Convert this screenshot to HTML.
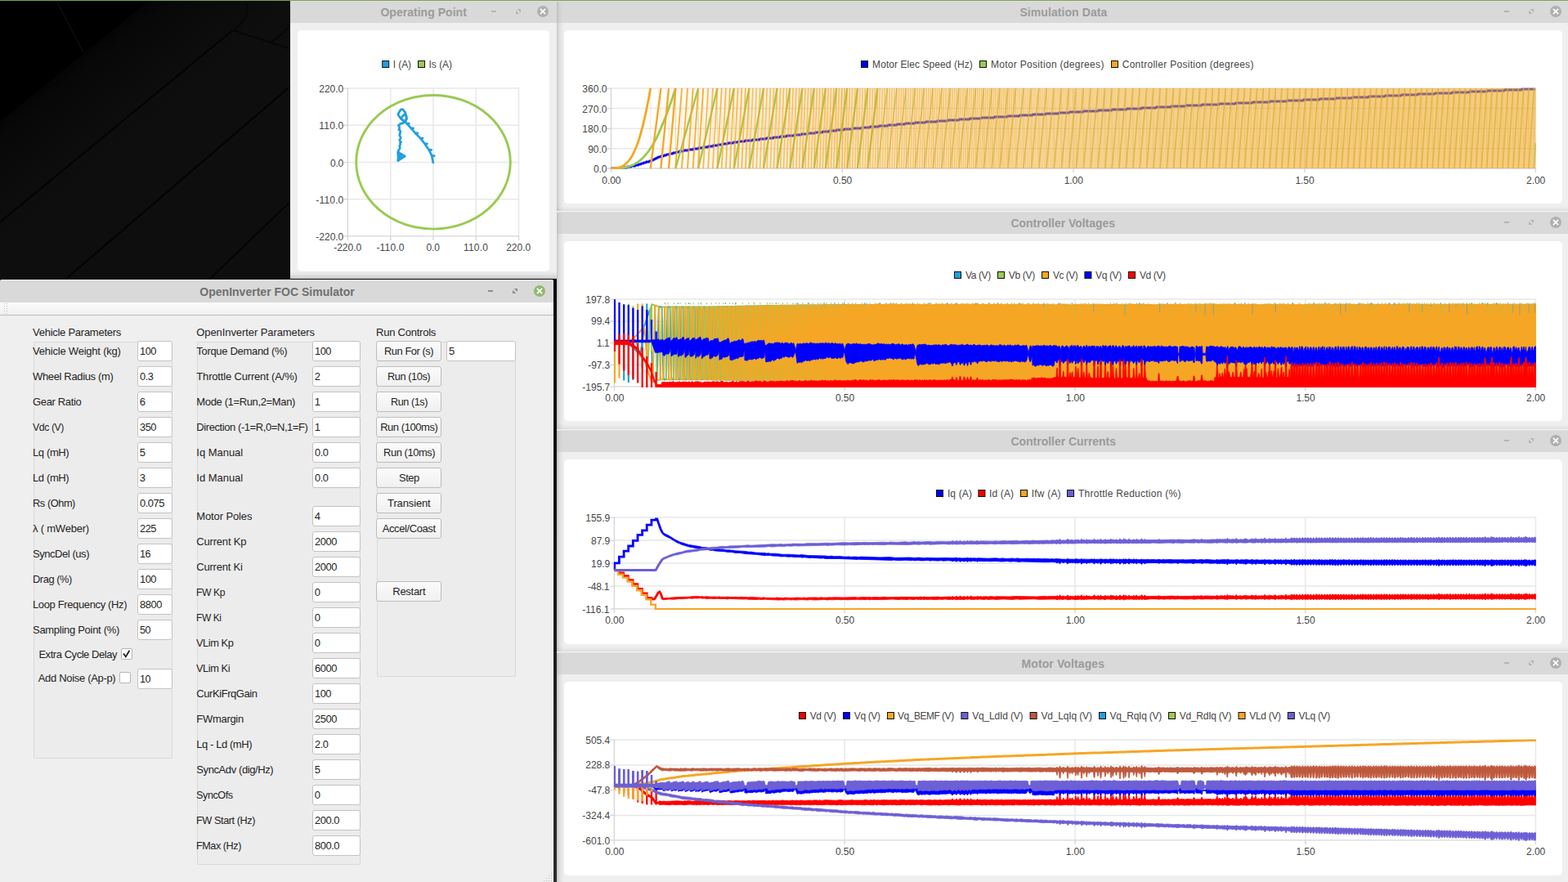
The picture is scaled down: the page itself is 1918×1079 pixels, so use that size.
<!DOCTYPE html>
<html lang="en"><head><meta charset="utf-8"><title>OpenInverter FOC Simulator</title>
<style>
html,body{margin:0;padding:0;background:#000;}
body{width:1918px;height:1079px;overflow:hidden;position:relative;font-family:"Liberation Sans", sans-serif;}
.t{position:absolute;white-space:nowrap;line-height:16px;height:16px;font-size:13px;color:#1e1e1e;transform-origin:0 50%;}
.in{position:absolute;box-sizing:border-box;background:#fff;border:1px solid #c3c3c3;border-radius:3px;}
.btn{position:absolute;box-sizing:border-box;background:linear-gradient(#fbfbfb,#f0f0f0);border:1px solid #bcbcbc;border-radius:3px;}
.grp{position:absolute;box-sizing:border-box;background:#ececec;border:1px solid #d9d9d9;border-radius:2px;}
svg{position:absolute;left:0;top:0;overflow:visible;}
</style></head>
<body>
<svg width="1918" height="1079" viewBox="0 0 1918 1079"><defs><linearGradient id="wg" gradientUnits="userSpaceOnUse" x1="60" y1="60" x2="150" y2="170"><stop offset="0" stop-color="#000"/><stop offset="0.35" stop-color="#080808"/><stop offset="1" stop-color="#0e0e0e"/></linearGradient></defs><rect x="0" y="0" width="1918" height="1079" fill="#000"/><path d="M182 1 L356 1 L356 342 L0 342 L0 149 Z" fill="url(#wg)"/><path d="M0 272 L285 37" stroke="#040404" stroke-width="2.4" fill="none"/><path d="M80 342 L356 105" stroke="#040404" stroke-width="2.4" fill="none"/><path d="M256 342 L356 246" stroke="#040404" stroke-width="2.4" fill="none"/><path d="M1 273.5 L286 38.5 M81 343.5 L357 106.5 M257 343.5 L357 247.5" stroke="#141414" stroke-width="0.8" fill="none"/><path d="M69 1 L102 64" stroke="#1a1a1a" stroke-width="0.8" fill="none"/><path d="M285 37 Q310 20 300 1 M285 37 L356 60 M330 52 Q350 40 356 28" stroke="#070707" stroke-width="2" fill="none"/></svg>
<div style="position:absolute;left:676px;top:341px;width:6px;height:738px;background:linear-gradient(#0b0b0b,#141414 40%,#2c2c2c);"></div>
<div style="position:absolute;left:355px;top:341px;width:330px;height:1px;background:#050505;"></div>
<div style="position:absolute;left:681px;top:1px;width:1237px;height:1078px;background:#efefef;"></div>
<div style="position:absolute;left:355px;top:1px;width:326px;height:340px;background:#efefef;"></div>
<div style="position:absolute;left:355px;top:331px;width:326px;height:10px;background:linear-gradient(rgba(0,0,0,0),rgba(0,0,0,0.04) 45%,rgba(0,0,0,0.17));"></div>
<div style="position:absolute;left:681px;top:1px;width:9px;height:1078px;background:linear-gradient(90deg,rgba(0,0,0,0.18),rgba(0,0,0,0.08) 30%,rgba(0,0,0,0.02) 75%,rgba(0,0,0,0) 100%);"></div>
<div style="position:absolute;left:355px;top:1px;width:326px;height:27px;background:#d9d9d9;box-shadow:inset 0 1px 0 #dfdfdf;"></div>
<div style="position:absolute;left:681px;top:1px;width:1237px;height:27px;background:#d9d9d9;box-shadow:inset 0 1px 0 #dfdfdf;background:linear-gradient(90deg,#bdbdbd 0,#d2d2d2 3px,#d9d9d9 8px);"></div>
<div style="position:absolute;left:681px;top:259px;width:1237px;height:27px;background:#d9d9d9;box-shadow:inset 0 1px 0 #dfdfdf;background:linear-gradient(90deg,#bdbdbd 0,#d2d2d2 3px,#d9d9d9 8px);"></div>
<div style="position:absolute;left:681px;top:526px;width:1237px;height:27px;background:#d9d9d9;box-shadow:inset 0 1px 0 #dfdfdf;background:linear-gradient(90deg,#bdbdbd 0,#d2d2d2 3px,#d9d9d9 8px);"></div>
<div style="position:absolute;left:681px;top:798px;width:1237px;height:27px;background:#d9d9d9;box-shadow:inset 0 1px 0 #dfdfdf;background:linear-gradient(90deg,#bdbdbd 0,#d2d2d2 3px,#d9d9d9 8px);"></div>
<div style="position:absolute;left:681px;top:251px;width:1237px;height:7px;background:linear-gradient(rgba(0,0,0,0),rgba(0,0,0,0.025) 50%,rgba(0,0,0,0.075));"></div>
<div style="position:absolute;left:681px;top:258px;width:1237px;height:1px;background:#f4f4f4;"></div>
<div style="position:absolute;left:681px;top:518px;width:1237px;height:7px;background:linear-gradient(rgba(0,0,0,0),rgba(0,0,0,0.025) 50%,rgba(0,0,0,0.075));"></div>
<div style="position:absolute;left:681px;top:525px;width:1237px;height:1px;background:#f4f4f4;"></div>
<div style="position:absolute;left:681px;top:790px;width:1237px;height:7px;background:linear-gradient(rgba(0,0,0,0),rgba(0,0,0,0.025) 50%,rgba(0,0,0,0.075));"></div>
<div style="position:absolute;left:681px;top:797px;width:1237px;height:1px;background:#f4f4f4;"></div>
<div style="position:absolute;left:364px;top:37px;width:308px;height:295px;background:#fff;border-radius:5px;"></div>
<div style="position:absolute;left:690px;top:37px;width:1221px;height:212px;background:#fff;border-radius:5px;"></div>
<div style="position:absolute;left:690px;top:295px;width:1221px;height:220px;background:#fff;border-radius:5px;"></div>
<div style="position:absolute;left:690px;top:562px;width:1221px;height:226px;background:#fff;border-radius:5px;"></div>
<div style="position:absolute;left:690px;top:834px;width:1221px;height:237px;background:#fff;border-radius:5px;"></div>
<div style="position:absolute;left:0px;top:342px;width:677px;height:737px;background:#efefef;box-shadow:inset -1px 0 0 #fbfbfb;border-radius:3px 3px 0 0;"></div>
<div style="position:absolute;left:0px;top:342px;width:677px;height:28px;background:#d9d9d9;box-shadow:inset 0 1px 0 #ececec;border-radius:3px 3px 0 0;"></div>
<div style="position:absolute;left:0px;top:370px;width:677px;height:15px;background:linear-gradient(#fafafa,#f1f1f1);"></div>
<div style="position:absolute;left:0px;top:385px;width:677px;height:1px;background:#bdbdbd;"></div>
<svg width="1918" height="1079" viewBox="0 0 1918 1079"><rect x="5" y="371" width="1" height="1" fill="#c2c2c2"/><rect x="5" y="374" width="1" height="1" fill="#c2c2c2"/><rect x="5" y="377" width="1" height="1" fill="#c2c2c2"/><rect x="5" y="380" width="1" height="1" fill="#c2c2c2"/><rect x="5" y="383" width="1" height="1" fill="#c2c2c2"/><rect x="8" y="371" width="1" height="1" fill="#c2c2c2"/><rect x="8" y="374" width="1" height="1" fill="#c2c2c2"/><rect x="8" y="377" width="1" height="1" fill="#c2c2c2"/><rect x="8" y="380" width="1" height="1" fill="#c2c2c2"/><rect x="8" y="383" width="1" height="1" fill="#c2c2c2"/><rect x="674" y="1077" width="1" height="1" fill="#bcbcbc"/><rect x="674" y="1074" width="1" height="1" fill="#bcbcbc"/><rect x="674" y="1071" width="1" height="1" fill="#bcbcbc"/><rect x="674" y="1068" width="1" height="1" fill="#bcbcbc"/><rect x="671" y="1077" width="1" height="1" fill="#bcbcbc"/><rect x="671" y="1074" width="1" height="1" fill="#bcbcbc"/><rect x="671" y="1071" width="1" height="1" fill="#bcbcbc"/><rect x="668" y="1077" width="1" height="1" fill="#bcbcbc"/><rect x="668" y="1074" width="1" height="1" fill="#bcbcbc"/><rect x="665" y="1077" width="1" height="1" fill="#bcbcbc"/></svg>
<div class="t" id="t1" style="left:465.4px;top:6.95px;font-size:14px;color:#9b9b9b;letter-spacing:0.029px;font-weight:bold;">Operating Point</div>
<div class="t" id="t2" style="left:1247.4px;top:6.95px;font-size:14px;color:#9b9b9b;letter-spacing:0.079px;font-weight:bold;">Simulation Data</div>
<div class="t" id="t3" style="left:1236.5px;top:264.95px;font-size:14px;color:#9b9b9b;letter-spacing:-0.033px;font-weight:bold;">Controller Voltages</div>
<div class="t" id="t4" style="left:1236.5px;top:531.85px;font-size:14px;color:#9b9b9b;letter-spacing:-0.035px;font-weight:bold;">Controller Currents</div>
<div class="t" id="t5" style="left:1249.5px;top:803.95px;font-size:14px;color:#9b9b9b;letter-spacing:0.109px;font-weight:bold;">Motor Voltages</div>
<div class="t" id="t6" style="left:244.3px;top:348.95px;font-size:14px;color:#6f6f6f;letter-spacing:0.014px;font-weight:bold;">OpenInverter FOC Simulator</div>
<svg width="1918" height="1079" viewBox="0 0 1918 1079"><rect x="600.9" y="13" width="6" height="2" fill="#b4b4b4"/><path d="M632.7 11 h4.3 v4.3z M635.3 17 h-4.3 v-4.3z" fill="#b4b4b4"/><circle cx="664" cy="14" r="7" fill="#b0b0b0"/><path d="M660.9 10.9 l6.2 6.2 M667.1 10.9 l-6.2 6.2" stroke="#fff" stroke-width="1.6" fill="none"/><rect x="1839.9" y="13" width="6" height="2" fill="#b4b4b4"/><path d="M1871.7 11 h4.3 v4.3z M1874.3 17 h-4.3 v-4.3z" fill="#b4b4b4"/><circle cx="1903" cy="14" r="7" fill="#b0b0b0"/><path d="M1899.9 10.9 l6.2 6.2 M1906.1 10.9 l-6.2 6.2" stroke="#fff" stroke-width="1.6" fill="none"/><rect x="1839.9" y="271" width="6" height="2" fill="#b4b4b4"/><path d="M1871.7 269 h4.3 v4.3z M1874.3 275 h-4.3 v-4.3z" fill="#b4b4b4"/><circle cx="1903" cy="272" r="7" fill="#b0b0b0"/><path d="M1899.9 268.9 l6.2 6.2 M1906.1 268.9 l-6.2 6.2" stroke="#fff" stroke-width="1.6" fill="none"/><rect x="1839.9" y="538" width="6" height="2" fill="#b4b4b4"/><path d="M1871.7 536 h4.3 v4.3z M1874.3 542 h-4.3 v-4.3z" fill="#b4b4b4"/><circle cx="1903" cy="539" r="7" fill="#b0b0b0"/><path d="M1899.9 535.9 l6.2 6.2 M1906.1 535.9 l-6.2 6.2" stroke="#fff" stroke-width="1.6" fill="none"/><rect x="1839.9" y="810" width="6" height="2" fill="#b4b4b4"/><path d="M1871.7 808 h4.3 v4.3z M1874.3 814 h-4.3 v-4.3z" fill="#b4b4b4"/><circle cx="1903" cy="811" r="7" fill="#b0b0b0"/><path d="M1899.9 807.9 l6.2 6.2 M1906.1 807.9 l-6.2 6.2" stroke="#fff" stroke-width="1.6" fill="none"/><rect x="597" y="355" width="6" height="2" fill="#8c8c8c"/><path d="M628.7 353 h4.3 v4.3z M631.3 359 h-4.3 v-4.3z" fill="#8c8c8c"/><circle cx="660" cy="356" r="7" fill="#92b872"/><path d="M656.9 352.9 l6.2 6.2 M663.1 352.9 l-6.2 6.2" stroke="#fff" stroke-width="1.6" fill="none"/></svg>
<div style="position:absolute;left:0px;top:0px;width:1918px;height:1px;background:#7ea24e;"></div>
<svg width="1918" height="1079" viewBox="0 0 1918 1079"><path d="M425.5 108.1H635M425.5 153.3H635M425.5 198.6H635M425.5 243.8H635M477.8 108V289.5M530 108V289.5M582.2 108V289.5M634.5 108V289.5" stroke="#e8e8e8" stroke-width="1.5" fill="none"/>
<path d="M425.4 107.5V294M420.5 288.9H635.1M420.2 108.1h5M420.2 153.3h5M420.2 198.6h5M420.2 243.8h5M477.8 289v5M530 289v5M582.2 289v5M634.5 289v5" stroke="#d6d6d6" stroke-width="1.4" fill="none"/>
<clipPath id="c0"><rect x="424.7" y="107.5" width="210.5" height="182.4"/></clipPath>
<g clip-path="url(#c0)" fill="none" stroke-width="2" stroke-linejoin="round">
<path d="M529.8 198.9l-1.6-8.5l3 0.2l-2.4 0.7l-0.6-0.9l-3.6-7.2l3 0.2l-2.4 0.7l-0.6-0.9l-5.2-7.5l3 0.2l-2.4 0.7l-0.6-0.9l-5.4-6.8l3 0.2l-2.4 0.7l-0.6-0.9l-6.1-6.2l3 0.2l-2.4 0.7l-0.6-0.9l-5.3-6.1l3 0.2l-2.4 0.7l-0.6-0.9l-5.2-5.7l3 0.2l-2.4 0.7l-0.6-0.9l-3.5-3l-3.5-3.5l5-5.2l2.4 5.8l-3.2 3.6l-4.3-3.4l-3.5-5.2l3.4-6l2.2-0.4l3.2 3.8l1.7 5.2l-0.9 5.7l-3.2 2.1l-3.6 1.2l-2.2 2h0.4l0.7 1.6l0.2 1.7l-0.9 1.7l1.9 1.4l0.1 1.4l-0.6 1.1l0.3 1.1l-0.9 1.4l0.5 1.1l0.9 1.7l0.1 1.1l-0.3 1l-1.1 1l0.5 1.7l1.4 1.1l-1.2 1.7l0.2 1.7l-0.9 1.5l0.5 1.8l-0.1 1.7l-1.3 1.2l-0.5 1.1l0.2 0.9l-0.7 1.5l0.5 1.5l0.9 1.2l-1 1.3l0.7 1.3l0.5 1l-0.4 0.9l-1.4 1.7l0.8 0.7l-0.8-10.4l8.7 5.2l-8.5 5.4l3.2-7.6l-3 4l5-1.5l-4.8 4.5" stroke="#209fdf" stroke-width="2.7" stroke-linejoin="round" stroke-linecap="round"/>
<path d="M486.4 197.2L486.4 185.4L496 191.2z" fill="#209fdf" stroke="none"/>
<ellipse cx="530" cy="198.3" rx="94.3" ry="81.8" stroke="#99ca53" stroke-width="2.9"/>
</g>
<rect x="467.7" y="74.5" width="8" height="8" fill="#209fdf" stroke="#111" stroke-width="1"/>
<rect x="511.5" y="74.5" width="8" height="8" fill="#99ca53" stroke="#111" stroke-width="1"/></svg>
<div class="t" id="t7" style="left:480.7px;top:70.64px;font-size:12px;color:#464646;letter-spacing:-0.068px;">I (A)</div>
<div class="t" id="t8" style="left:524.5px;top:70.64px;font-size:12px;color:#464646;letter-spacing:-0.014px;">Is (A)</div>
<div class="t" id="t9" style="left:390.26px;top:100.64px;font-size:12px;color:#464646;letter-spacing:0.002px;">220.0</div>
<div class="t" id="t10" style="left:390.26px;top:146.19px;font-size:12px;color:#464646;letter-spacing:0.225px;">110.0</div>
<div class="t" id="t11" style="left:403.98px;top:191.84px;font-size:12px;color:#464646;letter-spacing:-0.184px;">0.0</div>
<div class="t" id="t12" style="left:386.36px;top:237.09px;font-size:12px;color:#464646;letter-spacing:0.16px;">-110.0</div>
<div class="t" id="t13" style="left:386.36px;top:281.84px;font-size:12px;color:#464646;letter-spacing:-0.018px;">-220.0</div>
<div class="t" id="t14" style="left:408.23px;top:295.44px;font-size:12px;color:#464646;letter-spacing:-0.018px;">-220.0</div>
<div class="t" id="t15" style="left:460.48px;top:295.44px;font-size:12px;color:#464646;letter-spacing:0.16px;">-110.0</div>
<div class="t" id="t16" style="left:521.54px;top:295.44px;font-size:12px;color:#464646;letter-spacing:-0.184px;">0.0</div>
<div class="t" id="t17" style="left:566.93px;top:295.44px;font-size:12px;color:#464646;letter-spacing:0.225px;">110.0</div>
<div class="t" id="t18" style="left:619.18px;top:295.44px;font-size:12px;color:#464646;letter-spacing:0.002px;">220.0</div>
<svg width="1918" height="1079" viewBox="0 0 1918 1079"><path d="M747.6 108.1H1878.9M747.6 132.6H1878.9M747.6 157.2H1878.9M747.6 181.7H1878.9M1030.3 108V206.6M1313 108V206.6M1595.7 108V206.6M1878.4 108V206.6" stroke="#e8e8e8" stroke-width="1.5" fill="none"/>
<path d="M747.5 107.5V211.1M742.6 206H1879M742.3 108.1h5M742.3 132.6h5M742.3 157.2h5M742.3 181.7h5M1030.3 206.1v5M1313 206.1v5M1595.7 206.1v5M1878.4 206.1v5" stroke="#d6d6d6" stroke-width="1.4" fill="none"/>
<clipPath id="c1"><rect x="746.8" y="107.5" width="1132.3" height="99.5"/></clipPath>
<g clip-path="url(#c1)" fill="none" stroke-width="2" stroke-linejoin="round">
<path d="M747.6 206h1h1h1h1h1h1h1h1h1h1h1h1l1-1h1h1h1h1h1h1l1-1h1h1h1h1l1-1h1h1h1h1l1-1h1h1h1l1-1h1h1l1-1h1h1l1-1h1h1l1-1h1h1h1l1-1h1h1l1-1h1l1-1h1l1-1h1l1-1h1l1-1h1h1l1-1h1h1h1l1-1h1h1l1-1h1h1h1l1-1h1h1h1l1-1h1h1h1l1-1h1h1h1l1-1h1h1h1h1l1-1h1h1h1h1h1l1-1h1h1h1h1h1l1-1h1h1h1h1h1l1-1h1h1h1h1h1l1-1h1h1h1h1h1l1-1h1h1h1h1h1l1-1h1h1h1h1h1l1-1h1h1h1h1h1l1-1h1h1h1h1h1l1-1h1h1h1h1h1h1l1-1h1h1h1h1h1l1-1h1h1h1h1h1h1h1l1-1h1h1h1h1h1h1h1h1l1-1h1h1h1h1h1h1h1h1l1-1h1h1h1h1h1h1h1l1-1h1h1h1h1h1h1h1h1l1-1h1h1h1h1h1h1h1l1-1h1h1h1h1h1h1h1l1-1h1h1h1h1h1h1h1h1l1-1h1h1h1h1h1h1h1h1l1-1h1h1h1h1h1h1h1l1-1h1h1h1h1h1h1h1h1l1-1h1h1h1h1h1h1h1h1l1-1h1h1h1h1h1h1h1l1-1h1h1h1h1h1h1h1h1l1-1h1h1h1h1h1h1h1h1l1-1h1h1h1h1h1h1h1h1h1h1l1-1h1h1h1h1h1h1h1h1h1h1l1-1h1h1h1h1h1h1h1h1h1l1-1h1h1h1h1h1h1h1h1h1h1l1-1h1h1h1h1h1h1h1h1h1h1l1-1h1h1h1h1h1h1h1h1h1h1l1-1h1h1h1h1h1h1h1h1h1l1-1h1h1h1h1h1h1h1h1h1h1h1l1-1h1h1h1h1h1h1h1h1h1h1h1h1l1-1h1h1h1h1h1h1h1h1h1h1h1h1h1l1-1h1h1h1h1h1h1h1h1h1h1h1h1l1-1h1h1h1h1h1h1h1h1h1h1h1h1h1l1-1h1h1h1h1h1h1h1h1h1h1h1h1l1-1h1h1h1h1h1h1h1h1h1h1h1h1h1l1-1h1h1h1h1h1h1h1h1h1h1h1h1h1h1h1l1-1h1h1h1h1h1h1h1h1h1h1h1h1h1h1h1l1-1h1h1h1h1h1h1h1h1h1h1h1h1h1h1l1-1h1h1h1h1h1h1h1h1h1h1h1h1h1h1h1l1-1h1h1h1h1h1h1h1h1h1h1h1h1h1h1h1l1-1h1h1h1h1h1h1h1h1h1h1h1h1h1h1h1l1-1h1h1h1h1h1h1h1h1h1h1h1h1l1-1h1h1h1h1h1h1h1h1h1h1h1h1h1h1h1h1l1-1h1h1h1h1h1h1h1h1h1h1h1h1h1h1h1h1h1l1-1h1h1h1h1h1h1h1h1h1h1h1h1h1h1h1h1l1-1h1h1h1h1h1h1h1h1h1h1h1h1h1h1h1h1h1l1-1h1h1h1h1h1h1h1h1h1h1h1h1h1h1h1h1h1l1-1h1h1h1h1h1h1h1h1h1h1h1h1h1h1h1h1h1l1-1h1h1h1h1h1h1h1h1h1h1h1h1h1h1h1h1h1l1-1h1h1h1h1h1h1h1h1h1h1h1h1h1h1h1h1h1l1-1h1h1h1h1h1h1h1h1h1h1h1h1h1h1h1h1h1h1h1l1-1h1h1h1h1h1h1h1h1h1h1h1h1h1h1h1h1h1h1h1h1l1-1h1h1h1h1h1h1h1h1h1h1h1h1h1h1h1h1h1h1h1l1-1h1h1h1h1h1h1h1h1h1h1h1h1h1h1h1h1h1h1h1h1l1-1h1h1h1h1h1h1h1h1h1h1h1h1h1h1h1h1h1h1h1h1l1-1h1h1h1h1h1h1h1h1h1h1h1h1h1h1h1h1h1h1h1h1l1-1h1h1h1h1h1h1h1h1h1h1h1h1h1h1h1h1h1h1h1l1-1h1h1h1h1h1h1h1h1h1h1h1h1h1h1h1h1h1h1h1l1-1h1h1h1h1h1h1h1h1h1h1h1h1h1h1h1h1h1h1h1l1-1h1h1h1h1h1h1h1h1h1h1h1h1h1h1h1h1h1h1h1l1-1h1h1h1h1h1h1h1h1h1h1h1h1h1h1h1h1h1h1h1l1-1h1h1h1h1h1h1h1h1h1h1h1h1h1h1h1h1h1h1h1l1-1h1h1h1h1h1h1h1h1h1h1h1h1h1h1h1h1h1h1h1l1-1h1h1h1h1h1h1h1h1h1h1h1h1h1h1h1h1h1h1h1l1-1h1h1h1h1h1h1h1h1h1h1h1h1h1h1h1h1h1h1h1h1l1-1h1h1h1h1h1h1h1h1h1h1h1h1h1h1h1h1h1h1h1h1l1-1h1h1h1h1h1h1h1h1h1h1h1h1h1h1h1h1h1h1h1h1l1-1h1h1h1h1h1h1h1h1h1h1h1h1h1h1h1h1h1h1h1h1h1l1-1h1h1h1h1h1h1h1h1h1h1h1h1h1h1h1h1h1h1h1h1l1-1h1h1h1h1h1h1h1h1h1h1h1h1h1h1h1h1h1h1h1h1l1-1h1h1h1h1h1h1h1h1h1h1h1h1h1h1h1h1" stroke="#0000ff" stroke-width="2.8" stroke-linejoin="miter"/>
<path d="M747.6 206.1h1.3h1.3l1.3-0.1h1.4h1.3l1.3-0.1l1.3-0.1l1.3-0.1l1.3-0.1l1.3-0.1l1.3-0.2l1.4-0.2l1.3-0.3l1.3-0.2l1.3-0.4l1.3-0.3l1.3-0.4l1.3-0.5l1.4-0.5l1.3-0.6l1.3-0.6l1.3-0.7l1.3-0.8l1.3-0.8l1.3-0.9l1.3-1l1.4-1l1.3-1.2l1.3-1.2l1.3-1.3l1.3-1.4l1.3-1.5l1.3-1.6l1.4-1.6l1.3-1.8l1.3-1.8l1.3-1.9l1.3-2l1.3-2.2l1.3-2.3l1.4-2.4l1.3-2.6l1.3-2.7l1.3-2.8l1.3-3l1.3-3l1.3-3l1.3-3.2l1.4-3.2l1.3-3.3l1.3-3.4l1.3-3.5l1.3-3.5l1.3-3.6l1.3-3.7l1.4-3.7l1.3-3.8l1.3-3.9l1.3-4l1.3-4" stroke="#99ca53" stroke-width="2.8"/>
<path d="M826.4 206.1L854.1 108M854.1 206.1L877.4 108M877.4 206.1L897.8 108M897.8 206.1L916.4 108M916.4 206.1L934 108M934 206.1L950.5 108M950.5 206.1L966.3 108M966.3 206.1L981.4 108M981.4 206.1L995.8 108M995.8 206.1L1009.8 108M1009.8 206.1L1023.2 108M1023.2 206.1L1036.2 108M1036.2 206.1L1048.9 108M1048.9 206.1L1061.3 108M1061.3 206.1L1073.4 108" stroke="#99ca53" stroke-width="2.3"/>
<path d="M1073.4 206.1L1085.3 108M1085.3 206.1L1096.9 108M1096.9 206.1L1108.3 108M1108.3 206.1L1119.4 108M1119.4 206.1L1130.4 108M1130.4 206.1L1141.3 108M1141.3 206.1L1152 108M1152 206.1L1162.5 108M1162.5 206.1L1172.9 108M1172.9 206.1L1183.2 108M1183.2 206.1L1193.4 108M1193.4 206.1L1203.4 108M1203.4 206.1L1213.3 108M1213.3 206.1L1223.1 108M1223.1 206.1L1232.8 108M1232.8 206.1L1242.5 108M1242.5 206.1L1252 108M1252 206.1L1261.5 108M1261.5 206.1L1270.8 108M1270.8 206.1L1280.1 108M1280.1 206.1L1289.3 108M1289.3 206.1L1298.4 108M1298.4 206.1L1307.5 108M1307.5 206.1L1316.4 108M1316.4 206.1L1325.3 108M1325.3 206.1L1334.1 108M1334.1 206.1L1342.9 108M1342.9 206.1L1351.6 108M1351.6 206.1L1360.2 108M1360.2 206.1L1368.8 108M1368.8 206.1L1377.3 108M1377.3 206.1L1385.8 108M1385.8 206.1L1394.2 108M1394.2 206.1L1402.6 108M1402.6 206.1L1410.9 108M1410.9 206.1L1419.1 108M1419.1 206.1L1427.3 108M1427.3 206.1L1435.5 108M1435.5 206.1L1443.6 108M1443.6 206.1L1451.7 108M1451.7 206.1L1459.7 108M1459.7 206.1L1467.7 108M1467.7 206.1L1475.6 108M1475.6 206.1L1483.5 108M1483.5 206.1L1491.3 108M1491.3 206.1L1499.2 108M1499.2 206.1L1506.9 108M1506.9 206.1L1514.7 108M1514.7 206.1L1522.4 108M1522.4 206.1L1530.1 108M1530.1 206.1L1537.7 108M1537.7 206.1L1545.3 108M1545.3 206.1L1552.9 108M1552.9 206.1L1560.4 108M1560.4 206.1L1567.9 108M1567.9 206.1L1575.4 108M1575.4 206.1L1582.8 108M1582.8 206.1L1590.2 108M1590.2 206.1L1597.6 108M1597.6 206.1L1605 108M1605 206.1L1612.3 108M1612.3 206.1L1619.5 108M1619.5 206.1L1626.8 108M1626.8 206.1L1634 108M1634 206.1L1641.2 108M1641.2 206.1L1648.4 108M1648.4 206.1L1655.5 108M1655.5 206.1L1662.6 108M1662.6 206.1L1669.6 108M1669.6 206.1L1676.7 108M1676.7 206.1L1683.7 108M1683.7 206.1L1690.7 108M1690.7 206.1L1697.6 108M1697.6 206.1L1704.6 108M1704.6 206.1L1711.5 108M1711.5 206.1L1718.3 108M1718.3 206.1L1725.2 108M1725.2 206.1L1732 108M1732 206.1L1738.8 108M1738.8 206.1L1745.6 108M1745.6 206.1L1752.3 108M1752.3 206.1L1759.1 108M1759.1 206.1L1765.8 108M1765.8 206.1L1772.4 108M1772.4 206.1L1779.1 108M1779.1 206.1L1785.7 108M1785.7 206.1L1792.4 108M1792.4 206.1L1798.9 108M1798.9 206.1L1805.5 108M1805.5 206.1L1812.1 108M1812.1 206.1L1818.6 108M1818.6 206.1L1825.1 108M1825.1 206.1L1831.6 108M1831.6 206.1L1838 108M1838 206.1L1844.5 108M1844.5 206.1L1850.9 108M1850.9 206.1L1857.3 108M1857.3 206.1L1863.7 108M1863.7 206.1L1870 108M1870 206.1L1876.4 108M1876.4 206.1L1878.4 174.9" stroke="#99ca53" stroke-width="1.6" stroke-opacity="0.75"/>
<path d="M826.4 108V206.1M854.1 108V206.1M877.4 108V206.1M897.8 108V206.1M916.4 108V206.1M934 108V206.1M950.5 108V206.1M966.3 108V206.1M981.4 108V206.1M995.8 108V206.1M1009.8 108V206.1M1023.2 108V206.1M1036.2 108V206.1M1048.9 108V206.1M1061.3 108V206.1M1073.4 108V206.1M1085.3 108V206.1M1096.9 108V206.1M1108.3 108V206.1M1119.4 108V206.1M1130.4 108V206.1M1141.3 108V206.1M1152 108V206.1M1162.5 108V206.1M1172.9 108V206.1M1183.2 108V206.1M1193.4 108V206.1M1203.4 108V206.1M1213.3 108V206.1M1223.1 108V206.1M1232.8 108V206.1M1242.5 108V206.1M1252 108V206.1M1261.5 108V206.1M1270.8 108V206.1M1280.1 108V206.1M1289.3 108V206.1M1298.4 108V206.1M1307.5 108V206.1M1316.4 108V206.1M1325.3 108V206.1M1334.1 108V206.1M1342.9 108V206.1M1351.6 108V206.1M1360.2 108V206.1M1368.8 108V206.1M1377.3 108V206.1M1385.8 108V206.1M1394.2 108V206.1M1402.6 108V206.1M1410.9 108V206.1M1419.1 108V206.1M1427.3 108V206.1M1435.5 108V206.1M1443.6 108V206.1M1451.7 108V206.1M1459.7 108V206.1M1467.7 108V206.1M1475.6 108V206.1M1483.5 108V206.1M1491.3 108V206.1M1499.2 108V206.1M1506.9 108V206.1M1514.7 108V206.1M1522.4 108V206.1M1530.1 108V206.1M1537.7 108V206.1M1545.3 108V206.1M1552.9 108V206.1M1560.4 108V206.1M1567.9 108V206.1M1575.4 108V206.1M1582.8 108V206.1M1590.2 108V206.1M1597.6 108V206.1M1605 108V206.1M1612.3 108V206.1M1619.5 108V206.1M1626.8 108V206.1M1634 108V206.1M1641.2 108V206.1M1648.4 108V206.1M1655.5 108V206.1M1662.6 108V206.1M1669.6 108V206.1M1676.7 108V206.1M1683.7 108V206.1M1690.7 108V206.1M1697.6 108V206.1M1704.6 108V206.1M1711.5 108V206.1M1718.3 108V206.1M1725.2 108V206.1M1732 108V206.1M1738.8 108V206.1M1745.6 108V206.1M1752.3 108V206.1M1759.1 108V206.1M1765.8 108V206.1M1772.4 108V206.1M1779.1 108V206.1M1785.7 108V206.1M1792.4 108V206.1M1798.9 108V206.1M1805.5 108V206.1M1812.1 108V206.1M1818.6 108V206.1M1825.1 108V206.1M1831.6 108V206.1M1838 108V206.1M1844.5 108V206.1M1850.9 108V206.1M1857.3 108V206.1M1863.7 108V206.1M1870 108V206.1M1876.4 108V206.1" stroke="#99ca53" stroke-width="1.4" stroke-opacity="0.25"/>
<path d="M747.6 206.1h0.8h0.8l0.8-0.1h0.8l0.8-0.1l0.8-0.1l0.8-0.1l0.8-0.2l0.8-0.1l0.8-0.2l0.8-0.2l0.8-0.2l0.8-0.2l0.8-0.2l0.8-0.3l0.8-0.3l0.8-0.4l0.8-0.5l0.8-0.5l0.8-0.5l0.8-0.6l0.8-0.7l0.8-0.7l0.8-0.8l0.8-0.8l0.8-0.9l0.8-0.9l0.8-1l0.8-1.1l0.8-1.2l0.8-1.2l0.8-1.4l0.8-1.4l0.8-1.6l0.8-1.6l0.8-1.8l0.8-1.8l0.8-1.9l0.8-2l0.8-2.2l0.8-2.2l0.8-2.3l0.8-2.5l0.8-2.6l0.8-2.7l0.8-2.8l0.8-3l0.8-3.1l0.8-3.2l0.8-3.4l0.8-3.5l0.8-3.6l0.8-3.7l0.8-3.9l0.8-4l0.8-4.1l0.9-4.2l0.8-4.4l0.8-4.5l0.8-4.6" stroke="#f6a625" stroke-width="2.8"/>
<linearGradient id="og" gradientUnits="userSpaceOnUse" x1="795.7" y1="0" x2="1878.4" y2="0"><stop offset="0" stop-color="#f6a625" stop-opacity="0"/><stop offset="0.08" stop-color="#f6a625" stop-opacity="0.1"/><stop offset="0.2" stop-color="#f6a625" stop-opacity="0.2"/><stop offset="1" stop-color="#f6a625" stop-opacity="0.2"/></linearGradient>
<rect x="795.7" y="108" width="1082.7" height="98.1" fill="url(#og)" stroke="none"/>
<path d="M795.7 206.1L808.4 108M808.4 206.1L818 108M818 206.1L826.4 108" stroke="#f6a625" stroke-width="2.3" stroke-opacity="1"/>
<path d="M826.4 206.1L834 108M834 206.1L841 108M841 206.1L847.7 108M847.7 206.1L854.1 108M854.1 206.1L860.2 108" stroke="#f6a625" stroke-width="1.8" stroke-opacity="0.9"/>
<path d="M860.2 206.1L866.2 108M866.2 206.1L871.9 108M871.9 206.1L877.4 108M877.4 206.1L882.7 108M882.7 206.1L887.9 108M887.9 206.1L892.9 108M892.9 206.1L897.8 108M897.8 206.1L902.6 108M902.6 206.1L907.3 108M907.3 206.1L911.9 108M911.9 206.1L916.4 108" stroke="#f6a625" stroke-width="1.7" stroke-opacity="0.75"/>
<path d="M916.4 206.1L920.9 108M920.9 206.1L925.3 108M925.3 206.1L929.7 108M929.7 206.1L934 108M934 206.1L938.2 108M938.2 206.1L942.4 108M942.4 206.1L946.5 108M946.5 206.1L950.5 108M950.5 206.1L954.6 108M954.6 206.1L958.5 108M958.5 206.1L962.4 108M962.4 206.1L966.3 108M966.3 206.1L970.1 108M970.1 206.1L973.9 108M973.9 206.1L977.7 108M977.7 206.1L981.4 108M981.4 206.1L985 108M985 206.1L988.7 108M988.7 206.1L992.3 108M992.3 206.1L995.8 108M995.8 206.1L999.4 108M999.4 206.1L1002.9 108M1002.9 206.1L1006.3 108M1006.3 206.1L1009.8 108M1009.8 206.1L1013.2 108M1013.2 206.1L1016.5 108M1016.5 206.1L1019.9 108M1019.9 206.1L1023.2 108M1023.2 206.1L1026.5 108M1026.5 206.1L1029.8 108M1029.8 206.1L1033 108M1033 206.1L1036.2 108M1036.2 206.1L1039.4 108" stroke="#f6a625" stroke-width="1.7" stroke-opacity="0.6"/>
<path d="M1039.4 206.1L1042.6 108M1042.6 206.1L1045.8 108M1045.8 206.1L1048.9 108M1048.9 206.1L1052 108M1052 206.1L1055.2 108M1055.2 206.1L1058.2 108M1058.2 206.1L1061.3 108M1061.3 206.1L1064.4 108M1064.4 206.1L1067.4 108M1067.4 206.1L1070.4 108M1070.4 206.1L1073.4 108M1073.4 206.1L1076.4 108M1076.4 206.1L1079.4 108M1079.4 206.1L1082.3 108M1082.3 206.1L1085.3 108M1085.3 206.1L1088.2 108M1088.2 206.1L1091.1 108M1091.1 206.1L1094 108M1094 206.1L1096.9 108M1096.9 206.1L1099.8 108M1099.8 206.1L1102.6 108M1102.6 206.1L1105.4 108M1105.4 206.1L1108.3 108M1108.3 206.1L1111.1 108M1111.1 206.1L1113.9 108M1113.9 206.1L1116.7 108M1116.7 206.1L1119.4 108M1119.4 206.1L1122.2 108M1122.2 206.1L1125 108M1125 206.1L1127.7 108M1127.7 206.1L1130.4 108M1130.4 206.1L1133.2 108M1133.2 206.1L1135.9 108M1135.9 206.1L1138.6 108M1138.6 206.1L1141.3 108M1141.3 206.1L1144 108M1144 206.1L1146.6 108M1146.6 206.1L1149.3 108M1149.3 206.1L1152 108M1152 206.1L1154.6 108M1154.6 206.1L1157.3 108M1157.3 206.1L1159.9 108M1159.9 206.1L1162.5 108M1162.5 206.1L1165.1 108M1165.1 206.1L1167.7 108M1167.7 206.1L1170.3 108M1170.3 206.1L1172.9 108M1172.9 206.1L1175.5 108M1175.5 206.1L1178.1 108M1178.1 206.1L1180.6 108M1180.6 206.1L1183.2 108M1183.2 206.1L1185.8 108M1185.8 206.1L1188.3 108M1188.3 206.1L1190.8 108M1190.8 206.1L1193.4 108M1193.4 206.1L1195.9 108M1195.9 206.1L1198.4 108M1198.4 206.1L1200.9 108M1200.9 206.1L1203.4 108M1203.4 206.1L1205.9 108M1205.9 206.1L1208.4 108M1208.4 206.1L1210.8 108M1210.8 206.1L1213.3 108M1213.3 206.1L1215.8 108M1215.8 206.1L1218.2 108M1218.2 206.1L1220.7 108M1220.7 206.1L1223.1 108M1223.1 206.1L1225.6 108M1225.6 206.1L1228 108M1228 206.1L1230.4 108M1230.4 206.1L1232.8 108M1232.8 206.1L1235.3 108M1235.3 206.1L1237.7 108M1237.7 206.1L1240.1 108" stroke="#f6a625" stroke-width="1.7" stroke-opacity="0.5"/>
<path d="M1240.1 206.1L1242.5 108M1242.5 206.1L1244.9 108M1244.9 206.1L1247.3 108M1247.3 206.1L1249.6 108M1249.6 206.1L1252 108M1252 206.1L1254.4 108M1254.4 206.1L1256.8 108M1256.8 206.1L1259.1 108M1259.1 206.1L1261.5 108M1261.5 206.1L1263.8 108M1263.8 206.1L1266.2 108M1266.2 206.1L1268.5 108M1268.5 206.1L1270.8 108M1270.8 206.1L1273.2 108M1273.2 206.1L1275.5 108M1275.5 206.1L1277.8 108M1277.8 206.1L1280.1 108M1280.1 206.1L1282.4 108M1282.4 206.1L1284.7 108M1284.7 206.1L1287 108M1287 206.1L1289.3 108M1289.3 206.1L1291.6 108M1291.6 206.1L1293.9 108M1293.9 206.1L1296.2 108M1296.2 206.1L1298.4 108M1298.4 206.1L1300.7 108M1300.7 206.1L1303 108M1303 206.1L1305.2 108M1305.2 206.1L1307.5 108M1307.5 206.1L1309.7 108M1309.7 206.1L1312 108M1312 206.1L1314.2 108M1314.2 206.1L1316.4 108M1316.4 206.1L1318.7 108M1318.7 206.1L1320.9 108M1320.9 206.1L1323.1 108M1323.1 206.1L1325.3 108M1325.3 206.1L1327.5 108M1327.5 206.1L1329.7 108M1329.7 206.1L1331.9 108M1331.9 206.1L1334.1 108M1334.1 206.1L1336.3 108M1336.3 206.1L1338.5 108M1338.5 206.1L1340.7 108M1340.7 206.1L1342.9 108M1342.9 206.1L1345.1 108M1345.1 206.1L1347.3 108M1347.3 206.1L1349.4 108M1349.4 206.1L1351.6 108M1351.6 206.1L1353.8 108M1353.8 206.1L1355.9 108M1355.9 206.1L1358.1 108M1358.1 206.1L1360.2 108M1360.2 206.1L1362.4 108M1362.4 206.1L1364.5 108M1364.5 206.1L1366.7 108M1366.7 206.1L1368.8 108M1368.8 206.1L1370.9 108M1370.9 206.1L1373.1 108M1373.1 206.1L1375.2 108M1375.2 206.1L1377.3 108M1377.3 206.1L1379.5 108M1379.5 206.1L1381.6 108M1381.6 206.1L1383.7 108M1383.7 206.1L1385.8 108M1385.8 206.1L1387.9 108M1387.9 206.1L1390 108M1390 206.1L1392.1 108M1392.1 206.1L1394.2 108M1394.2 206.1L1396.3 108M1396.3 206.1L1398.4 108M1398.4 206.1L1400.5 108M1400.5 206.1L1402.6 108M1402.6 206.1L1404.7 108M1404.7 206.1L1406.7 108M1406.7 206.1L1408.8 108M1408.8 206.1L1410.9 108M1410.9 206.1L1413 108M1413 206.1L1415 108M1415 206.1L1417.1 108M1417.1 206.1L1419.1 108M1419.1 206.1L1421.2 108M1421.2 206.1L1423.2 108M1423.2 206.1L1425.3 108M1425.3 206.1L1427.3 108M1427.3 206.1L1429.4 108M1429.4 206.1L1431.4 108M1431.4 206.1L1433.5 108M1433.5 206.1L1435.5 108M1435.5 206.1L1437.5 108M1437.5 206.1L1439.6 108M1439.6 206.1L1441.6 108M1441.6 206.1L1443.6 108M1443.6 206.1L1445.6 108M1445.6 206.1L1447.6 108M1447.6 206.1L1449.7 108M1449.7 206.1L1451.7 108M1451.7 206.1L1453.7 108M1453.7 206.1L1455.7 108M1455.7 206.1L1457.7 108M1457.7 206.1L1459.7 108M1459.7 206.1L1461.7 108M1461.7 206.1L1463.7 108M1463.7 206.1L1465.7 108M1465.7 206.1L1467.7 108M1467.7 206.1L1469.6 108M1469.6 206.1L1471.6 108M1471.6 206.1L1473.6 108M1473.6 206.1L1475.6 108M1475.6 206.1L1477.6 108M1477.6 206.1L1479.5 108M1479.5 206.1L1481.5 108M1481.5 206.1L1483.5 108M1483.5 206.1L1485.5 108M1485.5 206.1L1487.4 108M1487.4 206.1L1489.4 108M1489.4 206.1L1491.3 108M1491.3 206.1L1493.3 108M1493.3 206.1L1495.3 108M1495.3 206.1L1497.2 108M1497.2 206.1L1499.2 108M1499.2 206.1L1501.1 108M1501.1 206.1L1503.1 108M1503.1 206.1L1505 108M1505 206.1L1506.9 108M1506.9 206.1L1508.9 108M1508.9 206.1L1510.8 108M1510.8 206.1L1512.8 108M1512.8 206.1L1514.7 108M1514.7 206.1L1516.6 108M1516.6 206.1L1518.5 108M1518.5 206.1L1520.5 108M1520.5 206.1L1522.4 108M1522.4 206.1L1524.3 108M1524.3 206.1L1526.2 108M1526.2 206.1L1528.2 108M1528.2 206.1L1530.1 108M1530.1 206.1L1532 108M1532 206.1L1533.9 108M1533.9 206.1L1535.8 108M1535.8 206.1L1537.7 108M1537.7 206.1L1539.6 108M1539.6 206.1L1541.5 108M1541.5 206.1L1543.4 108M1543.4 206.1L1545.3 108M1545.3 206.1L1547.2 108M1547.2 206.1L1549.1 108M1549.1 206.1L1551 108M1551 206.1L1552.9 108M1552.9 206.1L1554.8 108M1554.8 206.1L1556.7 108M1556.7 206.1L1558.5 108M1558.5 206.1L1560.4 108M1560.4 206.1L1562.3 108M1562.3 206.1L1564.2 108M1564.2 206.1L1566.1 108M1566.1 206.1L1567.9 108M1567.9 206.1L1569.8 108M1569.8 206.1L1571.7 108M1571.7 206.1L1573.5 108M1573.5 206.1L1575.4 108M1575.4 206.1L1577.3 108M1577.3 206.1L1579.1 108M1579.1 206.1L1581 108M1581 206.1L1582.8 108M1582.8 206.1L1584.7 108M1584.7 206.1L1586.5 108M1586.5 206.1L1588.4 108M1588.4 206.1L1590.2 108M1590.2 206.1L1592.1 108M1592.1 206.1L1593.9 108M1593.9 206.1L1595.8 108M1595.8 206.1L1597.6 108M1597.6 206.1L1599.5 108M1599.5 206.1L1601.3 108M1601.3 206.1L1603.1 108M1603.1 206.1L1605 108M1605 206.1L1606.8 108M1606.8 206.1L1608.6 108M1608.6 206.1L1610.4 108M1610.4 206.1L1612.3 108M1612.3 206.1L1614.1 108M1614.1 206.1L1615.9 108M1615.9 206.1L1617.7 108M1617.7 206.1L1619.5 108M1619.5 206.1L1621.4 108M1621.4 206.1L1623.2 108M1623.2 206.1L1625 108M1625 206.1L1626.8 108M1626.8 206.1L1628.6 108M1628.6 206.1L1630.4 108M1630.4 206.1L1632.2 108M1632.2 206.1L1634 108M1634 206.1L1635.8 108M1635.8 206.1L1637.6 108M1637.6 206.1L1639.4 108M1639.4 206.1L1641.2 108M1641.2 206.1L1643 108M1643 206.1L1644.8 108M1644.8 206.1L1646.6 108M1646.6 206.1L1648.4 108M1648.4 206.1L1650.1 108M1650.1 206.1L1651.9 108M1651.9 206.1L1653.7 108M1653.7 206.1L1655.5 108M1655.5 206.1L1657.3 108M1657.3 206.1L1659 108M1659 206.1L1660.8 108M1660.8 206.1L1662.6 108M1662.6 206.1L1664.3 108M1664.3 206.1L1666.1 108M1666.1 206.1L1667.9 108M1667.9 206.1L1669.6 108M1669.6 206.1L1671.4 108M1671.4 206.1L1673.2 108M1673.2 206.1L1674.9 108M1674.9 206.1L1676.7 108M1676.7 206.1L1678.4 108M1678.4 206.1L1680.2 108M1680.2 206.1L1681.9 108M1681.9 206.1L1683.7 108M1683.7 206.1L1685.4 108M1685.4 206.1L1687.2 108M1687.2 206.1L1688.9 108M1688.9 206.1L1690.7 108M1690.7 206.1L1692.4 108M1692.4 206.1L1694.2 108M1694.2 206.1L1695.9 108M1695.9 206.1L1697.6 108M1697.6 206.1L1699.4 108M1699.4 206.1L1701.1 108M1701.1 206.1L1702.8 108M1702.8 206.1L1704.6 108M1704.6 206.1L1706.3 108M1706.3 206.1L1708 108M1708 206.1L1709.7 108M1709.7 206.1L1711.5 108M1711.5 206.1L1713.2 108M1713.2 206.1L1714.9 108M1714.9 206.1L1716.6 108M1716.6 206.1L1718.3 108M1718.3 206.1L1720.1 108M1720.1 206.1L1721.8 108M1721.8 206.1L1723.5 108M1723.5 206.1L1725.2 108M1725.2 206.1L1726.9 108M1726.9 206.1L1728.6 108M1728.6 206.1L1730.3 108M1730.3 206.1L1732 108M1732 206.1L1733.7 108M1733.7 206.1L1735.4 108M1735.4 206.1L1737.1 108M1737.1 206.1L1738.8 108M1738.8 206.1L1740.5 108M1740.5 206.1L1742.2 108M1742.2 206.1L1743.9 108M1743.9 206.1L1745.6 108M1745.6 206.1L1747.3 108M1747.3 206.1L1749 108M1749 206.1L1750.7 108M1750.7 206.1L1752.3 108M1752.3 206.1L1754 108M1754 206.1L1755.7 108M1755.7 206.1L1757.4 108M1757.4 206.1L1759.1 108M1759.1 206.1L1760.7 108M1760.7 206.1L1762.4 108M1762.4 206.1L1764.1 108M1764.1 206.1L1765.8 108M1765.8 206.1L1767.4 108M1767.4 206.1L1769.1 108M1769.1 206.1L1770.8 108M1770.8 206.1L1772.4 108M1772.4 206.1L1774.1 108M1774.1 206.1L1775.8 108M1775.8 206.1L1777.4 108M1777.4 206.1L1779.1 108M1779.1 206.1L1780.8 108M1780.8 206.1L1782.4 108M1782.4 206.1L1784.1 108M1784.1 206.1L1785.7 108M1785.7 206.1L1787.4 108M1787.4 206.1L1789 108M1789 206.1L1790.7 108M1790.7 206.1L1792.4 108M1792.4 206.1L1794 108M1794 206.1L1795.6 108M1795.6 206.1L1797.3 108M1797.3 206.1L1798.9 108M1798.9 206.1L1800.6 108M1800.6 206.1L1802.2 108M1802.2 206.1L1803.9 108M1803.9 206.1L1805.5 108M1805.5 206.1L1807.1 108M1807.1 206.1L1808.8 108M1808.8 206.1L1810.4 108M1810.4 206.1L1812.1 108M1812.1 206.1L1813.7 108M1813.7 206.1L1815.3 108M1815.3 206.1L1817 108M1817 206.1L1818.6 108M1818.6 206.1L1820.2 108M1820.2 206.1L1821.8 108M1821.8 206.1L1823.5 108M1823.5 206.1L1825.1 108M1825.1 206.1L1826.7 108M1826.7 206.1L1828.3 108M1828.3 206.1L1830 108M1830 206.1L1831.6 108M1831.6 206.1L1833.2 108M1833.2 206.1L1834.8 108M1834.8 206.1L1836.4 108M1836.4 206.1L1838 108M1838 206.1L1839.6 108M1839.6 206.1L1841.3 108M1841.3 206.1L1842.9 108M1842.9 206.1L1844.5 108M1844.5 206.1L1846.1 108M1846.1 206.1L1847.7 108M1847.7 206.1L1849.3 108M1849.3 206.1L1850.9 108M1850.9 206.1L1852.5 108M1852.5 206.1L1854.1 108M1854.1 206.1L1855.7 108M1855.7 206.1L1857.3 108M1857.3 206.1L1858.9 108M1858.9 206.1L1860.5 108M1860.5 206.1L1862.1 108M1862.1 206.1L1863.7 108M1863.7 206.1L1865.3 108M1865.3 206.1L1866.9 108M1866.9 206.1L1868.5 108M1868.5 206.1L1870 108M1870 206.1L1871.6 108M1871.6 206.1L1873.2 108M1873.2 206.1L1874.8 108M1874.8 206.1L1876.4 108M1876.4 206.1L1878 108" stroke="#f6a625" stroke-width="1.8" stroke-opacity="0.4"/>
<path d="M795.7 108V206.1M808.4 108V206.1M818 108V206.1M826.4 108V206.1M834 108V206.1M841 108V206.1M847.7 108V206.1M854.1 108V206.1M860.2 108V206.1M866.2 108V206.1M871.9 108V206.1M877.4 108V206.1M882.7 108V206.1M887.9 108V206.1M892.9 108V206.1M897.8 108V206.1M902.6 108V206.1M907.3 108V206.1M911.9 108V206.1M916.4 108V206.1M920.9 108V206.1M925.3 108V206.1M929.7 108V206.1M934 108V206.1M938.2 108V206.1M942.4 108V206.1M946.5 108V206.1M950.5 108V206.1M954.6 108V206.1M958.5 108V206.1M962.4 108V206.1M966.3 108V206.1M970.1 108V206.1M973.9 108V206.1M977.7 108V206.1M981.4 108V206.1M985 108V206.1M988.7 108V206.1M992.3 108V206.1M995.8 108V206.1M999.4 108V206.1M1002.9 108V206.1M1006.3 108V206.1M1009.8 108V206.1M1013.2 108V206.1M1016.5 108V206.1M1019.9 108V206.1M1023.2 108V206.1M1026.5 108V206.1M1029.8 108V206.1M1033 108V206.1M1036.2 108V206.1M1039.4 108V206.1M1042.6 108V206.1M1045.8 108V206.1M1048.9 108V206.1M1052 108V206.1M1055.2 108V206.1M1058.2 108V206.1M1061.3 108V206.1M1064.4 108V206.1M1067.4 108V206.1M1070.4 108V206.1M1073.4 108V206.1M1076.4 108V206.1M1079.4 108V206.1M1082.3 108V206.1M1085.3 108V206.1M1088.2 108V206.1M1091.1 108V206.1M1094 108V206.1M1096.9 108V206.1M1099.8 108V206.1M1102.6 108V206.1M1105.4 108V206.1M1108.3 108V206.1M1111.1 108V206.1M1113.9 108V206.1M1116.7 108V206.1M1119.4 108V206.1M1122.2 108V206.1M1125 108V206.1M1127.7 108V206.1M1130.4 108V206.1M1133.2 108V206.1M1135.9 108V206.1M1138.6 108V206.1M1141.3 108V206.1M1144 108V206.1M1146.6 108V206.1M1149.3 108V206.1M1152 108V206.1M1154.6 108V206.1M1157.3 108V206.1M1159.9 108V206.1M1162.5 108V206.1M1165.1 108V206.1M1167.7 108V206.1M1170.3 108V206.1M1172.9 108V206.1M1175.5 108V206.1M1178.1 108V206.1M1180.6 108V206.1M1183.2 108V206.1M1185.8 108V206.1M1188.3 108V206.1M1190.8 108V206.1M1193.4 108V206.1M1195.9 108V206.1M1198.4 108V206.1M1200.9 108V206.1M1203.4 108V206.1M1205.9 108V206.1M1208.4 108V206.1M1210.8 108V206.1M1213.3 108V206.1M1215.8 108V206.1M1218.2 108V206.1M1220.7 108V206.1M1223.1 108V206.1M1225.6 108V206.1M1228 108V206.1M1230.4 108V206.1M1232.8 108V206.1M1235.3 108V206.1M1237.7 108V206.1M1240.1 108V206.1M1242.5 108V206.1M1244.9 108V206.1M1247.3 108V206.1M1249.6 108V206.1M1252 108V206.1M1254.4 108V206.1M1256.8 108V206.1M1259.1 108V206.1M1261.5 108V206.1M1263.8 108V206.1M1266.2 108V206.1M1268.5 108V206.1M1270.8 108V206.1M1273.2 108V206.1M1275.5 108V206.1M1277.8 108V206.1M1280.1 108V206.1M1282.4 108V206.1M1284.7 108V206.1M1287 108V206.1M1289.3 108V206.1M1291.6 108V206.1M1293.9 108V206.1M1296.2 108V206.1M1298.4 108V206.1M1300.7 108V206.1M1303 108V206.1M1305.2 108V206.1M1307.5 108V206.1M1309.7 108V206.1M1312 108V206.1M1314.2 108V206.1M1316.4 108V206.1M1318.7 108V206.1M1320.9 108V206.1M1323.1 108V206.1M1325.3 108V206.1M1327.5 108V206.1M1329.7 108V206.1M1331.9 108V206.1M1334.1 108V206.1M1336.3 108V206.1M1338.5 108V206.1M1340.7 108V206.1M1342.9 108V206.1M1345.1 108V206.1M1347.3 108V206.1M1349.4 108V206.1M1351.6 108V206.1M1353.8 108V206.1M1355.9 108V206.1M1358.1 108V206.1M1360.2 108V206.1M1362.4 108V206.1M1364.5 108V206.1M1366.7 108V206.1M1368.8 108V206.1M1370.9 108V206.1M1373.1 108V206.1M1375.2 108V206.1M1377.3 108V206.1M1379.5 108V206.1M1381.6 108V206.1M1383.7 108V206.1M1385.8 108V206.1M1387.9 108V206.1M1390 108V206.1M1392.1 108V206.1M1394.2 108V206.1M1396.3 108V206.1M1398.4 108V206.1M1400.5 108V206.1M1402.6 108V206.1M1404.7 108V206.1M1406.7 108V206.1M1408.8 108V206.1M1410.9 108V206.1M1413 108V206.1M1415 108V206.1M1417.1 108V206.1M1419.1 108V206.1M1421.2 108V206.1M1423.2 108V206.1M1425.3 108V206.1M1427.3 108V206.1M1429.4 108V206.1M1431.4 108V206.1M1433.5 108V206.1M1435.5 108V206.1M1437.5 108V206.1M1439.6 108V206.1M1441.6 108V206.1M1443.6 108V206.1M1445.6 108V206.1M1447.6 108V206.1M1449.7 108V206.1M1451.7 108V206.1M1453.7 108V206.1M1455.7 108V206.1M1457.7 108V206.1M1459.7 108V206.1M1461.7 108V206.1M1463.7 108V206.1M1465.7 108V206.1M1467.7 108V206.1M1469.6 108V206.1M1471.6 108V206.1M1473.6 108V206.1M1475.6 108V206.1M1477.6 108V206.1M1479.5 108V206.1M1481.5 108V206.1M1483.5 108V206.1M1485.5 108V206.1M1487.4 108V206.1M1489.4 108V206.1M1491.3 108V206.1M1493.3 108V206.1M1495.3 108V206.1M1497.2 108V206.1M1499.2 108V206.1M1501.1 108V206.1M1503.1 108V206.1M1505 108V206.1M1506.9 108V206.1M1508.9 108V206.1M1510.8 108V206.1M1512.8 108V206.1M1514.7 108V206.1M1516.6 108V206.1M1518.5 108V206.1M1520.5 108V206.1M1522.4 108V206.1M1524.3 108V206.1M1526.2 108V206.1M1528.2 108V206.1M1530.1 108V206.1M1532 108V206.1M1533.9 108V206.1M1535.8 108V206.1M1537.7 108V206.1M1539.6 108V206.1M1541.5 108V206.1M1543.4 108V206.1M1545.3 108V206.1M1547.2 108V206.1M1549.1 108V206.1M1551 108V206.1M1552.9 108V206.1M1554.8 108V206.1M1556.7 108V206.1M1558.5 108V206.1M1560.4 108V206.1M1562.3 108V206.1M1564.2 108V206.1M1566.1 108V206.1M1567.9 108V206.1M1569.8 108V206.1M1571.7 108V206.1M1573.5 108V206.1M1575.4 108V206.1M1577.3 108V206.1M1579.1 108V206.1M1581 108V206.1M1582.8 108V206.1M1584.7 108V206.1M1586.5 108V206.1M1588.4 108V206.1M1590.2 108V206.1M1592.1 108V206.1M1593.9 108V206.1M1595.8 108V206.1M1597.6 108V206.1M1599.5 108V206.1M1601.3 108V206.1M1603.1 108V206.1M1605 108V206.1M1606.8 108V206.1M1608.6 108V206.1M1610.4 108V206.1M1612.3 108V206.1M1614.1 108V206.1M1615.9 108V206.1M1617.7 108V206.1M1619.5 108V206.1M1621.4 108V206.1M1623.2 108V206.1M1625 108V206.1M1626.8 108V206.1M1628.6 108V206.1M1630.4 108V206.1M1632.2 108V206.1M1634 108V206.1M1635.8 108V206.1M1637.6 108V206.1M1639.4 108V206.1M1641.2 108V206.1M1643 108V206.1M1644.8 108V206.1M1646.6 108V206.1M1648.4 108V206.1M1650.1 108V206.1M1651.9 108V206.1M1653.7 108V206.1M1655.5 108V206.1M1657.3 108V206.1M1659 108V206.1M1660.8 108V206.1M1662.6 108V206.1M1664.3 108V206.1M1666.1 108V206.1M1667.9 108V206.1M1669.6 108V206.1M1671.4 108V206.1M1673.2 108V206.1M1674.9 108V206.1M1676.7 108V206.1M1678.4 108V206.1M1680.2 108V206.1M1681.9 108V206.1M1683.7 108V206.1M1685.4 108V206.1M1687.2 108V206.1M1688.9 108V206.1M1690.7 108V206.1M1692.4 108V206.1M1694.2 108V206.1M1695.9 108V206.1M1697.6 108V206.1M1699.4 108V206.1M1701.1 108V206.1M1702.8 108V206.1M1704.6 108V206.1M1706.3 108V206.1M1708 108V206.1M1709.7 108V206.1M1711.5 108V206.1M1713.2 108V206.1M1714.9 108V206.1M1716.6 108V206.1M1718.3 108V206.1M1720.1 108V206.1M1721.8 108V206.1M1723.5 108V206.1M1725.2 108V206.1M1726.9 108V206.1M1728.6 108V206.1M1730.3 108V206.1M1732 108V206.1M1733.7 108V206.1M1735.4 108V206.1M1737.1 108V206.1M1738.8 108V206.1M1740.5 108V206.1M1742.2 108V206.1M1743.9 108V206.1M1745.6 108V206.1M1747.3 108V206.1M1749 108V206.1M1750.7 108V206.1M1752.3 108V206.1M1754 108V206.1M1755.7 108V206.1M1757.4 108V206.1M1759.1 108V206.1M1760.7 108V206.1M1762.4 108V206.1M1764.1 108V206.1M1765.8 108V206.1M1767.4 108V206.1M1769.1 108V206.1M1770.8 108V206.1M1772.4 108V206.1M1774.1 108V206.1M1775.8 108V206.1M1777.4 108V206.1M1779.1 108V206.1M1780.8 108V206.1M1782.4 108V206.1M1784.1 108V206.1M1785.7 108V206.1M1787.4 108V206.1M1789 108V206.1M1790.7 108V206.1M1792.4 108V206.1M1794 108V206.1M1795.6 108V206.1M1797.3 108V206.1M1798.9 108V206.1M1800.6 108V206.1M1802.2 108V206.1M1803.9 108V206.1M1805.5 108V206.1M1807.1 108V206.1M1808.8 108V206.1M1810.4 108V206.1M1812.1 108V206.1M1813.7 108V206.1M1815.3 108V206.1M1817 108V206.1M1818.6 108V206.1M1820.2 108V206.1M1821.8 108V206.1M1823.5 108V206.1M1825.1 108V206.1M1826.7 108V206.1M1828.3 108V206.1M1830 108V206.1M1831.6 108V206.1M1833.2 108V206.1M1834.8 108V206.1M1836.4 108V206.1M1838 108V206.1M1839.6 108V206.1M1841.3 108V206.1M1842.9 108V206.1M1844.5 108V206.1M1846.1 108V206.1M1847.7 108V206.1M1849.3 108V206.1M1850.9 108V206.1M1852.5 108V206.1M1854.1 108V206.1M1855.7 108V206.1M1857.3 108V206.1M1858.9 108V206.1M1860.5 108V206.1M1862.1 108V206.1M1863.7 108V206.1M1865.3 108V206.1M1866.9 108V206.1M1868.5 108V206.1M1870 108V206.1M1871.6 108V206.1M1873.2 108V206.1M1874.8 108V206.1M1876.4 108V206.1M1878 108V206.1" stroke="#f6a625" stroke-width="1.5" stroke-opacity="0.16"/>
</g>
<rect x="1053.5" y="74.5" width="8" height="8" fill="#0000ff" stroke="#111" stroke-width="1"/>
<rect x="1198.5" y="74.5" width="8" height="8" fill="#99ca53" stroke="#111" stroke-width="1"/>
<rect x="1359.5" y="74.5" width="8" height="8" fill="#f6a625" stroke="#111" stroke-width="1"/></svg>
<div class="t" id="t19" style="left:1067.1px;top:70.64px;font-size:12px;color:#464646;letter-spacing:0.07px;">Motor Elec Speed (Hz)</div>
<div class="t" id="t20" style="left:1211.9px;top:70.64px;font-size:12px;color:#464646;letter-spacing:0.309px;">Motor Position (degrees)</div>
<div class="t" id="t21" style="left:1372.7px;top:70.64px;font-size:12px;color:#464646;letter-spacing:0.284px;">Controller Position (degrees)</div>
<div class="t" id="t22" style="left:712.36px;top:100.64px;font-size:12px;color:#464646;letter-spacing:0.002px;">360.0</div>
<div class="t" id="t23" style="left:712.36px;top:125.67px;font-size:12px;color:#464646;letter-spacing:0.002px;">270.0</div>
<div class="t" id="t24" style="left:712.36px;top:149.69px;font-size:12px;color:#464646;letter-spacing:0.002px;">180.0</div>
<div class="t" id="t25" style="left:719.22px;top:174.72px;font-size:12px;color:#464646;letter-spacing:-0.06px;">90.0</div>
<div class="t" id="t26" style="left:726.08px;top:199.04px;font-size:12px;color:#464646;letter-spacing:-0.184px;">0.0</div>
<div class="t" id="t27" style="left:736.31px;top:212.54px;font-size:12px;color:#464646;letter-spacing:-0.06px;">0.00</div>
<div class="t" id="t28" style="left:1019.01px;top:212.54px;font-size:12px;color:#464646;letter-spacing:-0.06px;">0.50</div>
<div class="t" id="t29" style="left:1301.71px;top:212.54px;font-size:12px;color:#464646;letter-spacing:-0.06px;">1.00</div>
<div class="t" id="t30" style="left:1584.41px;top:212.54px;font-size:12px;color:#464646;letter-spacing:-0.06px;">1.50</div>
<div class="t" id="t31" style="left:1867.11px;top:212.54px;font-size:12px;color:#464646;letter-spacing:-0.06px;">2.00</div>
<svg width="1918" height="1079" viewBox="0 0 1918 1079"><path d="M751.5 366.1H1878.9M751.5 392.9H1878.9M751.5 419.6H1878.9M751.5 446.4H1878.9M1033.2 366V473.5M1315 366V473.5M1596.7 366V473.5M1878.4 366V473.5" stroke="#e8e8e8" stroke-width="1.5" fill="none"/>
<path d="M751.4 365.5V478M746.5 472.9H1879M746.2 366.1h5M746.2 392.9h5M746.2 419.6h5M746.2 446.4h5M1033.2 473v5M1315 473v5M1596.7 473v5M1878.4 473v5" stroke="#d6d6d6" stroke-width="1.4" fill="none"/>
<clipPath id="c2"><rect x="750.7" y="365.5" width="1128.4" height="108.4"/></clipPath>
<g clip-path="url(#c2)" fill="none" stroke-width="2" stroke-linejoin="round">
<path d="M763.2 417V465.5M768.8 417V468M774.4 417V465M785.7 417V450M791.3 371.5V417" stroke="#209fdf" stroke-width="2.2"/>
<path d="M768.4 419.9l0.7 0.6l0.7 0.7l0.6 0.6l0.7 0.7l0.7 0.6l0.7 0.6l0.6 0.7l0.7 0.6l0.7 0.7l0.7 0.6l0.6 0.6l0.7 0.7l0.7 0.7l0.7 0.7l0.6 0.7l0.7 0.7l0.7 0.7l0.7 0.8l0.7 0.7l0.6 0.7l0.7 0.3l0.7-2.3l0.7-2.9l0.6-3.6l0.7-4.3l0.7-4.9l0.7-5.5l0.6-6l0.7-5.1l0.7-1.8l0.7-2l0.6-2.1l0.7-2l0.7-2.1l0.7-2l0.6-2l0.7-2.1l0.7-1.8l0.7-1.6l0.6-0.8l0.7 16.4l0.7 19.4l0.7 21.8l0.7 21.9l0.6 8.8l0.7-0.2l0.7-0.2l0.7-0.3l0.6-0.2l0.6-0.2l0.7-0.2l0.6-0.1l0.5-12.5l0.6-23.4l0.5-23.9l0.6-22.7l0.5-8l0.5 0.1l0.5 0.2l0.5 0.1l0.5 0.1h0.5h0.5h0.4l0.5 14.4l0.4 22.7l0.5 23.2l0.4 22.1l0.5 6.2h0.4h0.4h0.5h0.4h0.4h0.5h0.4l0.4-15.4l0.4-22.8l0.4-23.1l0.4-22l0.4-5.3h0.4h0.4h0.4h0.4h0.4h0.4h0.4l0.4 16.3l0.3 22.8l0.4 23.1l0.4 22l0.4 4.4h0.3h0.4h0.4h0.3h0.4h0.4h0.3l0.4-17.1l0.3-22.8l0.4-23.1l0.3-21.8l0.4-3.8h0.3h0.4h0.3h0.4h0.3h0.4h0.3l0.3 17.7l0.4 22.8l0.3 23.1l0.3 21.8l0.4 3.2h0.3h0.3h0.4h0.3h0.3h0.3h0.4l0.3-18.3l0.3-22.8l0.3-23.1l0.3-21.7l0.3-2.7h0.4h0.3h0.3h0.3h0.3h0.3h0.3l0.3 18.8l0.3 22.9l0.3 23l0.3 21.7l0.3 2.2h0.3h0.3h0.3h0.3h0.3h0.3h0.3l0.3-19.2l0.3-22.8l0.3-23l0.3-21.7l0.3-1.9h0.3h0.3h0.3h0.3h0.3h0.2h0.3l0.3 19.4l0.3 22.9l0.3 23l0.3 21.6l0.3 1.7h0.2h0.3h0.3h0.3h0.3h0.3h0.2l0.3-19.7l0.3-22.9l0.3-23l0.3-21.6l0.2-1.4h0.3h0.3h0.3h0.3h0.2h0.3h0.3l0.3 20l0.2 22.9l0.3 23l0.3 21.5l0.2 1.2h0.3h0.3h0.3h0.2h0.3h0.3h0.2l0.3-20.2l0.3-22.9l0.2-23l0.3-21.5l0.3-1h0.2h0.3h0.3h0.2h0.3h0.3h0.2l0.3 20.5l0.3 22.9l0.2 23l0.3 21.4l0.2 0.8h0.3h0.3h0.2h0.3h0.2h0.3h0.3l0.2-20.7l0.3-22.9l0.2-23l0.3-21.4l0.2-0.6h0.3h0.3h0.2h0.3h0.2h0.3h0.2l0.3 20.9l0.2 22.9l0.3 23l0.2 21.4l0.3 0.4h0.2h0.3h0.2h0.3h0.2h0.3h0.2l0.3-21.1l0.2-23l0.3-22.9l0.2-21.5l0.3-0.1l0.2-0.1h0.2h0.3h0.2h0.3h0.2h0.3l0.2 21.4l0.2 23l0.3 23l0.2 21.4h0.3h0.2h0.3h0.2h0.2h0.3h0.2l0.2-0.1l0.3-21.5l0.2-23l0.3-23l0.2-21.3h0.2h0.3h0.2h0.2h0.3h0.2h0.3l0.2 0.3l0.2 21.5l0.3 23.1l0.2 23l0.2 21.1h0.3h0.2h0.2h0.3h0.2h0.2l0.2 0.1l0.3-0.5l0.2-21.6l0.2-23.1l0.3-23.1l0.2-20.9h0.2h0.3h0.2h0.2h0.2h0.3h0.2l0.2 0.6l0.2 21.7l0.3 23.1l0.2 23.1l0.2 20.7h0.3h0.2h0.2h0.2l0.2 0.1h0.3h0.2l0.2-0.9l0.2-21.6l0.3-23.2l0.2-23.1l0.2-20.6h0.2h0.3h0.2h0.2h0.2h0.2h0.3l0.2 1l0.2 21.7l0.2 23.2l0.2 23.1l0.3 20.4h0.2h0.2h0.2l0.2 0.1h0.2h0.3h0.2l0.2-1.2l0.2-21.7l0.2-23.2l0.2-23.2l0.3-20.3h0.2h0.2h0.2h0.2h0.2h0.2h0.3l0.2 1.3l0.2 21.7l0.2 23.3l0.2 23.2l0.2 20.1h0.2h0.3l0.2 0.1h0.2h0.2h0.2h0.2l0.2-1.4l0.2-21.9l0.2-23.3l0.3-23.1l0.2-20.1h0.2h0.2h0.2h0.2h0.2h0.2h0.2l0.2 1.5l0.2 21.9l0.2 23.3l0.3 23.2l0.2 19.9h0.2h0.2l0.2 0.1h0.2h0.2h0.2h0.2l0.2-1.7l0.2-21.9l0.2-23.4l0.2-23.2l0.2-19.8h0.2h0.2h0.2h0.2h0.2h0.2h0.2l0.3 1.8l0.2 21.9l0.2 23.4l0.2 23.3l0.2 19.6h0.2h0.2l0.2 0.1h0.2h0.2h0.2h0.2l0.2-2l0.2-22l0.2-23.4l0.2-23.2l0.2-19.6h0.2h0.2h0.2h0.2h0.2h0.2h0.2l0.2 2.1l0.1 22l0.2 23.4l0.2 23.3l0.2 19.4h0.2h0.2h0.2l0.2 0.1h0.2h0.2h0.2l0.2-2.2l0.2-22.1l0.2-23.5l0.2-23.3l0.2-19.3h0.2h0.2h0.2h0.2h0.2h0.2h0.1l0.2 2.3l0.2 22.1l0.2 23.5l0.2 23.3l0.2 19.2h0.2h0.2h0.2h0.2h0.2l0.2 0.1h0.2l0.1-2.4l0.2-22.1l0.2-23.6l0.2-23.3l0.2-19.2h0.2h0.2h0.2h0.2h0.2h0.2h0.2l0.1 2.5l0.2 22.1l0.2 23.6l0.2 23.3l0.2 19.1h0.2h0.2h0.2h0.2h0.2h0.1h0.2l0.2-2.5l0.2-22.2l0.2-23.5l0.2-23.4l0.2-19.1h0.2h0.2h0.1h0.2h0.2h0.2h0.2l0.2 2.6l0.2 22.2l0.2 23.6l0.1 23.4l0.2 19h0.2h0.2h0.2h0.2h0.2h0.1h0.2l0.2-2.7l0.2-22.2l0.2-23.6l0.2-23.4l0.2-19h0.2h0.1h0.2h0.2h0.2h0.2h0.2l0.1 2.8l0.2 22.3l0.2 23.6l0.2 23.4l0.2 18.9h0.2h0.2h0.1h0.2h0.2h0.2h0.2l0.2-2.8l0.1-22.3l0.2-23.7l0.2-23.4l0.2-18.8l0.2-0.1h0.2h0.1h0.2h0.2h0.2h0.2l0.2 3l0.1 22.3l0.2 23.7l0.2 23.5l0.2 18.7h0.2h0.2h0.1h0.2h0.2h0.2h0.2l0.1-3l0.2-22.3l0.2-23.8l0.2-23.5l0.2-18.6h0.1h0.2h0.2h0.2l0.2-0.1h0.1h0.2l0.2 3.1l0.2 22.4l0.2 23.7l0.1 23.6l0.2 18.6h0.2h0.2h0.2h0.1h0.2h0.2h0.2l0.2-3.2l0.1-22.4l0.2-23.7l0.2-23.6l0.2-18.5h0.2h0.1h0.2h0.2h0.2h0.1h0.2l0.2 3.2l0.2 22.4l0.2 23.8l0.1 23.6l0.2 18.5h0.2h0.2h0.1h0.2h0.2h0.2h0.1l0.2-3.3l0.2-22.5l0.2-23.8l0.1-23.6l0.2-18.4h0.2h0.2h0.2h0.1h0.2h0.2h0.2l0.1 3.4l0.2 22.5l0.2 23.8l0.2 23.6l0.1 18.3l0.2 0.1h0.2h0.1h0.2h0.2h0.2h0.1l0.2-3.5l0.2-22.5l0.2-23.9l0.1-23.6l0.2-18.3h0.2h0.2h0.1h0.2h0.2h0.2h0.1l0.2 3.5l0.2 22.6l0.1 23.9l0.2 23.6l0.2 18.2h0.2h0.1h0.2h0.2l0.1 0.1h0.2h0.2l0.2-3.7l0.1-22.5l0.2-24l0.2-23.6l0.1-18.2h0.2h0.2h0.2h0.1h0.2h0.2h0.1l0.2 3.7l0.2 22.6l0.2 23.9l0.1 23.7l0.2 18.1h0.2h0.1h0.2h0.2h0.1h0.2h0.2l0.2-3.8l0.1-22.6l0.2-23.9l0.2-23.7l0.1-18h0.2h0.2h0.1h0.2h0.2h0.1h0.2l0.2 3.8l0.1 22.6l0.2 24l0.2 23.7l0.1 17.9h0.2h0.2l0.2 0.1h0.1h0.2h0.2h0.1l0.2-4l0.2-22.6l0.1-24l0.2-23.6l0.2-18h0.1h0.2h0.2h0.1h0.2h0.2h0.1l0.2 4l0.2 22.7l0.1 23.9l0.2 23.7l0.2 17.9h0.1h0.2h0.1h0.2h0.2h0.1h0.2l0.2-4.1l0.1-22.6l0.2-24l0.2-23.7l0.1-17.8h0.2h0.2h0.1h0.2h0.2h0.1h0.2l0.1 4.1l0.2 22.7l0.2 24l0.1 23.7l0.2 17.7h0.2h0.1h0.2h0.2h0.1h0.2h0.1l0.2-4.2l0.2-22.7l0.1-24l0.2-23.7l0.2-17.6h0.1h0.2h0.2h0.1h0.2h0.1l0.2-0.1l0.2 4.3l0.1 22.7l0.2 24l0.1 23.7l0.2 17.7h0.2h0.1h0.2h0.2h0.1h0.2h0.1l0.2-4.3l0.2-22.8l0.1-24l0.2-23.7l0.1-17.6h0.2h0.2h0.1h0.2h0.1h0.2h0.2l0.1 4.4l0.2 22.7l0.1 24.1l0.2 23.7l0.2 17.5h0.1h0.2h0.1h0.2h0.2h0.1h0.2l0.1-4.4l0.2-22.8l0.2-24.1l0.1-23.7l0.2-17.4h0.1h0.2h0.2h0.1h0.2h0.1h0.2l0.2 4.5l0.1 22.8l0.2 24l0.1 23.8l0.2 17.3h0.1h0.2h0.2h0.1h0.2h0.1h0.2l0.1-4.5l0.2-22.8l0.2-24.1l0.1-23.7l0.2-17.3l0.1-0.1h0.2h0.1h0.2h0.2h0.1h0.2l0.1 4.7l0.2 22.8l0.1 24.1l0.2 23.7l0.2 17.3h0.1h0.2h0.1h0.2h0.1h0.2h0.2l0.1-4.7l0.2-22.8l0.1-24.1l0.2-23.8l0.1-17.2h0.2h0.1h0.2h0.2h0.1h0.2h0.1l0.2 4.7l0.1 22.9l0.2 24.1l0.1 23.7l0.2 17.2h0.1h0.2h0.2h0.1h0.2h0.1h0.2l0.1-4.8l0.2-22.8l0.1-24.2l0.2-23.7l0.1-17.1h0.2h0.2h0.1h0.2h0.1h0.2h0.1l0.2 4.8l0.1 22.9l0.2 24.1l0.1 23.8l0.2 17h0.1h0.2h0.1h0.2h0.2h0.1h0.2l0.1-4.9l0.2-22.8l0.1-24.2l0.2-23.8l0.1-17h0.2h0.1h0.2h0.1h0.2h0.1h0.2l0.1 5l0.2 22.9l0.1 24.2l0.2 23.7l0.1 17h0.2h0.2h0.1h0.2h0.1h0.2h0.1l0.2-5l0.1-23l0.2-24.1l0.1-23.8l0.2-16.9h0.1h0.2h0.1h0.2h0.1h0.2h0.1l0.2 5.1l0.1 22.9l0.2 24.2l0.1 23.8l0.2 16.8h0.1h0.2h0.1h0.2h0.1h0.2h0.1l0.2-5.1l0.1-23l0.2-24.1l0.1-23.8l0.2-16.8h0.1h0.2h0.1h0.2h0.1h0.2h0.1l0.2 5.2l0.1 22.9l0.2 24.2l0.1 23.8l0.2 16.7h0.1h0.2h0.1h0.2h0.1h0.1h0.2l0.1-5.2l0.2-23l0.1-24.2l0.2-23.8l0.1-16.7h0.2h0.1h0.2h0.1h0.2h0.1h0.2l0.1 5.3l0.2 23l0.1 24.2l0.2 23.8l0.1 16.7h0.2h0.1h0.2h0.1h0.1h0.2h0.1l0.2-5.4l0.1-23l0.2-24.2l0.1-23.8l0.2-16.6h0.1h0.2h0.1h0.2h0.1h0.2h0.1l0.1 5.4l0.2 23l0.1 24.2l0.2 23.9l0.1 16.5h0.2h0.1h0.2h0.1h0.2h0.1h0.2l0.1-5.4l0.1-23.1l0.2-24.2l0.1-23.8l0.2-16.5h0.1h0.2h0.1h0.2h0.1h0.1h0.2l0.1 5.5l0.2 23l0.1 24.3l0.2 23.8l0.1 16.4h0.2h0.1h0.2h0.1h0.1h0.2h0.1l0.2-5.5l0.1-23l0.2-24.3l0.1-23.8l0.1-16.5h0.2h0.1h0.2h0.1h0.2h0.1h0.2l0.1 5.6l0.1 23.1l0.2 24.3l0.1 23.8l0.2 16.4h0.1h0.2h0.1h0.1h0.2h0.1h0.2l0.1-5.7l0.2-23l0.1-24.3l0.1-23.9l0.2-16.3h0.1h0.2h0.1h0.2h0.1h0.1h0.2l0.1 5.7l0.2 23.1l0.1 24.3l0.2 23.8l0.1 16.3h0.1h0.2h0.1h0.2h0.1h0.2h0.1l0.1-5.7l0.2-23.1l0.1-24.3l0.2-23.9l0.1-16.2h0.1h0.2h0.1h0.2h0.1h0.1h0.2l0.1 5.8l0.2 23.1l0.1 24.3l0.2 23.8l0.1 16.2h0.1h0.2h0.1h0.2h0.1h0.1h0.2l0.1-5.8l0.2-23.1l0.1-24.3l0.1-23.9l0.2-16.2h0.1h0.2h0.1h0.1h0.2h0.1h0.2l0.1 5.9l0.1 23.2l0.2 24.3l0.1 23.9l0.2 16.1h0.1h0.1h0.2h0.1h0.2h0.1h0.1l0.2-6l0.1-23.1l0.2-24.3l0.1-23.9l0.1-16.1h0.2h0.1h0.1h0.2h0.1h0.2h0.1l0.1 6l0.2 23.2l0.1 24.3l0.2 23.9l0.1 16h0.1h0.2h0.1h0.2h0.1h0.1h0.2l0.1-6l0.1-23.2l0.2-24.4l0.1-23.8l0.2-16h0.1h0.1h0.2h0.1h0.1h0.2h0.1l0.2 6.1l0.1 23.1l0.1 24.4l0.2 23.9l0.1 15.9h0.1h0.2h0.1h0.2h0.1h0.1h0.2l0.1-6.1l0.1-23.2l0.2-24.4l0.1-23.9l0.2-15.8h0.1h0.1l0.2-0.1h0.1h0.1h0.2h0.1l0.1 6.2l0.2 23.2l0.1 24.4l0.2 23.9l0.1 15.9h0.1h0.2h0.1h0.1h0.2h0.1h0.1l0.2-6.3l0.1-23.2l0.2-24.4l0.1-23.9l0.1-15.8h0.2h0.1h0.1h0.2h0.1h0.1h0.2l0.1 6.3l0.1 23.2l0.2 24.4l0.1 23.9l0.1 15.8h0.2h0.1h0.2h0.1h0.1h0.2h0.1l0.1-6.3l0.2-23.3l0.1-24.4l0.1-23.9l0.2-15.7h0.1h0.1h0.2h0.1h0.1h0.2h0.1l0.1 6.4l0.2 23.2l0.1 24.4l0.1 23.9l0.2 15.7h0.1h0.1h0.2h0.1h0.2h0.1h0.1l0.2-6.4l0.1-23.2l0.1-24.4l0.2-23.9l0.1-15.7h0.1h0.2h0.1h0.1h0.2h0.1h0.1l0.2 6.4l0.1 23.3l0.1 24.4l0.2 23.9l0.1 15.6h0.1h0.2h0.1h0.1h0.2h0.1h0.1l0.2-6.5l0.1-23.2l0.1-24.4l0.2-23.9l0.1-15.6h0.1h0.2h0.1h0.1h0.2h0.1h0.1l0.2 6.5l0.1 23.2l0.1 24.5l0.2 23.9l0.1 15.5h0.1h0.2h0.1h0.1h0.1h0.2h0.1l0.1-6.5l0.2-23.3l0.1-24.4l0.1-23.9l0.2-15.5h0.1h0.1h0.2h0.1h0.1h0.2h0.1l0.1 6.6l0.2 23.2l0.1 24.4l0.1 23.9l0.2 15.5h0.1h0.1h0.2h0.1h0.1h0.1h0.2l0.1-6.6l0.1-23.3l0.2-24.4l0.1-23.9l0.1-15.4h0.2h0.1h0.1h0.2h0.1h0.1h0.2l0.1 6.6l0.1 23.3l0.1 24.4l0.2 23.9l0.1 15.4h0.1h0.2h0.1h0.1h0.2h0.1h0.1l0.2-6.7l0.1-23.2l0.1-24.4l0.2-23.9l0.1-15.4h0.1h0.1h0.2h0.1h0.1h0.2h0.1l0.1 6.7l0.2 23.3l0.1 24.4l0.1 23.9l0.1 15.3h0.2h0.1h0.1h0.2h0.1h0.1h0.2l0.1-6.7l0.1-23.3l0.1-24.4l0.2-23.9l0.1-15.3h0.1h0.2h0.1h0.1h0.2h0.1h0.1l0.1 6.8l0.2 23.2l0.1 24.4l0.1 23.9l0.2 15.3h0.1h0.1h0.2h0.1h0.1h0.1h0.2l0.1-6.8l0.1-23.3l0.2-24.4l0.1-23.9l0.1-15.2h0.1h0.2h0.1h0.1h0.2h0.1h0.1l0.1 6.8l0.2 23.3l0.1 24.4l0.1 23.9l0.2 15.2h0.1h0.1h0.1h0.2h0.1h0.1h0.2l0.1-6.9l0.1-23.2l0.1-24.5l0.2-23.8l0.1-15.2h0.1h0.2h0.1h0.1h0.1h0.2h0.1l0.1 6.9l0.2 23.3l0.1 24.4l0.1 23.9l0.1 15.1h0.2h0.1h0.1h0.2h0.1h0.1h0.1l0.2-6.9l0.1-23.3l0.1-24.4l0.1-23.9l0.2-15.1h0.1h0.1h0.2h0.1h0.1h0.1h0.2l0.1 7l0.1 23.2l0.1 24.5l0.2 23.8l0.1 15.1h0.1h0.2h0.1h0.1h0.1h0.2h0.1l0.1-7l0.1-23.3l0.2-24.4l0.1-23.9l0.1-15h0.2h0.1h0.1h0.1h0.2h0.1h0.1l0.1 7l0.2 23.3l0.1 24.4l0.1 23.9" stroke="#209fdf" stroke-width="2"/>
<path d="M768.8 371.5V417M774.4 374.5V417M780.1 417V440M797 371.5V430" stroke="#99ca53" stroke-width="2.2"/>
<path d="M768.4 419.9l0.7-0.6l0.7-0.7l0.6-0.6l0.7-0.7l0.7-0.6l0.7-0.6l0.6-0.7l0.7-0.6l0.7-0.3l0.7 0.1l0.6 0.3l0.7 0.6l0.7 0.8l0.7 1.1l0.6 1.5l0.7 1.8l0.7 2.1l0.7 2.4l0.7 2.8l0.6 3.1l0.7 2.9l0.7 0.9l0.7 0.8l0.6 0.9l0.7 0.8l0.7 0.8l0.7 0.9l0.6 0.8l0.7 0.9l0.7 1.8l0.7 2l0.6 2.1l0.7 2l0.7 2.1l0.7 0.2l0.6-10.5l0.7-13.3l0.7-15.6l0.7-17l0.6-16.8l0.7-1.6l0.7-1.6l0.7-1.7l0.7-0.3l0.6 0.2l0.7 0.2l0.7 0.2l0.7 0.2l0.6 11.5l0.6 23.7l0.7 24.4l0.6 23.2l0.5 9.2l0.6-0.2l0.5-0.2l0.6-0.1l0.5-0.2l0.5-0.1l0.5-0.2l0.5-0.1l0.5-13.9l0.5-22.8l0.5-23.3l0.4-22.1l0.5-6.6h0.4h0.5h0.4h0.5h0.4h0.4h0.5l0.4 15.1l0.4 22.7l0.5 23.2l0.4 22l0.4 5.6h0.4h0.4h0.4h0.4h0.4h0.4h0.4l0.4-16l0.4-22.8l0.4-23.2l0.4-21.9l0.4-4.7h0.3h0.4h0.4h0.4h0.3h0.4h0.4l0.3 16.8l0.4 22.8l0.4 23.1l0.3 21.9l0.4 4h0.3h0.4h0.3h0.4h0.3h0.4h0.3l0.4-17.5l0.3-22.8l0.4-23.1l0.3-21.8l0.3-3.4h0.4h0.3h0.3h0.4h0.3h0.3h0.4l0.3 18.1l0.3 22.8l0.3 23.1l0.4 21.7l0.3 2.9h0.3h0.3h0.3h0.3h0.4h0.3h0.3l0.3-18.6l0.3-22.9l0.3-23l0.3-21.7l0.3-2.4h0.3h0.3h0.3h0.3h0.3h0.3h0.3l0.3 19.1l0.3 22.8l0.3 23l0.3 21.7l0.3 2h0.3h0.3h0.3h0.3h0.3h0.3h0.3l0.3-19.3l0.3-22.9l0.2-23l0.3-21.6l0.3-1.8h0.3h0.3h0.3h0.3h0.2h0.3h0.3l0.3 19.6l0.3 22.9l0.3 23l0.2 21.6l0.3 1.5h0.3h0.3h0.3h0.2h0.3h0.3h0.3l0.3-19.9l0.2-22.9l0.3-23l0.3-21.5l0.3-1.3h0.2h0.3h0.3h0.2h0.3h0.3h0.3l0.2 20.1l0.3 22.9l0.3 23l0.2 21.5l0.3 1.1h0.3h0.2h0.3h0.3h0.2h0.3h0.3l0.2-20.4l0.3-22.9l0.3-23l0.2-21.5l0.3-0.8h0.3h0.2h0.3h0.2h0.3h0.3h0.2l0.3 20.6l0.2 22.9l0.3 23l0.3 21.5l0.2 0.6h0.3h0.2h0.3h0.2h0.3h0.3h0.2l0.3-20.8l0.2-23l0.3-22.9l0.2-21.5l0.3-0.4h0.2h0.3h0.2h0.3h0.2h0.3h0.2l0.3 21.1l0.2 22.9l0.3 23l0.2 21.4l0.3 0.2h0.2h0.3h0.2h0.3l0.2 0.1h0.2h0.3l0.2-21.3l0.3-23l0.2-23l0.3-21.4l0.2-0.1h0.2h0.3h0.2h0.3h0.2h0.3l0.2 0.1l0.2 21.4l0.3 23l0.2 23l0.2 21.3h0.3l0.2 0.1h0.3h0.2h0.2h0.3h0.2l0.2-0.3l0.3-21.5l0.2-23l0.3-23.1l0.2-21.1h0.2h0.3h0.2h0.2h0.3h0.2h0.2l0.3 0.4l0.2 21.5l0.2 23.1l0.2 23.1l0.3 21h0.2h0.2h0.3h0.2h0.2h0.3h0.2l0.2-0.6l0.2-21.6l0.3-23.1l0.2-23.1l0.2-20.8h0.2h0.3h0.2h0.2h0.3h0.2h0.2l0.2 0.7l0.2 21.7l0.3 23.1l0.2 23.1l0.2 20.7h0.2h0.3h0.2h0.2h0.2h0.3h0.2l0.2-0.9l0.2-21.7l0.2-23.2l0.3-23.1l0.2-20.5h0.2h0.2h0.2h0.3h0.2h0.2h0.2l0.2 1l0.2 21.7l0.3 23.3l0.2 23.1l0.2 20.4h0.2h0.2h0.2h0.3h0.2h0.2h0.2l0.2-1.2l0.2-21.8l0.2-23.2l0.3-23.2l0.2-20.2h0.2h0.2h0.2h0.2h0.2h0.3l0.2-0.1l0.2 1.4l0.2 21.8l0.2 23.3l0.2 23.2l0.2 20.1h0.2h0.2h0.3h0.2h0.2h0.2h0.2l0.2-1.5l0.2-21.8l0.2-23.4l0.2-23.2l0.2-19.9h0.2h0.2h0.3h0.2h0.2h0.2l0.2-0.1l0.2 1.7l0.2 21.9l0.2 23.3l0.2 23.2l0.2 19.9h0.2h0.2h0.2h0.2h0.2h0.2h0.2l0.2-1.8l0.2-21.9l0.2-23.4l0.2-23.2l0.3-19.7h0.2h0.2h0.2h0.2h0.2h0.2l0.2-0.1l0.2 2l0.2 21.9l0.2 23.4l0.2 23.3l0.2 19.6h0.2h0.2h0.2h0.2h0.2h0.2h0.2l0.2-2l0.2-22l0.2-23.5l0.2-23.2l0.2-19.5h0.1h0.2h0.2h0.2h0.2h0.2h0.2l0.2 2.1l0.2 22.1l0.2 23.4l0.2 23.3l0.2 19.4h0.2h0.2h0.2h0.2h0.2h0.2h0.2l0.2-2.3l0.2-22.1l0.2-23.4l0.1-23.3l0.2-19.3h0.2h0.2h0.2h0.2h0.2h0.2h0.2l0.2 2.3l0.2 22.1l0.2 23.5l0.2 23.4l0.1 19.2h0.2h0.2h0.2h0.2h0.2h0.2h0.2l0.2-2.5l0.2-22.1l0.2-23.5l0.2-23.4l0.1-19.1h0.2h0.2h0.2h0.2h0.2h0.2h0.2l0.2 2.5l0.2 22.2l0.1 23.5l0.2 23.4l0.2 19.1h0.2h0.2h0.2h0.2h0.2h0.2h0.1l0.2-2.6l0.2-22.2l0.2-23.6l0.2-23.4l0.2-19h0.2h0.2h0.1h0.2h0.2h0.2h0.2l0.2 2.7l0.2 22.2l0.1 23.6l0.2 23.4l0.2 18.9h0.2l0.2 0.1h0.2h0.2h0.2h0.1h0.2l0.2-2.8l0.2-22.2l0.2-23.7l0.2-23.4l0.1-18.9h0.2h0.2h0.2h0.2h0.2h0.2h0.1l0.2 2.8l0.2 22.3l0.2 23.7l0.2 23.4l0.2 18.8h0.1h0.2h0.2h0.2l0.2 0.1h0.2h0.1l0.2-3l0.2-22.3l0.2-23.7l0.2-23.4l0.2-18.8h0.1h0.2h0.2h0.2h0.2h0.2h0.1l0.2 3l0.2 22.3l0.2 23.7l0.2 23.5l0.1 18.7h0.2h0.2h0.2h0.2h0.1h0.2h0.2l0.2-3l0.2-22.4l0.1-23.7l0.2-23.5l0.2-18.7h0.2h0.2h0.1h0.2h0.2h0.2h0.2l0.1 3.2l0.2 22.3l0.2 23.8l0.2 23.5l0.2 18.6h0.1h0.2h0.2h0.2h0.2h0.1h0.2l0.2-3.2l0.2-22.4l0.1-23.8l0.2-23.5l0.2-18.6h0.2h0.2h0.1h0.2h0.2h0.2h0.1l0.2 3.3l0.2 22.5l0.2 23.8l0.1 23.5l0.2 18.5h0.2h0.2h0.1h0.2h0.2h0.2h0.2l0.1-3.4l0.2-22.4l0.2-23.9l0.2-23.5l0.1-18.4h0.2h0.2h0.2h0.1l0.2-0.1h0.2h0.1l0.2 3.5l0.2 22.5l0.2 23.9l0.1 23.6l0.2 18.3h0.2h0.2h0.1h0.2h0.2h0.2h0.1l0.2-3.5l0.2-22.6l0.2-23.8l0.1-23.7l0.2-18.2h0.2h0.1h0.2h0.2h0.2h0.1h0.2l0.2 3.6l0.1 22.5l0.2 23.9l0.2 23.7l0.2 18.2h0.1h0.2h0.2h0.1h0.2h0.2h0.2l0.1-3.7l0.2-22.6l0.2-23.9l0.1-23.7l0.2-18.1h0.2h0.2h0.1h0.2h0.2h0.1h0.2l0.2 3.7l0.1 22.6l0.2 24l0.2 23.6l0.2 18.1h0.1h0.2h0.2h0.1h0.2h0.2h0.1l0.2-3.8l0.2-22.6l0.1-24l0.2-23.6l0.2-18h0.1h0.2h0.2h0.1h0.2h0.2l0.2-0.1l0.1 3.9l0.2 22.7l0.2 23.9l0.1 23.7l0.2 18h0.2h0.1h0.2h0.2h0.1h0.2h0.2l0.1-4l0.2-22.6l0.2-24l0.1-23.7l0.2-17.9h0.2h0.1h0.2h0.2h0.1h0.2h0.1l0.2 4l0.2 22.7l0.1 24l0.2 23.7l0.2 17.8h0.1h0.2h0.2h0.1h0.2h0.2h0.1l0.2-4.1l0.2-22.7l0.1-24l0.2-23.7l0.1-17.7h0.2h0.2h0.1h0.2h0.2h0.1h0.2l0.2 4.1l0.1 22.7l0.2 24.1l0.1 23.6l0.2 17.7h0.2h0.1h0.2h0.2h0.1h0.2h0.2l0.1-4.2l0.2-22.7l0.1-24l0.2-23.7l0.2-17.7h0.1h0.2h0.1h0.2h0.2h0.1h0.2l0.2 4.3l0.1 22.8l0.2 24l0.1 23.7l0.2 17.6h0.2h0.1h0.2h0.1h0.2h0.2h0.1l0.2-4.4l0.1-22.7l0.2-24.1l0.2-23.7l0.1-17.5h0.2h0.1h0.2h0.2h0.1h0.2h0.1l0.2 4.4l0.2 22.8l0.1 24l0.2 23.8l0.1 17.4h0.2h0.2h0.1h0.2h0.1h0.2h0.2l0.1-4.5l0.2-22.7l0.1-24.1l0.2-23.7l0.2-17.4h0.1h0.2h0.1h0.2h0.1h0.2h0.2l0.1 4.5l0.2 22.8l0.1 24.1l0.2 23.7l0.1 17.3h0.2h0.2h0.1h0.2l0.1 0.1h0.2h0.1l0.2-4.7l0.2-22.8l0.1-24l0.2-23.8l0.1-17.3h0.2h0.1h0.2h0.2h0.1h0.2h0.1l0.2 4.7l0.1 22.8l0.2 24.1l0.2 23.8l0.1 17.2h0.2h0.1h0.2h0.1h0.2h0.1h0.2l0.2-4.7l0.1-22.9l0.2-24.1l0.1-23.7l0.2-17.2h0.1h0.2h0.1h0.2h0.1h0.2h0.2l0.1 4.8l0.2 22.8l0.1 24.1l0.2 23.8l0.1 17.1h0.2h0.1h0.2h0.1h0.2h0.2h0.1l0.2-4.8l0.1-22.9l0.2-24.1l0.1-23.8l0.2-17h0.1h0.2h0.1h0.2h0.1h0.2h0.1l0.2 4.9l0.2 22.8l0.1 24.2l0.2 23.7l0.1 17h0.2l0.1 0.1h0.2h0.1h0.2h0.1h0.2l0.1-5l0.2-22.9l0.1-24.1l0.2-23.8l0.1-17h0.2h0.1h0.2h0.1h0.2h0.2h0.1l0.2 5l0.1 22.9l0.2 24.2l0.1 23.8l0.2 16.9h0.1h0.2h0.1h0.2h0.1h0.2h0.1l0.2-5.1l0.1-22.9l0.2-24.2l0.1-23.7l0.2-16.9h0.1h0.2h0.1h0.2h0.1h0.2h0.1l0.2 5.1l0.1 22.9l0.2 24.2l0.1 23.8l0.2 16.8h0.1h0.2h0.1h0.2h0.1h0.2h0.1l0.2-5.1l0.1-23l0.2-24.2l0.1-23.8l0.2-16.7h0.1h0.2h0.1h0.2h0.1h0.2h0.1l0.2 5.2l0.1 22.9l0.1 24.2l0.2 23.8l0.1 16.8h0.2h0.1h0.2h0.1h0.2h0.1h0.2l0.1-5.3l0.2-23l0.1-24.2l0.2-23.8l0.1-16.7h0.2h0.1h0.2h0.1h0.2h0.1h0.2l0.1 5.4l0.1 22.9l0.2 24.3l0.1 23.8l0.2 16.6h0.1h0.2h0.1h0.2h0.1h0.2h0.1l0.2-5.4l0.1-23l0.2-24.2l0.1-23.8l0.1-16.6h0.2h0.1h0.2h0.1h0.2h0.1h0.2l0.1 5.4l0.2 23l0.1 24.3l0.2 23.8l0.1 16.5h0.1h0.2h0.1h0.2h0.1h0.2h0.1l0.2-5.5l0.1-23l0.1-24.2l0.2-23.9l0.1-16.4h0.2h0.1h0.2h0.1h0.2h0.1h0.2l0.1 5.5l0.1 23l0.2 24.3l0.1 23.8l0.2 16.5h0.1h0.2h0.1h0.1h0.2h0.1h0.2l0.1-5.6l0.2-23.1l0.1-24.2l0.2-23.9l0.1-16.4h0.1h0.2h0.1h0.2h0.1h0.2h0.1l0.1 5.7l0.2 23l0.1 24.3l0.2 23.8l0.1 16.4h0.2h0.1h0.1h0.2h0.1h0.2h0.1l0.2-5.7l0.1-23.1l0.1-24.3l0.2-23.8l0.1-16.3h0.2h0.1h0.2h0.1h0.1h0.2h0.1l0.2 5.7l0.1 23.1l0.2 24.3l0.1 23.9l0.1 16.2h0.2h0.1h0.2h0.1h0.1h0.2h0.1l0.2-5.8l0.1-23.1l0.1-24.3l0.2-23.8l0.1-16.2h0.2h0.1h0.2h0.1h0.1h0.2h0.1l0.2 5.8l0.1 23.1l0.1 24.3l0.2 23.9l0.1 16.1h0.2l0.1 0.1h0.1h0.2h0.1h0.2h0.1l0.1-5.9l0.2-23.2l0.1-24.3l0.2-23.8l0.1-16.2h0.1h0.2h0.1h0.2h0.1h0.1h0.2l0.1 6l0.2 23.1l0.1 24.3l0.1 23.9l0.2 16.1h0.1h0.2h0.1h0.1h0.2h0.1h0.1l0.2-6l0.1-23.1l0.2-24.4l0.1-23.9l0.1-16h0.2h0.1h0.2h0.1h0.1h0.2h0.1l0.2 6l0.1 23.2l0.1 24.3l0.2 23.9l0.1 16h0.1h0.2h0.1h0.2h0.1h0.1h0.2l0.1-6.1l0.1-23.1l0.2-24.4l0.1-23.9l0.2-15.9h0.1h0.1h0.2h0.1h0.1h0.2h0.1l0.2 6.1l0.1 23.2l0.1 24.3l0.2 23.9l0.1 15.9h0.1h0.2h0.1h0.2h0.1h0.1l0.2 0.1l0.1-6.2l0.1-23.2l0.2-24.4l0.1-23.9l0.1-15.9h0.2h0.1h0.2h0.1h0.1h0.2h0.1l0.1 6.3l0.2 23.2l0.1 24.3l0.1 24l0.2 15.8h0.1h0.2h0.1h0.1h0.2h0.1h0.1l0.2-6.3l0.1-23.2l0.1-24.4l0.2-23.9l0.1-15.8h0.1h0.2h0.1h0.1h0.2h0.1h0.2l0.1 6.3l0.1 23.2l0.2 24.4l0.1 24l0.1 15.7h0.2h0.1h0.1h0.2h0.1h0.1h0.2l0.1-6.4l0.1-23.2l0.2-24.4l0.1-23.9l0.1-15.7h0.2h0.1h0.1h0.2h0.1h0.1h0.2l0.1 6.4l0.2 23.2l0.1 24.4l0.1 23.9l0.2 15.7h0.1h0.1h0.2h0.1h0.1h0.2h0.1l0.1-6.4l0.2-23.3l0.1-24.4l0.1-23.9l0.2-15.6h0.1h0.1h0.2h0.1h0.1h0.2h0.1l0.1 6.5l0.2 23.2l0.1 24.4l0.1 23.9l0.2 15.6h0.1h0.1h0.2h0.1h0.1h0.2h0.1l0.1-6.5l0.2-23.2l0.1-24.4l0.1-23.9l0.2-15.6h0.1h0.1h0.2h0.1h0.1h0.2h0.1l0.1 6.5l0.1 23.3l0.2 24.4l0.1 23.9l0.1 15.5h0.2h0.1h0.1h0.2h0.1h0.1h0.2l0.1-6.6l0.1-23.2l0.2-24.4l0.1-23.9l0.1-15.5h0.2h0.1h0.1h0.2h0.1h0.1h0.2l0.1 6.6l0.1 23.2l0.1 24.5l0.2 23.8l0.1 15.5h0.1h0.2h0.1h0.1h0.2h0.1h0.1l0.2-6.6l0.1-23.3l0.1-24.4l0.2-23.9l0.1-15.4h0.1h0.1h0.2h0.1h0.1h0.2h0.1l0.1 6.7l0.2 23.2l0.1 24.4l0.1 23.9l0.2 15.4h0.1h0.1h0.2h0.1h0.1h0.1h0.2l0.1-6.7l0.1-23.3l0.2-24.4l0.1-23.9l0.1-15.3h0.2h0.1h0.1h0.1h0.2h0.1h0.1l0.2 6.7l0.1 23.3l0.1 24.4l0.2 23.9l0.1 15.3h0.1h0.1h0.2h0.1h0.1h0.2h0.1l0.1-6.8l0.2-23.2l0.1-24.4l0.1-23.9l0.1-15.3h0.2h0.1h0.1h0.2h0.1h0.1h0.2l0.1 6.8l0.1 23.3l0.1 24.4l0.2 23.9l0.1 15.2h0.1h0.2h0.1h0.1h0.1h0.2h0.1l0.1-6.8l0.2-23.3l0.1-24.4l0.1-23.9l0.1-15.2h0.2h0.1h0.1h0.2h0.1h0.1h0.1l0.2 6.9l0.1 23.2l0.1 24.4l0.2 23.9l0.1 15.2h0.1h0.1h0.2h0.1h0.1h0.2h0.1l0.1-6.9l0.1-23.3l0.2-24.4l0.1-23.9l0.1-15.1h0.2h0.1h0.1h0.1h0.2h0.1h0.1l0.2 6.9l0.1 23.3l0.1 24.4l0.1 23.9l0.2 15.1h0.1h0.1h0.1h0.2h0.1h0.1h0.2l0.1-7l0.1-23.2l0.1-24.4l0.2-23.9l0.1-15.1h0.1h0.1h0.2h0.1h0.1h0.2h0.1l0.1 7l0.1 23.3l0.2 24.4l0.1 23.9l0.1 15h0.1h0.2h0.1h0.1h0.2h0.1h0.1l0.1-7l0.2-23.3l0.1-24.4l0.1-23.9l0.1-15h0.2h0.1h0.1" stroke="#99ca53" stroke-width="2"/>
<path d="M751.9 417V468.5M757.5 417V462.5M780.1 371.5V417M785.7 371.5V417M791.3 417V455" stroke="#f6a625" stroke-width="2.2"/>
<path d="M768.4 419.9l0.7-0.2l0.7-0.3l0.6-0.5l0.7-0.5l0.7-0.7l0.7-0.8l0.6-0.9l0.7-1l0.7-0.9l0.7-0.6l0.6-0.6l0.7-0.7l0.7-0.7l0.7-0.7l0.6-0.7l0.7-0.7l0.7-0.7l0.7-0.8l0.7-0.7l0.6-0.7l0.7-0.7l0.7-0.9l0.7-0.8l0.6-0.9l0.7-0.8l0.7-0.8l0.7-0.9l0.6-0.8l0.7 0.5l0.7 4.9l0.7 6.6l0.6 8.4l0.7 10.1l0.7 11.6l0.7 10.8l0.6 2l0.7 2.1l0.7 1.8l0.7 1.6l0.6 1.7l0.7 1.6l0.7 1.6l0.7 1.7l0.7 0.3l0.6-12l0.7-22.9l0.7-24.1l0.7-23.8l0.6-10.7l0.6 0.2l0.7 0.2l0.6 0.1l0.5 0.2l0.6 0.2l0.5 0.2l0.6 0.1l0.5 13.3l0.5 23.1l0.5 23.4l0.5 22.3l0.5 7.2h0.5h0.5h0.4h0.5h0.4h0.5h0.4l0.5-14.7l0.4-22.8l0.4-23.2l0.5-22l0.4-5.9h0.4h0.5h0.4h0.4h0.4h0.4h0.4l0.4 15.7l0.4 22.8l0.4 23.2l0.4 21.9l0.4 5h0.4h0.4h0.4h0.4h0.3h0.4h0.4l0.4-16.6l0.3-22.8l0.4-23.1l0.4-21.9l0.3-4.2h0.4h0.4h0.3h0.4h0.3h0.4h0.3l0.4 17.3l0.3 22.8l0.4 23.1l0.3 21.8l0.4 3.6h0.3h0.4h0.3h0.3h0.4h0.3h0.3l0.4-17.9l0.3-22.8l0.3-23.1l0.4-21.8l0.3-3h0.3h0.3h0.4h0.3h0.3h0.3h0.3l0.3 18.4l0.4 22.9l0.3 23.1l0.3 21.7l0.3 2.5h0.3h0.3h0.3h0.3h0.3h0.3h0.3l0.3-19l0.3-22.8l0.3-23l0.3-21.7l0.3-2.1h0.3h0.3h0.3h0.3h0.3h0.3h0.3l0.3 19.2l0.3 22.9l0.3 23l0.3 21.6l0.3 1.9h0.3h0.2h0.3h0.3h0.3h0.3h0.3l0.3-19.5l0.2-22.9l0.3-23l0.3-21.6l0.3-1.6h0.3h0.3h0.2h0.3h0.3h0.3h0.3l0.2 19.8l0.3 22.9l0.3 23l0.3 21.5l0.3 1.4h0.2h0.3h0.3h0.3h0.2h0.3h0.3l0.2-20.1l0.3-22.9l0.3-23l0.3-21.5l0.2-1.1h0.3h0.3h0.2h0.3h0.3h0.2h0.3l0.3 20.3l0.2 22.9l0.3 23l0.3 21.5l0.2 0.9h0.3h0.3h0.2h0.3h0.3h0.2h0.3l0.2-20.5l0.3-23l0.3-22.9l0.2-21.5l0.3-0.7h0.2h0.3h0.3h0.2h0.3h0.2h0.3l0.2 20.8l0.3 22.9l0.3 23l0.2 21.4l0.3 0.5h0.2h0.3h0.2h0.3h0.2h0.3h0.2l0.3-21l0.2-22.9l0.3-23l0.2-21.4l0.3-0.3h0.2h0.3h0.2h0.3h0.2h0.3h0.2l0.3 21.2l0.2 22.9l0.2 23l0.3 21.5l0.2 0.1h0.3h0.2h0.3h0.2h0.2h0.3h0.2l0.3-21.5l0.2-23l0.3-23l0.2-21.3h0.2h0.3h0.2h0.2h0.3l0.2-0.1h0.3l0.2 0.2l0.2 21.5l0.3 23.1l0.2 23l0.2 21.2h0.3h0.2h0.3h0.2h0.2h0.3h0.2l0.2-0.4l0.3-21.5l0.2-23.1l0.2-23l0.3-21h0.2h0.2l0.2-0.1h0.3h0.2h0.2h0.3l0.2 0.6l0.2 21.6l0.3 23.1l0.2 23l0.2 20.9h0.2h0.3h0.2h0.2h0.2h0.3h0.2l0.2-0.7l0.3-21.6l0.2-23.2l0.2-23l0.2-20.7l0.2-0.1h0.3h0.2h0.2h0.2h0.3h0.2l0.2 0.9l0.2 21.7l0.3 23.1l0.2 23.2l0.2 20.5h0.2h0.2h0.3h0.2h0.2h0.2h0.2l0.3-1l0.2-21.7l0.2-23.2l0.2-23.1l0.2-20.5h0.2h0.3h0.2h0.2h0.2h0.2h0.2l0.3 1.2l0.2 21.7l0.2 23.3l0.2 23.1l0.2 20.3h0.2h0.2h0.3h0.2h0.2h0.2h0.2l0.2-1.3l0.2-21.8l0.3-23.2l0.2-23.2l0.2-20.2h0.2h0.2h0.2h0.2h0.2h0.2h0.3l0.2 1.5l0.2 21.8l0.2 23.3l0.2 23.2l0.2 20h0.2h0.2h0.2h0.2h0.2h0.2h0.3l0.2-1.6l0.2-21.8l0.2-23.4l0.2-23.2l0.2-19.9h0.2h0.2h0.2h0.2h0.2h0.2h0.2l0.2 1.8l0.2 21.9l0.2 23.3l0.2 23.3l0.2 19.7h0.2h0.2h0.2h0.3h0.2h0.2h0.2l0.2-1.8l0.2-22l0.2-23.4l0.2-23.2l0.2-19.7h0.2h0.2h0.2h0.2h0.2h0.2h0.2l0.2 2l0.2 22l0.2 23.4l0.2 23.3l0.2 19.5h0.2h0.2h0.2h0.2h0.1h0.2h0.2l0.2-2.1l0.2-22l0.2-23.5l0.2-23.3l0.2-19.4h0.2h0.2h0.2h0.2h0.2h0.2h0.2l0.2 2.3l0.2 22l0.2 23.5l0.2 23.3l0.2 19.3h0.2h0.2h0.1h0.2h0.2h0.2h0.2l0.2-2.3l0.2-22.1l0.2-23.5l0.2-23.3l0.2-19.2h0.2l0.2-0.1h0.2h0.1h0.2h0.2h0.2l0.2 2.5l0.2 22.1l0.2 23.5l0.2 23.3l0.2 19.2h0.2h0.2h0.2h0.1h0.2h0.2h0.2l0.2-2.5l0.2-22.1l0.2-23.6l0.2-23.3l0.2-19.1h0.2h0.1h0.2l0.2-0.1h0.2h0.2h0.2l0.2 2.6l0.2 22.2l0.2 23.6l0.1 23.4l0.2 19h0.2h0.2h0.2h0.2h0.2h0.2h0.1l0.2-2.7l0.2-22.2l0.2-23.6l0.2-23.4l0.2-18.9h0.2h0.1h0.2h0.2h0.2l0.2-0.1h0.2l0.2 2.8l0.2 22.2l0.1 23.7l0.2 23.4l0.2 18.9h0.2h0.2h0.2h0.1h0.2h0.2h0.2l0.2-2.8l0.2-22.3l0.2-23.6l0.1-23.5l0.2-18.8h0.2h0.2h0.2h0.2h0.1h0.2h0.2l0.2 2.8l0.2 22.3l0.2 23.7l0.1 23.5l0.2 18.8h0.2h0.2h0.2h0.2h0.1h0.2h0.2l0.2-3l0.2-22.3l0.2-23.7l0.1-23.5l0.2-18.7h0.2h0.2h0.2h0.1h0.2h0.2h0.2l0.2 3l0.1 22.4l0.2 23.7l0.2 23.5l0.2 18.6l0.2 0.1h0.1h0.2h0.2h0.2h0.2h0.1l0.2-3.1l0.2-22.4l0.2-23.8l0.2-23.5l0.1-18.6h0.2h0.2h0.2h0.2h0.1h0.2h0.2l0.2 3.2l0.2 22.4l0.1 23.8l0.2 23.5l0.2 18.5h0.2h0.1h0.2l0.2 0.1h0.2h0.2h0.1l0.2-3.3l0.2-22.4l0.2-23.9l0.1-23.5l0.2-18.5h0.2h0.2h0.1h0.2h0.2h0.2h0.1l0.2 3.3l0.2 22.5l0.2 23.8l0.2 23.6l0.1 18.4h0.2h0.2h0.2h0.1h0.2h0.2h0.2l0.1-3.4l0.2-22.5l0.2-23.8l0.1-23.6l0.2-18.4h0.2h0.2h0.1h0.2h0.2h0.2h0.1l0.2 3.5l0.2 22.5l0.2 23.9l0.1 23.6l0.2 18.3h0.2h0.2h0.1h0.2h0.2h0.1h0.2l0.2-3.5l0.2-22.6l0.1-23.9l0.2-23.6l0.2-18.2l0.1-0.1h0.2h0.2h0.2h0.1h0.2h0.2l0.1 3.7l0.2 22.6l0.2 23.9l0.2 23.6l0.1 18.2h0.2h0.2h0.1h0.2h0.2h0.2h0.1l0.2-3.7l0.2-22.6l0.1-24l0.2-23.6l0.2-18.1h0.1h0.2h0.2h0.2h0.1h0.2h0.2l0.1 3.8l0.2 22.6l0.2 23.9l0.1 23.7l0.2 18h0.2h0.1h0.2h0.2h0.1h0.2h0.2l0.1-3.8l0.2-22.7l0.2-23.9l0.2-23.7l0.1-18h0.2h0.2h0.1h0.2h0.2h0.1h0.2l0.2 4l0.1 22.6l0.2 24l0.2 23.7l0.1 17.9h0.2h0.2h0.1h0.2h0.2h0.1h0.2l0.2-4l0.1-22.7l0.2-24l0.1-23.7l0.2-17.8h0.2h0.1h0.2h0.2h0.1h0.2h0.2l0.1 4.1l0.2 22.7l0.2 24l0.1 23.6l0.2 17.8h0.2h0.1h0.2h0.1h0.2h0.2h0.1l0.2-4.1l0.2-22.7l0.1-24l0.2-23.7l0.2-17.7h0.1h0.2h0.1h0.2h0.2h0.1h0.2l0.2 4.2l0.1 22.7l0.2 24l0.2 23.7l0.1 17.6h0.2h0.1l0.2 0.1h0.2h0.1h0.2h0.1l0.2-4.3l0.2-22.7l0.1-24.1l0.2-23.7l0.2-17.6h0.1h0.2h0.1h0.2h0.2h0.1h0.2l0.1 4.4l0.2 22.7l0.2 24l0.1 23.8l0.2 17.5h0.1h0.2h0.2h0.1h0.2h0.1h0.2l0.2-4.4l0.1-22.8l0.2-24l0.1-23.7l0.2-17.5h0.2h0.1h0.2h0.1h0.2h0.2h0.1l0.2 4.5l0.1 22.7l0.2 24.1l0.2 23.7l0.1 17.4h0.2h0.1h0.2h0.2h0.1h0.2h0.1l0.2-4.5l0.1-22.8l0.2-24.1l0.2-23.7l0.1-17.3h0.2h0.1h0.2h0.1h0.2h0.2h0.1l0.2 4.5l0.1 22.8l0.2 24.1l0.1 23.8l0.2 17.3h0.2h0.1h0.2h0.1h0.2h0.1h0.2l0.2-4.7l0.1-22.8l0.2-24.1l0.1-23.7l0.2-17.3h0.1h0.2h0.2h0.1h0.2h0.1h0.2l0.1 4.7l0.2 22.8l0.1 24.2l0.2 23.7l0.2 17.2h0.1h0.2h0.1h0.2h0.1h0.2h0.1l0.2-4.8l0.1-22.8l0.2-24.1l0.2-23.8l0.1-17.1h0.2h0.1h0.2h0.1h0.2h0.1h0.2l0.1 4.8l0.2 22.9l0.2 24.1l0.1 23.7l0.2 17.1h0.1h0.2h0.1h0.2h0.1h0.2h0.1l0.2-4.8l0.1-22.9l0.2-24.1l0.1-23.8l0.2-17h0.2h0.1h0.2h0.1h0.2l0.1-0.1h0.2l0.1 5l0.2 22.9l0.1 24.1l0.2 23.8l0.1 17h0.2h0.1h0.2h0.1h0.2h0.1h0.2l0.1-5l0.2-22.9l0.2-24.2l0.1-23.7l0.2-17h0.1h0.2h0.1h0.2h0.1h0.2h0.1l0.2 5.1l0.1 22.9l0.2 24.1l0.1 23.8l0.2 16.9h0.1h0.2h0.1h0.2h0.1h0.2h0.1l0.2-5.1l0.1-22.9l0.2-24.2l0.1-23.8l0.2-16.8h0.1h0.2h0.1h0.2h0.1h0.2h0.1l0.2 5.1l0.1 23l0.2 24.2l0.1 23.7l0.2 16.8h0.1h0.2h0.1h0.2h0.1h0.2h0.1l0.2-5.2l0.1-22.9l0.2-24.2l0.1-23.8l0.2-16.7h0.1h0.1h0.2l0.1-0.1h0.2h0.1h0.2l0.1 5.3l0.2 23l0.1 24.2l0.2 23.8l0.1 16.7h0.2h0.1h0.2h0.1h0.2h0.1h0.2l0.1-5.3l0.2-23l0.1-24.2l0.2-23.8l0.1-16.7h0.1h0.2h0.1h0.2h0.1h0.2h0.1l0.2 5.4l0.1 23l0.2 24.2l0.1 23.8l0.2 16.6h0.1h0.2h0.1h0.1h0.2h0.1h0.2l0.1-5.4l0.2-23l0.1-24.3l0.2-23.8l0.1-16.5h0.2h0.1h0.2h0.1h0.1h0.2h0.1l0.2 5.5l0.1 23l0.2 24.2l0.1 23.8l0.2 16.5h0.1h0.1h0.2h0.1h0.2h0.1h0.2l0.1-5.5l0.2-23l0.1-24.3l0.2-23.8l0.1-16.4h0.1h0.2h0.1l0.2-0.1h0.1h0.2h0.1l0.1 5.6l0.2 23.1l0.1 24.2l0.2 23.9l0.1 16.4h0.2h0.1h0.2h0.1h0.1h0.2h0.1l0.2-5.7l0.1-23l0.2-24.3l0.1-23.8l0.1-16.4h0.2h0.1h0.2h0.1h0.2h0.1h0.1l0.2 5.7l0.1 23.1l0.2 24.2l0.1 23.9l0.2 16.3h0.1h0.1h0.2h0.1h0.2h0.1h0.2l0.1-5.7l0.1-23.1l0.2-24.3l0.1-23.8l0.2-16.3h0.1h0.2h0.1h0.1h0.2h0.1h0.2l0.1 5.8l0.1 23l0.2 24.4l0.1 23.8l0.2 16.2h0.1h0.1h0.2h0.1h0.2h0.1h0.2l0.1-5.8l0.1-23.1l0.2-24.3l0.1-23.9l0.2-16.1h0.1h0.1h0.2h0.1h0.2l0.1-0.1h0.1l0.2 5.9l0.1 23.1l0.2 24.4l0.1 23.8l0.1 16.2h0.2h0.1h0.2h0.1h0.1h0.2h0.1l0.2-6l0.1-23.1l0.1-24.3l0.2-23.9l0.1-16.1h0.2h0.1h0.1h0.2h0.1h0.2h0.1l0.1 6l0.2 23.1l0.1 24.4l0.1 23.8l0.2 16.1h0.1h0.2h0.1h0.1h0.2h0.1h0.2l0.1-6l0.1-23.2l0.2-24.3l0.1-23.9l0.2-16h0.1h0.1h0.2h0.1h0.1h0.2h0.1l0.2 6.1l0.1 23.1l0.1 24.4l0.2 23.9l0.1 15.9h0.1h0.2h0.1h0.2h0.1h0.1h0.2l0.1-6.1l0.1-23.2l0.2-24.3l0.1-23.9l0.2-15.9h0.1h0.1h0.2h0.1h0.1h0.2h0.1l0.2 6.1l0.1 23.2l0.1 24.4l0.2 23.9l0.1 15.9h0.1h0.2h0.1h0.1h0.2h0.1h0.2l0.1-6.2l0.1-23.2l0.2-24.4l0.1-23.9l0.1-15.9h0.2h0.1h0.1h0.2h0.1h0.2h0.1l0.1 6.3l0.2 23.2l0.1 24.4l0.1 23.9l0.2 15.8h0.1h0.1h0.2h0.1h0.1h0.2h0.1l0.1-6.3l0.2-23.2l0.1-24.4l0.2-23.9l0.1-15.8h0.1h0.2h0.1h0.1h0.2h0.1h0.1l0.2 6.3l0.1 23.3l0.1 24.4l0.2 23.9l0.1 15.7h0.1h0.2h0.1h0.1h0.2h0.1h0.1l0.2-6.4l0.1-23.2l0.1-24.4l0.2-23.9l0.1-15.7h0.2h0.1h0.1h0.2h0.1h0.1h0.2l0.1 6.4l0.1 23.2l0.2 24.5l0.1 23.9l0.1 15.6h0.2h0.1h0.1h0.2h0.1h0.1h0.2l0.1-6.4l0.1-23.3l0.2-24.4l0.1-23.9l0.1-15.6h0.2h0.1h0.1h0.2h0.1h0.1h0.2l0.1 6.5l0.1 23.2l0.2 24.4l0.1 23.9l0.1 15.6h0.2h0.1h0.1h0.2h0.1h0.1h0.2l0.1-6.5l0.1-23.3l0.2-24.4l0.1-23.9l0.1-15.5h0.1h0.2h0.1h0.1h0.2h0.1h0.1l0.2 6.6l0.1 23.2l0.1 24.4l0.2 23.9l0.1 15.5h0.1h0.2h0.1h0.1h0.2h0.1h0.1l0.2-6.6l0.1-23.2l0.1-24.4l0.2-23.9l0.1-15.5h0.1h0.1h0.2h0.1h0.1h0.2h0.1l0.1 6.6l0.2 23.3l0.1 24.4l0.1 23.9l0.2 15.4h0.1h0.1h0.2h0.1h0.1h0.1h0.2l0.1-6.7l0.1-23.2l0.2-24.4l0.1-23.9l0.1-15.4h0.2h0.1h0.1h0.2h0.1h0.1h0.2l0.1 6.7l0.1 23.2l0.1 24.4l0.2 23.9l0.1 15.4h0.1h0.2h0.1h0.1h0.2h0.1h0.1l0.1-6.7l0.2-23.3l0.1-24.4l0.1-23.9l0.2-15.3h0.1h0.1h0.2h0.1h0.1h0.1h0.2l0.1 6.8l0.1 23.2l0.2 24.4l0.1 23.9l0.1 15.3h0.2h0.1h0.1h0.1h0.2h0.1h0.1l0.2-6.8l0.1-23.2l0.1-24.5l0.2-23.8l0.1-15.3h0.1h0.1h0.2h0.1h0.1h0.2h0.1l0.1 6.8l0.1 23.3l0.2 24.4l0.1 23.9l0.1 15.2h0.2h0.1h0.1h0.1h0.2h0.1h0.1l0.2-6.8l0.1-23.3l0.1-24.4l0.1-23.9l0.2-15.2h0.1h0.1h0.2h0.1h0.1h0.1h0.2l0.1 6.9l0.1 23.3l0.2 24.4l0.1 23.8l0.1 15.2h0.1h0.2h0.1h0.1h0.2h0.1h0.1l0.1-6.9l0.2-23.3l0.1-24.4l0.1-23.9l0.2-15.1h0.1h0.1h0.1h0.2h0.1h0.1h0.1l0.2 6.9l0.1 23.3l0.1 24.4l0.2 23.9l0.1 15.1h0.1h0.1h0.2h0.1h0.1h0.1h0.2l0.1-7l0.1-23.3l0.2-24.4l0.1-23.8l0.1-15.1h0.1h0.2h0.1h0.1h0.1h0.2h0.1l0.1 7l0.2 23.3l0.1 24.4l0.1 23.9l0.1 15h0.2h0.1h0.1h0.1h0.2h0.1h0.1" stroke="#f6a625" stroke-width="2"/>
<path d="M1061 371.9l10 0.2l2-0.8l4 0.8h4l2-0.7l8 0.4l2-0.5l4 0.3l2 0.5l4-0.7l2 0.6l2-0.6l2 0.5l4-0.6l2 0.8l2-0.6h2l2 0.7l4-0.6l2 0.6l6-0.7l2 0.6l4 0.1l8-0.8l8 0.4l2-0.5l2 0.6l4-0.3l2 0.4l4-0.4l4 0.3l2-0.5l2 0.8l2-0.9l4 0.8l2-0.8l2 0.7l6-0.7l4 0.2l2 0.7l2-0.7l6 0.6l2-0.5l6 0.4l2-0.6l2 0.6l4 0.1l2-0.8l2 0.9l2-0.8l6 0.7l2-0.5l2 0.5l10-0.7l6 0.8l2-0.8l2-0.1l2 0.9l6-0.7l4 0.5l6-0.6l2 0.7l2-0.8l4 0.8l2-0.7l4 0.8l4-0.2l2-0.6h4l2 0.7l2-0.5l4 0.6l18-0.8l4 0.8l10-0.8l6 0.7l2-0.5l2 0.4h8l6-0.4l4 0.4l4-0.4l2 0.6l6-0.9l2 0.5l2-0.3l6 0.5l6-0.4l6 0.4l2-0.4l2 0.5l6 0.1l8-0.8l4 0.7l2-0.4l6 0.3l2-0.5l2 0.5l6-0.3l4 0.3l4-0.1l2-0.6l6 0.6l2-0.4l2 0.4l4-0.6l2 0.4l14-0.4l6 0.6l4-0.4l2 0.6l2-0.8l2 0.4l6-0.3l2 0.6l4-0.7l2 0.6l2-0.5l8 0.8l12-0.8l8 0.8l4-0.6l2 0.5l2-0.8l6 0.6l2-0.5l4 0.7l2-0.5h6l2 0.6l2-0.6l2 0.6l6-0.7l2 0.7l6-0.6l2 0.6l8-0.8l2 0.5l4-0.3l4 0.4l2-0.7l2 0.5l2-0.3l2 0.6l8-0.7l2 0.8l2-0.6l10 0.4l2-0.6l2 0.6l2-0.4l14 0.4l4-0.7l6 0.8l6-0.8l2 0.7l10-0.3l2 0.4l2-0.5l4 0.5l2-0.6l4 0.5l2-0.6l2 0.7l6-0.5l4 0.5l2-0.7l4 0.4l6-0.4l4 0.6l2-0.6l4 0.6l4-0.1l2-0.6l2 0.7l4 0.2l4-0.9l2 0.8l2-0.6l4 0.7l4-0.8l4 0.7l2-0.7l2 0.4l4-0.4l2 0.5l2-0.6l8 0.1l6 0.7l2-0.7l10 0.7l4-0.7l2 0.5l2-0.5l6 0.7l6-0.6h4l2 0.5l4-0.6l6 0.6l2-0.5l2 0.4l4-0.5l2 0.5l4-0.5l2 0.4l2-0.3l2 0.6l4-0.5l2 0.4l2-0.7l2 0.7l2-0.7l2 0.1v95.9h-818z" fill="#f6a625" stroke="none"/>
<path d="M813.5 370.4v1.8M829.3 370.4v1.6M842.4 370.4v1.6M857.5 370.4v2.2M887.5 370.4v1.6M899.6 370.4v2.2M922.5 370.4v1.6M949.3 370.4v1.6M975.9 370.4v1.8M988.5 370.4v1.6M1008.1 370.4v1.8M1021 370.4v1.8M1032.5 370.4v2.2M1057.8 370.4v2.2M1076.7 370.4v1.6M1089.7 370.4v1.6M1116.4 370.4v2.2M1137.2 370.4v1.8M1158.7 370.4v2.2M1169.3 370.4v2.2M1193.8 370.4v2.2M1209.8 370.4v1.6M1220.7 370.4v1.8M1247.1 370.4v2.2M1294.9 370.4v2M1311.3 370.4v1.6M1393.5 370.4v2M1427.9 370.4v1.6M1438 370.4v1.6M1510.6 370.4v2M1522.7 370.4v2M1581.4 370.4v1.6M1607 370.4v2M1620.8 370.4v1.6M1662.2 370.4v2M1677.4 370.4v2M1699 370.4v2M1705.8 370.4v2M1762.3 370.4v2M1800.3 370.4v1.6M1813.7 370.4v1.6M1819.7 370.4v2M1830.5 370.4v2M1844.5 370.4v2" stroke="#209fdf" stroke-width="1.2"/>
<path d="M1276.6 370.4v5M1337.7 370.4v12M1362.4 370.4v3M1376 370.4v15M1418.6 370.4v12M1462.7 370.4v12M1474.1 370.4v15M1484.3 370.4v15M1532 370.4v15M1560.3 370.4v12M1633.8 370.4v3M1639.8 370.4v15M1646 370.4v12M1685.1 370.4v3M1711 370.4v3M1723.7 370.4v12M1739.9 370.4v12M1750.5 370.4v5M1772.7 370.4v12M1781.1 370.4v5M1789.3 370.4v3M1794.5 370.4v15M1850.7 370.4v12M1858.9 370.4v15M1870 370.4v12M1877.2 370.4v12" stroke="#209fdf" stroke-width="0.9" stroke-opacity="0.55"/>
<path d="M813.5 370.4v1.6M817.1 370.4v2.2M824.4 370.4v1.8M831.9 370.4v1.6M838.8 370.4v2.2M844.2 370.4v2.2M848.4 370.4v2.2M854.2 370.4v2.2M857.3 370.4v1.6M864.6 370.4v1.8M870.1 370.4v2.2M875.6 370.4v1.6M879.6 370.4v1.8M884.8 370.4v1.6M892.5 370.4v1.6M896.3 370.4v1.8M900.2 370.4v2.2M908.4 370.4v1.8M915.7 370.4v1.6M922.5 370.4v2.2M929.9 370.4v1.8M938.4 370.4v2.2M941.9 370.4v2.2M944.9 370.4v1.8M952 370.4v1.6M957.6 370.4v1.6M963 370.4v1.6M970.1 370.4v2.2M973.9 370.4v2.2M981.7 370.4v1.8M989.5 370.4v2.2M994.3 370.4v2.2M1000.6 370.4v2.2M1004 370.4v1.8M1007.9 370.4v1.6M1011 370.4v1.6M1016.7 370.4v1.8M1025.6 370.4v1.6M1030.4 370.4v1.8M1037.5 370.4v2.2M1042.9 370.4v1.8M1046.7 370.4v1.6M1054.4 370.4v1.8M1060.3 370.4v1.8M1064 370.4v1.6M1070.4 370.4v1.8M1075.4 370.4v1.6M1083.7 370.4v1.8M1092.4 370.4v2.2M1096.7 370.4v1.6M1102.6 370.4v1.6M1109 370.4v1.6M1116.4 370.4v1.6M1122.4 370.4v1.8M1130.1 370.4v1.6M1135.4 370.4v1.8M1138.8 370.4v1.6M1145 370.4v1.8M1152.7 370.4v1.8M1159.2 370.4v1.8M1164.2 370.4v1.6M1171.3 370.4v1.6M1176.7 370.4v1.8M1182.9 370.4v1.6M1189.2 370.4v2.2M1196.1 370.4v1.8M1202.3 370.4v2.2M1209.9 370.4v2.2M1215.7 370.4v1.8M1219.8 370.4v1.6M1225 370.4v1.6M1232.3 370.4v1.8M1237.5 370.4v1.6M1240.6 370.4v2.2M1246.5 370.4v2.2M1251.1 370.4v2.2M1257.2 370.4v1.8M1263.6 370.4v2.2M1270.2 370.4v2.2M1296.9 370.4v2M1327.5 370.4v2M1331.5 370.4v2M1358.2 370.4v1.6M1366.1 370.4v1.6M1382.9 370.4v2M1390.5 370.4v1.6M1398.7 370.4v2M1437.5 370.4v2M1443.7 370.4v2M1480.1 370.4v2M1510 370.4v2M1518.3 370.4v2M1527.1 370.4v1.6M1559 370.4v2M1575.7 370.4v2M1580.7 370.4v1.6M1589.1 370.4v2M1601.2 370.4v1.6M1607.8 370.4v2M1621.9 370.4v2M1625.3 370.4v1.6M1638.4 370.4v2M1647.2 370.4v1.6M1651.5 370.4v2M1664.9 370.4v2M1672.8 370.4v2M1678.9 370.4v2M1690.4 370.4v1.6M1695 370.4v2M1711.4 370.4v2M1717.1 370.4v2M1721.6 370.4v2M1724.9 370.4v2M1732.6 370.4v1.6M1734.9 370.4v2M1742.3 370.4v2M1750.2 370.4v1.6M1754.1 370.4v2M1772.7 370.4v1.6M1777 370.4v1.6M1794.1 370.4v2M1797.6 370.4v2M1809.5 370.4v1.6M1812.3 370.4v2M1814.1 370.4v1.6M1816.6 370.4v2M1827 370.4v2M1831.2 370.4v2M1835.3 370.4v2M1852.5 370.4v1.6M1860 370.4v2M1867.9 370.4v2M1875.2 370.4v2" stroke="#99ca53" stroke-width="1.2"/>
<path d="M1277.5 370.4v5M1280.6 370.4v15M1288.8 370.4v8M1302.9 370.4v8M1308.3 370.4v12M1315.5 370.4v15M1322.3 370.4v15M1336.2 370.4v5M1343 370.4v3M1346.1 370.4v15M1354.9 370.4v5M1372.6 370.4v8M1377.2 370.4v15M1395 370.4v8M1403.9 370.4v8M1411.7 370.4v3M1417.2 370.4v8M1423.6 370.4v8M1431.7 370.4v15M1449 370.4v5M1457.2 370.4v15M1462.2 370.4v5M1468.2 370.4v12M1475.2 370.4v5M1487.6 370.4v15M1495.4 370.4v15M1501.8 370.4v8M1534.8 370.4v3M1543.1 370.4v5M1549 370.4v5M1553.9 370.4v3M1565.1 370.4v8M1570.1 370.4v5M1596.4 370.4v15M1603.6 370.4v8M1611.4 370.4v12M1614.2 370.4v12M1617.3 370.4v8M1619.7 370.4v5M1627.7 370.4v12M1632.2 370.4v15M1635.9 370.4v3M1641.4 370.4v3M1643.7 370.4v8M1649.3 370.4v12M1656.4 370.4v12M1661.2 370.4v12M1668 370.4v8M1675 370.4v12M1681.9 370.4v8M1685.9 370.4v5M1698.8 370.4v3M1700.7 370.4v5M1704.5 370.4v15M1707.7 370.4v3M1715.2 370.4v5M1719.9 370.4v15M1729.5 370.4v8M1736.9 370.4v12M1738.9 370.4v15M1745.9 370.4v5M1747.7 370.4v15M1757.5 370.4v12M1761.8 370.4v15M1765 370.4v12M1767.9 370.4v12M1780.3 370.4v5M1785.2 370.4v8M1789.8 370.4v5M1799.9 370.4v8M1804 370.4v12M1807.1 370.4v3M1820.2 370.4v15M1824 370.4v15M1828.8 370.4v3M1832.9 370.4v12M1838.8 370.4v15M1841.9 370.4v3M1844.3 370.4v15M1848 370.4v15M1855.5 370.4v5M1862.4 370.4v15M1865.6 370.4v5M1871 370.4v8M1877.2 370.4v3" stroke="#99ca53" stroke-width="0.9" stroke-opacity="0.55"/>
<path d="M751.9 366.2V418M757.5 370V418M763.2 372.2V418M768.8 373.3V418M774.4 376.7V418M780.1 378.9V418M785.7 374.5V418M791.3 378.9V418M797 391V418M802.6 405.6V418" stroke="#0000ff" stroke-width="2.3"/>
<path d="M751.5 416l44.5 0.1l9-0.6l0.5-0.9l1.5 2l1-1.1l1.5 0.7l0.5-0.9l0.5-0.3l1.5 1.9l1.5-1.5l1.5-0.5l0.5-0.8l0.5 0.2l0.5-0.7l1 0.2l1.5-1.1l1.5 6.7l0.5-3.4l1 0.6l0.5-0.6l1-2.1l1.5-0.5l0.5 0.6l0.5-0.1l1.5-1.4l0.5 0.6l1 4.5l0.5-2.3l1.5 0.3l1-0.8l1.5 0.3l1.5-2.7l0.5 0.5l0.5-0.6l0.5 0.9l0.5 2.1l0.5 3l0.5-2.4l1.5-1.6l0.5 0.4l1.5-1.4l1 0.1l1 4.6l0.5-1.6l0.5 0.1l1.5-1.7l0.5-0.1l0.5-1h1.5l0.5-0.8l0.5 0.2l1 4.8l0.5-3.1l1.5 0.8l1-1.6l1-0.7l0.5 0.2l1.5-1.6l0.5 0.6l1 5.4l0.5-2.1l1 0.3l1.5-1.8l0.5-0.1l1 0.5l1.5-1.6l1 0.7l1.5 0.1l1 5.7l0.5-1.9l0.5-0.1l0.5-0.8l2-0.3l1 0.6l1.5-2.6h1.5l0.5-0.5l2 0.7l0.5-1.1l0.5 0.6l1 5.8l0.5-1.3l0.5-0.2l1.5 0.1l2-1.5l0.5 0.2l0.5-0.9l0.5 0.3l0.5-0.6l2-0.1l2-1.9l1-0.4l0.5 1l0.5 2.5l0.5 3.3l0.5-0.7l0.5 0.5l1.5-2.3l1.5 0.5l1.5-1.3l1-0.1l0.5 0.7l1.5-0.8l1 0.5l1-1.7l0.5-0.2l3 1.1l1.5-2.4l0.5 0.7h0.5l0.5 2.9l1 4.2l0.5-2.3l1 0.8l3-1.7l1 0.7l1.5-1.5l1 0.6l1.5-1.3l1.5 1.1l1-1.1l1.5 0.7l1.5-0.2l0.5-0.7l2-1.1l1 0.7l2.5-0.5l1 0.8l1-0.9l1-0.1l0.5 2l1 6l0.5-2l1.5 0.2l1-1.6l1-0.8l1 0.4l0.5-0.4h1l0.5 0.7l0.5-0.7l0.5 0.5l0.5-0.4l0.5 0.6l1 0.1l2-1.9l1.5 1l1-1.2l2 0.8l1-0.3l1 0.6l0.5 0.8l2-1.5l1.5 1.4l2-1.1h2.5l1 0.4l0.5 0.8l1.5 0.2l1-0.6l0.5-1l2 1.4l1-0.8l0.5 0.3l1 3.6l0.5 0.6l0.5 4.8l1-3.5l1-4.6l0.5-0.7l2 0.9l1-1h0.5l1 1.1l0.5-0.5l1.5-0.2l1-0.8l1 0.6l0.5-0.3l0.5 0.5l1.5-1.1l1 0.7l1 0.2l0.5-0.3l0.5 0.4l2-1.5l2.5 1.3l1.5-0.3l2.5 0.7l1.5-0.6l1.5 0.5l2-0.8l0.5 0.4l0.5-0.3l1.5 0.3l1.5-0.6l0.5 0.7h1l1-0.9l1-0.2l1 1.3l2-0.8l2 0.9l1.5-0.8h2l0.5 0.8l1 0.4l0.5-0.8l1-0.6l0.5 0.9l1 0.6l0.5-0.9l2 1.1l0.5-0.7l0.5 0.1l0.5-0.5l0.5 0.8l0.5-0.1l0.5 0.6l1.5-1.4l0.5 0.7l1.5 4.7l0.5 4.6l1-5.1l1-3.4l1-0.4l1-1.1l1 0.6l1-0.1l1.5 0.9l4.5-1.2l0.5 0.7l1 0.1l0.5-0.9l0.5-0.2l1.5 1.4l0.5-0.6l1 0.1l0.5 0.5l1.5-0.7l1.5 1l1-0.6l1 0.5l1.5-0.4l1.5 0.9l1.5-1.1l3.5-0.4l1.5 1l2.5 0.6l1.5-1l0.5 0.5l1-0.1l3.5-1.8l1 1.1l1 0.1l0.5-0.6l0.5 0.5l0.5-0.4l1.5 0.7l2.5-0.4l1 1.4l1.5-1.3l1 0.7l1-0.6l1.5 0.7l1.5-0.1l0.5-0.8l0.5 0.1l0.5-0.6l0.5 0.3l1-0.2l1.5 1l0.5-0.3l0.5 0.7l1 0.3l1.5-1.2l0.5 0.7l0.5-0.4l0.5 0.1l0.5-0.7l0.5 0.1l1.5 1.6l0.5-0.1l1.5-1.4l1.5 1.4l1.5-0.3l0.5 0.4l2-0.7l1.5 1.2l0.5-0.9l1-0.6l0.5 0.8l0.5-0.5l0.5 0.1l0.5-0.8l0.5 0.6l1 0.1l1-1.1l1.5 1.5l1.5 5.1l0.5 4.7l0.5-2.7l1.5-6.3l0.5-0.7l2.5-0.5l1.5 0.4l0.5-0.6l2.5 0.3l1.5-0.8l3 1.6l2-0.3l2.5 0.7l0.5-0.5l1 0.1l1 0.5l0.5-0.9l0.5 0.2l0.5-0.6l0.5 0.6h1l1-0.7l1.5 1.1l1-1.1l4 1.3l1.5-1.2l1 0.7l3-1.1l1 0.6l1 1.3l2.5-0.8l1.5-1.1l1 0.3l0.5-0.3l1.5 1.1l1-1.1l1.5 1l0.5-0.6l1.5 0.8l0.5-0.5l1.5 0.9l2-1.1l1 0.5l1.5-1.3l1.5 1.3l2 0.3l0.5-0.7l0.5 0.1l2-0.8l2 1.5l2-0.8l0.5 0.7l1 0.4l1-1.1l2-0.3l2 1.6l1.5-0.6l0.5-0.7l1.5 0.7l1-0.8l2.5 1.5l1-1l1 0.7l1-0.7l0.5-0.1l0.5 0.6l3-0.9l1 1.5l2-0.4l1-1.2l2 0.8l1 0.1l0.5-0.4l0.5 0.8h2l1.5-0.7l0.5 0.8l1 0.2l1-1.2l1.5-0.5l0.5 0.4l1.5 0.2l0.5 0.7l1 0.3l1.5-1.3h0.5l0.5 0.9l1 0.8l2-1.5l2 0.4l1.5-0.8l0.5 1l1 0.5l0.5-0.7l1 0.3l0.5 0.6l2-1.3l0.5 0.4l0.5-0.3l0.5 0.7l0.5-0.6l0.5 0.3l1.5-1l0.5 0.7l1.5 0.6l0.5 0.6l1.5-0.6l0.5 0.6l1-0.7l2-0.2l0.5 0.6l2-0.9l0.5 0.4l0.5 2l1 4.1l0.5 3.6l1-5.2l0.5-2.1l1-2.5l1 1.3l1 4.1l0.5-5l3 0.6l2-1.2l0.5 0.8l1-0.1l0.5-0.7l0.5 0.5l0.5-0.2l0.5 0.7l0.5-0.5l0.5 0.3l2-0.3l0.5 0.3l1-0.1l1.5-1.1l1.5 1.5l1.5-0.7l1.5 0.6l3.5-0.9l1 1.4l2.5-1.2l0.5-0.7l1 1.1l1-0.3l1.5 0.5l0.5 1.6l0.5 0.1l1-1.7l1 0.2l0.5 0.5l0.5 3l0.5 0.9l0.5-1.7l0.5-2.7l1-0.7l1 0.7l1 1.3l1 0.4l0.5-1.5l0.5 0.4l0.5-0.9l1-0.5l0.5 0.8l1.5 0.9l0.5 2.9h0.5l0.5-2.4l0.5-1.7l0.5 0.8l1-0.9l0.5-1l1.5 2.5l1-1.9h0.5l0.5 0.8l1.5-0.7l0.5 2.1l0.5 0.3l0.5-0.8l0.5-2.5l2.5 3.2l0.5-0.4l0.5-1.2h1l0.5 0.8l0.5 2.6l0.5 0.9l0.5-1.6l0.5-2.7l1.5-0.2l0.5 1.6l0.5 0.4l0.5-0.9l0.5-1.6l0.5-0.5l1 0.9l0.5 2l0.5 0.8l0.5-1l0.5-2l0.5 0.1l1 1.7l0.5-0.9l1-0.5l0.5 0.3l0.5-0.8l2 0.7l1-0.6l0.5 2.4l0.5 1l0.5-0.2l0.5-2.9l1 0.9l1-0.4l0.5-0.7l0.5 2.1h1l0.5-1.5h1.5l0.5 3.1l0.5-0.6l1-3.8l0.5 0.6l0.5-0.2l0.5 0.7l1 0.2l0.5-0.8l1-0.1l1 3.4l0.5-0.4l0.5-2.3l1 0.5l1.5-1.1l1-0.2l0.5 0.9l0.5 3l0.5-0.2l0.5-2.4l0.5-1.4l0.5-0.1l1 0.8l0.5 2.1l0.5 0.2l1-2.4l0.5-0.5l1 0.7l0.5 2.1l0.5 0.3l1.5-2.1l1.5-0.2l1 3.8l0.5 0.2l0.5-3.1l1.5-2.1l1.5 1.8l0.5 2.2l0.5 0.3l0.5-2.4l0.5-1.1l1.5 2.7l0.5-2.6l1 0.6l1.5-1l0.5 0.5l1 3.2h0.5l0.5-2.6l1.5 0.6l1-1.7l0.5-0.1l0.5 1.8l0.5 0.8l1-1.6l1.5-0.7l0.5 2.7l0.5 0.7l0.5-1.8l1-1.4l0.5 0.6l0.5-0.4l1 1.2l1-1.6l1 0.5l0.5 2.8l0.5 1.1l0.5-0.6l0.5-3.9l0.5-0.3l1 0.8l0.5 1.2l0.5 0.2l0.5 1.5l0.5 0.3l1-2.8l0.5-0.3h1l0.5 0.7l1 0.2l1-1l1 1l1.5-0.6l1 0.5l1.5-1.1l0.5 0.1l1 1.6l1-1.1l2-0.8l1.5 0.8l0.5 1.3h0.5l0.5-0.9l0.5-1.5l0.5 0.9l1 0.6l0.5-0.5l0.5 0.6l0.5-0.5l1.5 0.9l0.5-0.6l1-0.1l1.5 0.6l2.5-1.4h1l1.5 1.2l0.5-0.3l0.5 0.5l1.5-0.9l0.5 0.5l1.5-0.6l0.5 0.5l0.5-0.3l2 0.8l0.5 7.6h1.5l0.5-8.2l2 0.1l1-0.7l1-0.1l1 0.7l1.5 0.2l0.5-0.5l0.5 0.5l0.5-0.6l0.5 0.9h1l0.5-0.7l1.5 1.4l2-0.2l1.5-1.2l1.5 0.9l1.5 0.4l0.5 7.1h1l0.5-9.1l1.5 0.6l1.5 1.4l1.5-1.6l1 1l1-1l1-0.1l0.5 8.8h4l0.5-8l1.5-0.3l1 1.2l1.5-1.8l0.5 0.5l1-0.2l0.5-0.8l1 1.2l1-0.2l0.5-0.7l1 1.2l1-0.1l0.5 0.6h0.5l1-1.2l0.5 0.8l1.5-0.6l0.5 2.4l0.5 0.9l1-3l1 0.4l0.5-0.9l1.5 0.9h1l1.5 1l1-1.2l1 1.1l0.5 1.9l0.5-0.9l1-2.8h0.5l0.5 4.5l0.5 0.2l1-2.8l1 0.2l0.5-1.4l3 0.1l1.5 1.7l0.5-1.1l0.5-0.4l1.5 1.2l0.5 2.4l0.5 0.4l0.5-1.8l1-2.7l2-0.4l0.5 0.9l1 0.5l1 1.6l1-2.5h0.5l0.5 0.9l1 0.8l0.5-0.2l0.5-1.1l0.5 1.7l1.5-1.8l0.5 1.9l1.5-1.6l3-0.3l1 1.1l0.5-0.4l0.5 1.4l1-1.4l0.5-1.2l1 0.8l0.5 1.8l1.5-2.2l0.5 2.2l0.5 0.2l1-2.2l0.5 0.3l1-0.9l0.5 0.1l0.5 1.1l0.5 0.2h0.5l0.5-0.7l1-0.1l0.5 0.8l0.5 1.7l0.5-0.3l1-2.8l1.5 0.5l1 2.9l0.5 0.2l0.5-3l0.5 1.1l0.5 0.1l1-1l1.5 1l0.5 0.9l0.5-0.4l0.5-2.1l0.5-0.3l0.5 0.1l1 1.8l1-1.4l1 0.3l0.5 1.6l1.5-0.9l0.5 1.8l0.5 0.4l0.5-2.2l1-1.1l0.5 1.8l1-0.2l1-1.3l0.5-0.1l0.5 0.4l0.5 1.2l0.5-0.3l0.5-1l1 1.5l0.5 0.2l0.5-1.6l1 1.1l1-1.2h0.5l0.5 0.7h0.5l0.5 3l0.5 0.4l0.5-3.1l0.5-1.2h1.5l0.5 1.6l0.5 0.5l0.5-0.4l0.5-1.2l1-0.8l0.5 0.3l0.5 3.8l0.5 2.1l0.5-0.5l0.5-4.4l1-1l0.5 3.8l0.5-0.3l1-3.2l0.5 0.8l1-0.5l0.5 2.2l0.5 1.3l0.5-0.5l0.5-4.4l0.5-0.1l0.5 3.9l0.5 0.9l0.5-1.4l0.5-3.1l0.5-0.5l1 1l0.5 2.2l0.5 3.3l0.5-0.1l0.5-3.7l2-2.4l0.5 2.9l0.5 1.7l0.5-0.6l0.5-3.3h0.5l0.5 1.5l0.5 3.1l0.5 0.7l0.5-3.5l0.5-1.4l0.5-0.3l1 0.5l1 4.8l0.5-0.2l0.5-4.3l0.5-0.9l1 0.5l0.5 4.4l0.5-0.1l1-4.3l0.5-0.3l0.5 0.7l0.5 4.9l0.5 0.6l0.5-3.5l0.5-2.5l0.5-0.6l0.5-0.2l1 4.9l0.5 0.2l0.5-4.3l1 0.6l1.5-1.9l0.5 3.9l0.5 1.2l0.5-1l0.5-3.5l0.5 1.9l0.5 3.9l0.5 0.3l0.5-3.2l0.5-1.6l0.5-0.7l0.5-0.2l1 4l0.5-0.8l0.5-3.5l1 0.6l0.5-0.6l0.5 1.8l0.5 3.1l0.5 0.3l0.5-4.2l1-0.3l1 0.9l0.5 4.3l0.5-0.5l1-5.5l1.5 0.2l0.5 3.3l0.5 1.1l0.5-1.2l0.5-3.7l0.5-0.4l0.5 0.5l0.5 5.5l0.5 1l0.5-2.5l0.5-3.2l1-0.6l0.5 1.8l0.5 2.6l0.5-0.1l0.5-4l1-0.2l0.5 0.8l0.5-0.3l0.5 4l0.5 0.3l0.5-1.2l0.5-3.8l0.5 0.4l1 5l0.5-1.3l0.5-4.1l0.5-0.3l1 1.1l0.5 3l0.5 1l0.5-1.2l0.5-2.9l0.5-0.1l1-1.2l0.5 0.5l0.5 4.9l0.5 0.4l1-5.6l0.5 0.4l0.5-0.2l0.5 0.3l0.5 3.5l0.5 1.8l0.5-1l0.5-4l0.5-0.2l0.5 3.4l0.5 1.3l0.5-0.6l0.5-4l1.5 0.7l0.5 1.5l0.5 2.2l0.5-0.3l0.5-3.2l0.5-0.8l1 1.1l0.5 4.8l0.5-0.3l0.5-3.2l0.5-2.3l1.5-0.6l0.5 0.9l0.5 3.4l0.5-0.2l0.5-2.3l0.5-0.8h1l0.5 4l0.5 0.3l0.5-2.6l0.5-1.9l1 0.4l0.5-0.3l0.5 3.1l0.5 1.9l0.5-0.7l0.5-3.6l0.5-0.6h0.5l1 4.1l0.5-1l0.5-3.8h0.5l0.5 1.8l0.5 3.5l0.5 0.7l0.5-3.6l0.5-1.8l1-1.1l0.5 0.3l0.5 3.2l0.5 2.5l0.5-0.6l0.5-4.3l0.5-0.4l0.5 0.7l0.5-0.1l0.5 2.9l0.5 0.8l0.5-1.2l0.5-3.8h0.5l0.5 4.4l0.5 1l0.5-1.5l0.5-3.6l0.5 0.2l1 5.5l0.5-0.1l0.5-4.7l0.5-0.6l1 0.5l0.5-0.8l0.5 1.9l0.5 3.4l0.5 0.7l0.5-3.7l1.5-2l0.5 3.8l0.5 0.3l1-4l1 0.5l0.5 3.3l0.5 1.6l0.5-2.3l0.5-3.5l0.5-0.8l1 1.6l0.5 4.1l0.5-0.2l1-4l1 0.3l0.5 2.9l0.5 2.1l0.5-0.6l0.5-4.4l1-0.8h1l0.5 1.2l0.5 4.2l0.5-0.3l0.5-2.6l0.5-1l0.5 3.3l0.5-0.3l0.5-3.4l0.5-1.1h0.5l1 1l0.5-0.4l0.5 2.8l0.5 1.8l0.5-0.5l0.5-4.7l1-0.6l0.5 3.2l0.5 1.9l0.5-0.5l0.5-3.9l0.5-0.3l1 0.5l0.5 4.4l0.5 0.4l1-3.7l1.5-1.6l1 1.1l0.5 3.7l0.5 0.2l0.5-3.3l1-1.6l0.5 3.2l0.5 1.6l0.5-0.5l0.5-4.7l0.5-0.1l1 0.7l0.5 3.9l0.5-0.1l1-3.9l0.5 0.5l0.5-0.7l0.5 0.7l0.5 2.1l0.5 3.5l0.5-0.4l0.5-4l0.5-1.1l1 0.1l0.5 0.5l0.5 3.2l0.5-0.1l0.5-2.8l0.5-1.6l0.5-0.2l0.5 0.9l0.5 4.2l0.5-0.3l0.5-3.2l0.5-1.4l1 1.3l0.5-0.4l0.5 0.4l0.5 4l0.5 0.1l0.5-3.2l0.5-2.4l0.5-0.3l0.5 3.4l0.5 2.8l0.5-0.1l0.5-4.8l1-0.7l0.5 5.2l0.5 1.4l1-1.5l0.5-3l0.5-1.1l0.5-0.1l0.5 2.7l0.5 2l0.5-1l0.5-4.1l1.5 0.3l0.5 0.6l0.5 3.4h0.5l0.5-2.9l0.5-1.8l0.5-0.1l0.5 0.1l0.5 4.1l0.5 0.6l1-4l0.5 0.5l0.5 1.2l0.5 3.6l0.5-0.1l0.5-3.6l0.5-1.5l1-0.1l0.5 0.9l0.5 4.5l0.5-0.8l0.5-3.3l0.5-2.7l0.5 0.6l1 0.3l0.5-0.4l0.5 3.5l0.5 1.6l0.5-0.8l0.5-4l1-0.5l0.5 0.7l0.5 4.4l0.5 0.4l0.5-2.7l0.5-1.9l1 0.3l1 4.6h0.5l0.5-4.3l0.5-1l0.5-0.3l1 5h0.5l0.5-3.9l1 0.1l0.5 0.9l0.5 3.6l0.5-0.5l0.5-3.2l0.5-1.7l0.5 0.6l0.5 1.2l0.5 4l0.5-0.3l0.5-3.7l0.5-1.6l1 0.7l0.5-0.7l0.5 0.4l0.5 3.4l0.5 0.4l0.5-2.8l0.5-1.5l0.5 4.2l0.5 1.2l0.5-1.6l0.5-3.5l0.5-0.6l1.5-0.3l0.5 3.5l0.5 0.9l0.5-1.4l0.5-3.3l0.5 0.1l0.5 2.4l0.5 3.6l0.5-0.1l0.5-3.9l0.5-0.9l1-0.8l0.5 1.1l0.5 3.9l0.5 0.4l0.5-3.3l0.5-1.1l0.5 0.2l0.5 2.4l0.5 4l0.5-0.1l0.5-2.2l0.5-1.3l0.5-2.5l0.5-0.8l1-0.2l1 4.6l0.5-0.8l0.5-4h1l0.5 0.5l0.5 4.6l0.5 0.4l0.5 1.8l0.5-0.2l0.5-6.4l0.5-0.1l0.5 0.5l0.5 1.3l0.5 4.1l0.5-0.5l0.5-4.4l0.5-1.9l1 0.8l1 5.1l0.5 0.1l0.5-4.6l1.5-1.5l0.5 2.5l0.5 3.1l0.5 0.2l0.5-4.4l0.5 0.1l0.5 4.1l0.5-0.5l1-4.9l2 0.7l0.5 2.7l0.5 1.7l0.5-0.3l0.5-3.5l1.5-0.9l0.5 0.4l0.5 2.6l0.5 1.6l0.5-1.2l0.5-2.7h0.5l0.5 1.7l0.5 2.9l0.5 1.9l0.5-0.8l0.5-6.1l1.5-1.4l0.5 1.4l0.5 3.4h0.5l0.5-2.8l0.5-0.8l0.5 0.8l0.5 3.7l0.5-0.3l0.5-2.2l0.5-1.5l0.5 0.3l0.5-0.5l0.5 2.9l1.5 3.8l0.5-2.3l0.5-4.7l0.5-0.7l0.5 3.9l0.5 1l0.5-1.7l0.5-2.4l0.5-0.6l0.5 0.2l0.5 3.7l0.5 1.6l0.5-1.7l0.5-3.7l0.5 4.2l0.5 3.4l0.5-0.5l0.5-2.1l0.5 0.2l1-5l1.5 0.1l0.5 1.9l0.5 3.3l0.5 0.3l0.5-4.5l0.5-1.5l0.5 0.4l0.5 3.3l0.5 2.1l0.5-1.3l0.5-3.3l1.5-1.7l0.5 0.1v25.7l-0.5 0.2l-1.5-2l-0.5-3l-0.5 0.2l-0.5 3.5l-1 0.9l-1.5-3.1l-0.5 2.4l-0.5 1l-1-0.7l-0.5 0.2l-0.5-2.8l-0.5 0.7l-0.5 1.7l-1-0.8l-0.5 1.7l-1-0.1l-0.5-1.1l-0.5 1.5l-1-0.7l-0.5-0.9l-0.5-3.5l-0.5-0.5l-0.5 3.1l-1 2l-0.5 0.6l-0.5-1.4l-0.5-3l-0.5 0.3l-0.5 3.6l-1 1l-1.5-5.2l-0.5 3.6l-1 0.4l-0.5-1l-0.5 0.5l-0.5-3.6l-1 2.9l-0.5 0.6l-1-1l-0.5-2.9l-0.5 1.7l-0.5 4.2l-0.5-0.3l-1-2.2l-0.5 0.5l-0.5-2.9l-0.5-0.1l-0.5 1.8l-1.5 0.2l-0.5-0.1l-0.5-1.9l-0.5-0.5l-0.5 2.2l-2 1.9l-0.5-2.6l-0.5 0.2l-0.5 2.9l-2-0.5l-0.5-2.9l-0.5-0.5l-0.5 3.7l-0.5-0.6l-0.5 0.8l-0.5-0.9l-1-2.9l-0.5 0.9l-0.5 1.8l-0.5-0.4l-0.5 0.6l-0.5-0.7l-0.5-2l-0.5 0.1l-0.5 2.4l-0.5 0.7l-1-1.3l-0.5-0.2l-0.5-1.5l-0.5 4l-1 0.5l-1-1.6l-0.5-0.1l-0.5-3.6l-0.5 0.2l-1 2.1l-1-0.3l-0.5 0.4l-0.5-2.6l-0.5-0.1l-0.5 2.7l-0.5-0.6l-0.5 1.6l-0.5-0.4l-0.5 0.6l-0.5-3.5l-0.5-0.6l-0.5 2.2l-0.5 0.8l-1 0.4l-0.5-0.1l-0.5-2.9l-0.5 0.7l-0.5 2.8l-0.5 0.3l-0.5-0.9l-0.5 0.4l-0.5-1.9l-0.5-0.6l-0.5 3.2l-1-0.5l-1-1.5l-0.5-2.2l-0.5 0.6l-0.5 2.3l-1.5 0.3l-0.5-0.2l-0.5-2.6l-0.5 2.6l-0.5 0.7l-1-0.4l-0.5 0.4l-0.5-3l-0.5 0.4l-0.5 3l-1.5-1.6l-0.5-1.8l-0.5-0.4l-0.5 0.2l-0.5 3.7l-0.5-0.8l-1 0.1l-0.5-1.4l-0.5-0.6l-0.5 1.3l-1 0.1l-0.5 0.9l-0.5 0.2l-0.5-3.7l-0.5 0.1l-0.5 2.9l-2-0.2l-0.5-3.4l-0.5 2.7l-0.5-0.4l-1.5 1.2l-0.5-2.5l-0.5 0.9l-0.5 2.9l-1-1.8l-0.5-0.4l-1-1.9l-1 3.2l-0.5-0.8l-0.5 0.3l-0.5-0.5l-0.5-2.2l-0.5-0.1l-1 3.8l-0.5 0.2l-0.5-0.5l-0.5 0.1l-0.5-3.7l-0.5 0.3l-0.5 2.3l-0.5 0.7l-1-0.8l-0.5 0.1l-0.5-3.2l-0.5 0.4l-0.5 2.1l-2 2.5l-0.5-2.7l-0.5 0.1l-0.5 3.1l-1-1.8l-1-0.6l-0.5-2l-1 1.4l-0.5 2.3h-0.5l-0.5 0.7l-0.5-3.5l-0.5 0.4l-0.5 2.7l-0.5 0.1l-1-1.4l-0.5-2.9l-0.5-0.6l-0.5 1.9l-0.5 1.2l-1.5-0.4l-0.5-2.1l-0.5-0.4l-0.5 1.6l-0.5 2.5l-1.5-1.4l-0.5-2.6h-0.5l-0.5 2.7l-1-0.5l-1 1.1l-0.5-2.4l-0.5 0.5l-0.5 1.7l-1-0.6l-0.5 1.1l-0.5-2.5l-0.5-0.7l-0.5 1l-0.5 1.9l-0.5 0.6l-1-0.4l-0.5-3.4l-0.5-0.7l-0.5 2.3l-1 1.9l-0.5-1l-0.5 0.4l-0.5-3.1l-0.5 0.9l-0.5 1.5l-2 1.4l-0.5-3.1l-0.5 0.1l-1 3l-0.5-0.4l-0.5 0.7l-0.5-0.6l-0.5-3.5l-0.5-0.1l-0.5 3.5l-0.5 1h-0.5l-0.5-0.9l-0.5 0.1l-0.5-3.3l-0.5 0.1l-0.5 1.2l-1.5 0.7l-0.5-0.2l-0.5-2.1l-0.5 0.4l-0.5 1.9l-0.5 0.2l-0.5-0.6l-1 0.2l-0.5-2.1l-0.5 0.5l-0.5 2l-1.5 0.8l-0.5-2.6l-0.5-0.4l-0.5 3.1l-1.5 1.2l-1-3.9l-0.5 1.8l-0.5 1l-1.5-0.6l-0.5-3.5h-0.5l-0.5 3l-0.5 0.8l-0.5-0.4l-1 0.7l-0.5-2.8h-0.5l-0.5 3l-1-0.2l-0.5-0.6l-1-2.6l-1 2.2l-1.5-0.7l-0.5-2.2l-0.5 0.6l-0.5 2.3l-0.5 0.9h-1.5l-0.5-2.6l-0.5-0.2l-0.5 2.9l-1-0.2l-0.5 0.5l-0.5-1.9l-0.5-1.1l-0.5 2l-0.5 1.3l-0.5 0.1l-1-1.7l-0.5-3.5l-0.5 0.9l-0.5 3.7l-0.5 0.2l-1-0.8l-0.5-2.1l-0.5-1.3l-0.5 2.7l-1.5 0.7l-0.5 0.2l-0.5-2.8l-0.5-0.1l-0.5 3.1l-1.5 0.4l-1-3.2l-1 3l-1 0.2l-0.5-0.4l-0.5-3.7l-0.5-0.1l-0.5 3.4l-1 0.9l-0.5-0.4l-0.5-1.5l-0.5-2.8l-0.5 2.5l-1.5 0.3l-0.5 0.9l-0.5-1.9l-1 2.5l-0.5-0.5l-0.5 0.7l-0.5-0.1l-0.5-3.5l-0.5-0.2l-0.5 2.3l-0.5 0.7l-1 0.5l-0.5-1.9l-0.5-0.9l-0.5-0.2l-0.5 2.7l-0.5 0.4l-1-0.3l-1-2.3l-1 1.5l-1.5 1l-0.5-2.9l-0.5-0.4l-0.5 0.4l-0.5 2.7h-0.5l-0.5 0.8l-0.5-0.4l-0.5-2.1l-0.5-1l-0.5 0.4l-0.5 2.4l-1-1.5l-0.5 0.9l-0.5-1.9l-0.5-1l-0.5 1.2l-0.5 2l-1.5 0.6l-0.5-2.6h-0.5l-0.5 2.1l-0.5 0.4l-1-1l-0.5-1.2l-0.5-2.2h-0.5l-0.5 3.6l-1 0.3l-1.5-1.9l-0.5 2.5l-0.5 0.9l-0.5-0.7l-1 0.3l-0.5-2.9l-0.5-0.7l-0.5 2.9l-0.5-0.3l-0.5 0.9l-1 0.1l-0.5-3.3l-0.5-0.1l-0.5 2.4l-1.5 1l-0.5-1.1l-0.5-2.9l-0.5 1.7l-0.5 1l-0.5-0.4l-1 0.4l-0.5-3.5l-0.5 0.5l-0.5 2.4l-0.5 1l-0.5-0.2l-0.5 0.8l-0.5-0.1l-0.5-3l-0.5 0.3l-0.5 1.6l-1 1.2l-0.5-0.6l-0.5-2.7l-0.5-0.7l-1 2.6l-0.5 0.6l-1-0.2l-0.5-3.7l-0.5 0.6l-0.5 2.8l-1 1.2l-0.5-0.4l-1-3l-0.5 1.9l-0.5 0.8l-1.5 0.3l-0.5-4l-0.5-0.2l-0.5 0.8l-0.5 3.2l-0.5 0.9l-1-0.3l-0.5-3l-1 0.4l-0.5 2.5l-0.5 0.8l-1 0.1l-1-4l-0.5-0.1l-0.5 1.6l-1 1.3l-0.5-0.1l-0.5-2.7l-0.5-0.6l-0.5 3l-2-1.4l-0.5-1.9l-0.5 1.2l-0.5 2.4l-0.5 0.7h-1l-0.5-2.8l-0.5-0.4l-0.5 2l-0.5 0.3l-0.5-0.8l-0.5-0.1l-0.5 0.7l-0.5-2.3l-0.5 0.8l-0.5 2l-0.5 0.9h-1l-0.5-0.8l-0.5-3.1l-0.5-0.7l-0.5 3.8l-0.5-0.6l-1 0.5l-1-2.2l-0.5 2.3l-1 0.1l-0.5-2.5l-0.5-0.3l-0.5-2.6l-0.5-0.1l-0.5 2.2l-0.5-0.4l-0.5-0.9l-0.5-2.4l-0.5-0.2l-1.5 1.8l-0.5 5.6l-1-0.3l-0.5-6l-0.5 0.8l-0.5-0.5l-0.5 2.3l-0.5 0.3l-1.5-3.7l-0.5 4l-0.5 0.7l-0.5 0.2l-0.5-2.6l-0.5-0.7l-1-0.3l-1 0.4l-0.5 2.1l-0.5-0.2l-0.5-2.5l-0.5-0.9l-0.5 0.2l-0.5 0.5l-0.5 5.1l-1-0.7l-0.5-4.1l-0.5 2l-0.5 0.3l-1.5-2.8l-0.5 0.4l-0.5 1.4l-0.5 0.6l-1-2l-0.5 4h-1l-0.5-2.4l-0.5-0.2l-0.5-1.9l-0.5-0.3l-0.5 0.2l-1 2l-0.5 0.3l-0.5-0.7l-0.5 4.8l-0.5 0.2l-0.5-1.2l-0.5-5.8l-0.5 0.5h-1.5l-0.5 2.2l-0.5 0.4l-0.5-2l-1-1.2l-1.5 2.7l-0.5-0.1l-0.5-1.3l-0.5 0.5l-1.5-0.1l-0.5 3.5l-0.5 0.1l-0.5-0.7l-0.5-3.5l-0.5 2.5l-0.5 0.5l-1-3.2l-0.5-0.6l-0.5 4.1l-0.5 0.9l-0.5-0.8l-0.5-2.8l-1-2l-1 1.7l-0.5 0.2l-2-0.2l-0.5 1.8l-0.5 0.6l-0.5-0.4l-0.5 1.3l-0.5 0.4l-0.5-0.4l-0.5-3l-0.5 1.8l-0.5-0.4l-0.5-2.2l-0.5-0.5l-0.5 0.9l-1.5-0.4l-0.5 1l-0.5 0.2l-1-1.6l-0.5 0.8l-0.5-0.6l-0.5 0.8l-0.5-0.6l-0.5 0.2l-0.5-0.5l-0.5 1.9l-0.5 4l-0.5 0.5l-1-4.9l-1.5 0.1l-0.5-0.8l-0.5 0.7l-2.5-1l-1 0.6l-1.5 1.8l-0.5-0.8l-0.5-1.7l-0.5 2.3l-0.5 5.1l-0.5-0.3l-0.5-2.9l-0.5-3.9l-0.5-0.2l-1 1.6l-0.5-0.1l-0.5-2.5l-1 0.5l-1 2.7l-0.5-0.2l-0.5-1.7l-0.5-0.2l-1.5 2.1l-1-0.1l-0.5-0.9l-1 0.1l-1 3.4l-0.5-1.1l-0.5-2.3l-0.5-1.5l-0.5 0.5l-1-1.2l-1 0.2l-1-2l-1-0.2l-1.5 1.8l-3.5-0.3l-1.5 0.9l-0.5-1.1l-0.5 0.1l-0.5-6.9h-4l-0.5 9.9l-1 0.5l-0.5-1.9l-0.5-1l-1-0.8l-1.5 0.6l-0.5-0.6l-0.5 0.1l-0.5-0.7l-0.5 0.5l-0.5-0.4l-0.5 1l-0.5-7.2h-1l-0.5 9.1l-0.5-0.3l-0.5 0.4l-0.5-2l-1-1.1l-0.5 0.4l-1-0.2l-0.5 0.6l-1.5-0.4l-1 0.9l-2-1.4l-3 2.4l-1-2l-2-0.4l-1 1.2l-0.5-0.2l-1.5 1l-0.5-8h-1.5l-0.5 10l-0.5-0.5l-0.5-2l-0.5-0.9l-1.5-0.4l-0.5 0.7l-1-0.1l-0.5-0.6l-0.5 0.4l-1.5-0.9l-0.5 0.9l-0.5-0.2l-0.5 1l-0.5-0.5l-0.5 0.7l-1 0.4l-2-0.9l-1-1.1l-0.5-0.1l-1 1.1l-1.5-0.8l-1 0.9l-1 0.2l-0.5-0.6l-0.5 0.9l-0.5-0.7l-0.5 0.4l-1-0.5l-0.5-0.9l-0.5 2.3l-0.5 1.6l-0.5-0.2l-0.5-1.9l-0.5-0.3l-0.5 0.4l-2-0.3l-1.5 0.3l-0.5-1l-0.5-0.1l-0.5-0.7l-0.5 0.9l-1 0.1l-1-0.5l-1.5 1.3l-1.5-0.1l-1.5-1.3l-0.5 1.2l-1.5-0.8l-1 6.1l-0.5-0.5l-0.5-4.9l-0.5-1.9h-1l-0.5 0.5l-0.5 7.2l-0.5 0.5l-0.5-1l-0.5-6.6l-1 0.6l-0.5 2l-1 0.1l-0.5-1.6l-1-0.8l-0.5 0.9l-0.5 4.5l-0.5 0.4l-0.5-3l-0.5-1.8l-1-0.6l-1 2.6l-0.5 0.7l-0.5-2.2l-0.5 0.3l-0.5-0.3l-1-2l-0.5 0.2l-1 1.8l-0.5 0.1l-0.5 5.1l-0.5 0.2l-0.5-0.7l-0.5-5.6l-1-0.6l-1 0.3l-1 5l-0.5 0.1l-0.5-4.4l-0.5-1.2l-0.5 5.8l-0.5 0.7l-0.5-0.8l-0.5-6.1l-0.5 0.9l-2 0.4l-0.5 6.3l-1-0.2l-0.5-6.3l-0.5 0.5l-1-0.4l-0.5 0.7l-0.5 0.1l-0.5 2.2l-0.5 0.4l-0.5-0.4l-0.5-3.3h-2l-1 5l-0.5 0.4l-0.5-3.4l-0.5-0.6l-0.5 5.9l-0.5 0.4l-0.5-0.8l-0.5-6.9l-1 0.1l-1 1.2l-0.5 1.8l-0.5 0.1l-0.5-0.7l-0.5-1.6l-1 0.4l-0.5 3.3l-0.5 1.2l-0.5-1.2l-0.5-5.5l-0.5 0.3l-0.5 1.1l-0.5 0.4l-0.5-0.2l-0.5-1l-1-1l-0.5 6.3l-1 0.9l-0.5-6.4l-0.5 1.1l-1-0.2l-0.5 4l-0.5 0.4l-0.5-1.1l-0.5-4l-1-0.3l-1.5 1l-0.5 5.8l-1 0.4l-0.5-6.7l-0.5-0.7l-1.5 0.2l-0.5-0.4l-1 2h-0.5l-0.5 1.5l-0.5-0.6l-0.5 0.2l-0.5-1.8l-0.5 0.8l-0.5-0.4l-0.5 1.8l-0.5 3.2l-0.5 0.1l-0.5-3.8l-0.5-2.4l-1-0.6l-0.5 1l-0.5 2.1l-0.5-0.1l-1-3.3l-0.5 0.3l-0.5 6.8l-0.5 1.5l-0.5-0.8l-0.5-6.7l-1.5 1.8l-1-0.4l-0.5 2.2h-0.5l-0.5-1l-0.5-2.1l-0.5-0.5l-0.5 2.7l-0.5 1.6l-0.5 0.1l-0.5-4.3l-0.5-0.6l-0.5 0.8l-0.5-0.1l-0.5 0.7l-0.5-0.9l-0.5 2.7l-0.5 0.3l-0.5-0.8l-0.5-2.2l-0.5 0.2l-1 3.1l-0.5-0.2l-0.5-1.8l-1-1.3l-0.5 6l-0.5 0.5l-0.5-0.9l-0.5-6.5l-1.5 1.3l-0.5-0.2l-0.5 1l-0.5-0.3l-0.5 0.7l-0.5 1.6h-0.5l-0.5-1.7l-0.5-0.9l-1 0.6l-0.5-0.5l-0.5 0.2l-0.5 5.5l-0.5 0.9l-0.5-1.3l-0.5-6.5l-1-0.5l-0.5 0.2l-0.5 2.7l-0.5 1l-0.5-0.4l-0.5-2.3l-0.5 0.5l-1.5-0.1l-0.5 5.1l-1.5 1.3l-0.5 0.1l-1.5-2l-1 0.5l-1-0.5l-1.5 1.1l-1-0.4l-1 0.6l-0.5-0.3l-0.5 0.5l-2-1.7l-2.5 1.4l-1-1.3l-2.5-0.3l-1 1.3l-0.5 0.2l-1-1.1l-1 1.2l-2 0.8l-1.5-2l-1 0.1l-0.5 0.9l-0.5-12.5l-1.5 6.6l-0.5 1.1l-0.5 0.3l-1-2.7l-1-5.5l-0.5-0.6l-1.5 6.2l-0.5 1.4l-1.5 1.5h-0.5l-0.5-0.8l-1-0.6l-0.5 0.8h-1l-0.5-0.8l-0.5-0.1l-0.5 0.1l-0.5 1l-1 0.3l-1.5-1.3l-1 0.9l-0.5-0.7l-1-0.4l-0.5 0.6l-0.5-0.8l-0.5 0.4l-0.5-0.6l-2 1.3l-0.5-0.9h-0.5l-1 1.6l-1-0.4l-1-1.1l-1 0.4l-0.5 0.7l-0.5-0.7l-2-0.5l-1 0.8l-1-1.3l-1 1l-1.5-0.8l-1.5 1.4l-2-1.3l-0.5 1l-1 0.5l-0.5-0.5l-1 0.3l-0.5-0.5l-1.5-0.1l-1-1.4l-0.5 0.9l-1 0.6l-0.5-0.8l-1.5 0.3l-0.5-0.6l-1.5 1.5l-0.5-0.5l-0.5 0.3l-0.5-0.9l-0.5 0.4l-1.5-0.7l-1 1.7l-1.5-0.6l-0.5 0.5l-0.5-1.1l-1-0.3h-1.5l-2 0.9l-0.5-0.7h-1l-1 0.7l-1.5 0.1l-0.5 2.1l-0.5 0.6l-0.5-1.1l-0.5-1.8l-1 0.8l-1.5-1.3l-1.5 1.7l-0.5-0.2l-0.5-0.8l-1-0.1l-0.5 3.6l-0.5 0.6l-0.5-0.8l-0.5-3.6l-2 1.4l-0.5 3l-0.5 1.1l-0.5-1.3l-0.5-3l-1 1l-1-0.6l-0.5 3.1l-0.5 0.3l-0.5-0.2l-0.5-3.7l-1.5 1.3l-1-0.1l-0.5-0.7l-0.5 2.8l-1-0.8l-0.5-3.2l-2.5 0.7l-0.5 2.6l-1 0.8l-0.5-3.2l-2 0.5l-1 0.9l-0.5 2.6l-0.5 0.5l-0.5-0.4l-0.5-2.7h-0.5l-0.5-1l-0.5-0.2l-0.5-0.9l-2.5 1.2l-1 0.2l-0.5-0.4l-0.5 0.6l-0.5-0.3l-0.5 1l-0.5-0.5l-0.5 0.3l-0.5-1l-0.5-0.3l-0.5 0.3l-0.5 1.1l-0.5 0.1l-1-1.3l-0.5 0.7l-1.5 0.1l-1 1.3l-1 0.3l-0.5-0.8l-0.5-0.2l-2 0.2l-0.5 0.6l-1.5-1.9l-0.5 0.1l-1 1.3l-0.5 0.1l-1-1.7l-1 1.8h-1.5l-0.5 0.8l-1.5-1.2l-0.5 0.2l-0.5-0.6l-1-0.1l-1 0.2l-1 1l-1-0.3l-1 0.5l-1-0.7l-1 1.3l-1.5-1.8l-0.5 0.8l-0.5-0.2l-1.5 2.1l-1-0.8l-0.5-1.4l-2.5-13.4l-1.5 7.1l-0.5 0.3l-0.5-0.7l-2 0.6l-1.5-1l-1 0.9l-1-0.7l-2 0.4l-1 0.8l-1.5 0.2l-1-1.3l-1.5 1.5l-1-0.1l-1.5-1.6l-0.5 0.4l-1-0.7l-1.5 1.1l-0.5-0.9l-0.5 0.4l-0.5-0.1l-0.5 0.9l-0.5-0.5l-0.5 0.3l-0.5-0.9l-0.5 0.1l-0.5-0.6l-1.5 2.2l-2-1.6l-1.5 0.1l-1-0.7l-1.5 0.7l-0.5-0.3l-0.5 0.5l-0.5-0.4l-0.5 0.5l-0.5-0.8l-0.5 1.1l-1 1.3l-1.5-0.5l-0.5-0.6l-1.5 1.1l-1-0.6l-1.5 0.5l-2-1.1l-1 1.4l-1.5-0.5l-1 0.7l-0.5-0.2l-1 1h-1l-1.5-2l-0.5-0.1l-1.5 1.8l-0.5-0.5l-1.5 0.3l-1-0.6l-1 1.5l-0.5 0.1l-0.5-0.7l-0.5-0.1l-1 0.9l-1-0.7l-1.5 1.5l-1-0.2l-1.5-1.1l-2.5 0.4l-1.5 1.2l-1-0.9l-2.5 1.3l-0.5-0.6l-1.5 1.9h-1l-0.5-0.6l-0.5 0.2l-0.5-0.7l-0.5 0.7l-1-0.6l-0.5-0.8l-2 1.1l-0.5 1l-0.5 0.4l-2-3.1l-1-5.1l-1-6.1l-0.5-1.5l-0.5 2.3l-0.5 3l-0.5 1.9l-0.5 0.7l-1-0.7l-1 0.6l-0.5 0.9l-2-1.6l-1 1.5l-1 0.4l-0.5-0.7l-2-0.7l-1 0.9h-1l-0.5-0.5l-1.5 0.8l-2-1.9l-2 1.1l-2-1.3l-1.5 1.9l-2-0.1l-1.5 1l-1-1.5l-1 1.3l-0.5 0.1l-1-1.4l-1 0.4l-1.5 1.9l-1-1.4l-2.5 1.4l-1-1.1l-1 1l-1-0.4l-1 0.9l-1-0.5l-1 1.3l-1 0.4l-1-1.1l-2 0.9l-1.5-1.1l-1.5 1.3l-1.5 0.3l-2 1.7l-0.5-0.9l-3 0.3l-0.5-0.4l-1 1.8l-0.5-0.9l-1-7.3l-0.5-2.8l-1-3.5l-0.5 2.1l-0.5 1l-1 3.2l-1 0.9l-1.5-1.4h-1l-0.5 0.8l-1.5 0.5h-1l-0.5-0.9l-0.5 0.2l-2.5-0.8l-1.5 1.7l-1-1.5l-0.5 0.4l-1.5 2.3l-1.5-0.2l-1.5 1l-0.5-0.8l-0.5 0.3l-0.5-0.7l-2 0.9l-1 1.3l-1 0.2l-1 1l-1.5-1.7h-0.5l-1 1.7l-1 1l-0.5-0.8l-0.5 0.5l-0.5-0.5l-2 0.9l-0.5-0.4l-1 0.8l-1-0.8l-0.5-13.9l-1 7.9l-0.5 1.5l-1-0.6l-0.5 1l-1.5 0.5l-1.5-1.3l-1-0.1l-1.5 1.5l-1.5-0.2l-1.5 1.3l-1.5-2.1l-0.5 1l-1 0.5l-0.5-0.3l-1 1.1l-2-0.7l-1.5 0.5l-1-0.3l-0.5 0.3l-0.5 1.1l-1 0.5l-1.5-1.2l-1 0.9l-0.5-14.3l-0.5 2.6l-1 6.7l-1.5-0.1l-0.5 0.7l-0.5-0.7l-0.5 0.7l-0.5-0.5l-0.5 0.6l-0.5-0.4l-1 1.5l-1 0.7l-0.5-0.6l-0.5 0.3l-0.5-0.5l-1.5 1.3l-1-0.2l-1 0.8l-1.5 0.2l-0.5 0.9l-1.5-1l-1 0.5l-0.5-11.8l-1 6.5l-1 0.1l-0.5 1.1l-1.5-0.1l-0.5 0.8l-0.5-0.3l-1.5 0.7l-1-1l-1 0.9l-1.5 2.5l-0.5-0.6h-1l-1 1.3l-0.5-12.2l-0.5 2.8l-0.5 2.2l-1.5 2.4l-0.5-0.3l-1.5 1.2l-1-1.3l-1.5 0.7l-0.5 0.5l-0.5 1.2l-1.5 0.1l-0.5 1.1l-0.5 0.4l-0.5-0.6l-0.5 0.1l-0.5-11.6l-1 6.2l-0.5 0.6l-2 0.6l-0.5-0.3l-1.5 1.7l-0.5 0.1l-0.5-0.5l-2 3l-0.5 0.3l-0.5-11.7l-1 6.3l-0.5 1.3l-0.5-0.1l-2 2l-1-1.4l-0.5-0.2l-1.5 3.3l-0.5-10.8l-0.5 2.4l-0.5 3.3l-0.5 0.4l-0.5 1l-3 1.7l-1-0.7l-0.5 0.2l-0.5-10.8l-1 7.5l-0.5 1.6l-1 1l-0.5-0.3l-0.5 0.4l-1 1.8l-1 0.2l-0.5-11.1l-1 5.1l-1 2.1l-1.5 1l-0.5 0.8l-2-0.5l-1.5 1.8l-0.5-0.5l-0.5-10.5l-0.5 2.8l-0.5 3.8l-0.5 1.3l-0.5 0.7l-0.5-0.8l-1-0.5l-0.5 0.8l-0.5-0.7l-0.5 0.9l-3 2l-0.5-11.8l-0.5 2.9l-1 4.3l-1.5 2h-1l-1-0.8l-1 1l-1 0.4l-1 1.8l-1.5-1.3l-0.5-3.9l-1-0.2l-0.5 0.9h-1l-0.5-0.9l-0.5 0.1l-0.5 0.9l-5 0.1l-5.5-15.3l-0.5 2.8h-44z" fill="#0000ff" stroke="#0000ff" stroke-width="0.8"/>
<path d="M751.9 417V430M757.5 409V445.6M763.2 408V453.4M768.8 409.5V459M774.4 411V463.4M780.1 420V468.5M785.7 425V474M791.3 436V474M797 444V474M802.6 455V474" stroke="#ff0000" stroke-width="2.3"/>
<path d="M751.5 416.9h16.5l1.5 0.8l0.5 1l4 2.2l5.5 4.4l6 9.2l6 8.2l5 9.8l4 11.6l2 5.3l0.5 0.8l6 0.2l0.5-2.6l1-0.5l1 0.2l1.5-0.4l2 1l1-0.8l2 0.6l1.5-0.8l1 0.4l3.5-0.8l1.5 1.2l1.5-0.5l0.5 0.4l1.5-0.9l0.5 0.6l1.5-0.7l1.5 0.8l4.5-0.7l1 0.6l1-0.6l1 0.5h1.5l1.5-0.7l1.5 1.2l2.5-1.4l1.5 1.4l3-1.3l0.5 0.6l1-0.3l0.5-0.6l1.5 1.2l0.5-0.4l0.5 0.4l0.5-0.5l1.5 1h2l2.5-1.1l1.5 0.5l2-0.4l4 0.5l1.5-0.7h2.5l1 0.7l1-0.7l0.5 0.3l1.5-0.6l0.5 0.7l0.5-0.2l0.5 0.5l1-0.1l1.5-1.2l2 0.1l1.5 1.3l2-0.1l1-0.8l1.5 1l2 0.1h0.5l0.5-0.7l1.5 0.1l1.5-0.9l2.5 0.9l0.5 0.5l2-1.1l1.5 1.2l2.5-1.2l1.5 0.2l1-0.5h1l0.5 0.5l0.5-0.3l0.5 0.4l0.5-0.4l1.5 1l1.5-0.9l0.5 0.1l0.5-0.7l1 0.1l2 1.3l0.5-0.7h1l0.5 0.6l0.5-0.6l1-0.1l0.5 0.5l3-1.1l3.5 0.7l1.5-0.6l3 1.4l1.5-1.5l2 0.1l1.5 1.1l3.5-0.2l1.5-1l1.5 0.5h1l0.5-0.6l1.5 1.1l2-0.2l1-0.6l1.5 0.6l0.5-0.5l0.5 0.3l1.5-0.6l1 0.4l1-0.4l3 0.7l3-0.5l1-0.8l1.5 1.3l2-0.9l3.5-0.2l1 0.1l1 0.8l1.5-0.6l1.5 0.8l3-1.1l1.5 0.8l1-0.3l1.5 0.8l1.5-1.2l0.5 0.6l1.5-1.1l2 1.2l1-0.5l0.5 0.4l0.5-0.5l0.5 0.4l1-0.2l1.5-0.9h0.5l1 1.2l1-0.2l1-0.9l1.5 0.9l2-0.1l1.5 0.5l1.5-0.9l0.5 0.5l1-0.1l1.5-1.1l1.5 0.9l3.5-0.3l0.5 0.7l2-0.4l1.5 0.5l1.5-1.1l1.5 0.9h2l1-1.1l1-0.2l2 1l5-0.3l2 0.6l3.5-0.6l0.5 0.5l2.5-0.8l2.5 0.7l2-0.5l0.5-0.5l1.5 0.5l3.5-1.1l1.5 1.6l4.5-1.4l2 1l1.5-1.1l1.5 1.2l2-0.8l1.5 1.1h1l0.5-0.1l1.5-1.7l0.5 0.7l1 0.4l1.5-0.4l2.5 0.7l3.5-0.4l1.5-0.6l3 1.2l2-0.3l0.5-0.6l1 0.1l0.5 0.4l2.5-0.2l1.5 0.4l2-0.9l1 0.7l1.5-0.8l1 0.7l1.5-0.7l2.5 0.7l3-0.6l1.5 1l1.5-0.7l0.5 0.5l1-0.1l1-0.8l2 1.2l1-0.9l1.5 1l1.5-1.2l3 1.1l1.5-0.6l2.5 0.5l2.5-1.1l1.5 0.8l1-0.8l1.5 1.2l1.5-1.2l1.5 1l1-0.3l0.5-0.5l1.5 0.8l1-0.7l2 0.4l1-0.5l1 0.8l1.5-0.6l2.5-0.1l1 0.6l1-0.1l0.5-0.6l0.5 0.4l0.5-0.6l0.5 0.3l0.5-0.3l0.5 0.6l0.5-0.4l1.5 0.7l1-0.3l1 0.4l1-0.6l1 0.1l0.5 0.5l1.5-0.8l1 0.8l3-0.7l0.5 0.6h0.5l2-0.9l2 0.8l2.5-1.1l1 0.1l0.5-3.1l0.5-0.2l0.5 1l0.5 3.1l1-0.9l2 1.2l0.5-3.6l0.5-0.2l0.5 0.4l0.5 3.6l1 0.1l1.5-1.3l0.5-3.9l0.5-0.6l0.5 1l0.5 4.1l1.5 0.8l1.5-1.2l0.5-3.1l0.5-0.7l0.5 1l0.5 2.7l2 0.7l0.5-3.1l0.5-0.8l0.5 0.4l0.5 3l2-0.1l0.5-3.4l0.5-0.5l0.5 0.5l0.5 3.6l1.5 0.5l1-0.8l1.5 0.7l0.5-0.5l1.5 0.3l0.5-2.7l0.5-0.2l0.5 0.7l0.5 2.9l2-1.2l2 0.5l2-0.4l1.5 1.1l1.5-1l1.5 0.5l3-0.8l2 1.3l3-1.6l0.5 0.5l1.5-0.3l1.5 0.7l1.5-0.4l1 1l1.5-1l2 0.6l1-0.5l2 0.3l2.5-0.5l1.5 0.7l0.5-0.6l1-0.1l1 0.6l1.5-1l4.5 0.5l1 0.7l1.5-0.7l1-0.1l1.5 0.8l1-0.8h1l2 0.9l2.5-1l1 0.6l1.5-0.3l1.5 1.1l1.5-1.2l1 0.5l1.5-1l1.5 1.3l0.5-0.6l0.5-2.4l0.5-0.1l0.5 0.5l2-0.9l2.5 1.2l1.5-0.8l3.5 0.3l1.5-0.7h1l0.5 0.7l3-0.4l1.5 1.1l2-0.5l2.5 0.6l1.5-0.8l0.5 0.5l2.5-1.2l3-0.4l0.5-9.1l0.5-2.5l0.5 2l0.5 9.4l1.5 0.3l0.5-20.3l0.5-1.9l0.5 1.7l0.5 20.5l2 0.1l0.5-2.7l0.5-4.9l0.5 0.1l0.5 5.4l0.5 2.2l1-0.6l1.5 0.7l0.5-0.3l0.5-20.3l0.5-2.2l0.5 2.2l0.5 20.8l0.5 0.2l0.5-1.2l0.5-5.1l0.5-0.4l1 5.8l0.5-0.1l0.5-4.8l0.5-1.9l0.5 1.1l0.5 6.6l2.5-1.2l0.5-12.4l0.5-0.8l0.5 4.3l0.5 9.5l0.5 0.2l0.5-7.3l0.5-4.3l0.5 0.7l0.5 10.6l0.5 0.5h2l0.5-21.5l0.5-1.7l0.5 1.6l0.5 21.2l0.5 0.3l0.5-3.8l0.5-3.1l0.5-0.4l0.5 6.1l1 1.5l0.5-0.2l0.5-5.8l0.5-11.6l0.5 0.1l0.5 11.1l0.5 6.5l0.5 0.2l0.5-0.7l0.5-5.2l0.5-0.6l0.5 2.5l0.5 3.8l1-0.7l2 1l1-0.7l0.5-19.4l0.5-1.5l0.5 1.9l0.5 19.2l1.5 0.5l1-0.6l0.5-10.8l0.5-3.7l0.5 2.3l0.5 12.8l1.5-1.1l0.5-19.3l0.5-2l0.5 2.1l0.5 19.3l1.5 0.9l1-0.2l1-1.2l0.5-14.5l0.5-0.8l0.5 5.4l0.5 11l1-0.2l0.5-5.9l0.5-1.8l0.5 1.3l0.5 6.1l2 0.8l0.5-18.5l0.5-2.2l0.5 1.9l0.5 18.8l0.5-3.8l0.5-11l0.5-0.3l0.5 8.1l0.5 6.7l1.5 0.8l0.5-0.5l0.5-10.4l0.5-1.8l0.5 3.9l0.5 8l1.5-0.4l1 0.7l0.5-20.8l0.5-2.2l0.5 2.5l0.5 21.2l1-0.3l0.5-0.6l1-0.2l0.5-20.7l0.5-2l0.5 2l0.5 21l0.5-4.4l0.5-12.1l0.5 0.3l0.5 9.2l0.5 7.2l0.5-0.6l1.5-0.2l0.5-18.2l0.5-1.4l0.5 2l0.5 18.5l1-0.5l1.5 0.5l0.5-0.7l0.5 0.3l0.5-2.1l0.5-9.8l0.5 0.1l0.5 5.7l0.5 6.7l1-0.1l0.5-7.5l0.5-9.4l0.5 0.4l0.5 12.6l0.5 4.7l1-0.6l0.5-4.3l0.5-2.1l0.5 0.1l0.5 5.8l1 0.2l0.5-21.9l0.5-2.2l0.5 2.3l0.5 21.6l1.5-0.5l0.5-3.3l0.5-12.6l0.5-0.1l0.5 9l0.5 7.8l1-0.5l0.5 3.1l1.5 0.1l1.5 0.6l0.5-0.2l0.5 0.4l1.5-0.2l0.5 0.5l0.5-0.5l1-0.1l3 0.6l1-0.8l1 0.6l1-0.1l0.5-8.4l0.5-1.4l0.5 1.3l0.5 8l3 0.4l1.5-0.4l0.5 0.6l0.5-0.3l0.5 0.5l2-1l2 0.7l3-0.4l1.5 1l1.5-1.1l1.5 0.8l3-0.9l0.5-1.8l0.5-3.5l1-0.4l0.5 3.5l0.5 1.8l2.5 1.4l0.5-0.6l1.5 0.1l1-0.9l1.5 1.2l1.5 0.4l1.5-0.8l3.5-0.5l3.5 0.9l0.5-2.3l0.5-4.2l0.5-0.2l0.5 0.3l0.5 4.3l0.5 2.5l2-0.4l0.5-0.6l2-0.6l2 0.8l0.5-2.5l0.5-4.8l0.5-0.2l0.5 0.4l0.5 4.9l0.5 1.9l3-0.2l2 0.6l0.5 0.6l1-1.1l1.5 0.7l1.5-1.2l3 1.3l1.5-1l0.5-4.3l1 0.8l0.5-0.4l0.5-5.1l0.5-9.5l0.5 0.3l0.5 6.5l0.5 8h1l0.5-3.9l0.5-1.4l0.5 1.2l0.5 3.7l1-0.6l0.5-0.8l0.5-4.3l0.5 0.4l1 5.5l0.5-0.2l0.5-0.6l0.5-9.6l0.5-0.3l0.5 6l0.5 4.4l0.5 0.4l0.5-14.6l0.5-11.9l0.5-0.4l0.5 16.6l0.5 9.1l0.5-5.8h0.5l1 6.3l2.5 0.9l0.5-4.4l0.5-2.7l0.5 0.5l0.5 5.8l1 0.3l1-0.4l0.5-11.3l0.5-8.9l0.5-0.3l0.5 13.6l0.5 7.6h1l0.5-0.5l1.5 0.6l1-6.8h0.5l0.5 5.6l2 1.5l0.5-3.9l0.5-6.6l0.5-0.3l0.5 8.7l0.5-12.8l0.5-1.3l0.5 1.5l0.5 6.1l0.5-2.5l0.5 2.7l0.5 7.9l2-0.7l0.5 0.5h1l0.5-4.4l0.5-0.7l0.5-9.6l0.5-1.8l0.5 1.8l0.5 14.8l0.5 0.5l1-7.8l0.5-0.2l0.5 7l0.5-14.1l0.5-1.6l0.5 1.5l0.5 14.7l1 0.5l0.5-0.3l1-5.4l0.5 0.2l0.5 4.7l1 0.1l0.5 0.5l1-10.7l0.5 0.2l0.5 9.5l0.5 1.1l1 0.1l0.5-0.4l0.5-22.8l0.5-2.2l0.5 2.5l0.5 19.9l0.5-3.2l0.5-0.3l0.5 5.2l1 0.9l0.5-1.8l0.5-4.7l0.5-0.4l0.5-8.2l0.5-1.2l0.5 1.5l0.5 14.1l0.5-1.2l0.5-6.3l0.5 0.1l0.5 4.6l0.5 2.7h0.5l0.5-1.2l0.5-6.1l0.5 0.3l0.5 4.9l0.5-16.4l0.5-1.9l0.5 2.2l0.5 19.2l1-0.4l0.5-0.7l0.5-9.4l0.5-0.7l1 10.5l1 0.3l0.5-3.1l0.5-1.8l0.5-6.5l0.5-1.6l0.5 1.4l0.5 11.6l0.5-0.1l0.5-3.7l0.5-2.6l0.5 0.7l0.5 5.6l1 0.3l0.5-24l0.5-2.5l0.5 2.4l0.5 23.5l0.5 0.3l1-0.3l0.5 0.6l0.5-6.7l0.5-3.4l0.5 1.4l0.5 8.8l0.5 0.1l0.5-16.8l1.5-0.9l0.5 0.1l0.5 17l0.5-7.3l0.5-8.5l0.5 0.3l1-1.2l0.5 16.1l0.5 0.7l0.5-15.2l1-0.4l0.5-0.6l0.5 3.2l0.5 12.4l0.5 0.2l0.5-15.4l1.5 0.1l0.5 5.5l0.5 10.4l0.5-2.2l0.5-14.8l1 0.1l0.5-0.4l0.5 13.3l0.5 3.6l0.5-10.5l0.5-5.3l1.5 0.2l0.5 15l0.5-2.4l0.5-14l0.5 0.4l1-0.2l0.5 13.4l0.5 3.8l0.5-4.2l0.5-12.9l1.5 0.7l0.5 14.7l0.5 1.5l0.5-0.8l0.5-15.9l1-0.3l0.5 0.4l0.5 12.5l0.5 4.5l0.5-0.1l0.5-18.1l1.5-0.7l1 18l0.5-6.6l0.5-10.4l1-0.1l0.5 0.5l0.5 17.3l0.5-0.1l0.5-15.9l1.5-0.3l0.5 9l0.5 6.9l0.5-0.2l0.5-15.1l1 0.3l0.5-0.6l0.5 10.1l0.5 5l0.5-14.6l0.5-0.6l1.5 0.5l0.5 15.3l0.5-0.4l0.5-18l1-0.2l0.5 0.4l0.5 6.6l0.5 12.1l0.5-14.5l0.5-2.8l0.5-0.5l1 0.6l0.5 17l0.5 0.2l0.5-16.6l0.5-0.6l1.5-0.1l0.5 16.5l0.5 0.1l0.5-17.6l1-0.4l0.5 0.2l0.5 4.4l0.5 13.9l0.5-6.5l0.5-9.9l0.5-0.3l1 0.3l0.5 16.7l0.5-0.2l0.5-11.4l0.5-4.4l1.5 0.6l0.5 15l0.5 0.2l0.5-15.9l1.5 0.1l1 15.1l0.5-7.3l0.5-8.8l1.5 0.6l0.5 15.8l0.5 0.4l0.5-3.2l0.5-14.1l1-1.2h0.5l0.5 14.6l0.5 3l0.5 0.4l0.5-15.7l1.5-0.8l0.5 9.4l0.5 7.6l0.5-7.7l0.5-8.4l1.5 0.8l0.5 15.4h0.5l0.5-3.4l0.5-12.2l1-0.8l0.5 0.5l0.5 13.5l0.5 2l0.5-17.7l0.5-0.4l1 1l0.5 9.1l0.5 8.1l0.5-15.6l1.5-0.3l0.5 2.2l0.5 13.7l0.5-10.8l0.5-5.8l0.5 0.3l1-0.2l0.5 16l0.5 0.6l0.5-17.2l1.5-0.9l0.5 6.9l0.5 10.6l0.5-5.4l0.5-10.5h1l0.5-0.5l0.5 16.9h0.5l0.5-13.9l0.5-2.9l0.5-0.4l1 0.1l0.5 16.6l0.5-5.1l0.5-9.8l0.5 0.5l1-0.7l0.5 14.9l0.5 0.6l0.5-17.5h1.5l0.5 7.6l0.5 9.5l0.5-6l0.5-12l0.5-0.3l1 0.6l0.5 17.7l0.5 0.4l0.5-16.9l1.5-0.3l0.5 6.9l0.5 10.5h0.5l0.5-16.2l1.5-1.1l0.5 7.6l0.5 8.7l0.5-5.4l0.5-10.7l1.5 0.6l0.5 15.5l0.5 0.1l0.5-16.9l1.5 0.8l0.5 3.5l0.5 13.2l0.5-0.4l0.5-15.7l1.5 0.4l0.5 5.2l0.5 10.8l0.5-11.8l0.5-6.8l1.5 1.1l0.5 17.3l0.5-1.4l0.5-15.1l1 0.7l0.5-0.2l0.5 11.3l0.5 4.6l0.5-15.7h1.5l0.5 4.7l0.5 11l0.5-0.5l0.5-15.8l1.5 0.5l0.5 4l0.5 12l0.5-0.2l0.5-17.6l1-0.3l0.5 0.1l0.5 0.8l0.5 16.8l0.5-0.1l0.5-17.5l0.5 0.7l1 0.2l1 16.7l0.5 0.1l0.5-16.7l1.5-0.2l0.5 7.5l0.5 9.2l0.5 0.4l0.5-15.7h1.5l0.5 6.2l0.5 9.3l0.5 0.1l0.5-16l0.5 0.6l1-0.2l0.5 9.9l0.5 5.7l0.5-3.4l0.5-13l0.5 0.5l1-0.5l0.5 14.4l0.5 2.4l0.5-14.7l0.5-1.4l1.5-0.1l0.5 15.5l0.5-1.8l0.5-15.2l0.5 0.4l1-0.4l0.5 12.9l0.5 4.4h0.5l0.5-15.4l1.5-0.2l0.5 6.4l0.5 9.3l0.5-4.1l0.5-12.8l0.5-0.6l1-0.3l0.5 15.5l0.5-3.3l0.5-18.1h1l0.5 8.2l0.5 6.9l0.5 9.1l0.5-12.1l0.5-5.2l1.5-0.4l0.5 17.2h0.5l0.5-15.5l1-0.5l1 1.9l0.5 14.3l0.5-0.6l0.5-17.1l1.5 0.6l0.5 1.6l0.5 15.1l0.5 0.4l0.5-17.7l0.5 0.1l1-0.7l0.5 11.3l0.5 7.2l0.5 0.2l0.5-17.6l1.5-0.4l0.5 9.3l0.5 7.9l0.5-10.1l0.5-7.4l0.5-0.6l1 0.5l0.5 18.1l0.5-0.2l0.5-15.8l1.5-0.5l0.5 1.3l0.5 14.6l0.5-13.4l0.5-3l1-0.1h0.5l0.5 16.4l0.5-0.1l0.5-16.8h1.5l0.5 4.5l0.5 12.8l0.5-8.2l0.5-9.9l0.5-0.3l1 0.2l0.5 18.6h0.5l0.5-5.6l0.5-12l0.5 0.2l0.5-0.5l0.5 0.1l0.5 16.5l0.5 0.8l0.5-16.4l1.5 0.9l0.5 6.3l0.5 9.3l0.5-16l2-0.4l0.5 16.2l0.5-0.2l0.5-12.1l0.5-3.7l1 0.2l0.5-0.6l0.5 16.4l0.5-6.7l0.5-10l1.5 0.5l0.5 16.5l0.5 0.2l0.5-16.7l0.5 0.2l1-0.4l0.5 0.9l0.5 15.4l0.5-5l0.5-17.8l1-0.5l0.5 7.7l0.5-0.4l0.5 16.3l0.5-0.1l0.5-15.5l0.5-0.5l1 0.3l0.5 8.6l0.5 7.1l0.5-0.8l0.5-16.8l1-0.4l0.5-6.2l1 0.6l0.5 18.7l0.5-12.5l1.5-0.3l0.5 6.7l0.5 11.1l0.5-0.3l0.5-16.6l0.5-0.3l1 0.7l0.5 9.9l0.5 6.5l0.5-5.4l0.5-11.9l1-0.7h0.5l0.5 17.2l0.5 0.4l0.5-16l0.5-0.4l1 0.6l0.5-0.4l0.5 16.9l0.5-0.2l0.5-15.4l0.5-0.7l1-0.1l0.5 4.7l0.5 11.9l0.5-0.3l0.5-15.8l1.5-0.5l0.5 1.3l0.5 14.7l0.5 0.1l0.5-16.4l0.5-1.1l0.5-6.2l1-1.1l0.5 18.6l0.5 5.2l0.5-14.8l0.5 0.4l1-0.2l0.5 10.3l0.5 5.2l0.5-16.3l0.5-0.5l1.5 0.8l0.5 16.1l0.5-6.1l0.5-9.3l0.5-8.1h1l0.5 17.8l0.5 5.8l0.5-13.1l0.5-1.6l1-1.2l0.5 0.1l0.5 15.6l0.5 0.6l0.5-18.2l1.5-0.5l0.5 3.9l0.5-10l1 0.2l0.5 7.7l1-0.3l0.5 15.9h0.5l0.5-17.4l1 0.4l0.5-0.4l0.5 5.6l0.5 12.7l0.5-5.4l0.5-10.7l0.5-0.3l1 0.4l0.5 16l0.5-0.2l0.5-18l1.5 0.8l0.5 0.8v29.2h-1069l-6.5-0.4l-0.5-0.8l-2-5.3l-4-11.6l-5-9.8l-6-8.2l-6-9.2l-5.5-4.4l-4-2.2l-0.5 0.4l-1.5-0.8h-16.5z" fill="#ff0000" stroke="#ff0000" stroke-width="0.8"/>
</g>
<rect x="1167.5" y="332.5" width="8" height="8" fill="#209fdf" stroke="#111" stroke-width="1"/>
<rect x="1220.5" y="332.5" width="8" height="8" fill="#99ca53" stroke="#111" stroke-width="1"/>
<rect x="1274.5" y="332.5" width="8" height="8" fill="#f6a625" stroke="#111" stroke-width="1"/>
<rect x="1326.9" y="332.5" width="8" height="8" fill="#0000ff" stroke="#111" stroke-width="1"/>
<rect x="1380.5" y="332.5" width="8" height="8" fill="#ff0000" stroke="#111" stroke-width="1"/></svg>
<div class="t" id="t32" style="left:1180.9px;top:328.64px;font-size:12px;color:#464646;letter-spacing:-0.365px;">Va (V)</div>
<div class="t" id="t33" style="left:1233.7px;top:328.64px;font-size:12px;color:#464646;letter-spacing:-0.303px;">Vb (V)</div>
<div class="t" id="t34" style="left:1287.7px;top:328.64px;font-size:12px;color:#464646;letter-spacing:-0.45px;transform:scaleX(0.9903);">Vc (V)</div>
<div class="t" id="t35" style="left:1340px;top:328.64px;font-size:12px;color:#464646;letter-spacing:-0.363px;">Vq (V)</div>
<div class="t" id="t36" style="left:1393.9px;top:328.64px;font-size:12px;color:#464646;letter-spacing:-0.363px;">Vd (V)</div>
<div class="t" id="t37" style="left:716.26px;top:358.64px;font-size:12px;color:#464646;letter-spacing:0.002px;">197.8</div>
<div class="t" id="t38" style="left:723.12px;top:385.39px;font-size:12px;color:#464646;letter-spacing:-0.06px;">99.4</div>
<div class="t" id="t39" style="left:729.88px;top:412.14px;font-size:12px;color:#464646;letter-spacing:-0.45px;transform:scaleX(0.9888);">1.1</div>
<div class="t" id="t40" style="left:719.22px;top:438.89px;font-size:12px;color:#464646;letter-spacing:-0.07px;">-97.3</div>
<div class="t" id="t41" style="left:712.36px;top:465.64px;font-size:12px;color:#464646;letter-spacing:-0.018px;">-195.7</div>
<div class="t" id="t42" style="left:740.21px;top:479.44px;font-size:12px;color:#464646;letter-spacing:-0.06px;">0.00</div>
<div class="t" id="t43" style="left:1021.93px;top:479.44px;font-size:12px;color:#464646;letter-spacing:-0.06px;">0.50</div>
<div class="t" id="t44" style="left:1303.66px;top:479.44px;font-size:12px;color:#464646;letter-spacing:-0.06px;">1.00</div>
<div class="t" id="t45" style="left:1585.39px;top:479.44px;font-size:12px;color:#464646;letter-spacing:-0.06px;">1.50</div>
<div class="t" id="t46" style="left:1867.11px;top:479.44px;font-size:12px;color:#464646;letter-spacing:-0.06px;">2.00</div>
<svg width="1918" height="1079" viewBox="0 0 1918 1079"><path d="M751.5 633.1H1878.9M751.5 661.1H1878.9M751.5 689.1H1878.9M751.5 717.1H1878.9M1033.2 633V745.5M1315 633V745.5M1596.7 633V745.5M1878.4 633V745.5" stroke="#e8e8e8" stroke-width="1.5" fill="none"/>
<path d="M751.4 632.5V750M746.5 744.9H1879M746.2 633.1h5M746.2 661.1h5M746.2 689.1h5M746.2 717.1h5M1033.2 745v5M1315 745v5M1596.7 745v5M1878.4 745v5" stroke="#d6d6d6" stroke-width="1.4" fill="none"/>
<clipPath id="c3"><rect x="750.7" y="632.5" width="1128.4" height="113.4"/></clipPath>
<g clip-path="url(#c3)" fill="none" stroke-width="2" stroke-linejoin="round">
<path d="M751.5 697.4l0.3-8.6h5.6v-7.6h5.7v-7h5.6v-6.2h5.6v-6.7h5.7v-7h5.6v-5.5h5.6v-6.6h5.7v-6h5.6v-1.4h1.3l1.7 5.2l2.5 7l2.5 5.2" stroke="#0000ff" stroke-width="2.8" stroke-linejoin="miter"/>
<path d="M810.5 651l3 2.1l5 2.3l7 4.6l6 3l11 3.4l13.5 2.2l3 0.9l4 0.1l7.5 1.3l1.5-0.2l9 1.3h4l3 0.8h5l1.5 0.4l2.5-0.1l1.5 0.6l12.5 0.7l6 0.9l1.5-0.3l5.5 1l12 0.5l1.5 0.5l3-0.3l1.5 0.5h6.5l8.5 1h8.5l12.5 0.9l1.5-0.5l10 1l20 0.4l4.5 0.5l3-0.4l3.5 0.7l2-0.4l1.5 0.4l2-0.3l8 0.7l4.5-0.3l2.5 0.5l3.5-0.4l6.5 0.5l1.5-0.4l6 0.1l17.5 0.7l12.5-0.3l6 0.7l19-0.3l5 0.5l5.5-0.4l7 0.6l2-0.4l13 0.4l10.5-0.3l9.5 0.4l3.5-0.6l3 0.7l1.5-0.5l1.5 0.5l6.5-0.1l1.5-0.5l2 0.6l2.5-0.4l0.5 0.4l3-0.2l3 0.4l1-0.4l13.5 0.5l8.5-0.4l5.5 0.5l3-0.4l5.5 0.5l7.5-0.4l1.5 0.4l5-0.5l2 0.6l10.5-0.3l1.5 0.3l5.5-0.2l2 0.4l1.5-0.4l7 0.5l1.5-0.3l8 0.4l1.5-0.3l2.5 0.4l4-0.4l2.5 0.4l0.5-0.4l1.5 0.5l6.5 0.1h1l0.5-0.6l2 0.5l7 0.1l1-0.5l4 0.5h2.5l1-0.6l1.5 0.8l1.5-0.5l2 0.5l1-0.5l1 0.5l6-0.4l1.5 0.3l0.5-0.5l1.5 0.5h2.5l3.5-0.1l0.5-0.4l4 0.6l1.5-0.3l4.5 0.3l2.5-0.6l1.5 0.5l2-0.4l2.5 0.6l1.5-0.6l1.5 0.8l2.5-0.7l1 0.5l2.5-0.2l1-0.6l1 0.7l1-0.5l3 0.6l1.5-0.8l2 0.8h2.5l1.5-0.6l1.5 0.7l1.5-0.5l1.5 0.5l2 0.1l2-0.1l1.5-0.7l0.5 0.5l4 0.3l1.5-0.4l3 0.4l6.5-0.3l1.5 0.5l4-0.6l2.5 0.6l2.5-0.5l2 0.4l7-0.4l2 0.4h12l1.5-0.4l1.5 0.5l12.5-0.3l3 0.4l5.5-0.5l2 0.5l4-0.5l10.5 0.7l2-0.7l1.5 0.5l8.5-0.4l1.5 0.4l1-0.8l3 0.7l7 0.1l1.5-0.5l3.5 0.7l1.5-0.4l5 0.1l1-0.4l5.5 0.7l2-0.6l4 0.6l1.5-0.5l5.5 0.6l1.5-0.5l1.5 0.5l1.5-0.7l1.5 0.5l5.5-0.2l3.5 0.5l3-0.9l1.5 0.8l2-0.5l1.5 0.4l2-0.5l1.5 0.7l2-0.5l1 0.4l1.5-0.7l1 0.5l4.5 0.1l0.5-0.6l2.5 0.7l1.5-0.9l1 0.1l0.5 0.7l2.5-0.3l1 0.4l2-0.8l1.5 0.9l1-0.9l2.5 0.6l1.5-0.5l1 0.3l0.5 0.6l2-0.9l1.5 0.8l1-0.9l2 0.8l3-0.7l1.5 0.8l0.5-0.6l2.5 0.5l1-0.6l1.5 0.1l1 0.6l1-0.8l2 0.9l2.5-0.7l1 0.6l1-0.6l2 0.7l0.5-0.2l0.5-0.7l2.5 0.5l1-0.6l2 0.8l1-0.6l2 0.2l0.5 0.7h0.5l1-0.9l2 0.6l2-0.6l1 0.7l1.5-0.7h1.5l0.5 0.7l1-0.5l2.5 0.4l1.5-0.6h1l0.5 0.7l0.5 0.1l2.5-0.6l1.5 0.6l1-0.7l2 0.7l1-0.5h1.5l0.5 0.6l3-0.9l1 0.8l2-0.7l1 0.7l1.5-0.6l1.5 0.7l1-0.7l2.5 0.6l0.5-0.4l1.5-0.1l1 0.5l2.5-0.8l1 0.6l2.5-0.4l0.5 0.6l1-0.6l2.5 0.5l0.5-0.5h1l1.5 0.6l1-0.6l1.5-0.1l0.5 0.5l1-0.5l1.5 0.1l1.5 0.7l0.5-0.7l1-0.1l1.5 0.7l1-0.9l2.5 0.8l0.5-0.7l0.5 0.1l2 0.8l1.5-0.8l2 0.8l1.5-0.7h1l0.5 0.7l0.5-0.1l0.5-0.6h0.5l2 0.5l0.5-0.5l1.5 0.1l1.5 0.7l2-0.9l1 0.7l1.5-0.6l2 0.7l0.5-0.1l0.5-0.7l3 0.8l0.5-0.6h1.5l1.5 0.6l2-0.7l1.5 0.8l1-0.9l2 0.7l1-0.6l1.5 0.1l1 0.6l2.5-0.7l1 0.5l0.5-0.5l1.5-0.1l0.5 0.6l1 0.3l0.5-0.6l2.5 0.5l1.5-0.7h1l0.5 0.5l1-0.7l1 0.1l1.5 0.9l2.5-0.9l0.5 0.7l1.5-0.5l2.5 0.7l1-0.7l2 0.3l2.5-0.3l1.5 0.5l0.5-0.6l1.5-0.1l1 0.7l1-0.5h1.5l0.5 0.6l2.5-0.8l1 0.6l0.5-0.4l2-0.1l1 0.8l1.5-0.7h1l0.5 0.6l2-0.6l1.5 0.5l2.5-0.7l0.5 0.6l1-0.4l2.5 0.6l1-0.6h1l1 0.8l1.5-0.8h1.5l0.5 0.7l2.5-0.9l0.5 0.7l2.5-0.5l1 0.6l0.5-0.1l0.5-0.7l3 0.8l0.5-0.6l1 0.1l1.5 0.8l2.5-1.3l1 0.3l0.5 0.6l0.5-0.5l1.5 0.1l1 0.6l1.5-0.7l2 0.6l2.5-0.6l1 0.6l0.5-0.6h2l0.5 0.6h0.5l1-0.7l1.5 0.3l0.5 0.5l2-0.8l1.5 0.6l3-0.5l1 0.6l0.5-0.6l2.5 0.6l1-0.6l1.5 0.2l0.5 0.5l2-0.9l1.5 1l1-0.7l1.5-0.1l0.5 0.7l1-0.6l2.5-0.3l2.5 0.6l0.5 0.4l1.5-0.9l2 1l1-0.7l2.5 0.3l0.5-0.6h2v7h-2l-0.5-1.9h-0.5l-0.5 1.6h-1.5l-1-1.5l-0.5 1.3l-0.5 0.4h-1.5l-0.5-1.7l-0.5 0.1l-0.5 1.6h-1l-0.5 0.9h-1l-0.5-1l-0.5 0.4l-1.5-0.2l-0.5-1.9l-0.5 0.1l-0.5 1.6h-0.5l-1.5-0.3l-0.5-1.3l-0.5 0.5l-0.5 1.8l-1 0.1l-1.5-2.5l-0.5 1.7l-0.5 0.2l-1.5-0.3l-0.5-1.7l-0.5 0.4l-0.5 1.2l-1 0.3h-0.5l-0.5-1.7l-0.5 0.6l-0.5 1.7h-1l-1-0.8l-0.5-1.7l-0.5-0.1l-0.5 1.6l-1 0.4h-1l-0.5-1.6l-0.5 0.1l-0.5 0.9l-0.5 0.3l-1.5 0.1l-0.5-1.6l-0.5 0.1l-0.5 1.6h-2l-0.5-1.6l-0.5 0.1l-0.5 1.7l-1.5-0.3l-1-1.7l-1 1.8l-1 0.1l-0.5-0.2l-0.5-1.7h-0.5l-1 1.8l-1.5 0.2l-0.5-1.3l-0.5 1.9l-1 0.1l-0.5-0.8l-1-0.1l-0.5-1.6l-0.5-0.1l-1 1.5l-1.5-0.3l-0.5-1.4h-0.5l-0.5 1.7h-0.5l-0.5 0.9l-1 0.2l-0.5-2l-0.5-0.6l-0.5 1.5l-0.5 0.1l-1.5-0.1l-0.5-1.5h-0.5l-0.5 1.8l-1.5-0.2l-1-1.7l-0.5 1.6l-1.5-0.1l-0.5-0.5l-0.5-1.2h-0.5l-0.5 1.6l-1.5 0.3l-0.5-0.1l-0.5-1.6l-1 1.7h-1.5l-0.5-1.5l-0.5-0.1l-0.5 1.5l-1.5 0.1l-1-1.6h-0.5l-0.5 1.6h-1.5l-1-1.6l-0.5 1.2l-0.5 0.3l-1.5 0.1l-0.5-1.6l-0.5-0.1l-0.5 1.5h-1l-1-0.2l-0.5-1.4l-0.5 1.6l-2 0.2l-0.5-1.5l-0.5 0.1l-0.5 1.6l-1.5-0.2l-1-1.6l-1 1.7l-1.5-0.1l-0.5-1.9l-0.5 0.1l-1 2h-0.5l-1-0.1l-0.5-1.9l-0.5 0.1l-0.5 1.4l-1.5 0.4h-0.5l-0.5-1.7l-0.5-0.1l-0.5 1.4l-1 0.2l-1-0.2l-0.5-1.7h-0.5l-0.5 1.9h-1.5l-0.5-0.3l-0.5-1.3l-1.5 2.4l-1-0.1l-0.5-1.9l-0.5-0.3l-0.5 1.5l-0.5 0.1l-1 0.1l-0.5-1.5l-0.5-0.4l-1 1.8l-1.5-0.2l-0.5-1.5l-0.5-0.1l-0.5 0.3l-0.5 1.4l-0.5 0.1h-1l-0.5-1.5h-0.5l-0.5 1.5l-2-0.3l-0.5-1.5l-0.5 0.2l-0.5 1.5l-0.5 0.1l-1-0.1l-0.5-1.3l-0.5-0.3l-1 1.4l-1.5 0.1l-0.5-1.7l-0.5 0.2l-1 1.6l-1.5-0.2l-0.5-1.5l-0.5 0.1l-1 1.8l-1.5-0.3l-0.5-1.6h-0.5l-1 1.6l-1.5-0.1l-0.5-1.8l-0.5 0.1l-0.5 1.6l-1.5 0.4l-0.5-0.1l-0.5-1.7l-0.5-0.1l-0.5 1.3l-0.5 0.4l-1.5 0.1l-0.5-1.7h-0.5l-0.5 1.1l-0.5 0.5l-1.5-0.1l-0.5-1.5l-0.5 0.4l-0.5 1.2l-1 0.1l-0.5-0.2l-0.5-1.6l-0.5-0.2l-0.5 1.8l-1 0.2l-1-0.5l-0.5-1.3l-0.5 1.2l-1 0.6l-1-0.2l-0.5-1.6h-0.5l-0.5 1.3l-2 0.5l-0.5-1.7h-0.5l-0.5 1.6l-1.5 0.1l-1-1.6l-1 1.4l-1.5 0.2l-0.5-1.7l-0.5-0.1l-1 1.8l-0.5 0.1l-1-0.2l-0.5-1.7l-0.5 0.2l-0.5 1.6l-1.5 0.2l-1-1.9l-1 1.6l-1.5 0.1l-0.5-2l-0.5 0.1l-0.5 1.5l-1.5 0.3l-1-1.9l-0.5 1.7l-1.5 0.2l-0.5-0.3l-0.5-1.4h-0.5l-0.5 1.7h-0.5l-1-0.1l-1-1.5l-1 1.9l-1.5-0.2l-0.5-1.9h-0.5l-0.5 1.7h-0.5l-1-0.2l-1-1.5l-0.5 1.3l-2 0.4l-0.5-1.5l-1 1.8l-1.5-0.3l-0.5-1.8l-0.5 0.3l-0.5 1.3l-1 0.1l-0.5-0.1l-0.5-1.1l-1-0.4l-0.5 1.6l-1 0.2l-0.5-0.2l-1-1.5l-1 1.6l-1.5-0.1l-0.5-1.7l-1 0.3l-0.5 1.6h-1l-0.5-0.1l-0.5-1.4l-0.5-0.4l-0.5 0.2l-0.5 1.6l-1.5-0.1l-1-1.8l-1 1.6l-1 0.2l-0.5-0.1l-0.5-1.5h-0.5l-0.5 1.6l-1.5-0.1l-1-1.4l-0.5-0.1l-0.5 1.6l-1.5 0.2l-0.5-1.3l-0.5-0.5l-0.5 1.2l-0.5 0.6h-1.5l-0.5-1.7l-0.5-0.1l-0.5 1.7l-2 0.1l-0.5-1.6h-0.5l-0.5 1.6l-2-0.5l-0.5-1.4l-1 1.8l-1.5-0.2l-0.5-1.7h-0.5l-0.5 1.6l-1.5 0.1l-0.5-0.1l-0.5-1.4l-0.5 0.4l-0.5 1.1l-1.5 0.2l-0.5-1.6h-0.5l-1 1.6l-1.5-0.3l-0.5-1.6l-0.5-0.1l-0.5 1.7l-1.5 0.3l-1-1.9l-1 1.7l-1.5 0.2l-0.5-1.8l-0.5-0.2l-0.5 0.5l-0.5 1.3h-1.5l-0.5-1.3l-0.5-0.2l-0.5 0.1l-0.5 1.4l-0.5 0.1l-1-0.1l-0.5-1.2l-0.5-0.5l-0.5 0.4l-0.5 1.3l-0.5 0.1l-1-0.1l-0.5-1.4l-0.5-0.1l-0.5 1.5l-1.5-0.1l-1-1.5l-0.5 0.5l-0.5 1.3h-0.5h-1l-0.5-1.5l-0.5-0.1l-1 1.4l-1.5 0.1l-0.5-1.7l-0.5-0.1l-0.5 1.1l-0.5 0.6l-1 0.1h-0.5l-0.5-1.6l-0.5-0.1l-0.5 1.5l-1.5 0.1l-1-1.7l-0.5 1.6l-1 0.1l-1-0.1l-0.5-1.6l-1 0.8l-1.5-0.9l-2 0.1l-0.5 1.5l-0.5 0.2l-0.5-0.1l-0.5-1.5l-1-0.2l-1 0.5l-1.5-0.5l-0.5 1l-0.5 0.1l-1.5-1l-2.5 0.5l-1-0.7l-1.5 0.1l-0.5 1.2h-1l-0.5-1l-0.5 0.5l-2-0.8l-1 0.7l-1.5-0.6l-0.5 1h-0.5l-2.5-1.2l-1 0.1l-1.5 0.4l-0.5 1.3l-1-0.2l-0.5-1.5l-2 0.1l-0.5 0.6l-1.5-0.6l-2.5 0.3l-1.5-0.5l-1 0.1l-0.5 1.2h-0.5l-0.5-0.3l-0.5-1.1l-1 0.7l-1.5-0.4l-0.5 1l-0.5 0.1l-1-0.8l-1.5-0.5h-3l-0.5 0.6l-2 0.6l-0.5-0.1l-0.5-1l-0.5 0.8h-0.5l-1-0.8l-2.5 0.2l-3.5-0.5l-1 0.2l-1 1.5h-0.5l-1-1.6l-0.5-0.2l-2 0.7l-1.5-0.5l-3.5 0.4l-1-0.4l-1 1.9l-0.5-0.1l-1-1.9l-2 0.9l-1-0.7l-2 0.5l-1.5-0.7l-1.5 0.8l-2-0.6l-1 0.9l-1.5-1.1l-8 0.4l-1.5-0.5h-6l-1.5 0.7l-2-0.7l-6.5-0.1l-2 0.9l-3-0.9l-6.5 0.3l-6.5-0.5l-2 0.1l-1 0.9l-2.5-0.9l-6.5 0.4l-4.5-0.5l-2.5 0.4l-6-0.4l-1.5 1.1l-1-1l-7.5-0.2l-7.5 0.4l-1 1.1l-0.5-0.1l-0.5-1l-0.5-0.3l-1.5-0.1l-0.5 1.8l-0.5 0.1l-0.5-0.2l-0.5-1.7l-1.5 0.7l-1.5-0.8l-1 0.3l-1 1.2h-0.5l-1-1.2h-1l-1.5 0.8l-0.5-0.8l-2 0.1l-1.5-0.4h-0.5l-0.5 1.6l-0.5 0.1h-0.5l-0.5-1.5h-2l-1 1.3l-0.5-0.1l-1-1.3l-0.5 1.5l-1-0.1l-0.5-1.5h-1.5l-1 0.1l-0.5 1.6l-0.5 0.2l-0.5-0.1l-0.5-1.5l-0.5-0.2l-2 0.2l-1 0.8l-1-0.9h-2l-1.5 1.1l-0.5-1l-0.5-0.3l-0.5 1.4l-1 0.2l-0.5-1.6l-2 0.1l-1 0.6l-1-0.7l-1 0.1l-1 1.2l-0.5-0.2l-0.5-1l-1.5-0.2l-2 0.3l-0.5 1.6l-0.5 0.1l-0.5-0.2l-0.5-1.7l-1-0.1h-0.5l-1 1.2l-1-1l-2.5-0.1l-0.5 1.4l-0.5 0.2l-0.5-0.1l-0.5-1.5l-4-0.1l-1 0.6l-1.5-0.6l-1 0.6l-0.5 0.8l-0.5-0.1l-1-1.2l-2.5 0.3l-1.5-0.3l-0.5 1.6l-0.5 0.2l-0.5-0.1l-0.5-1.7l-1-0.2l-1.5 0.3l-0.5 0.6l-2-0.7l-1 1l-0.5-0.1l-0.5-1h-2.5l-0.5 0.5l-1.5-0.6l-1.5 0.5l-2-0.5l-0.5 1.4l-1 0.2l-0.5-1.5l-1-0.3l-1.5-0.1l-1.5 0.9l-1.5-0.8l-2-0.1l-0.5 1.6l-0.5 0.2l-0.5-0.1l-0.5-1.4l-1.5-0.1l-0.5 0.7l-0.5 0.1l-0.5-0.1l-0.5-0.8l-4.5-0.3l-9 0.2l-29.5-0.8l-1.5 0.4l-6.5-0.6l-6.5 0.3l-1.5-0.5l-7.5 0.4l-7.5-0.5l-7.5 0.3l-5.5-0.4l-1 0.5l-2-0.5l-5.5 0.2l-0.5 0.7l-1-0.2l-0.5-0.6l-4-0.3l-2 0.1l-0.5 0.7l-0.5 0.1l-0.5-0.1l-0.5-0.8l-2 0.3l-1 0.9l-0.5-0.1l-0.5-0.8l-0.5-0.2h-1.5l-0.5 0.6l-1 0.2l-0.5-0.7l-3-0.2l-0.5 0.9l-0.5 0.2l-0.5-0.2l-0.5-1l-0.5-0.1l-2 0.2l-0.5 0.9l-0.5 0.1l-1.5-1h-2.5l-1 0.7l-1-0.8l-4.5-0.3l-6 0.4l-1.5-0.5l-5 0.4l-6.5-0.4l-2.5 0.4l-3-0.5l-7.5 0.3l-5.5-0.5l-3.5 0.5l-1.5-0.6l-2.5 0.5l-7-0.5l-9 0.4l-5.5-0.6l-1.5 0.4l-42-1.3l-1.5 0.4l-3-0.4l-19.5-0.7l-16.5-0.1l-1.5-0.5l-3.5 0.2l-11-0.8l-2 0.3l-7.5-0.8l-2 0.4l-1.5-0.5l-9.5-0.1l-1.5-0.5l-5.5 0.2l-2.5-0.5l-6.5 0.1l-1.5-0.6l-8.5-0.2l-1.5-0.5h-8l-9.5-1.2l-13.5-0.8l-8-1.3l-3.5 0.3l-6-1.1l-6-0.2l-1-0.4l-13-1l-3-0.7l-2 0.2l-4.5-1.1l-1.5 0.3l-7-1l-14-2.7l-9.5-3l-2.5-1.3l-1.5-0.3l-10-6.1l-5-2.3l-3.5-2.4z" fill="#0000ff" stroke="#0000ff" stroke-width="0.8"/>
<path d="M751.5 697.8h5.7l-0.3 3.1h5.7v3.8h5.7v4.9h5.7v5.2h5.7v5.6h5.7v5.5h5.7v5.6h5.7v1.5l3.7-0.2l2.5-3.8l2.2-4l1.6-1l1.6 2.5l1.6 5l1.4 1.9" stroke="#ff0000" stroke-width="2.9" stroke-linejoin="miter"/>
<path d="M811.5 731.8l18-1.4l14.5-0.2l1.5-0.5l8-0.2l3 0.4l1.5-0.3l3.5 0.4l2.5-0.3l6 0.5l5-0.2l1.5 0.4l3-0.5l3 0.5l1.5-0.4l1.5 0.4l4-0.3l6.5 0.5l4.5-0.4l1.5 0.4l4-0.3l9.5 0.5l3-0.3l13.5 0.7l2-0.5l1.5 0.5l12.5 0.2l2-0.4l8.5 0.5l1.5-0.4l7 0.4l8.5-0.5l5.5 0.4l2-0.4l3.5 0.4l1.5-0.3l10-0.2l3 0.3l4-0.4l2 0.5l1-0.4l1.5 0.3l6-0.4l1.5 0.3l3.5-0.4l11 0.3l14.5-0.4l3 0.4l7-0.5l6 0.3l1.5-0.4l2.5 0.5l3-0.4l7.5 0.3l4.5-0.5l5 0.4l20.5-0.4l17.5 0.2l1.5-0.4l3 0.3l1.5-0.3l4 0.4l13.5-0.4l3 0.4l11-0.5l2.5 0.3l1-0.9l1.5 0.9l2.5-0.1l0.5-0.8h1l0.5 0.9h1l1.5-0.3l1-1l0.5 0.2l0.5 0.7l1 0.3l2-0.3l1-0.7l1 1l2-0.1l0.5-0.7l0.5-0.1l1 0.8h2l0.5-0.8l0.5-0.3l0.5 0.1l0.5 0.8l3.5 0.2l2.5-0.2l1-0.5l2 0.7l1.5-0.4l2.5 0.4l3.5-0.3l4.5 0.2l1.5-0.4l5.5 0.5l2-0.4l17 0.2l6-0.4l26.5 0.4l11-0.5l1.5 0.4l4-0.4l7.5 0.2l1-1l1 0.9l1 0.1l0.5-0.1l0.5-1.4l0.5-0.2l0.5 0.3l0.5 1.4h0.5l3-0.6l1.5 0.8l2.5-0.2l0.5-1.4l0.5-0.2l0.5 0.1l0.5 1.5l0.5 0.1l1.5-0.6l1.5 0.5l1-0.4l1 0.5l2-0.2l1.5-1l1 1.2l1.5-1l1.5 0.7l2-0.1l0.5-1.4l0.5-0.1l0.5 0.3l0.5 1.4l0.5 0.1l1-0.6l2.5 0.5l1-1.2h0.5l1 1.1l1.5-0.4l2.5 0.8l3-0.4l0.5-1.4l0.5-0.1l0.5 0.1l0.5 1.2l2 0.3l0.5-0.1l1-1.1l0.5 0.2l0.5 0.8l1.5 0.2l0.5-1.2l0.5-0.1l0.5 0.2l0.5 1.1h3l1-1.1l0.5-0.1l1 1.1l2-0.5l2 0.6l1-0.2l0.5-1.3l1 0.1l0.5 1.5l1.5-1.4l1 1.1h2l1-0.7l1 0.8l1 0.2l1.5-0.2l0.5-1.3l0.5-0.2l0.5 0.1l0.5 1.4l2 0.2l0.5-0.1l0.5-1.4l0.5-0.2l0.5 0.2l0.5 1.3l0.5-0.3l0.5-1l1.5 1.2l2 0.1l0.5-1.1l0.5-0.1l0.5 0.1l0.5 1.1l1 0.1l2.5-0.2l1.5-0.9l1 0.9h0.5l2-1.2l1 1.3l1 0.1l1.5-0.5l1.5 0.4l0.5-1.4l0.5-0.3l0.5 0.2l0.5 1.4l0.5 0.2l1-0.2l1-1.3l0.5 0.1l1 1.2l1.5 0.2l13.5-0.2l1-0.7l1 0.7l4 0.2l11-0.4l5.5 0.3l1.5-0.5l1.5 0.5l17-0.1l1.5-0.5l2 0.6l1.5-0.4l4 0.2l1.5-0.8l2 1l2.5-0.5l12.5 0.4h1l1-1h0.5l1 0.9l1 0.2l1.5-0.6h3l1 0.4l1.5-0.9l1.5 1l0.5-0.1l1-1.7l0.5 0.1l0.5 1.1l0.5 0.4l1-0.6l3.5 0.5l1.5-0.4l0.5 0.6h1.5l0.5-0.1l1-1.5l0.5 0.2l1 1.4l4.5-0.5l0.5 0.4l2-0.1l1.5-0.6l0.5 0.4l0.5-0.7l1.5 0.6l1-0.3l0.5 0.5l3.5 0.1l1.5-0.9l1 0.1l0.5 0.8l1.5-0.3l1 0.6l0.5-1l1-0.3l0.5 0.9l1.5 0.3l1.5-0.5l2 0.5l1.5-0.9l0.5 0.7l2-0.1l0.5-1.3h0.5l0.5 0.2l0.5 1.2l4-0.3l1-0.8l0.5 0.1l0.5 0.9l1.5-0.4l1 0.6l1.5-0.5l1 0.3l0.5-1.1l0.5-0.2l0.5 0.3l0.5 1.1l0.5 0.1l1 0.1l1-0.8l2 0.5l2.5-0.9l0.5 0.7l3 0.2l0.5-0.1l0.5-1.4l0.5-0.1l0.5 0.3l0.5 1.5l3-0.7l1.5 0.7l0.5-1.6l2-0.2l0.5 1.7l1-1.4h0.5h1l0.5 1.3l0.5-0.1l0.5-1.4l0.5-0.1l1 0.2l1 1.3l0.5 0.1l0.5-1.2l1.5-0.1l1 1.3l0.5-0.3l0.5-1.2h1.5l0.5 1.2l0.5 0.1l1-1.4l0.5-0.1l1 0.1l0.5 1.6l0.5-0.3l0.5-1.3h1.5l0.5 1.2l0.5 0.3l0.5-0.2l0.5-1.2l1.5-0.1l0.5 1.4l0.5 0.2h0.5l0.5-1.4l0.5-0.1l1 0.1l0.5 1.1l1 0.1l0.5-1.6h1.5l1 1.7l1-1.5l0.5-0.1l1 0.2l0.5 1.7h0.5l0.5-1.7l1-0.2h0.5l1 1.5l0.5 0.1l0.5-1.5l1.5 0.2l1 1.3l0.5-1.4h1.5l0.5 0.1l0.5 1.3l0.5 0.2l0.5-1.6l1.5-0.3l1 1.7l0.5-1.3l2-0.4l0.5 1.5l0.5 0.1l0.5-1.4h2l0.5 1.3l0.5 0.1l0.5-1.6l2 0.6l0.5 1.1l1-1.5h1.5l0.5 1.5l0.5-0.1l1-1.6l1.5 0.3l0.5 1.3h0.5l0.5-1.5l1.5 0.4l1 1.1l1-1.5l1.5 0.2l0.5 1.3l0.5-0.1l0.5-0.2l0.5-1.3l0.5-0.1l1 0.2l0.5 1.4l0.5 0.2l0.5-0.1l0.5-1.6l1.5 0.5l1 1.1l1-1.3l1.5-0.2l0.5 1.4l1-0.2l0.5-1.1l1.5-0.1l0.5 1.3l0.5 0.1l0.5-1.5h1.5l1 1.7l0.5-1.3l1-0.3l1 0.4l0.5 1.3l0.5-1.1l0.5-0.5h1.5l0.5 1.5l0.5-0.1l0.5-1.6l1.5 0.1l1 1.6l0.5-0.4l0.5-1.2h1.5l0.5 1.5l0.5-0.1l0.5-1.2l2-0.4l0.5 1.4l1-1.2h1.5l0.5 1.2l0.5 0.2l0.5-1.5l1.5-0.1l1 1.5l1-1.3l1.5-0.3l0.5 1.6l0.5 0.1l0.5-1.6l1.5 0.1l1 1.7l0.5 0.1l0.5-1.6l1.5-0.3l1 1.6l1-1.4l1.5 0.2l0.5 1.3l0.5-0.1l0.5-1.5l2 0.4l0.5 1.1l0.5-0.1l0.5-1.5l1.5 0.2l1 1.4l1-1.6h1.5l0.5 1.5l0.5-0.1l0.5-1.4l1.5 0.1l0.5 1l0.5 0.4l0.5-1.4h1.5l1 1.5h0.5l0.5-1.5h1l1 0.4l0.5 1.2l0.5-0.1l0.5-1.6h2l0.5 1.5h0.5l0.5-1.6h1.5l1 1.6l0.5 0.1l0.5-1.6l1.5 0.1l1 1.3l0.5 0.1l0.5-1.5l1.5 0.1l1 1.5l0.5 0.2l0.5-1.7h1.5l1 1.4l0.5-0.3l0.5-1l1.5-0.2l0.5 1.2l0.5 0.1l0.5-1.1h2l0.5 1.4l0.5-0.1l0.5-1.4h1.5l0.5 1.2l0.5 0.3l0.5-0.2l0.5-1.6l1.5 0.3l1 1.5l0.5-0.4l0.5-1.2l1.5 0.1l0.5 1.2l0.5-0.2l0.5-1.7l1-0.1l1.5 2l0.5-1.1l0.5-0.3l1.5 0.1l0.5 1.4l0.5 0.2l0.5-1.4l2-0.1l0.5 1.1h0.5l0.5-1.4l1.5 0.1l0.5 0.4l0.5 1.3l0.5-0.1l0.5-1.8h0.5l1 0.1l1 1.7l0.5-0.1l0.5-1.3l1.5-0.1l1 1.6l1-1.8l1.5 0.1l0.5 1.6l0.5-0.1l0.5-1.5l2 0.3l0.5 1.1l0.5-1.1l1.5-0.4l0.5 0.2l0.5 1.4l0.5 0.1l0.5-1.6l1.5 0.1l0.5 0.4l0.5 1.3l1-1.7l1.5-0.4l0.5 1.7l0.5 0.2l0.5-0.5l0.5-1.2l1-0.2l0.5 0.1l0.5 1.7l0.5 0.2l0.5-1.4l1-0.3h0.5l1 1.6l0.5-1.6l2 0.1l0.5 1.5l0.5-0.1l0.5-1l0.5-0.4l1.5 0.1l0.5 1.5l1-1.5l1.5-0.4l0.5 1.6h0.5l0.5-1.4l0.5-0.1l1.5 0.2l0.5 1.4l0.5-0.6l0.5-1.6l1-0.2l0.5 0.9l0.5 0.1l0.5 1.4l0.5-0.2l0.5-1.4l1.5 0.1l1 1.4l0.5-0.1l0.5-1.4l1-0.1l0.5-0.6l1 0.2l0.5 1.8l0.5-1l1.5-0.2l1 1.4l0.5 0.1l0.5-1.3l1.5-0.4l1 1.7l0.5-0.4l0.5-1.2h1.5l0.5 1.6h0.5l0.5-1.4l0.5-0.2l1.5 0.1l0.5 1.3l0.5-0.1l0.5-1.2l1.5 0.1l0.5 0.2l0.5 1l0.5 0.2l0.5-1.3l2-0.2l0.5 1.3h0.5l0.5-1.4l1-0.5l1-0.1l0.5 1.6l0.5 0.4l0.5-1.4l1.5 0.2l1 1.4l0.5-1.4l2-0.2l0.5 1.4l1.5-2h1l0.5 1.5l0.5 0.3l0.5-1.1l2 0.3l0.5 1.2h0.5l0.5-1.6l2 0.3l0.5-0.8l0.5-0.1h0.5l0.5 0.8l1-0.2l0.5 1.4l0.5 0.1l0.5-1.6l0.5-0.1l1 0.2l0.5 0.4l0.5 1l1-1.2l1.5-0.1l0.5 1.3h0.5l0.5-1.5l2 0.3v6.1l-2-0.3l-0.5-0.8l-2 1l-1.5-0.9l-2 0.9l-0.5-0.1l-0.5-0.8h-0.5l-0.5 0.8l-1-0.1l-1.5 0.5l-2.5-0.3l-0.5-0.8l-0.5-0.2l-0.5 0.8l-2 0.1l-0.5-0.6l-1 1.1h-1l-1.5-0.9l-0.5 0.7l-2-0.1l-0.5-0.9l-1.5 0.9l-1-0.1l-0.5-0.9l-0.5 0.2l-0.5 0.9l-1 0.2l-2-1.3l-0.5 0.8l-2-0.1l-0.5-0.6l-1 0.7l-2 0.2l-0.5-0.9l-0.5-0.1l-0.5 0.8l-1 0.1l-1-0.1l-0.5-0.7l-0.5 0.1l-0.5 0.8l-1.5-0.1l-1-0.7l-2 0.8l-1.5-1.1l-1 1l-1.5 0.1l-0.5-0.6l-0.5 0.8l-1 0.2l-2.5-1.4l-1.5 1.1l-2-0.9l-0.5 0.9l-1 0.3l-1-0.2l-0.5-0.8l-0.5-0.2l-0.5 0.8l-1 0.1h-1l-0.5-0.9l-0.5-0.1l-0.5 0.9l-1.5-0.2l-1-0.6l-0.5 0.8h-0.5l-2.5-0.9l-0.5 0.9h-2l-0.5-0.7l-1 0.5l-1.5-0.1l-0.5-0.7l-0.5 0.2l-0.5 0.9l-3-0.8l-0.5 0.7l-1.5 0.1l-1-0.6l-1 0.5l-1.5-0.1l-0.5-0.8l-1.5 1.1l-1.5-0.4l-0.5-0.6l-1 0.6l-1.5 0.1l-0.5-0.6l-1 0.7l-1.5-0.1l-1-0.8l-1 0.8h-1.5l-0.5-0.6l-1.5 0.8h-1.5l-0.5-0.8l-0.5-0.1l-0.5 0.5l-2 0.2l-0.5-0.6l-0.5 0.1l-0.5 0.6l-2-0.2l-0.5-0.6h-0.5l-0.5 0.8l-2.5-0.7l-1.5 1.1l-1 0.1l-0.5-1l-0.5-0.2l-0.5 0.7l-2.5-0.7l-1 0.7l-1.5-0.1l-1-0.7l-1 0.7l-1.5-0.1l-0.5-0.5l-1 0.8h-2l-0.5-0.7l-2.5 0.5l-1-0.5l-2 0.7l-1.5-1l-1 0.9l-1.5 0.2l-1-1l-1 0.9l-1.5 0.1l-0.5-0.9l-1.5 0.7h-1.5l-0.5-0.8l-0.5 0.2l-0.5 0.7l-1 0.2l-1-0.1l-0.5-1l-2.5 0.8l-1.5-0.6l-0.5 0.5l-2 0.1l-0.5-0.7l-1.5 0.9l-1-0.2l-0.5-0.8l-1.5 1l-1.5-0.4l-0.5-0.5l-1 0.8l-1 0.1l-1-1l-0.5 0.1l-0.5 0.7l-1.5 0.3l-0.5-0.1l-0.5-0.8h-0.5l-0.5 0.7l-2.5-0.6l-1 0.6l-1.5 0.1l-0.5-0.8l-1.5 0.7l-1.5 0.1l-1-0.6l-0.5 0.6l-1.5-0.1l-1-0.5l-1 0.6l-1.5 0.1l-0.5-0.7l-1 0.6l-2.5-0.8l-0.5 0.7h-2l-0.5-0.7l-0.5 0.1l-0.5 0.7h-1.5l-1-0.8l-1.5 0.9l-1-0.2l-0.5-0.8l-1.5 1l-2-0.7l-0.5 0.5h-1.5l-0.5-0.1l-0.5-0.8l-1 0.8l-1.5 0.4l-0.5-0.8l-2.5 0.4l-1-0.8l-0.5 0.1l-0.5 0.8l-2.5-0.6l-1 0.6l-1.5 0.1l-0.5-0.8l-0.5-0.1l-0.5 0.1l-0.5 0.8l-1 0.1l-2-0.9l-0.5 0.7l-1 0.1l-1.5-0.7l-1 0.7l-1.5-0.1l-0.5-0.6l-0.5 0.1l-0.5 0.8l-1.5-0.2l-1-1l-1.5 1.2h-1l-1-0.9l-1 0.8h-1l-1-0.9l-0.5 0.1l-0.5 0.9l-2-0.2l-0.5-0.7l-1.5 0.9l-1.5-0.4l-0.5-0.6l-1 1h-1.5l-0.5-0.9l-0.5-0.1l-0.5 0.7l-1.5 0.1h-0.5l-0.5-0.6l-1 0.6l-1.5-0.2l-0.5-0.5l-3 0.7l-0.5-0.9l-1.5 1l-2-0.7l-1 0.7l-1.5-0.2l-0.5-0.8h-0.5l-1 1h-1.5l-0.5-0.7l-0.5-0.1l-0.5 0.1l-0.5 0.7l-1.5-0.2l-1-0.6l-2 0.9l-1.5-0.8l-0.5 0.8l-2.5-0.7l-2 0.6l-1.5-0.8l-2.5 0.8l-1-0.7l-0.5 0.5l-2 0.2l-0.5-0.8h-0.5l-1 0.8l-2-0.7l-0.5 0.9h-2l-0.5-0.7l-1 0.1l-1.5-0.6l-2 0.3l-0.5 0.6l-1 0.1l-0.5-0.7l-3-0.1l-1 0.5l-3-0.4l-1.5 0.4l-1-0.5h-1.5l-0.5 0.8l-1 0.1l-0.5-0.6l-4.5-0.3l-1.5 0.6l-5-0.5l-0.5 0.7h-0.5l-1-0.6l-2-0.2l-1 0.5l-1.5-0.6l-1.5 0.5l-3-0.3l-1.5 0.7l-0.5-0.5l-0.5 0.2l-1.5-0.4l-1 0.5l-2.5-0.6l-3 0.1l-2.5 0.6l-1.5-0.7l-4.5 0.5l-2.5-0.6l-2 0.3l-1 0.7l-1.5-0.8h-8.5l-1.5 1l-1-0.9l-1.5 0.5l-1.5-0.6l-6.5 0.1l-1.5 0.4l-3-0.6l-3.5 0.4l-7.5-0.3l-5.5 0.4l-3-0.5l-5.5 0.6l-3.5-0.5l-7 0.4l-8.5-0.4l-6 0.4l-2-0.5l-1.5 0.5l-5-0.3l-4 0.4l-2.5-0.4l-2.5 0.1l-1.5 0.5l-0.5-0.5l-8-0.2l-8.5 0.8l-2-0.7l-0.5 0.1l-0.5 0.9l-1-0.3l-0.5-0.8l-2 0.7l-2.5-0.4l-1 0.5l-2-0.4l-1.5 0.4l-1.5-0.5h-3l-1 0.5l-1-0.7l-3.5 0.7l-1-0.4l-0.5 0.8l-0.5 0.1l-1-0.8l-1.5-0.3l-1 0.2l-0.5 0.6h-1l-0.5-0.6l-4 0.5l-2.5-0.8l-1 0.7l-1.5-0.7l-0.5 0.8l-1 0.2l-0.5-0.7l-0.5-0.1h-4.5l-1 0.7l-3-0.8l-1.5 0.1l-1 0.7l-1-0.7l-2 0.6l-1.5-0.8l-2.5 0.1l-1 0.7l-1-0.6l-7 0.1l-1.5 0.4l-1-0.6l-2 0.7l-2-0.6l-0.5 0.7l-1 0.1l-0.5-0.8l-6 0.6l-5.5-0.6l-1.5 0.6l-2-0.4l-0.5 0.7h-0.5l-0.5-0.1l-0.5-0.7l-3-0.2l-2 0.6l-2.5-0.5l-1 0.8l-1.5-0.9l-2 0.8l-2-0.7l-20 0.3l-6-0.5l-18.5 0.5l-1.5-0.5l-6.5 0.6l-11-0.5l-9.5 0.5l-3-0.3l-6.5 0.3l-2-0.4l-2.5 0.4l-6-0.4l-2.5 0.5l-1.5-0.6l-2 0.5l-3.5-0.1l-0.5 0.4l-1.5-0.7l-2 0.1l-1 0.5l-1-0.5l-2 0.1l-1.5 0.5l-2.5-0.4l-2 0.3l-1.5-0.4l-3.5 0.5l-1.5-0.6l-2 0.1l-1 0.5l-1-0.6l-2 0.4l-6.5-0.5l-4 0.5l-1.5-0.4l-4.5 0.5l-8-0.4l-2 0.4l-3-0.4l-2.5 0.4l-1.5-0.5l-1.5 0.4l-2.5-0.3l-1.5 0.4l-1.5-0.5l-4.5 0.4l-5-0.4l-2 0.4l-8-0.3l-3 0.4l-7-0.5l-13.5 0.5l-13-0.2l-1.5 0.4l-3-0.6l-2 0.5l-4.5-0.3l-1.5 0.4l-1-0.4l-5-0.1l-1.5 0.4l-1.5-0.3l-8.5 0.4l-1.5-0.4l-5.5 0.3l-4-0.3l-7 0.4l-1.5-0.4l-4 0.5l-3.5-0.5l-11.5 0.6l-6.5-0.5l-2.5 0.5l-7-0.4l-9 0.5l-1.5-0.5l-2.5 0.4l-3.5-0.4l-7 0.5l-2.5-0.4l-1.5 0.4l-18.5-0.9l-2.5 0.4l-4.5-0.4l-2 0.3l-10.5-0.2l-3.5-0.5l-2.5 0.3l-17-0.7l-3 0.5l-2.5-0.5l-6.5 0.2l-2.5-0.4l-4.5 0.4l-4-0.4l-5.5 0.2l-2-0.5l-2.5 0.3l-2-0.4l-7 0.3l-1-0.4l-1.5 0.5l-5.5-0.2l-9.5 0.7l-2.5-0.3l-6 0.9l-5.5-0.3l-7.5 0.8z" fill="#ff0000" stroke="#ff0000" stroke-width="0.8"/>
<path d="M751.5 697.8h4.8v5h5.7v3.8h5.7v4.9h5.7v5.2h5.7v5.6h5.7v5.5h5.7v5.6h5.7v6.2h5.7v5.7h1078.5" stroke="#f6a625" stroke-width="2.4" stroke-linejoin="miter"/>
<path d="M751.5 697.4h50.7l3.8-6.9l4.5-6.6" stroke="#6d5fd5" stroke-width="3"/>
<path d="M810.5 682.8l10-4.2l8.5-2.6l5.5-0.9l3.5-1.3l3.5-0.7l5-0.3l15-2.6h4.5l4.5-0.8l7.5-0.3l5-0.8l6 0.2l2.5-0.6l14-0.3l9.5-0.8l3 0.4l27-1.4l7 0.1l3-0.5l2.5 0.5l11-0.5l1-0.3l13 0.2l5.5-0.6l13 0.1l9.5-0.6l6 0.3l15-0.8l8 0.2l9.5-0.4l5 0.3l1.5-0.4l7.5 0.3l17-0.5l6.5 0.4l2-0.6l8.5 0.4l10-0.6l5 0.5l7-0.7l1.5 0.5l2.5-0.4l4.5 0.3l7.5-0.5l7.5 0.4l4.5-0.5l10.5 0.3l6-0.2l1.5-1l1 0.8l3 0.2l0.5-0.8l0.5-0.2l1 0.8l2 0.2l0.5-0.2l0.5-0.9l0.5-0.1l1 1.1l3 0.1l0.5-0.6l1-0.1l0.5 0.6l2-0.2l1-0.8l1.5 1l1.5-0.2l0.5-0.7h0.5l1 0.6l5 0.2l2-0.8l2 0.9l1.5-0.5l16 0.3l3.5-0.4l1.5 0.4l9-0.6l1 0.3l14.5-0.3l2 0.4l9.5-0.6l5 0.3l1.5-0.5l5.5 0.4l13.5-0.5l1.5 0.4l4-0.6l5 0.1l1-0.8l0.5 0.1l0.5 0.6l1.5 0.1l0.5-1.3l0.5-0.1l0.5 0.1l0.5 1.4l1 0.2h1l1-0.7l1.5 0.6l3-0.4l0.5-1.3l1 0.1l0.5 1.3l5-0.5l0.5 0.5l2.5 0.1l0.5-1h0.5l1 0.9l2-0.8l1 0.9h2l0.5-1.4l0.5-0.3l0.5 0.1l0.5 1.4l2-0.5l1.5 0.7h0.5l1-1.2l0.5-0.1l1 1.2l2-0.6l1 0.5h4l0.5-1.3l0.5-0.1l0.5 0.1l0.5 1.2l2.5 0.2l0.5-0.8l0.5-0.2h0.5l0.5 1l1.5-0.1l0.5-1.2l0.5-0.2l0.5 0.2l0.5 1.2h3.5l0.5-1l0.5-0.3l1 1.1l1 0.2l1-0.5l3 0.2l0.5-1.2l1 0.2l0.5 1.3l1-1l1.5 0.8l1.5 0.1l1.5-1l1 1h2l0.5-0.1l0.5-1.4l0.5-0.1l0.5 0.2l0.5 1.2l2.5 0.3l0.5-1.6l0.5-0.3l0.5 0.1l0.5 1.5l0.5-0.2l0.5-0.9l1.5 1.3h2l0.5-1.4l0.5-0.3l0.5 0.2l0.5 1.4l3 0.2l2-1.1l1 0.9h1l1-1.2l0.5-0.1l1 1.1l2-0.2l1 0.5l1-0.1l0.5-1.5h0.5h0.5l0.5 1.4h1l1-0.3l0.5-0.8l1.5 1.1h12.5l2.5-0.1l0.5-0.6l1-0.3l0.5 0.7l1 0.2h3l13.5-0.3l3 0.4l1-0.5l13.5 0.4l5.5-0.3l2-0.5l1.5 0.7l1.5-0.3l3.5 0.4l2.5-1l1.5 0.9h8l3.5-0.4l4.5 0.2l1-0.8l1.5 0.8l2.5-0.5l1.5 0.6l1-0.5l2.5 0.2l0.5-0.6l1.5 0.8l0.5-0.1l1-1.6h0.5l1 1.6l1-0.5l1.5 0.6l3-0.4l3 0.3l1-1.4h0.5l1 1.4l3 0.1l1.5-0.6l0.5 0.5h2l1.5-0.7l0.5 0.4l0.5-0.8l0.5-0.2l1 0.6l0.5-0.2l1.5 1.1l2.5-0.1l3-1.2l0.5 0.8l1.5-0.3l1 0.5l0.5-1.1l0.5-0.1h0.5l0.5 0.9l1.5 0.3l1.5-0.3l1 0.4l2-1l1 0.6h2l0.5-1.4l0.5-0.2l0.5 0.4l0.5 1.3l2.5 0.2l2.5-1.2l0.5 0.2l0.5 0.9l1-0.4l2.5 0.1l1-0.5l0.5 0.5l0.5-0.9l1 0.2l0.5 1.2l1.5-0.3l1-0.8l1.5 0.9l3-0.8l0.5 0.7l1.5-0.4l1.5 0.4l0.5-0.1l0.5-1.5l0.5-0.2l0.5 0.4l0.5 1.4h0.5h1.5l1-0.7l1.5 0.7l0.5-1.5l2-0.2l0.5 1.7l1-1.5l1.5-0.1l0.5 1.5h0.5l0.5-1.4l2 0.2l0.5 1.2l0.5-0.1l0.5-1.3l0.5-0.2l1 0.2l1 1.5l0.5-0.4l0.5-1.4l1.5 0.1l0.5 1l0.5 0.3l0.5-1l0.5-0.2h1.5l0.5 1.3l0.5-0.2l0.5-1.4l1.5 0.2l0.5 1.1l0.5 0.2l0.5-0.2l0.5-1.1h1.5l0.5 1.3l0.5 0.3l0.5-0.1l0.5-1.4l1.5 0.1l0.5 1.1l0.5 0.4l0.5-0.2l0.5-1.7l0.5-0.1l1 0.2l1 1.7l1-1.6h1.5l0.5 1.4l0.5-0.1l0.5-1.3h1.5l0.5 0.8l1 0.6l0.5-1.3l1.5-0.1l0.5 1l0.5 0.4l0.5-1.3l1.5-0.1l0.5 0.1l0.5 1.4l0.5 0.1l0.5-1.8l1-0.2l1 0.8l0.5 1.1l0.5-1.2l0.5-0.2l1.5-0.2l0.5 1.4h0.5l0.5-1.2l1.5-0.3l0.5 0.1l0.5 1.5h0.5l0.5-1.5h1.5l0.5 0.4l0.5 1.2l1-1.5l1.5-0.1l0.5 1.4h0.5l1-1.2h1l0.5 0.1l0.5 1.4l0.5-0.1l0.5-1.5l1.5 0.1l1 1.4l1-1.5h1.5l0.5 1.5l0.5 0.1l0.5-0.3l0.5-1.4h0.5l1 0.2l0.5 1.2l0.5 0.3l0.5-0.1l0.5-1.5l1.5-0.1l1 1.5l1-1.5l0.5-0.2l1 0.2l0.5 1.3l1-0.3l0.5-0.9l1.5-0.1l0.5 1.1l0.5 0.2l0.5-1.6l1.5 0.3l1 1.5l0.5-1.4l2 0.2l0.5 1.1l1-1.5h0.5l1 0.1l0.5 1.4h0.5l0.5-1.6l1-0.2l0.5 0.1l1 1.8l1-1.6h0.5l1 0.2l0.5 1.5l0.5 0.1l0.5-1.3l1.5-0.6l0.5 0.2l0.5 1.4l0.5-0.3l0.5-0.9l0.5-0.1h1l0.5 1.3h0.5l0.5-1.5l1.5-0.1l1 1.6l1-1.7l1.5 0.3l0.5 1.5l0.5-0.1l0.5-1.5h1.5l1 1.2l0.5 0.2l0.5-1.5l1.5 0.1l1 1.3l1-1.2h1.5l0.5 1.6h0.5l0.5-1.6l1.5-0.2l0.5 0.4l0.5 1.2h0.5l0.5-1.4h1.5l0.5 0.4l0.5 1l1-1.8l1.5 0.2l0.5 1.6h0.5l0.5-1.5l1.5 0.1l0.5 1l0.5 0.4l0.5-1.3l1.5 0.1l1 1.2l0.5-0.1l0.5-1.5l1-0.1l1 0.6l0.5 1l0.5-0.1l0.5-1.6h0.5l1.5 0.2l0.5 1.6l0.5-0.1l0.5-1.6l1.5 0.3l1 1.3l0.5-0.1l0.5-1.4l1.5 0.1l1 1.2l0.5 0.2l0.5-1.4h1l0.5 0.1l1 1.4l0.5-0.1l0.5-1.6h1.5l1 1.6l0.5-0.3l0.5-1.3l1-0.1l0.5 0.1l0.5 1.3l0.5 0.3l0.5-1.4l2-0.1l0.5 1.5l0.5-0.2l0.5-1.4h0.5l1 0.1l0.5 1l1 0.3l0.5-1.3h1.5l1 1.6l1-1.6h1.5l0.5 1.3l0.5-0.3l0.5-1.5l1-0.1l1.5 2l0.5-1.2l1-0.5l1 0.1l0.5 1.5h0.5l0.5-1.4h0.5l1.5 0.4l0.5 1.2h0.5l0.5-1.7l2 0.3l0.5 1.2l0.5-0.1l0.5-1.5h1.5l1 1.6l0.5 0.1l0.5-1.7l1.5 0.3l1 1.3l1-1.6l1.5 0.2l0.5 1.5l0.5-0.1l0.5-1.3l2-0.1l0.5 1.4l0.5-1.3l2-0.1l0.5 1.5h0.5l0.5-1.5l1-0.1l1 0.4l0.5 1.2l1-1.8l1-0.1l0.5 0.2l0.5 1.5l0.5 0.2l1-1.4l1.5-0.2l0.5 1.4l0.5 0.2l0.5-1.3l1.5-0.3l1 1.6l0.5-1.5l2-0.1l0.5 1.3h0.5l0.5-1l2-0.3l0.5 1.4l1-1.5h0.5l1 0.1l0.5 1.6l0.5-0.1l0.5-1.4l0.5-0.1l1.5 0.1l0.5 1.2l0.5-0.3l0.5-1.6l1-0.1l0.5 0.8h0.5l0.5 1.4l0.5-0.1l0.5-1.3h1.5l1 1.3l0.5-0.1l0.5-1.4l1.5-0.7l1 0.2l0.5 1.6l0.5-1.1l1.5-0.1l1 1.4l0.5 0.1l0.5-1.3l1.5-0.1l1 1.6l0.5-0.4l0.5-1.2l1-0.1l0.5 0.2l0.5 1.7l0.5-0.1l0.5-1.4l1.5-0.4h0.5l0.5 1.5l0.5-0.1l0.5-1.3l1.5 0.1l0.5 0.3l0.5 1.2h0.5l0.5-1.5h0.5l1.5 0.2l0.5 1.3h0.5l0.5-1.4l1-0.9l1 0.2l0.5 1.6l0.5 0.5l0.5-1.4h1.5l1 1.4l0.5-1.4l2-0.2l0.5 1.7l1.5-2.4l0.5-0.1l0.5 0.1l0.5 1.7l0.5 0.5l0.5-1.3l0.5-0.1l1.5 0.2l0.5 1.3l0.5-0.2l0.5-1.7l2 0.3l0.5-1l1 0.3l0.5 0.8l1-0.1l0.5 1.3l0.5 0.1l0.5-1.5l1.5 0.2l1 1.5l0.5-0.5l0.5-1.1l1.5 0.1l0.5 1.4h0.5l0.5-1.7l2 0.1v6.3h-2l-0.5-0.4l-1 0.4l-2.5-0.7l-1 0.6l-1.5-0.1l-0.5-0.4l-2.5 0.7l-1.5-0.4l-1.5 0.3l-1.5-0.6l-0.5 0.3l-2.5-0.1l-1 0.6l-2.5-0.7l-0.5 0.4l-2.5-0.4l-2.5 0.4l-0.5-0.5l-1.5 0.8l-2-0.8l-2.5 0.6l-1.5-0.7l-1.5 0.4l-1.5-0.5l-1 0.8l-2-0.2l-0.5-0.6l-1.5 0.9l-2-0.4l-2.5 0.5l-1-0.6l-4 0.5l-2-0.2l-0.5-0.4l-2.5 0.6l-1.5-0.7l-0.5 0.7l-1 0.2l-1-0.1l-1-0.7l-1 0.5l-1.5-0.1l-0.5-0.4l-1 0.5l-2.5-0.3l-0.5 0.4l-3-0.5l-0.5 0.4l-2 0.1l-0.5-0.5l-2.5 0.5l-1-0.7l-2 0.7l-1.5-0.5l-0.5 0.5l-1.5 0.1l-1-0.5l-2.5 0.4l-1-0.5l-0.5 0.6l-1.5 0.1l-1-0.6l-2.5 0.5l-1-0.6l-2 0.6l-1-0.6l-2.5 0.6l-1-0.5l-2 0.5l-1-0.5l-2.5 0.5l-1-0.7l-3 0.6l-0.5-0.5l-2.5 0.8l-1-0.6l-2 0.4l-1.5-0.5l-1 0.6l-2-0.7l-2 0.5l-1.5-0.5l-2.5 0.6l-0.5-0.5l-1.5 0.3l-2-0.5l-1 0.5l-2.5-0.4l-2.5 0.6l-1-0.7l-1.5 0.5l-1.5-0.5l-1.5 0.6l-2.5-0.4l-2.5 0.7l-1-0.6l-2 0.2l-1.5-0.4l-1 0.6l-2-0.6l-1.5 0.6l-2-0.5l-1 0.5l-2.5-0.7l-0.5 0.6l-2.5-0.4l-1 0.5l-2.5-0.4l-2 0.4l-1.5-0.5l-0.5 0.5h-1.5l-1-0.6l-1 0.6l-2-0.3l-3 0.4l-1-0.6l-0.5 0.5h-1l-1.5-0.6l-2.5 0.6l-0.5-0.4l-1 0.4l-2.5-0.3l-0.5 0.5l-2.5-0.7l-2.5 0.7l-1-0.6l-2.5 0.4l-1-0.4l-0.5 0.5l-1.5 0.1l-1-0.5l-2.5 0.4l-0.5-0.4l-1 0.6l-2-0.7l-2 0.5l-1.5-0.5l-1 0.5l-2.5-0.7l-2.5 0.7l-1-0.5l-2.5 0.5l-0.5-0.5h-1l-0.5 0.6l-2.5-0.7l-2.5 0.7l-0.5-0.4l-1 0.3l-3-0.5l-0.5 0.5l-2.5-0.5l-2.5 0.6l-1-0.4l-0.5 0.4l-3-0.6l-0.5 0.5h-2l-0.5-0.5l-1 0.4l-5.5-0.3l-1 0.4l-2-0.7l-2 0.7l-1.5-0.5l-1 0.5l-2.5-0.4l-1.5 0.5h-1l-0.5-0.4l-3 0.5l-1-0.6l-1.5 0.7l-2-0.8l-1.5 0.8l-1.5-0.9l-2.5 0.7l-1-0.5l-2.5 0.5l-0.5-0.5l-3 0.4l-1-0.5l-1.5 0.8l-2-0.9l-1 0.5l-2-0.3l-0.5 0.6l-2.5-0.6l-6 0.4l-1-0.5l-4 0.5l-6.5-0.1l-0.5 0.3l-4-0.6l-3.5 0.6l-3-0.7l-2.5 0.8l-1.5-0.5l-3 0.5l-1.5-0.7l-2 0.4l-2.5-0.4l-1.5 0.6h-3.5l-3.5-0.5l-5 0.6l-7-0.5l-4 0.6l-2.5-0.6l-2 0.5l-5.5-0.4l-1 0.5l-7-0.5l-4.5 0.1l-1 0.4l-2.5-0.4l-5.5 0.4l-12-0.4l-3.5 0.4l-2-0.5l-3 0.4l-10.5-0.3l-3 0.5l-9.5-0.4l-1.5 0.5l-6-0.5l-12 0.5l-8-0.4l-3 0.5l-9.5-0.2l-1 0.5l-1.5-0.6l-5 0.4l-1-0.4l-2.5 0.5l-4-0.5l-1.5 0.6l-2-0.5l-3.5 0.1l-0.5 0.5l-2.5-0.6l-2.5 0.7l-1-0.8l-3 0.6l-1.5-0.6l-3 0.3l-1-0.3l-1.5 0.7l-1-0.5l-2-0.1l-4.5 0.6l-2.5-0.7l-2.5 0.8l-1-0.5l-2.5 0.2l-2.5-0.4l-1.5 0.5l-1.5-0.5l-6 0.1l-2 0.6l-1.5-0.5h-4l-0.5 0.3l-1.5-0.5l-10.5 0.7l-3.5-0.4l-1 0.1l-0.5 0.5l-1-0.1l-0.5-0.6l-4 0.4l-1.5-0.3l-3 0.7l-2-0.7l-2 0.7l-2.5-0.6l-4.5 0.4l-1.5-0.4l-1.5 0.5l-2-0.4l-5 0.4l-3-0.3l-2 0.4l-2-0.4l-10.5 0.4l-3-0.4l-1.5 0.5l-2.5-0.4l-13 0.5l-4.5-0.4l-8.5 0.4l-4-0.3l-4 0.4l-5-0.5l-5.5 0.5l-7.5-0.4l-3.5 0.6l-2.5-0.5l-1.5 0.3l-10-0.1l-2.5 0.5l-3-0.5l-6.5 0.4l-2-0.4l-2.5 0.5l-1-0.5l-2.5 0.4l-6.5-0.5l-18 0.7l-1.5-0.5l-3 0.4l-5.5-0.3l-1.5 0.4l-7-0.3l-8 0.5l-24.5-0.3l-4 0.5l-12.5-0.3l-1.5 0.3l-2.5-0.4l-5 0.4l-1-0.3l-1.5 0.4l-1.5-0.4l-12 0.6l-1.5-0.4l-1.5 0.4l-2-0.3l-7 0.4l-8.5-0.3l-7 0.5l-2-0.2l-1.5 0.5l-4-0.4l-32.5 0.9l-5.5-0.2l-3.5 0.4l-5-0.3l-4.5 0.6l-7-0.2l-4.5 0.6l-4 0.1l-2-0.5l-6 0.7l-28 0.4l-2.5 0.5l-20 0.6l-13 1.5l-7 0.1l-1.5 0.5l-6.5 0.4l-2 0.7l-16 2.2l-11 2.9l-1.5-0.1l-7.5 2.6l-8 3.4z" fill="#6d5fd5" stroke="#6d5fd5" stroke-width="0.8"/>
</g>
<rect x="1145.5" y="599.5" width="8" height="8" fill="#0000ff" stroke="#111" stroke-width="1"/>
<rect x="1196.9" y="599.5" width="8" height="8" fill="#ff0000" stroke="#111" stroke-width="1"/>
<rect x="1248.5" y="599.5" width="8" height="8" fill="#f6a625" stroke="#111" stroke-width="1"/>
<rect x="1305.5" y="599.5" width="8" height="8" fill="#6d5fd5" stroke="#111" stroke-width="1"/></svg>
<div class="t" id="t47" style="left:1158.9px;top:595.64px;font-size:12px;color:#464646;letter-spacing:0.131px;">Iq (A)</div>
<div class="t" id="t48" style="left:1210.1px;top:595.64px;font-size:12px;color:#464646;letter-spacing:0.131px;">Id (A)</div>
<div class="t" id="t49" style="left:1261.8px;top:595.64px;font-size:12px;color:#464646;letter-spacing:0.188px;">Ifw (A)</div>
<div class="t" id="t50" style="left:1319px;top:595.64px;font-size:12px;color:#464646;letter-spacing:0.255px;">Throttle Reduction (%)</div>
<div class="t" id="t51" style="left:716.26px;top:625.64px;font-size:12px;color:#464646;letter-spacing:0.002px;">155.9</div>
<div class="t" id="t52" style="left:723.12px;top:653.64px;font-size:12px;color:#464646;letter-spacing:-0.06px;">87.9</div>
<div class="t" id="t53" style="left:723.12px;top:681.64px;font-size:12px;color:#464646;letter-spacing:-0.06px;">19.9</div>
<div class="t" id="t54" style="left:719.12px;top:709.64px;font-size:12px;color:#464646;letter-spacing:-0.245px;">-48.1</div>
<div class="t" id="t55" style="left:712.26px;top:737.64px;font-size:12px;color:#464646;letter-spacing:0.02px;">-116.1</div>
<div class="t" id="t56" style="left:740.21px;top:751.44px;font-size:12px;color:#464646;letter-spacing:-0.06px;">0.00</div>
<div class="t" id="t57" style="left:1021.93px;top:751.44px;font-size:12px;color:#464646;letter-spacing:-0.06px;">0.50</div>
<div class="t" id="t58" style="left:1303.66px;top:751.44px;font-size:12px;color:#464646;letter-spacing:-0.06px;">1.00</div>
<div class="t" id="t59" style="left:1585.39px;top:751.44px;font-size:12px;color:#464646;letter-spacing:-0.06px;">1.50</div>
<div class="t" id="t60" style="left:1867.11px;top:751.44px;font-size:12px;color:#464646;letter-spacing:-0.06px;">2.00</div>
<svg width="1918" height="1079" viewBox="0 0 1918 1079"><path d="M751.5 905.1H1878.9M751.5 935.9H1878.9M751.5 966.6H1878.9M751.5 997.4H1878.9M1033.2 905V1028.5M1315 905V1028.5M1596.7 905V1028.5M1878.4 905V1028.5" stroke="#e8e8e8" stroke-width="1.5" fill="none"/>
<path d="M751.4 904.5V1033M746.5 1027.9H1879M746.2 905.1h5M746.2 935.9h5M746.2 966.6h5M746.2 997.4h5M1033.2 1028v5M1315 1028v5M1596.7 1028v5M1878.4 1028v5" stroke="#d6d6d6" stroke-width="1.4" fill="none"/>
<clipPath id="c4"><rect x="750.7" y="904.5" width="1128.4" height="124.4"/></clipPath>
<g clip-path="url(#c4)" fill="none" stroke-width="2" stroke-linejoin="round">
<path d="M751.9 961V963M757.5 961V966M763.2 961V970M768.8 961V973M774.4 961V977.5M780.1 961V981.5M785.7 961V983M791.3 961V984.5M797 961V984.5M802.6 961V984.5" stroke="#ff0000" stroke-width="2.3"/>
<path d="M751.5 961h0.5h0.5h0.5h0.5h0.5h0.5h0.5h0.5h0.5h0.5h0.5l0.5 0.1h0.5h0.5h0.5h0.5h0.5h0.5h0.5h0.5h0.5h0.5h0.5h0.5h0.5h0.5h0.5h0.5h0.5h0.5h0.5h0.5h0.5h0.5h0.5l0.5 0.1h0.5h0.5h0.5h0.5h0.5h0.5h0.5h0.5h0.5h0.5h0.5l0.5 0.2l0.5 0.3l0.5 0.2l0.5 0.3l0.5 0.2l0.5 0.2l0.5 0.3l0.5 0.2l0.5 0.2l0.5 0.3l0.5 0.2l0.5 0.2l0.5 0.3l0.5 0.2l0.5 0.3l0.5 0.2l0.5 0.4l0.5 0.5l0.5 0.4l0.5 0.5l0.5 0.4l0.5 0.5l0.5 0.4l0.5 0.5l0.5 0.4l0.5 0.5l0.5 0.4l0.5 0.5l0.5 0.4l0.5 0.4l0.5 0.5l0.5 0.2l0.5 0.3l0.5 0.3l0.5 0.3l0.5 0.3l0.5 0.3l0.5 0.3l0.5 0.2l0.5 0.3l0.5 0.3l0.5 0.3l0.5 0.3l0.5 0.3l0.5 0.3l0.5 0.7l0.5 0.7l0.5 0.7l0.5 0.7l0.5 0.8l0.5 0.7l0.5 0.7l0.5 0.7l0.5 0.7l0.5 0.1h0.5h0.5h0.5l0.5-0.1h0.5h0.5h0.5h0.5h0.5h0.5h0.5l0.5-0.1h0.5h0.5h0.5" stroke="#ff0000" stroke-width="3"/>
<path d="M806 980h2l1.5 0.5l2.5-0.5l2 0.4l14-0.6l8 0.5l1.5-0.6l1.5 0.4l3.5-0.5l4.5 0.7l4.5-0.7l7 0.6l1-0.4l1.5 0.4l1-0.5l2 0.4l1.5-0.7l12 0.7l3-0.6l1.5 0.3l3.5-0.3l3.5 0.6l1.5-0.7l6.5 0.5l3.5-0.6l1.5 0.5l2.5-0.3l1.5 0.5l1.5-0.4l6 0.3l1.5-0.6l4.5 0.5l2-0.7l2 0.5l12-0.3l1.5 0.5l2.5-0.1l1-0.6l2 0.6l3.5-0.6l1.5 0.5l1.5-0.4l4 0.3l4.5-0.5l3.5 0.5l2-0.3l1 0.5l5.5-0.7l1.5 0.5l1.5-0.4l1 0.3l0.5-0.3l3 0.5l2-0.6l5.5 0.5l6-0.5l2.5 0.4l2.5-0.5h4l1.5 0.5l2-0.6l1.5 0.7l5-0.8l13 0.6l5.5-0.7l4.5 0.6l8.5-0.3l1-0.4l2.5 0.6l11-0.1l4-0.6l1.5 0.6l2.5 0.1l1.5-0.5l1.5 0.4l3.5-0.4l1.5 0.6l1.5-0.5l3.5 0.3l5-0.5l1.5 0.4l1.5-0.4l1.5 0.4l10.5-0.2l1.5 0.4l2-0.1l1-0.5l3.5-0.1l4 0.5l7.5-0.3l2.5 0.3l2-0.3l3.5 0.5l2.5-0.6l5.5 0.6l5-0.6l4 0.6l1.5-0.5l5 0.3l3-0.5l2 0.6l7-0.6l4.5 0.2l0.5-1.2l0.5-0.3l0.5 0.3l0.5 1l3 0.4l0.5-1.2l0.5-0.2l0.5 0.1l0.5 1.1l2.5-0.2l0.5-1.4l0.5-0.3l0.5 0.3l0.5 1.5l2.5 0.4l0.5-0.1l0.5-1.4l0.5-0.4l0.5 0.3l0.5 1.2l0.5 0.2h1.5l0.5-1.3l1-0.2l0.5 1.2l2 0.3l0.5-1.2l0.5-0.3h0.5l0.5 1.2h3l2 0.6l1-0.2l0.5-1.1l0.5-0.2l0.5 0.3l0.5 1l1.5-0.6l3 0.5l3-0.5l5.5 0.6l4-0.6l2 0.7l3-0.5h3l1.5 0.5l1.5-0.7l3 0.6l5-0.4l5.5 0.2l1.5-0.4l6.5 0.5l1.5-0.3l1.5 0.5l4-0.6l3.5 0.5l1.5-0.6l1.5 0.5l1-0.4l1.5 0.5l2-0.7l3 0.6l1.5-0.5l1.5 0.5l2-0.5l1.5 0.4l1.5-0.6l2 0.6l1.5-0.4l1.5 0.3l5.5-0.4l2 0.6l1.5-0.6l3 0.4l0.5-3.2l0.5-0.8l0.5 0.9l0.5 3l1.5 0.1l0.5-6.9l0.5-0.7l0.5 0.7l0.5 6.8l1.5 0.2l0.5-0.1l0.5-0.8l0.5-1.4l0.5-0.2l0.5 1.6l0.5 0.6l3-0.2l0.5-6.9l0.5-0.7l0.5 0.8l0.5 7l1-0.1l0.5-1.6l0.5-0.3l1 1.9l0.5 0.3l0.5-1.9l0.5-0.6l0.5 0.2l0.5 2.3h2l0.5-0.4l0.5-4.4l0.5-0.3l0.5 1.7l0.5 3.4h0.5l0.5-2.4l0.5-1.4l0.5 0.1l0.5 3.4l1.5 0.5l1-0.4l0.5-7l0.5-0.8l0.5 0.6l0.5 6.8h0.5l1-1.9l0.5 0.2l0.5 2h1.5l0.5-1.8l0.5-3.6l0.5 0.1l0.5 3.4l0.5 1.9l1 0.1l0.5-1.7l0.5-0.5l0.5 0.7l0.5 1.3l2 0.5l2-0.6l0.5-6l0.5-0.6l0.5 0.8l0.5 6.1l2.5-0.1l0.5-3.4l0.5-1.5l0.5 0.5l0.5 4.2l1.5 0.4l0.5-6.5l0.5-0.9l0.5 0.7l0.5 6.3l3 0.3l0.5-0.3l0.5-4.7l0.5-0.5l0.5 1.9l0.5 3.4h1l0.5-1.8l0.5-0.5l0.5 0.6l0.5 2.1l2-0.3l0.5-6.3l0.5-0.6l0.5 0.8l0.5 6.3l0.5-1.5l0.5-3.7h0.5l1 5.1l2-0.2l0.5-3.3l0.5-0.6l0.5 1l0.5 2.5l2.5 0.5l0.5-7l0.5-0.8l0.5 0.6l0.5 7.2l1.5 0.4l1-0.4l0.5-7.2l0.5-0.6l0.5 0.7l0.5 7l0.5-1.3l0.5-4.3l0.5 0.1l1 5.4l2 0.2l0.5-6.5l0.5-0.6l0.5 0.7l0.5 6.4l3.5-0.3l0.5-0.7l0.5-3.1l0.5 0.1l1 3.6l1 0.2l1-5.4l0.5-0.1l0.5 4.4l0.5 1.4l1-0.2l1-2l0.5 0.1l0.5 1.9l1 0.3l0.5-7.3l0.5-0.7l0.5 0.7l0.5 7.3l1.5-0.5l0.5-1.3l0.5-4.4h0.5l0.5 3.5l0.5 2.5h0.5l4.5 0.1l5-0.5l1.5 0.5l3-0.2l0.5-0.2l0.5-3l0.5-0.6l0.5 0.8l0.5 3l0.5 0.3l3.5-0.6l1 0.4l1.5-0.4l2 0.5l2.5-0.6l1.5 0.6l5.5-0.6l2.5 0.3l0.5-0.6l0.5-1.5l1-0.1l0.5 1.4l0.5 0.5l1.5 0.3l1.5-0.5l5 0.6l2-0.6l6.5 0.5l1-0.7l0.5-1.5h1l0.5 1.6l0.5 0.7l4.5-0.4l2 0.4l0.5-0.9l0.5-1.7l0.5-0.3l0.5 0.2l0.5 1.7l0.5 0.9l9-0.5l2 0.6l1.5-0.4l1.5 0.4l2-0.5l0.5-1.4l0.5-2.4h0.5l1 3.9l1-0.1l0.5-1.1l0.5-0.3l0.5 0.5l0.5 1.1l1-0.1l0.5-0.2l0.5-1.3l0.5 0.2l1 1.9l0.5-0.2l0.5-0.2l0.5-2.8l0.5 0.1l1 2.9l0.5-0.1l0.5-3.9l0.5-3.2l0.5 0.1l0.5 4.3l0.5 2.5l0.5-1.7l0.5 0.2l1 1.4l2.5-0.1l1-1.6l0.5 0.4l0.5 1.6l0.5 0.1l1.5-0.3l1-5.6h0.5l0.5 3.5l0.5 2.1l0.5 0.2l2-0.6l0.5 0.3l1-1.5l0.5-0.1l0.5 1.7l2 0.2l1-2.9h0.5l0.5 2.2l0.5-3.7l0.5-0.5l0.5 0.5l0.5 1.9l0.5-0.5l0.5 0.7l0.5 1.9l1 0.3h2.5l0.5-1l0.5-0.4l0.5-2.6l0.5-0.4l0.5 0.3l0.5 3.7l0.5-0.1l1-1.8l0.5 0.1l0.5 2l0.5-3.8l0.5-0.4l0.5 0.5l0.5 3.8h1.5l1-1.3l0.5-0.1l0.5 1.1l1.5 0.4l1-2.6l0.5-0.3l0.5 2.3l2 0.4l0.5-6.3l0.5-0.5l0.5 0.7l0.5 5.7l1-1l0.5 1.3l1 0.4l0.5-0.5l0.5-1.2l0.5-0.1l0.5-2.3l0.5-0.5l0.5 0.3l0.5 3.9l0.5-0.4l0.5-1.7l0.5-0.2l0.5 1.4l0.5 0.8l0.5 0.1l0.5-0.5l0.5-1.8h0.5l0.5 1.6l0.5-4.4l0.5-0.4l0.5 0.3l0.5 5.4l1.5-0.5l0.5-2.4h0.5l1 2.6l1 0.4l1-1.3l0.5-2l0.5-0.2l0.5 0.2l0.5 3.1l0.5-0.1l0.5-1.1l0.5-0.5l0.5 0.3l0.5 1.5l1-0.5l0.5-6.2l0.5-0.7l0.5 0.9l0.5 6.3l0.5 0.3l1.5-0.6l0.5-1.6l0.5-0.9l0.5 0.7l0.5 2.3h0.5l0.5-6.9l0.5 0.1l0.5 2.3h1l0.5 4.2l1-4.4l1.5 0.4l0.5 4.2l0.5-0.2l0.5-4.1l0.5-0.1l1 0.3l0.5 0.9l0.5 3.2l0.5-0.1l0.5-3.9h1.5l0.5 1.5l0.5 2.5l0.5-0.6l0.5-3.8l1.5 0.1l0.5 3.2l0.5 1l0.5-3l0.5-1.2l1.5 0.3l0.5 4l0.5-0.8l0.5-3.8h0.5l1 0.1l0.5 3.5l0.5 1.1l0.5-1.2l0.5-3.3l1-0.2l0.5 0.1l0.5 3.9l0.5 0.4l0.5-0.3l0.5-4.2l1.5 0.2l0.5 2.8l0.5 1.4h0.5l0.5-4.6l1-0.1l0.5 0.3l1 4.7l1-4.5l1.5-0.3l0.5 4.3l0.5 0.3l0.5-4l1 0.1l0.5 0.1l0.5 2.6l0.5 1.4l0.5-0.2l0.5-4.1l1.5-0.1l0.5 2.6l0.5 1.3l0.5-3.6h2l0.5 3.8h0.5l0.5-4.3h1.5l0.5 1.5l0.5 3.2l0.5-3.7l0.5-0.7l1.5-0.1l0.5 4.1l0.5 0.1l0.5-4.1l1-0.5l1 0.4l0.5 4.4l0.5 0.1l0.5-4.6l1.5-0.2l0.5 0.9l0.5 3.3l0.5-1.4l0.5-2.6l1.5 0.1l0.5 4l0.5 0.1l0.5-3l0.5-1l1.5 0.3l0.5 3.8l0.5 0.2l0.5-4h1.5l1 4l0.5-1.8l0.5-2.6l1-0.3l0.5 0.2l0.5 4.3h0.5l0.5-1l0.5-3.6l1.5 0.3l0.5 3.8l0.5 0.6h0.5l0.5-4.2h1h0.5l0.5 2.6l0.5 1.7l1-4.3h1.5l0.5 4l0.5 0.1l0.5-0.8l0.5-2.9l1.5-0.1l0.5 3.5l0.5 0.3l0.5-4.4l0.5-0.2h1l1 4.2l0.5-3.8l2 0.5l0.5 3.4l0.5-2.6l0.5-1.5l1.5 0.4l0.5 4.1h0.5l0.5-4.4l1.5-0.4l0.5 1.9l0.5 2.8l0.5-1.3l0.5-2.7l1.5-0.5l0.5 4.3l0.5-0.1l0.5-3.3l0.5-0.7l1.5 0.3l0.5 4l0.5-1.6l0.5-2.7l1.5 0.5l0.5 3.6h0.5l0.5-4.3l1.5 0.2l1 4.5l0.5-1.7l0.5-3.1l1.5-0.2l0.5 4.4l0.5 0.2l0.5-4.4l1-0.2l0.5 0.2l0.5 1.9l0.5 2.9l0.5-0.3l0.5-4.2l1.5-0.4l1 4.5l0.5-1.3l0.5-2.6l1.5-0.4l0.5 4.3l0.5 0.1l0.5-4.2l1-0.4l0.5 0.1l0.5 1l0.5 3.5l0.5 0.1l0.5-4h1.5l0.5 1.1l0.5 3.1l0.5-3l0.5-1.6l1-0.2h0.5l0.5 4.5l0.5-0.1l0.5-4.1l1-0.1h0.5l0.5 3l0.5 1.3l0.5-4l1.5 0.2l0.5 1l0.5 2.8l0.5 0.1l0.5-4l1-0.2l0.5 0.2l0.5 1l0.5 2.8l0.5-0.2l0.5-4.3l2 0.3l0.5 4.3l0.5-0.1l0.5-4.3l1.5-0.2l1 4.5l0.5 0.2l0.5-4.3l1.5 0.1l1 3.9l0.5 0.1l0.5-3.9h1.5l0.5 1.7l0.5 2.4l0.5-0.2l0.5-4.1l0.5-0.2l1 0.4l0.5 2.7l0.5 1.6l0.5-1.1l0.5-3.5l1.5-0.4l0.5 4l0.5 0.7l0.5-3.4l2-0.4l0.5 3.9l0.5-0.6l0.5-4.1l1-0.1h0.5l0.5 3.6l0.5 1.1l0.5 0.1l0.5-4.2l1.5 0.2l1 3.7l0.5-1.2l0.5-3.2l1.5 0.4l0.5 3.9l0.5-0.8l0.5-4.8l1-0.3l1 3.6l0.5 2.3l0.5-3.1l0.5-1.2l1.5 0.1l0.5 4.4h0.5l0.5-3.6l1-0.4l1 0.3l0.5 3.8l0.5-0.1l0.5-4.4h1l1 0.5l0.5 3.9l0.5-0.1l0.5-4.6l1.5 0.2l0.5 2.9l0.5 1.4h0.5l0.5-4.5h0.5l1 0.2l1 4.7l1-4.6l1-0.4l0.5 0.2l0.5 4.4l0.5 0.3l0.5-4.1l1.5-0.3l0.5 0.4l0.5 3.6l0.5-3.3l0.5-0.7l1.5 0.3l0.5 4.3l0.5-0.1l0.5-4.5l1.5-0.3l0.5 1.3l0.5 3.5l0.5-1.9l0.5-2.6l1.5-0.6l0.5 4.8l0.5 0.2l0.5-1.3l0.5-3l1.5-0.5l0.5 4.3l0.5 0.3l0.5-4.2l1.5 0.1l0.5 1.5l0.5 2.6l0.5-4.1l2 0.1l0.5 4.1l0.5 0.2l0.5-3.4l0.5-1l1.5 0.4l0.5 4l0.5-1.8l0.5-2.8h1.5l0.5 4.1l0.5 0.1l0.5-4.3l2 0.5l0.5 4.1l0.5-1.6l0.5-4.7l0.5-0.2l0.5 0.1l0.5 2.2l0.5 0.3l0.5 4l0.5-0.2l0.5-3.9l1.5 0.1l1 3.6l0.5-0.2l0.5-4l1-0.2l0.5-1.6l0.5-0.1l0.5 0.1l0.5 4.7l0.5-3.1l1.5-0.2l0.5 1.9l0.5 2.8h0.5l0.5-4.3l1.5-0.1l0.5 2.7l0.5 1.9l0.5-1.3l0.5-3.2l1.5-0.3l0.5 4.3l0.5 0.1l0.5-4.1l0.5-0.3l1.5 0.5l0.5 4.3l0.5-0.2l0.5-3.9h0.5l1 0.1l0.5 1.3l0.5 2.8l0.5-0.1l0.5-4.4l1-0.1l1 0.4l0.5 3.7l0.5 0.1l0.5-3.9l0.5-0.1l0.5-1.7l1-0.2l0.5 4.7l0.5 1.2l0.5-4l1.5-0.2l0.5 2.7l0.5 1.4l0.5-3.9l1.5-0.3l0.5 0.2l0.5 4.4l0.5-1.5l1-4.7l1-0.1l0.5 4.7l0.5 1.3l0.5-3.2l1.5-0.7l0.5 0.1l0.5 4.1h0.5l0.5-4.5l1.5-0.2l0.5 0.9l0.5-2.3l1 0.1l0.5 1.8l1-0.2l0.5 4l0.5 0.2l0.5-4.5l1.5-0.1l0.5 1.4l0.5 3.1l0.5-1.3l0.5-2.8l1.5 0.4l0.5 3.8l0.5-0.1l0.5-4.6l2 0.2v12.3l-9-0.2l-9 0.6l-2-0.4l-4 0.3l-1.5-0.4l-4 0.4l-3-0.3l-9 0.3l-1-0.3l-3 0.4l-1.5-0.4l-1 0.4l-2.5-0.4l-11.5 0.3l-7-0.5l-2.5 0.5l-1.5-0.4l-3 0.4l-2-0.3l-1 0.5l-6.5-0.6l-4 0.6l-2.5-0.7l-1.5 0.7l-1-0.6l-1.5 0.6l-1.5-0.6l-1.5 0.5l-2.5-0.5l-1.5 0.5l-3.5-0.7l-5 0.7l-3-0.4l-6 0.4l-2.5-0.5l-2 0.6l-2.5-0.1l-3-0.6l-1 0.5l-1.5-0.4l-1 0.4l-5.5-0.5l-2 0.5l-4-0.5l-1.5 0.6l-4.5-0.4l-7 0.3l-1.5-0.4l-11.5 0.4l-4.5-0.5l-1.5 0.4l-7-0.2l-1.5 0.5l-3.5-0.8l-3 0.5l-2.5-0.3l-1 0.4l-1.5-0.6l-1.5 0.6l-1.5-0.3l-1.5 0.4l-2.5-0.7l-1 0.5l-2.5-0.3l-4.5 0.4l-1.5-0.6l-6 0.7l-2.5-0.4l-5 0.3l-3-0.4l-5.5 0.3l-1.5-0.4l-3.5 0.4l-4-0.4l-3 0.3l-1-0.4l-2.5 0.7l-1.5-0.8h-2l-2 0.7l-3.5-0.5l-4.5 0.4l-1-0.4l-10 0.5l-4-0.7l-2.5 0.6l-3.5-0.6l-5 0.6l-6-0.5l-1.5 0.4l-5-0.3l-15 0.3l-2-0.4l-4.5 0.6l-4.5-0.6l-1.5 0.5l-2.5-0.5l-8.5 0.5l-2-0.6l-1.5 0.4l-5-0.2l-3 0.5l-3-0.5l-1.5 0.3l-1.5-0.5l-3 0.6l-8-0.1l-1.5-0.5l-3.5 0.7l-3.5-0.2l-1.5-0.5l-2 0.6l-3-0.5l-3.5 0.5l-1.5-0.5l-6.5 0.3l-1-0.5l-3.5 0.6l-1.5-0.6l-5 0.5l-7.5-0.3l-3.5 0.4l-2-0.5l-4 0.6l-1.5-0.4l-2.5 0.4l-5-0.6l-1.5 0.5l-4-0.4l-3 0.5l-2.5-0.6l-4 0.5l-1-0.3l-9.5 0.3l-1-0.5l-4.5 0.6l-4-0.8l-2 0.8l-1.5-0.5l-2.5 0.2l-1-0.4l-1.5 0.5l-5-0.3l-1 0.5l-10.5-0.7l-1.5 0.8l-1.5-0.6l-4 0.3l-2.5-0.5l-1.5 0.5l-4.5-0.4l-6.5 0.5l-1.5-0.3l-2 0.4l-2-0.5l-3 0.4l-5.5-0.5l-1.5 0.5l-10.5-0.5l-1 0.4l-6-0.3l-1.5 0.3l-4.5-0.4l-1.5 0.5l-9.5-0.6l-3 0.6l-1-0.5l-1.5 0.4l-2.5-0.5l-6.5 0.5l-3.5-0.1l-1-0.5l-4 0.8l-1.5-0.6l-1.5 0.4l-4-0.5l-3 0.5l-5-0.7l-3 0.7l-4-0.6l-2.5 0.7l-4-0.4l-3 0.3l-3-0.6l-3.5 0.4h-7l-2-0.5l-2 0.7l-1.5-0.3l-1.5 0.3l-1.5-0.6l-1.5 0.5l-1-0.3l-1.5 0.4l-1-0.5l-1.5 0.4l-3.5 0.1l-2.5-0.4l-6 0.3l-4-0.4l-2.5 0.4l-1.5-0.4l-3.5 0.5l-2-0.5l-2.5 0.6l-4-0.7l-6.5 0.1l-2.5 0.4l-7.5-0.3l-1.5 0.4l-1.5-0.5l-5 0.6l-9-0.7l-3 0.5l-4.5-0.4l-9 0.5l-1.5-0.6l-2.5 0.6l-1.5-0.8l-1.5 0.8l-6.5-0.2l-4-0.5l-1.5 0.6l-2.5-0.1l-1.5-0.5h-4l-1.5 0.7l-1.5-0.6l-3.5 0.4l-4-0.5l-2 0.6l-1.5-0.5l-3.5 0.1l-3 0.4l-1.5-0.4l-1 0.4l-4-0.4l-2.5 0.3l-2-0.6l-2.5 0.6l-1.5-0.4l-3.5 0.5l-7-0.6l-2 0.7l-2-0.8l-2.5 0.7l-7.5-0.5l-1.5 0.4h-5.5l-1.5-0.5l-3 0.5l-3.5-0.5l-4 0.4l-4.5-0.4l-2 0.5l-2.5-0.4l-2.5 0.5l-4-0.5l-2 0.5l-3.5-0.4l-4 0.3l-4.5-0.6l-6.5 0.6l-3.5-0.4l-1 0.5l-4-0.7l-2 0.6l-1.5-0.3l-3 0.3l-2.5-0.5l-4 0.4l-1.5-0.4l-3 0.5l-7-0.1l-1.5-0.4l-3.5 0.5l-3.5-0.6l-1 0.4l-3-0.3l-5.5 0.5l-1-0.6l-6.5 0.5l-1.5-0.5l-2 0.6l-1.5-0.7l-3 0.8l-2-0.5l-3 0.3l-2.5-0.6l-2.5 0.4l-2-0.3l-1.5 0.6l-5.5-0.6l-3 0.4l-6-0.4l-2.5 0.6l-2-0.6l-1.5 0.5l-3-0.6l-7.5 0.7l-1.5-0.4l-8-0.1l-1.5 0.4l-1.5-0.5l-4 0.5l-3.5-0.6l-1.5 0.5l-3.5-0.5l-3.5 0.6l-2.5-0.5l-3 0.4l-1.5-0.6l-1.5 0.6l-3-0.2l-3 0.4l-1.5-0.7l-2 0.6l-1.5-0.5l-2.5-0.1l-7 0.6l-4-0.5l-6 0.4l-4.5-0.4l-4.5 0.6l-6-0.6l-6 0.2z" fill="#ff0000" stroke="#ff0000" stroke-width="0.8"/>
<path d="M751.9 937.2V962M757.5 940.4V962M763.2 941.1V962M768.8 941.1V962M774.4 943.2V962M780.1 943.8V962M785.7 941.9V962M791.3 943.2V962M797 948.2V962M802.6 955.2V962" stroke="#0000ff" stroke-width="2.2"/>
<path d="M751.5 959.9l44.5 0.1l9-0.3l0.5-0.3l1.5 0.8l1-0.5l1.5 0.3l1-0.5l1.5 0.8l3.5-1.1l3.5-0.6l1.5 2.7l0.5-1.4l1 0.3l1.5-1.1h2.5l1.5-0.6l0.5 0.3l1 1.8l0.5-0.9l4-0.1l1.5-1.1l1-0.1l0.5 0.4l1 2.1l0.5-1l1.5-0.7l3-0.3l1 1.8l0.5-0.6l5-1.4l0.5 0.1l1 1.9l0.5-1.3l1.5 0.4l4-1.5l0.5 0.2l1 2.2l0.5-0.9l1 0.2l1.5-0.8l1.5 0.2l1.5-0.6l2.5 0.3l1 2.3l0.5-0.8l1-0.3l3 0.1l1.5-1.1l2-0.2l3 0.1l1 2.4l1-0.7l7.5-1l3-0.9l0.5 0.4l1 2.4l1-0.1l1.5-0.9l7-0.2l1.5-0.8l3 0.4l1.5-1l1 0.3l1.5 2.9l0.5-0.9l1 0.3l3-0.7l1 0.3l4-0.9l1.5 0.5l1-0.5l3 0.2l2.5-0.7l4.5 0.4l2-0.4l1.5 3.2l0.5-0.8l1.5 0.1l2-1l6 0.3l2-0.7l1.5 0.4l1-0.5l3 0.2l1.5 0.6l2-0.6l1.5 0.5l2-0.4l5.5 0.6l1.5-0.7l2 0.6l1-0.3l0.5 0.1l1 1.4l0.5 0.3l0.5 2l2-3.3l0.5-0.3l2 0.3l1.5-0.4l1 0.5l3-0.6l6.5 0.2l2-0.6l6.5 0.7l9-0.4l1.5 0.3l2-0.5l1 0.5l7.5-0.2l1.5 0.4l1.5-0.5l1.5 0.6l0.5-0.4l2 0.5l1.5-0.5l1.5 0.6l1.5-0.6l2 2.2l0.5 1.9l1-2.1l1-1.4l2-0.6l3.5 0.5l4.5-0.4l1.5 0.3l1-0.5l1.5 0.6l3.5-0.3l6.5 0.6l5-0.6l4 0.6l6.5-0.9l2 0.5l5.5-0.1l1 0.5l1.5-0.5l5 0.3l1.5-0.6l5 0.8l3.5-0.6l2.5 0.6l1.5-0.5l1.5 0.5l4-0.2l1.5 0.5l1.5-0.6l0.5 0.3l4-0.6l1.5 0.5l1.5 2.1l0.5 2l2-3.7l0.5-0.3l8.5-0.5l3 0.7l7 0.2l1.5-0.6l9 0.5l1.5-0.5l1 0.3l3-0.4l2 0.8l4-0.8l9.5 0.6l4.5-0.8l1.5 0.6l2 0.1l3-0.6l2 0.6l2-0.3l1.5 0.5l3-0.6l2 0.7l4.5-0.6l2.5 0.6l1-0.4l1 0.3l5-0.5l1 0.6l3-0.7l4 0.6l3.5-0.3l1.5 0.4l2.5-0.7l3.5 0.7l2-0.5l1.5 0.6l2-0.6l3.5-0.1l3.5 0.7l2-0.6l1.5 0.4l2.5-0.6l2.5 0.8l7.5-0.5l0.5 0.2l0.5 0.8l1 1.7l0.5 1.4l1.5-2.9l1-1.1l1 0.6l1 1.6l0.5-2l3 0.2l4-0.4l5 0.3l2.5-0.5l1.5 0.6l6.5-0.4l1 0.6l3-0.8l3.5 0.5l0.5 0.7h0.5l1-0.7l1 0.1l0.5 0.2l0.5 1.3l0.5 0.3l1-1.8l1-0.3l3 1l0.5-0.6l2-0.4l2 0.7l0.5 1.2h0.5l1-1.7l0.5 0.3l1.5-0.8l1.5 1l1-0.7l1 0.3l1.5-0.3l0.5 0.9l0.5 0.1l0.5-0.3l0.5-1.1l2.5 1.4l1-0.7h1l1.5 1.8l1-1.8l1.5-0.1l1 0.8l1.5-1.2l1 0.4l1 1.1l1-1.2l1.5 0.7l2.5-0.8l3 0.1l1 1.4l0.5-0.1l0.5-1.2l1 0.4l1.5-0.5l0.5 0.9l3-0.6l0.5 1.2l0.5-0.2l1-1.6l2.5 0.6l1.5-0.4l1 1.4l0.5-0.1l0.5-1l3.5-0.3l0.5 0.3l0.5 1.3l0.5-0.1l1-1.6l1.5 0.3l0.5 0.9l0.5 0.1l1.5-1.2l1 0.3l0.5 0.8l0.5 0.1l1.5-0.8l1.5-0.1l1 1.6h0.5l0.5-1.2l1.5-0.9l1.5 0.8l0.5 0.8l0.5 0.2l1-1.5l1.5 1.1l0.5-1l2.5-0.2l0.5 0.2l1 1.3h0.5l0.5-1l1.5 0.2l1.5-0.7l1 1l2.5-0.9l0.5 1.1l0.5 0.3l1.5-1.3l2 0.6l1-0.7l1 0.2l0.5 1.1l0.5 0.5l0.5-0.3l0.5-1.6h0.5l3 1.6l1.5-1.3l7 0.3l2-0.4l1 0.7l3-0.8l2.5 0.8l1-0.9l1.5 0.6l3 0.2l6.5-0.6l2.5 0.5l3.5-0.3l3 0.3l0.5 3.2h1.5l0.5-3.4l4-0.3l4 0.1l0.5 0.4l1.5-0.3l1.5 0.6l3.5-0.6l3 0.5l0.5 3h1l0.5-3.8l3 0.9l1.5-0.7l1 0.4l2-0.4l0.5 3.6h4l0.5-3.3l1.5-0.1l1 0.5l1.5-0.8l2-0.2l1 0.5l1.5-0.4l2.5 0.7l1.5-0.4h2l0.5 1l0.5 0.4l1-1.2l1 0.1l0.5-0.4l4 0.8l1-0.5l1 0.5l0.5 0.8l1.5-1.6h0.5l0.5 1.9l0.5 0.1l1-1.2l1 0.1l0.5-0.5h3l1.5 0.6l1-0.5l1.5 0.4l0.5 1l0.5 0.2l1.5-1.8l2-0.2l2.5 1.2l1-1l2 0.7l1-0.6l0.5 0.8l1.5-0.8l0.5 0.8l1.5-0.6l3-0.2l1.5 0.3l0.5 0.6l1.5-1.1l1 0.3l0.5 0.8l1.5-0.9l0.5 0.9l0.5 0.1l1-0.9l1.5-0.3l1.5 0.6l2-0.3l1 1l1.5-1.3l1.5 0.2l1 1.2l0.5 0.1l0.5-1.2l1 0.4l1-0.4l2 0.8l1.5-1.1l1.5 0.7l1-0.5l1 0.1l0.5 0.7l1.5-0.4l1 0.9l0.5-0.9l1-0.5l0.5 0.8l2.5-0.7l1 0.7l1-0.5l1.5 0.6l0.5-0.6l1 0.4l1.5-0.5l1 0.3l0.5 1.2l0.5 0.2l0.5-1.2l0.5-0.6l1.5 0.1l1 0.8l2-1l0.5 0.2l0.5 1.5l0.5 0.9l0.5-0.2l0.5-1.8l1-0.4l0.5 1.5l0.5-0.1l1-1.3l0.5 0.3l1-0.2l1 1.4l0.5-0.2l0.5-1.8h0.5l0.5 1.6l0.5 0.4l0.5-0.6l0.5-1.3l0.5-0.2l1 0.4l1 2.3l0.5-0.1l0.5-1.5l2-1l1 1.9l0.5-0.2l0.5-1.4h0.5l0.5 0.6l0.5 1.3l0.5 0.3l0.5-1.5l0.5-0.5l1.5 0.1l1 1.9h0.5l0.5-1.8l0.5-0.4l1 0.2l0.5 1.8h0.5l1-1.8l0.5-0.1l0.5 0.3l0.5 2l0.5 0.3l1-2.5l0.5-0.3h0.5l1 2h0.5l0.5-1.7l1 0.2l1.5-0.8l0.5 1.6l0.5 0.5l0.5-0.4l0.5-1.4l0.5 0.8l0.5 1.5l0.5 0.2l0.5-1.3l1-1h0.5l1 1.6l0.5-0.3l0.5-1.5h1.5l1 2l0.5 0.2l0.5-1.8l1-0.1l1 0.4l0.5 1.7l0.5-0.2l1-2.2l1.5 0.1l0.5 1.3l0.5 0.5l0.5-0.5l0.5-1.5l0.5-0.2l0.5 0.2l0.5 2.2l0.5 0.5l1-2.4l1-0.2l1 1.8l0.5-0.1l0.5-1.6l1-0.1l1 0.3l0.5 1.6l0.5 0.1l0.5-0.5l0.5-1.6l0.5 0.2l1 2.1l0.5-0.6l0.5-1.6l0.5-0.2l1 0.5l0.5 1.2l0.5 0.4l0.5-0.5l0.5-1.2l1.5-0.5l0.5 0.2l0.5 2l0.5 0.2l1-2.3l1 0.1l0.5 0.1l0.5 1.4l0.5 0.8l0.5-0.4l0.5-1.7l0.5-0.1l0.5 1.4l0.5 0.6l0.5-0.3l0.5-1.6l1.5 0.3l1 1.5l0.5-0.2l0.5-1.3l0.5-0.3l1 0.5l0.5 1.9l0.5-0.1l1-2.2l1.5-0.3l0.5 0.4l0.5 1.4l0.5-0.1l0.5-1l0.5-0.3h1l0.5 1.6l0.5 0.2l1-1.9l1.5 0.1l1 2l0.5-0.3l0.5-1.4l0.5-0.3h0.5l1 1.7l0.5-0.4l0.5-1.6h0.5l0.5 0.8l0.5 1.4l0.5 0.3l0.5-1.5l0.5-0.7l1-0.5l0.5 0.1l1 2.4l0.5-0.3l0.5-1.7l0.5-0.2l1 0.3l0.5 1.1l0.5 0.4l0.5-0.5l0.5-1.6h0.5l0.5 1.8l0.5 0.4l0.5-0.6l0.5-1.5l0.5 0.1l1 2.3l0.5-0.1l0.5-1.9l2-0.3l0.5 0.7l0.5 1.4l0.5 0.3l0.5-1.5l1.5-0.8l0.5 1.5l0.5 0.1l1-1.6l1 0.2l0.5 1.4l0.5 0.6l1-2.3l0.5-0.4l1 0.7l0.5 1.6h0.5l1-1.7l1 0.1l1 2.1l0.5-0.2l0.5-1.9l1-0.3h1l0.5 0.5l0.5 1.8l0.5-0.2l0.5-1l0.5-0.5l0.5 1.4l0.5-0.1l0.5-1.4l1-0.5l1.5 0.3l1 1.9l0.5-0.2l0.5-2l1-0.2l1 2.1l0.5-0.2l0.5-1.6l1.5 0.1l0.5 1.7l0.5 0.2l1-1.5l1.5-0.6l1 0.4l0.5 1.5l0.5 0.1l0.5-1.4l1-0.6l0.5 1.3l0.5 0.7l0.5-0.2l0.5-2h0.5l1 0.3l0.5 1.6l0.5-0.1l1-1.6h1l1 1.1l0.5 1.4l0.5-0.1l0.5-1.7l0.5-0.4l1.5 0.2l0.5 1.3h0.5l1-1.8l0.5-0.1l0.5 0.4l0.5 1.7l0.5-0.1l0.5-1.3l0.5-0.6l2 0.5l0.5 1.6l0.5 0.1l1-2.3l0.5-0.1l1 2.5h0.5l0.5-2l1-0.3l0.5 2.1l0.5 0.6l1-0.6l0.5-1.2l0.5-0.5h0.5l1 1.9l0.5-0.4l0.5-1.6l2 0.3l0.5 1.4h0.5l1-1.9l0.5-0.1l0.5 0.1l0.5 1.7l0.5 0.2l1-1.6l0.5 0.2l0.5 0.4l0.5 1.5h0.5l0.5-1.5l0.5-0.6h1l0.5 0.3l0.5 1.9l0.5-0.4l1-2.4l2 0.2l0.5 1.4l0.5 0.7l0.5-0.4l0.5-1.6l1-0.2l0.5 0.3l0.5 1.8l0.5 0.1l1-1.8l1 0.1l1 1.9h0.5l0.5-1.8l0.5-0.4l0.5-0.1l1 2h0.5l0.5-1.6l1 0.1l0.5 0.3l0.5 1.5l0.5-0.2l0.5-1.3l0.5-0.7l1 0.8l0.5 1.6l0.5-0.1l0.5-1.6l0.5-0.6l2 0.2l0.5 1.4l0.5 0.1l1-1.8l0.5 1.8l0.5 0.5l0.5-0.7l0.5-1.4l2-0.4l0.5 1.5l0.5 0.3l0.5-0.5l0.5-1.4h0.5l1 2.5h0.5l0.5-1.6l0.5-0.4l1-0.3l0.5 0.4l0.5 1.6l0.5 0.2l0.5-1.4l1-0.4l0.5 1l0.5 1.7l0.5-0.1l1.5-2.4l0.5-0.4h1l1 1.8l0.5-0.3l0.5-1.6h1l0.5 0.2l0.5 1.9l1 0.9l0.5-0.1l0.5-2.6l1.5 0.6l0.5 1.7l0.5-0.2l0.5-1.8l0.5-0.7l1 0.3l1 2l0.5 0.1l0.5-1.9l1.5-0.6l1 2.3l0.5 0.1l0.5-1.8h0.5l0.5 1.7l0.5-0.2l1-2l2 0.3l1 1.8l0.5-0.2l0.5-1.4l2-0.2l1 1.7l1-1.5l0.5-0.1l1.5 2.7l0.5-0.3l0.5-2.5l1.5-0.6l0.5 0.6l0.5 1.4h0.5l0.5-1.2l0.5-0.3l0.5 0.3l0.5 1.5l0.5-0.1l1-1.5l1-0.1l0.5 1.2l1.5 1.6l0.5-1l0.5-1.9l0.5-0.3l0.5 1.6l0.5 0.4l1-1.6l1-0.2l0.5 1.5l0.5 0.6l0.5-0.7l0.5-1.5l1 3.1l0.5-0.2l0.5-0.8l0.5 0.1l1-2.1l1.5 0.1l1 2.1l0.5 0.1l0.5-1.8l0.5-0.6l0.5 0.1l1 2.2l0.5-0.5l0.5-1.4l2-0.6v10.4l-2-0.8l-0.5-1.2l-0.5 0.1l-0.5 1.5l-1 0.3l-1.5-1.3l-1 1.4l-1.5-0.2l-0.5-1.1l-1 1l-1-0.4l-0.5 0.7l-1.5-0.5l-0.5 0.6l-1.5-0.6l-0.5-1.4l-0.5-0.2l-0.5 1.3l-1 0.8l-0.5 0.2l-0.5-0.6l-0.5-1.2l-0.5 0.1l-0.5 1.5l-1 0.4l-1.5-2.1l-0.5 1.4l-1 0.2l-1-0.2l-0.5-1.4l-1.5 1.4l-1-0.4l-0.5-1.2l-0.5 0.7l-0.5 1.7l-1.5-1.1l-0.5 0.3l-0.5-1.2h-0.5l-0.5 0.7l-1.5 0.1l-1.5-1.1l-0.5 0.9l-2 0.8l-0.5-1h-0.5l-0.5 1.2l-2-0.2l-0.5-1.2l-0.5-0.2l-0.5 1.5l-1 0.1l-1.5-1.6l-1 1.2l-1 0.1l-1-1.2l-0.5 0.1l-0.5 1l-0.5 0.3l-2-1.3l-0.5 1.7l-1 0.2l-1.5-0.7l-0.5-1.5l-1.5 0.9l-1.5 0.1l-0.5-1.1h-0.5l-0.5 1.1l-0.5-0.3l-0.5 0.7l-1 0.1l-0.5-1.5l-0.5-0.2l-0.5 0.9l-1.5 0.5l-0.5-0.1l-0.5-1.1l-0.5 0.2l-0.5 1.2l-0.5 0.1l-1-0.2l-1-1l-0.5 1.3l-2-0.8l-0.5-0.9l-0.5 0.2l-0.5 1l-1.5 0.1l-0.5-0.1l-0.5-1.1l-0.5 1.1l-0.5 0.3h-1.5l-0.5-1.2l-0.5 0.1l-0.5 1.2l-1.5-0.6l-0.5-0.7l-0.5-0.2l-0.5 0.1l-0.5 1.5l-1.5-0.3l-1-0.8l-0.5 0.5l-2 0.5l-0.5-1.5h-0.5l-0.5 1.2h-2l-0.5-1.4l-0.5 1l-2 0.4l-0.5-1l-0.5 0.3l-0.5 1.2l-2.5-1.7l-1 1.4l-1.5-0.5l-0.5-0.9h-0.5l-1 1.6h-0.5l-1-0.1l-0.5-1.6l-0.5 0.2l-0.5 0.9l-0.5 0.3l-1.5-0.3l-0.5-1.3l-0.5 0.2l-0.5 0.9l-2 0.9l-0.5-1h-0.5l-0.5 1.3l-2-1l-0.5-0.8l-1 0.6l-0.5 0.9l-1 0.3l-0.5-1.5l-0.5 0.2l-0.5 1.1h-0.5l-1-0.5l-0.5-1.2l-0.5-0.2l-1 1.2l-1.5-0.2l-0.5-0.8l-0.5-0.2l-1 1.7l-1.5-0.6l-0.5-1h-0.5l-0.5 1.1l-1-0.2l-1 0.4l-0.5-1l-1 0.9l-1-0.2l-0.5 0.4l-0.5-1l-0.5-0.3l-1.5 1.4l-1-0.1l-0.5-1.4l-0.5-0.3l-0.5 1l-1 0.7l-1-0.2l-0.5-1.3l-1 1l-2 0.6l-0.5-1.3h-0.5l-1 1.3l-1 0.1l-0.5-0.2l-0.5-1.5h-0.5l-0.5 1.4l-1 0.4l-1-0.3l-0.5-1.3l-2.5 0.7h-0.5l-0.5-0.9l-1.5 1l-1.5-0.1l-0.5-0.9l-0.5 0.2l-0.5 0.8l-1.5 0.4l-0.5-1.1l-0.5-0.1l-0.5 1.2l-1.5 0.5l-1-1.6l-1 1.2l-1.5-0.3l-0.5-1.4h-0.5l-0.5 1.2l-0.5 0.3l-1.5 0.1l-0.5-1.1h-0.5l-0.5 1.2l-1.5-0.3l-1-1.1l-1 0.9l-1.5-0.2l-0.5-0.9l-1.5 1.5h-1.5l-0.5-1l-0.5-0.2l-0.5 1.3l-1.5 0.1l-1-1.2l-1 1.3l-0.5 0.1l-1-0.8l-0.5-1.4l-0.5 0.4l-0.5 1.5l-0.5 0.1l-1-0.4l-1-1.4l-0.5 1.1l-1.5 0.4h-0.5l-0.5-1.1h-0.5l-0.5 1.2l-1.5 0.2l-1-1.3l-1 1.2l-1 0.1l-0.5-0.2l-0.5-1.5l-0.5-0.1l-0.5 1.5l-1 0.3l-1-0.8l-0.5-1.1l-0.5 1l-2 0.5l-0.5-0.8l-1 1.1h-1h-0.5l-0.5-1.4l-0.5-0.1l-0.5 0.9l-1.5 0.5l-0.5-0.8l-1-0.4l-0.5 1.1l-0.5 0.2l-1-0.2l-1-0.9l-2.5 1l-0.5-1.2l-0.5-0.1l-0.5 0.1l-0.5 1.1l-1 0.3l-0.5-0.1l-1-1.3l-0.5 0.2l-0.5 1l-1-0.6l-0.5 0.3l-1-1.2l-1 1.3l-1.5 0.3l-0.5-1.1h-0.5l-0.5 0.9l-0.5 0.2l-1-0.4l-1-1.4h-0.5l-0.5 1.4l-1 0.2l-1.5-0.8l-0.5 1l-0.5 0.4l-1.5-0.2l-0.5-1.2l-0.5-0.3l-0.5 1.2l-1 0.3h-1l-0.5-1.4h-0.5l-0.5 1l-1.5 0.4l-0.5-0.5l-0.5-1.1l-1 1.1h-1.5l-0.5-1.5l-0.5 0.2l-1 1.4l-1.5 0.2l-0.5-1.2l-2 1.3l-0.5-0.3l-0.5-1.1l-0.5-0.3l-1.5 1.4l-1-0.2l-0.5-1.5l-0.5 0.3l-0.5 1.2l-1 0.4l-0.5-0.1l-1-1.3l-1 1.2l-1.5 0.1l-0.5-1.7l-0.5-0.1l-0.5 0.4l-0.5 1.3l-0.5 0.3l-1-0.1l-0.5-1.2l-1 0.2l-0.5 1l-0.5 0.3l-1 0.1l-1-1.7l-2.5 1.1l-0.5-1.1l-0.5-0.2l-0.5 1.2l-2-0.6l-0.5-0.8l-1.5 1.8h-1l-0.5-1.1l-0.5-0.2l-0.5 0.8l-2 0.1l-0.5-1l-1.5 1.5h-1l-0.5-0.3l-0.5-1.3l-0.5-0.2l-0.5 1.5h-1.5l-1-0.9l-0.5 0.9l-1 0.1l-0.5-1.1l-0.5-0.1l-0.5-1l-0.5-0.1l-0.5 0.9l-1-0.5l-0.5-1l-0.5-0.1l-1.5 0.7l-0.5 2.3l-1-0.1l-0.5-2.4l-1 0.1l-0.5 0.9l-0.5 0.2l-1.5-1.6l-0.5 1.6l-1 0.4l-0.5-1l-0.5-0.3h-2l-0.5 0.9l-0.5-0.1l-0.5-1l-0.5-0.4l-0.5 0.1l-0.5 0.2l-0.5 2.1l-1-0.3l-0.5-1.7l-0.5 0.8l-0.5 0.2l-1.5-1.2l-1.5 1l-1-0.8l-0.5 1.6h-1l-0.5-1l-1.5-0.9l-2 1l-0.5-0.3l-0.5 1.9l-0.5 0.1l-0.5-0.5l-0.5-2.3l-2 0.2l-0.5 0.9l-0.5 0.1l-0.5-0.8l-1-0.5l-1.5 1.1l-1-0.5l-2 0.1l-0.5 1.4l-0.5 0.1l-0.5-0.3l-0.5-1.4l-0.5 1l-0.5 0.2l-1.5-1.5l-0.5 1.6l-0.5 0.4l-0.5-0.3l-0.5-1.2l-1-0.8l-1.5 0.8l-2-0.1l-0.5 0.7l-1 0.1l-1 0.7l-0.5-0.1l-0.5-1.3l-0.5 0.7l-1.5-1.2l-3 0.7l-1-0.7l-1.5 0.4l-1.5-0.3l-0.5 0.8l-0.5 1.6l-0.5 0.2l-1-2l-5-0.4l-2.5 1l-1-1.1l-0.5 1l-0.5 2l-0.5-0.1l-1-2.7l-2 0.5l-0.5-1l-1 0.2l-1 1.1l-1.5-0.9l-1.5 0.9l-2.5-0.4l-1 1.4l-1.5-2l-2.5-0.2l-1-0.8l-1-0.1l-1.5 0.7l-3.5-0.1l-1.5 0.4l-1-0.4l-0.5-2.9h-4l-0.5 4.1l-1 0.2l-1-1.2l-1-0.3l-1.5 0.2l-2.5-0.4l-0.5 0.4l-0.5-3h-1l-0.5 3.8h-1l-0.5-0.8l-1-0.5l-4.5 0.6l-2-0.6l-3 1l-1-0.9l-2-0.1l-3 0.8l-0.5-3.3h-1.5l-0.5 4.1l-1.5-1.3l-5.5-0.4l-3.5 0.9l-3-0.8l-6 0.6l-2.5-0.7l-1 1.6l-1.5-0.9l-4 0.1l-1.5-0.7l-4 0.7l-3-0.5l-0.5 0.4l-1.5-0.3l-1 2.5l-0.5-0.2l-0.5-2l-0.5-0.7l-1-0.1l-0.5 0.2l-0.5 3l-0.5 0.2l-0.5-0.4l-0.5-2.7l-1 0.2l-0.5 0.8l-1 0.1l-0.5-0.7l-1-0.3l-0.5 0.4l-0.5 1.8l-0.5 0.2l-1-2l-1-0.2l-1.5 1.3l-0.5-0.9l-2.5-0.7l-1.5 0.8l-0.5 2l-0.5 0.1l-0.5-0.3l-0.5-2.3l-1-0.2l-1 0.1l-1 2.1h-0.5l-0.5-1.8l-0.5-0.5l-0.5 2.4l-0.5 0.3l-0.5-0.4l-0.5-2.5l-2.5 0.6l-0.5 2.5h-1l-0.5-2.6l-2.5 0.4l-0.5 0.9l-0.5 0.1l-0.5-0.1l-0.5-1.4h-2l-1 2.1l-0.5 0.1l-0.5-1.4l-0.5-0.2l-0.5 2.4l-0.5 0.2l-0.5-0.3l-0.5-2.9l-2 0.6l-0.5 0.7l-1-0.2l-0.5-0.7l-1 0.2l-0.5 1.3l-0.5 0.5l-0.5-0.5l-0.5-2.2l-1.5 0.7l-2-0.9l-0.5 2.6l-1 0.3l-0.5-2.6l-0.5 0.5l-1-0.1l-0.5 1.6l-0.5 0.2l-0.5-0.5l-0.5-1.6l-2.5 0.3l-0.5 2.4l-1 0.1l-0.5-2.7l-0.5-0.3l-2-0.1l-2 1.4l-1-0.1l-0.5-0.8l-1 0.2l-1 2l-0.5 0.1l-1-2.5l-1-0.3l-1 1.3l-0.5-0.1l-1-1.3l-0.5 0.1l-0.5 2.8l-0.5 0.6l-0.5-0.3l-0.5-2.7l-1.5 0.7l-1-0.2l-0.5 0.9h-0.5l-1.5-1.5l-1 1.8h-0.5l-0.5-1.7l-0.5-0.2l-1.5 0.5l-0.5-0.4l-0.5 1.1l-0.5 0.2l-1-1.2h-0.5l-1 1.3l-2-1.4l-0.5 2.5l-0.5 0.2l-0.5-0.4l-0.5-2.6l-3 0.7l-1 0.9h-0.5l-1-1l-2 0.1l-0.5 2.3l-0.5 0.3l-0.5-0.5l-0.5-2.7l-1-0.2l-0.5 0.1l-0.5 1.1l-0.5 0.4l-0.5-0.1l-0.5-1l-2 0.2l-0.5 2.1l-1.5 0.5l-2-0.8l-6.5 0.6l-2-0.6l-2.5 0.5l-1-0.5l-2.5-0.1l-1 0.5l-1.5-0.4l-3 0.9l-1.5-0.9l-1.5 0.4l-0.5-5.1l-1.5 2.7l-1 0.6l-1-1.1l-1-2.2l-0.5-0.3l-2 3.1l-1.5 0.6l-2-0.5l-1.5 0.3l-1-0.4l-2 0.6l-1.5-0.5l-1 0.3l-3.5-0.6l-2 0.5l-1-0.3l-1 0.6l-2-0.6l-1.5 0.4l-2.5-0.4l-1 0.3l-1-0.5l-1 0.4l-1.5-0.4l-1.5 0.6l-2-0.5l-1.5 0.6l-3.5-0.3l-1-0.6l-1.5 0.6l-2.5-0.4l-1.5 0.6l-3.5-0.6l-1 0.7h-2l-1.5-0.6l-3.5 0.3l-1.5-0.3l-2.5 0.4l-0.5 0.8l-0.5 0.3l-1-1.2l-1 0.3l-1.5-0.5l-1.5 0.7l-2-0.5l-0.5 1.5l-0.5 0.3l-0.5-0.4l-0.5-1.4l-2 0.5l-0.5 1.3l-0.5 0.4l-0.5-0.5l-0.5-1.2l-1 0.4l-1-0.3l-0.5 1.3l-0.5 0.1l-0.5-0.1l-0.5-1.5l-1.5 0.6l-1.5-0.4l-0.5 1.2l-1-0.3l-0.5-1.4l-2.5 0.3l-0.5 1.1l-1 0.3l-0.5-1.3l-2 0.2l-1 0.4l-0.5 1l-0.5 0.2l-0.5-0.1l-0.5-1.1l-2-0.9l-5 0.5l-0.5 0.4l-2-0.5l-1.5 0.6l-1-0.6l-4 1l-1-0.4l-2.5 0.3l-1.5-0.7l-2 0.6l-1-0.7l-1 0.7l-2 0.3l-3.5-0.7l-2 0.5l-3-0.2l-1 0.6l-1.5-0.8l-2.5 1.1l-1.5-0.9l-2.5-5.5l-1.5 2.9l-0.5 0.2l-4-0.5l-6.5 0.7l-1-0.6l-1.5 0.7l-4-0.9l-1.5 0.5l-0.5-0.4l-1 0.1l-0.5 0.4l-2.5-0.7l-1.5 1l-4.5-0.9l-3.5 0.4l-0.5-0.4l-1.5 1l-2-0.4l-1.5 0.4h-2.5l-2-0.5l-1 0.6l-1.5-0.2l-3.5 0.6l-2-0.8l-1.5 0.7l-3-0.4l-1 0.7l-3.5-0.3l-1.5 0.7l-2.5-0.6l-4 0.7l-1-0.4l-3 0.3l-1.5 0.8l-2.5-0.4l-0.5 0.2l-1.5-0.5l-3 1l-2-1.3l-2-4.6l-0.5-0.6l-1.5 3l-3 0.6l-2-0.7l-2 0.8l-2.5-0.6l-4 0.5l-2-0.7l-2 0.4l-2-0.6l-1.5 0.8l-3.5 0.4l-1-0.6l-1.5 0.5l-1-0.5l-2.5 1l-1-0.6l-2.5 0.5l-1-0.4l-3 0.6l-1-0.2l-2 0.7l-1-0.5l-2 0.4l-1.5-0.4l-5 1.3l-4-0.4l-1 0.7l-0.5-0.4l-1.5-4.1l-1-1.4l-2 2.6l-1 0.3l-1.5-0.5l-3 0.5l-4.5-0.6l-1.5 0.7l-1-0.6l-2 1.1l-3 0.3l-1.5-0.5l-5 1.4l-2-0.7l-2 1.1l-1.5-0.3l-3.5 0.5l-1-0.3l-0.5-5.7l-1 3.2l-0.5 0.6l-1-0.2l-2 0.6l-2.5-0.5l-4.5 1l-1.5-0.9l-3 1l-4.5-0.2l-2 0.8l-1.5-0.5l-1 0.3l-0.5-5.8l-1.5 3.8l-4.5 0.1l-2 0.9l-1.5-0.3l-5.5 1.2l-2.5-0.2l-0.5-4.8l-1 2.7l-3.5 0.7l-2 0.2l-1-0.4l-2.5 1.4l-1.5-0.3l-1 0.6l-0.5-5l-1 2l-1.5 1l-2 0.4l-1-0.6l-1.5 0.3l-3.5 1.4l-1-0.2l-0.5-4.8l-1 2.5l-3 0.4l-1.5 0.7l-1-0.2l-2.5 1.4l-0.5-4.8l-1 2.6l-0.5 0.5l-2.5 0.8l-1.5-0.6l-1.5 1.3l-0.5-4.4l-1 2.3l-1 0.6l-3 0.7l-1.5-0.2l-0.5-4.4l-1 3l-0.5 0.7l-2 0.4l-1 0.8h-1l-0.5-4.5l-1 2.1l-1 0.9l-2 0.7l-2-0.2l-1.5 0.7l-0.5-0.2l-0.5-4.3l-1 2.7l-1 0.8l-2.5-0.4l-3.5 1.1l-0.5-4.8l-1.5 3l-1.5 0.8l-2-0.3l-2 0.5l-1 0.7l-1.5-0.5l-0.5-1.6l-9 0.4l-5.5-6.3l-0.5 1.2h-44z" fill="#0000ff" stroke="#0000ff" stroke-width="0.8"/>
<path d="M751.5 961.6h3l3-0.1l3-0.1l3-0.1l3-0.2l3-0.3l3-0.2l3-0.3l3-0.5l3-0.4l3-0.4l3-0.5l3-0.6l3-0.5l3-0.6l3-0.5l3-0.8l3-0.9l3-0.8l3-0.5l3-0.5l3-0.5l3-0.5l3-0.4l3-0.5l3-0.4l3-0.4l3-0.5l3-0.4l3-0.2l3-0.3l3-0.3l3-0.3l3-0.3l3-0.2l3-0.3l3-0.3l3-0.3l3-0.3l3-0.3l3-0.3l3-0.3l3-0.2l3-0.3l3-0.3l3-0.3l3-0.3l3-0.3l3-0.3l3-0.2l3-0.3l3-0.3l3-0.2l3-0.2l3-0.2l3-0.2l3-0.2l3-0.2l3-0.2l3-0.2l3-0.2l3-0.2l3-0.2l3-0.2l3-0.2l3-0.2l3-0.2l3-0.2l3-0.2l3-0.2l3-0.2l3-0.2l3-0.3l3-0.2l3-0.2l3-0.2l3-0.2l3-0.2l3-0.2l3-0.2l3-0.2l3-0.2l3-0.2l3-0.2l3-0.2l3-0.2l3-0.2l3-0.2l3-0.2l3-0.1l3-0.2l3-0.2l3-0.2l3-0.2l3-0.2l3-0.2l3-0.1l3-0.2l3-0.2l3-0.1l3-0.2l3-0.1l3-0.2l3-0.2l3-0.1l3-0.2l3-0.2l3-0.1l3-0.2l3-0.1l3-0.2l3-0.2l3-0.1l3-0.2l3-0.1l3-0.2l3-0.2l3-0.1l3-0.2l3-0.2l3-0.1l3-0.2l3-0.1l3-0.1l3-0.2l3-0.1l3-0.1l3-0.2l3-0.1l3-0.1l3-0.1l3-0.2l3-0.1l3-0.1l3-0.2l3-0.1l3-0.1l3-0.1l3-0.2l3-0.1l3-0.1l3-0.1l3-0.2l3-0.1l3-0.1l3-0.2l3-0.1l3-0.1l3-0.1l3-0.2l3-0.1l3-0.1l3-0.1l3-0.1l3-0.1l3-0.1l3-0.2l3-0.1l3-0.1l3-0.1l3-0.1l3-0.1l3-0.1l3-0.1l3-0.1l3-0.1l3-0.2l3-0.1l3-0.1l3-0.1l3-0.1l3-0.1l3-0.1l3-0.1l3-0.1l3-0.1l3-0.2l3-0.1l3-0.1l3-0.1l3-0.1l3-0.1l3-0.1l3-0.2l3-0.1l3-0.1l3-0.2l3-0.1l3-0.1l3-0.1l3-0.1l3-0.1l3-0.1l3-0.1l3-0.1h3l3-0.1l3-0.1l3-0.1l3-0.1l3-0.1l3-0.1l3-0.1l3-0.1l3-0.1l3-0.1l3-0.1l3-0.1l3-0.1l3-0.1l3-0.1l3-0.1l3-0.1l3-0.1l3-0.1l3-0.1l3-0.1l3-0.1l3-0.1l3-0.1l3-0.1l3-0.1l3-0.1l3-0.1l3-0.1l3-0.1l3-0.1l3-0.1l3-0.1l3-0.1h3l3-0.1l3-0.1l3-0.1l3-0.1l3-0.1l3-0.1l3-0.1l3-0.1l3-0.1h3l3-0.1l3-0.1l3-0.1l3-0.1l3-0.1h3l3-0.1l3-0.1l3-0.1l3-0.1l3-0.1h3l3-0.1l3-0.1l3-0.1l3-0.1l3-0.1h3l3-0.1l3-0.1l3-0.1l3-0.1l3-0.1h3l3-0.1l3-0.1l3-0.1l3-0.1l3-0.1h3l3-0.1l3-0.1l3-0.1l3-0.1l3-0.1l3-0.1h3l3-0.1l3-0.1l3-0.1l3-0.1l3-0.1h3l3-0.1l3-0.1l3-0.1l3-0.1l3-0.1l3-0.1l3-0.1h3l3-0.1l3-0.1l3-0.1l3-0.1l3-0.1l3-0.1h3l3-0.1l3-0.1l3-0.1l3-0.1l3-0.1l3-0.1l3-0.1h3l3-0.1l3-0.1l3-0.1l3-0.1l3-0.1l3-0.1l3-0.1h3l3-0.1l3-0.1l3-0.1l3-0.1l3-0.1l3-0.1l3-0.1h3l3-0.1l3-0.1l3-0.1l3-0.1l3-0.1l3-0.1h3l3-0.1l3-0.1l3-0.1l3-0.1l3-0.1h3l3-0.1l3-0.1l3-0.1l3-0.1h3l3-0.1l3-0.1l3-0.1l3-0.1l3-0.1h3l3-0.1l3-0.1l3-0.1l3-0.1h3l3-0.1l3-0.1l3-0.1l3-0.1l3-0.1h3l3-0.1l3-0.1l3-0.1l3-0.1l3-0.1h3l3-0.1l3-0.1l3-0.1l3-0.1h3l3-0.1l3-0.1l3-0.1l3-0.1l3-0.1h3l3-0.1" stroke="#f6a625" stroke-width="3"/>
<path d="M751.5 960.1l3.5-0.2l1.5 0.5l3-0.2l1.5 0.4l2-0.4l3.5-0.2l3 0.6l3-0.5l1.5 0.5l1.5-0.3l1.5 0.5l2.5-0.2l3.5 0.9l3 0.1l6.5 1.7l2 1.2h1.5l4 1.6l3 1.7l3.5 1.3l1-0.1l2.5 1.1l2.5 0.1l23 4.4l10 0.8l2.5 0.8l2-0.3l1.5 0.5l5.5 0.3l4 1l2-0.3l4.5 0.4l5 0.6l2 0.8l4-0.2l5 1l7 0.3l2.5 0.8l1.5-0.4l4.5 1l7.5 0.3l3 0.8l4.5-0.1l7.5 1l3.5-0.3l1.5 0.7l5-0.2l5 0.8h3.5l1.5 0.5l2-0.5l1.5 0.7l4-0.2l1 0.5l2-0.1l2 0.5l5-0.1l6.5 1l4-0.2l3.5 0.8l1.5-0.5l2 0.7l1.5-0.3l4.5 0.8l2.5-0.2l1.5 0.5l2.5-0.4l6 1.1l4-0.3l14.5 1.5l1.5-0.3l4 0.6l3.5-0.1l3 0.3l1.5 0.7l1.5-0.4l2.5 0.6l4-0.2l3 0.7l2.5-0.2l3 0.5l2.5-0.4l9.5 1.1l1.5-0.4l1.5 0.4l3.5-0.1l3.5 0.7l3-0.5l3 0.8l7-0.1l3 0.6l2.5-0.2l5 0.7l1.5-0.5l3 0.7l2-0.4l11 1.2l1.5-0.4l6.5 0.6l2.5-0.2l2.5 0.5l1-0.3l2.5 0.7l5-0.4l3 0.8l1.5-0.4l7.5 0.3l1 0.5l3-0.3l1.5 0.5l6-0.3l4 0.7l1.5-0.5l8.5 0.9l2.5-0.4l9.5 0.4l3 0.8l4.5 0.1l2-0.4l2.5 0.6l4-0.3l1.5 0.5l2-0.3l4 0.5l3-0.3l1.5 0.5h6.5l1.5 0.5l1-0.5l3 0.1l12.5 1l1.5-0.3l3 0.4l4.5-0.2l1.5 0.5l3-0.5l2.5 0.7l2-0.5l2.5 0.1l2.5 0.6l7.5-0.1l2.5 0.7l3-0.5l6 0.6l1.5-0.5l2.5 0.6l3-0.3l3.5 0.7l8.5-0.1l4.5 0.5l1-1l0.5 0.1l0.5 0.8l3.5-0.3l3.5 1l1.5-1h0.5l0.5 0.8l4.5-0.4l1.5 0.7h2l0.5-0.6l1.5 0.9l1.5-0.8l2 0.9l1.5-0.2l1-0.9l0.5 0.1l0.5 0.7l2-0.2l2 0.8l1-0.9l1.5 0.7l1.5-0.4l3 0.8l2.5-0.2l1-0.7l1 1.1l2.5-0.3l1-0.7l1.5 0.9l1-0.1l0.5-0.7l1.5 0.8l3 0.1l1.5-0.5l1 0.5l4.5 0.3l0.5-0.1l0.5-0.9h1l0.5 1l1.5-0.7l1 0.8l1.5 0.2l1.5-0.7l3.5 0.8l0.5-0.7l1-0.2l0.5 0.9l1 0.1l3-0.9l0.5 0.8l1-0.6l1.5 0.8h2l0.5-0.8l1-0.1l0.5 1l0.5 0.1l2.5-0.1l1.5-0.8l2.5 1.2l1.5-1.3l1 0.8h2l1 0.6l1-0.3l0.5-0.9l1 0.2l0.5 0.9l1.5 0.1l1.5-0.8l1.5 1.1l3-0.4l7.5 0.5l4.5-0.5l1.5 0.5l3-0.1l3 0.6l3-0.4l8 0.7l6-0.4l3.5 0.8l2-0.6l3.5 0.7l1.5-0.5h4l3 0.8l1.5-0.9l1.5 0.7l1.5-0.3l2.5 0.5l4.5-0.6l3 0.7l3.5-0.2l1 0.4l1.5-0.4l1 0.5l5-0.2l1.5 0.4l2-0.9l1 0.7l3 0.4l2-0.4l2 0.4l1-0.6l2 0.9l1.5-1.5l1 1.2l1.5 0.2l6-0.1l1 0.4l1.5-1.4l1 0.9l2 0.6l2-0.5l2.5 0.5l1.5-0.8l1 0.7l0.5-0.4l2-0.1l1.5 0.9l3-0.1l2-0.9l1.5 0.9l2 0.1l0.5-0.7l0.5-0.1l1 0.9l6.5-0.6l0.5 0.6l1 0.2h1l0.5-0.9l1 0.2l0.5 0.6l5.5-0.2l0.5 0.6l1.5-0.7l1.5 0.7l1-0.4l1 0.5l0.5-0.7l1-0.2l0.5 0.8l2.5-0.4l1 0.6l2.5-0.8l1 0.2l0.5 0.8l1.5-0.6l2 0.8l0.5-1l0.5-0.1l0.5 0.1l0.5 1l3-0.6l1 0.7l0.5-0.1l0.5-1.1l2-0.1l0.5 1.3l1-1.2l1.5 0.4l0.5 0.8l0.5-0.1l0.5-0.9l1.5-0.1l1 1.2l0.5 0.1l0.5-1l1.5-0.3l1 1.2l0.5-0.1l0.5-0.9l1.5-0.1l1 1l1-0.7l1.5 0.2l0.5 1.1l0.5-0.1l0.5-0.9l1-0.3h0.5l0.5 0.9l0.5 0.1l1-0.8l1.5 0.2l0.5 0.8l0.5 0.1l1-1.1l1.5-0.1l0.5 1l0.5 0.3l0.5-0.1l0.5-1.2l1.5 0.1l1 1.1l1-1.2h1l0.5 0.1l0.5 1.3h0.5l0.5-1l0.5-0.2l1 0.1l1 1.1l0.5 0.1l0.5-0.8l1.5-0.3l1 0.9l0.5-1l2 0.6l0.5 0.9l0.5 0.1l0.5-1.3l1.5 0.2l1 0.8l0.5-0.8h2l0.5 0.9h0.5l0.5-1l1.5-0.2h0.5l0.5 1.2l0.5 0.1l0.5-1l1.5 0.1l1 1.2l1-1l1.5-0.3l0.5 1.3l1.5-1.1l1.5 0.2l0.5 0.8l0.5 0.1l0.5-0.9l1.5-0.1l1 1.2l1-1.2h0.5h1l0.5 1.1h1l0.5-0.8h1l0.5 0.2l0.5 0.9l0.5 0.1l0.5-0.3l0.5-1.1l1.5 0.2l1 1.2l1-1.1l1.5-0.2l0.5 1.1l1-0.1l0.5-0.7l1.5-0.1l1 1l0.5-0.9h0.5l1 0.1l1 1.1l0.5-0.9h1.5l0.5 0.2l0.5 1l0.5-0.8l2-0.5l0.5 1.3l0.5-0.1l0.5-0.9l1.5-0.6l1 1.7l1-1h1.5l0.5 1.1l0.5-0.1l0.5-0.9l0.5-0.2h1.5l0.5 1.1l1-1h1.5l0.5 0.9h0.5l0.5-1l1.5 0.1l1 1.2l1-0.9l1.5-0.3l0.5 1.4h0.5l0.5-1.2h1.5l1.5 1.5l0.5-1.2l1-0.1l1.5 1.2l1-1.2l1.5-0.3l0.5 1.3l0.5 0.2l0.5-1l1.5-0.1l1 1.3l0.5 0.1l0.5-1.2l1-0.1l1 0.5l0.5 1l1-1.2l1-0.4l0.5-0.1l0.5 1.4h0.5l0.5-1l1.5-0.4l1 1.5l0.5-1l1.5 0.1l1.5 0.9l0.5-0.9l1.5 0.1l1 1.1h0.5l0.5-1.4l2 0.2l0.5 1.3l0.5 0.2l0.5-1.2l1.5-0.2l1 1.4h0.5l0.5-1.2l1.5-0.2l1.5 1.4l0.5-1.1l1.5-0.2l1.5 1.6l0.5-1.1l1.5-0.4l1 1.3l1.5-1.5l1 0.2l0.5 1.3l0.5 0.1l0.5-1.2l2 0.2l0.5 1.1l0.5-0.1l0.5-1.1h1.5l0.5 1.1l0.5 0.3h0.5l0.5-1.1l1.5 0.2l1 1.2l1-1.3l1.5-0.5l0.5 1.2l0.5-0.4l0.5-1.3l1 0.4l1.5 1.7l1-1.3l1.5 0.2l0.5 1.4l0.5-0.2l0.5-1.3l0.5-0.1l1.5 0.3l0.5 1l0.5 0.1l0.5-1.3l1.5 0.2l0.5 0.1l0.5 1.2l0.5-0.2l0.5-1.5l1.5 0.3l1 1.5l0.5 0.2l0.5-1.2l0.5-0.2l1 0.1l1 1.2l1-1.3l1-0.1h0.5l0.5 1.4h0.5l0.5-1.2l2 0.1l0.5 1.3l0.5-1.1l1-0.4l1 0.1l0.5 1.5l0.5 0.1l0.5-1.2l1.5-0.2l0.5 0.3l0.5 1l1-1.2h1l0.5 0.1l0.5 1.2l1-0.4l0.5-0.8l1.5 0.1l0.5 1.4l0.5-0.1l0.5-1.4l1-0.1l0.5 0.2l1 1.7l0.5-1.3l2-0.4l0.5 1.3h0.5l0.5-0.7l1.5-0.6l0.5-0.1l0.5 1.3l1-0.9l1.5 0.1l0.5 1.3h0.5l0.5-1.4l1.5-0.3l0.5 0.4l0.5 1.1l0.5-0.1l0.5-1.5h1l1 0.4l0.5 1.2h0.5l0.5-1.1l1.5 0.1l1 1.5l0.5-0.1l0.5-1.5l2-0.6l0.5 0.1l0.5 1.8l0.5-0.8l1.5-0.3l1 1.3l0.5 0.1l0.5-1.3h1.5l1 1.5l0.5-0.3l0.5-1l1.5-0.2l0.5 1.2l0.5-0.1l0.5-1l2 0.2l0.5 1.3l0.5-0.2l0.5-1.1l1.5-0.2l0.5 0.4l0.5 1.1l0.5 0.2l0.5-1.4l1-0.3l1 0.1l0.5 1.3h0.5l0.5-1.3l2-0.4l0.5 1.5l0.5 0.5l0.5-1l1.5-0.2l1 1.5l0.5-1.5l1-0.2l1 0.1l0.5 1.5l0.5-0.2l1-1.7l0.5-0.1l0.5 0.2l0.5 1.6l0.5 0.5l0.5-1.1l1.5-0.5l0.5 0.2l0.5 1.4l0.5 0.1l0.5-1.6l2 0.2l0.5-0.7l1.5 0.8l1-0.1l0.5 1.5l0.5 0.2l0.5-1.5l0.5-0.2l1-0.1l1 1.4l1-1.4l1.5 0.3l0.5 1.1l0.5 0.2l0.5-1.4l2-0.1v8.9l-2 0.6l-0.5-3.2h-0.5l-0.5 2.7l-1.5-0.5l-0.5-1.5l-0.5-0.7l-0.5 2.1l-0.5 0.8l-1-0.2l-0.5-0.3l-0.5-2.8l-0.5 0.1l-0.5 2.8l-1-0.1l-0.5 1.3l-1-0.1l-0.5-1.5l-0.5 0.4l-1.5 0.1l-0.5-3.1l-0.5 0.2l-0.5 2.3l-2-0.5l-0.5-2.1l-0.5 0.8l-0.5 3l-1 0.3l-1.5-4.1l-0.5 2.7l-2 0.1l-0.5-2.6l-0.5 0.6l-0.5 1.5l-1.5 0.2l-0.5-2.6l-0.5 0.5l-0.5 2.9l-1 0.3l-1-1.4l-0.5-2.5l-0.5 0.1l-0.5 2.4l-2 0.1l-0.5-2.6l-0.5-0.1l-0.5 1.8l-0.5 0.7l-1.5 0.2l-0.5-2.6l-0.5-0.1l-0.5 2.8l-1 0.1l-1-0.2l-0.5-2.7h-0.5l-0.5 2.6l-1 0.2l-0.5-0.2l-0.5-2.1l-0.5-1.2l-0.5 1.2l-0.5 1.7l-1 0.2l-0.5 0.1l-0.5-2.6l-0.5-0.1l-1 2.6l-1.5 0.2l-0.5-1.9l-0.5 2.8l-1-0.1l-0.5-0.8l-1-0.1l-0.5-2.7l-0.5-0.5l-1 2.3l-1.5 0.3l-0.5-2.5l-0.5 0.2l-0.5 2.4l-0.5-0.1l-0.5 1.2h-1l-0.5-2.9l-0.5-0.8l-0.5 2.3l-0.5 0.2l-1.5-0.2l-0.5-2.5l-0.5 0.3l-0.5 2.4l-1.5-0.1l-1-2.7l-0.5 2.5h-1.5l-0.5-0.6l-0.5-2h-0.5l-0.5 2.5l-2-0.1l-0.5-2.5l-0.5 1.7l-0.5 0.9l-1 0.1l-0.5-0.2l-0.5-2.7l-0.5 0.1l-0.5 2.6h-1.5l-0.5-1.9l-0.5-0.9l-0.5-0.3l-0.5 2.9l-1 0.4l-0.5-0.1l-1-2.9l-0.5 2l-2 0.6l-0.5-2.7l-0.5-0.2l-0.5 2.6h-0.5l-1.5-0.6l-0.5-2l-0.5 2.4l-0.5 0.2l-1.5-0.4l-0.5-2.1l-0.5 0.1l-0.5 2.8l-1.5-0.3l-1-2.9l-1 2.6l-1.5 0.4l-0.5-2.7l-0.5-0.1l-0.5 0.8l-0.5 1.7l-1.5 0.1l-0.5-2.9l-0.5-0.1l-0.5 2l-2 0.7l-0.5-2.7l-0.5-0.1l-0.5 2.3l-1 0.3l-1-0.3l-0.5-2.3l-0.5 0.1l-0.5 2.7l-1.5-0.4l-0.5-0.7l-0.5-1.7l-0.5 1.6l-1 2l-1-0.1l-0.5-3l-0.5-0.5l-0.5 2.4h-1.5l-0.5-1.9l-0.5-0.7l-1 2.3h-1.5l-0.5-2.2l-0.5-0.2l-0.5 0.6l-0.5 2h-1.5l-0.5-2.2l-0.5-0.3l-0.5 2.1l-2-0.3l-0.5-2l-0.5 0.3l-0.5 2.1l-1.5-0.2l-0.5-1.8l-0.5-0.5l-0.5 0.9l-0.5 1.5l-1.5-0.3l-0.5-2.2l-0.5 0.1l-1 2.2l-1.5-0.1l-0.5-2.3l-0.5-0.2l-1 2.4l-1.5-0.1l-0.5-2.5h-0.5l-1 2.4l-1.5-0.1l-0.5-2.3l-0.5 0.2l-0.5 2.6l-2-0.3l-0.5-2.5l-0.5 0.1l-0.5 1.8l-0.5 0.6l-1.5-0.3l-0.5-2.1l-0.5-0.1l-0.5 1.4l-0.5 0.6l-1.5 0.1l-0.5-2.4l-0.5 0.7l-0.5 1.6l-1.5 0.1l-0.5-2.1l-0.5-0.2l-0.5 2.3l-1.5-0.2l-0.5-0.9l-0.5-1.7l-0.5 1.6l-0.5 0.8l-1.5-0.2l-0.5-2.2h-0.5l-0.5 1.9l-2 0.6l-0.5-2.6l-0.5 0.1l-0.5 2.4l-1.5-0.4l-1-2.3l-1 2.3l-1.5 0.1l-0.5-2.1l-0.5-0.1l-1 2.3l-0.5 0.2l-1-0.2l-0.5-2.6l-0.5 0.2l-0.5 2.5l-1 0.1l-0.5-0.2l-0.5-1.6l-0.5-1l-1 2.6l-1.5-0.5l-0.5-2.3l-0.5 0.2l-0.5 2.3l-1.5-0.4l-0.5-1.3l-0.5-0.8l-0.5 2.1l-1 0.2l-1-0.3l-0.5-1.9l-0.5 0.2l-0.5 2.1l-1.5-0.2l-0.5-1.6l-0.5-0.8l-1 2.5l-0.5 0.2l-1-0.2l-0.5-2.6l-0.5 0.1l-0.5 2.3l-0.5 0.1l-1-0.3l-0.5-0.8l-0.5-1.6l-0.5 1.8l-1 0.5l-1-0.2l-0.5-2.2l-1 2.5l-1.5-0.5l-0.5-2.3l-0.5 0.5l-0.5 1.9l-1.5-0.1l-0.5-1.7l-0.5-0.5h-0.5l-0.5 2.1l-1.5 0.2l-1-2.1l-1 1.9l-1.5 0.3l-0.5-2.1l-0.5-0.2l-0.5 0.2l-0.5 1.7l-1.5 0.3l-0.5-1.9l-0.5-0.4h-0.5l-0.5 2l-1.5-0.1l-1-2.4l-1 2.1l-1.5 0.2l-0.5-2.1h-0.5l-0.5 2.1l-1.5-0.2l-1-1.9l-0.5-0.2l-0.5 2.1l-1.5 0.1l-1-2l-0.5 1.6l-0.5 0.5l-1.5 0.1l-0.5-2.2l-0.5-0.2l-0.5 2.2h-1l-1-0.3l-0.5-2.3h-0.5l-0.5 2.3h-1l-1-0.6l-0.5-1.8l-0.5 1.6l-0.5 0.8h-1.5l-0.5-2.5l-0.5 0.1l-0.5 1.9h-2l-0.5-1.9l-1 1.9l-1.5 0.2l-0.5-2l-0.5-0.1l-0.5 0.5l-0.5 1.3l-1.5 0.2l-0.5-2.2l-0.5 0.1l-0.5 2.1l-1.5-0.3l-1-2.2l-1 2.4l-0.5 0.1l-1-0.3l-0.5-2.2l-1 0.6l-0.5 1.4l-1 0.2h-0.5l-0.5-1.9l-0.5-0.3l-0.5 0.3l-0.5 1.7l-1.5-0.1l-0.5-1.5l-0.5-0.5l-0.5 0.3l-0.5 1.5l-1.5 0.2l-0.5-1.6l-0.5-0.4l-0.5 1.9l-1-0.2l-1-0.7l-0.5-1.2l-0.5 0.7l-0.5 1.5l-1.5-0.1l-0.5-1.8l-0.5-0.5l-0.5 1.3l-0.5 0.6l-1.5-0.1l-0.5-1.8l-0.5 0.1l-0.5 1.3l-0.5 0.5l-1.5 0.3l-0.5-2.2h-0.5l-0.5 1.9l-1.5-0.1l-1-2.1l-0.5 1.9l-2 0.2l-0.5-2l-0.5-0.1l-1 0.9l-1.5-1l-1-0.1l-0.5 0.3l-0.5 2l-0.5 0.2l-0.5-0.2l-0.5-2.2l-1-0.5l-1 0.6l-1.5-0.3l-0.5 1.2h-0.5l-2-1.4l-2 1.2l-1.5-1.2l-1 0.1l-0.5 1.6l-0.5 0.1l-0.5-0.2l-0.5-1.5l-0.5 0.4l-1-0.8l-2 0.9l-1.5-0.8l-0.5 1.3h-0.5l-1-0.9l-2.5-0.6l-0.5 0.6h-1l-0.5 1.5l-1-0.4l-0.5-1.9l-2 0.3l-0.5 0.6l-1.5-1l-1-0.1l-1.5 0.6l-2.5-0.6l-0.5 1.2h-0.5h-0.5l-0.5-1.3l-0.5 0.8l-0.5 0.1l-1.5-1.1l-0.5 1.1l-1 0.2l-0.5-0.9l-1-0.3l-3-0.1l-3 1.5l-0.5-0.3l-0.5-1l-0.5 0.7h-0.5l-1-0.9l-1.5-0.4l-1.5 0.9l-4-0.8l-1 1.4l-0.5 0.2l-1-1.4l-2-0.3l-1 0.5l-3.5-0.8l-1.5 0.7l-0.5-0.4l-1 1.8l-0.5-0.1l-1-2h-0.5l-1.5 0.9l-0.5-0.8l-2 0.3l-1-0.6l-2.5 0.3l-2-0.6l-1 1.2h-0.5l-1-1l-5-0.4l-5 0.3l-4-0.6l-3 1l-2-1.1l-3-0.2l-3.5 0.2l-1.5 0.8l-2.5-1.1l-4.5 0.1l-9-0.7l-4.5 0.7l-3-0.8l-1.5 0.3l-3.5-0.4l-2.5 0.3l-2-0.7l-3 0.6l-1.5-0.5l-4.5-0.3l-1 1.1h-0.5l-0.5-0.7l-4-0.6h-11l-1 1.1l-0.5 0.1l-1-1.3l-1-0.1l-0.5 0.1l-0.5 1.8l-0.5 0.1l-0.5-0.2l-0.5-1.7l-2 0.1l-1-0.5l-1 0.2l-1 1.1h-0.5l-1-1.3l-1 0.1l-1 0.9l-1.5-1l-3-0.3l-0.5 0.2l-0.5 1.3l-0.5 0.2l-0.5-0.3l-0.5-1.3l-2-0.3l-1 1.4h-0.5l-1-1.4l-0.5 1.6l-0.5 0.2l-0.5-0.2l-0.5-1.8l-2-0.1l-0.5 0.2l-0.5 1.6l-0.5 0.2l-0.5-0.2l-0.5-1.6l-2-0.3l-0.5 0.1l-1 1.2l-0.5-0.2l-0.5-0.9l-2-0.2l-1.5 1.3l-1-1.4l-0.5 1.3l-0.5 0.1l-0.5-0.2l-0.5-1.4l-2 0.1l-1 0.6l-2-1l-0.5 0.9l-1 0.3l-0.5-1l-0.5-0.1l-3 0.1l-0.5 1.4l-1-0.2l-0.5-1.5l-1.5-0.2l-0.5 0.9l-0.5 0.2l-1-0.9l-2.5 0.1l-0.5 1.4h-0.5l-0.5-0.2l-0.5-1.4l-3.5-0.3l-1.5 0.7l-2-0.8l-1 1.3l-0.5 0.1l-1-1.2l-1.5-0.3l-1 0.5l-1.5-0.5l-0.5 1.7l-1-0.3l-0.5-1.8l-2.5 0.2l-1 0.7l-1.5-0.9l-1 1.2l-0.5-0.1l-0.5-1l-1.5-0.4l-1.5 0.9l-2-0.9l-3 0.2l-0.5 1.6l-1-0.3l-0.5-1.8l-3-0.1l-1 0.7l-3.5-0.8l-0.5 1.5l-0.5 0.1l-0.5-0.3l-0.5-1.4l-1.5-0.1l-0.5 0.8l-0.5 0.1l-0.5-0.1l-0.5-0.9l-1-0.2l-1.5 0.4l-4.5-0.6l-10.5 0.2l-5.5-0.7l-13.5-0.2l-3.5-0.5l-2.5 0.4l-1.5-0.7l-6.5 0.3l-2.5-0.6l-7 0.3l-9.5-1l-4.5 0.2l-13-0.8l-2.5 0.4l-4-0.9l-4.5 0.6l-5-0.7h-5.5l-1.5-0.5l-8 0.2l-7.5-0.8l-2 0.4l-7.5-0.8l-2 0.3l-1-0.4l-5.5 0.2l-5.5-0.8l-8.5 0.1l-2.5-0.6l-4.5 0.1l-1-0.4l-2 0.4l-5-0.7l-5 0.3l-2-0.5l-1.5 0.4l-2.5-0.7l-1.5 0.3l-9.5-1l-3 0.2l-4.5-0.7l-1.5 0.3l-1.5-0.5l-1.5 0.4l-3.5-0.5l-3.5 0.2l-2.5-0.7l-5 0.2l-9.5-0.9l-1.5 0.3l-1.5-0.5l-3 0.2l-2.5-0.7l-1.5 0.5l-2.5-0.2l-5.5-0.8l-6 0.1l-1.5-0.5l-2 0.5l-2.5-0.8l-1.5 0.2l-7.5-0.8l-4.5 0.1l-5.5-1l-2 0.4l-2.5-0.6l-8.5-0.1l-2-0.7l-4.5 0.2l-2.5-0.7l-6.5 0.1l-1.5-0.7l-1.5 0.5l-1-0.6l-3-0.4l-7.5-0.2l-6-0.8l-5 0.1l-7-1l-2 0.4l-2.5-0.7l-8-0.5l-1 0.3l-1.5-0.6h-5l-2-0.7l-1.5 0.3l-3-0.5l-2 0.5l-2.5-0.8h-5.5l-3.5-0.7l-3 0.4l-6-1.3l-5 0.1l-6-1.3l-8.5-0.8l-4 0.2l-5-1.3l-1.5 0.4l-2.5-0.9l-3.5 0.2l-6.5-1.3l-3.5 0.2l-1.5-0.5l-1.5 0.3l-5.5-1.3l-12.5-0.7l-6-1.8l-1.5 0.2l-1.5-0.6l-5-0.4l-5-1.5h-2.5l-1.5-0.6l-2 0.1l-3.5-0.9l-11-4.9l-4-0.8l-3-1.3l-2.5-0.2l-1.5-0.8l-2-0.4h-5l-7-0.9l-6.5 0.3l-3.5-0.5l-6.5 0.6l-3-0.2z" fill="#6d5fd5" stroke="#6d5fd5" stroke-width="0.8"/>
<path d="M751.5 959.5l3.5 0.2l4-0.4l1.5 0.6l1.5-0.5l4.5 0.4l8.5-0.5l2-1.6l4.5-2.5l1.5-1.5l3-1.7l7-6.4l1.5-0.9l2.5-2.9l3.5-2.9l1.5-1.7l1.5-0.7l6.5 3.4l1.5-0.2l1.5 0.6l1.5-0.5l1.5 0.6l4.5-0.7l1 0.4h7.5l1.5 0.4l2.5-0.8l1.5 0.6l3-0.5l6.5 0.6l3-0.7l4.5 0.6l1.5-0.5l1 0.5l3.5-0.4l1 0.4l1.5-0.5l6.5 0.5l1.5-0.5l1 0.4l1.5-0.5l1.5 0.4l10.5-0.2l2 0.5l6.5-0.7l2.5 0.5l10-0.4l3.5 0.5l4-0.4l1.5 0.3l1.5-0.4l4 0.6l5.5-0.8l2 0.6l3-0.5l5 0.5l2.5-0.5l4.5 0.5l1.5-0.5l18.5 0.6l1-0.5l3 0.4l1.5-0.4l1.5 0.6l3-0.6l5 0.2l1.5 0.5l5.5-0.5l5 0.3l4.5-0.6l1 0.5l3.5-0.3l2 0.6l2-0.6l6.5 0.5l3-0.5l1.5 0.6l3-0.5l1 0.3l1.5-0.6l1.5 0.6l6.5-0.4l1.5 0.4l2.5-0.5l3.5 0.6l2-0.6l1.5 0.4l7.5-0.4l4.5 0.4l6.5-0.5l1 0.4l2.5-0.3l1 0.5l4-0.6l4 0.5l3.5-0.6l1.5 0.5l3.5-0.3l1.5 0.4l5-0.5l1.5 0.6l4-0.8l9 0.7l4.5-0.7l2.5 0.6l3-0.5l5.5 0.3l1-0.4l1.5 0.4l3-0.3l1.5 0.6l1-0.6l1.5 0.5l2.5-0.7l1 0.5l12.5-0.6l3 0.7l4.5-0.5l2 0.6l7.5-0.7l1.5 0.3l2.5-0.3l1 0.4l7-0.5l2.5 0.7l0.5-0.6l2.5 0.3l2-0.5l1.5 0.4l3 0.1l1-0.4l3 0.6l1.5-0.9l2 0.8l1.5-0.7l1.5 0.7l2-0.4l2 0.3l3-0.5l3.5 0.3l1.5-0.4l15 0.6l2.5-0.6l2 0.8l1.5-0.6l3 0.4l1.5-0.6l2.5 0.5l5.5 0.1l7.5-0.1l1-0.4l3.5 0.4l2.5-0.5l1 0.4l1.5-0.3l3 0.4l3.5-0.5l5 0.6l1.5-0.5l1 0.3l6-0.4l1 0.3l1.5-0.3l1.5 0.6l5.5-0.3l2.5-0.5l8 0.7h0.5l0.5-1.2l0.5-0.1l0.5 0.1l0.5 1.1h1.5l0.5-2h0.5l0.5 0.2l0.5 1.9l3.5-1.1l1 0.7l3 0.2l0.5-1.9l1 0.1l0.5 1.7l2-0.4l1 0.7l1.5-1l1.5 0.7l2-0.2l0.5-1.1h0.5l1 1.3l0.5 0.2l1-1.3l0.5 0.1l0.5 0.8l1.5 0.3l1-0.3l0.5-1.6l0.5-0.2l0.5 0.1l0.5 1.9l1.5-0.9h0.5l0.5 0.8h1l1-0.5l0.5-1l0.5 0.2l1 1.5l1.5-0.6l5.5 0.5l0.5-1.6l0.5-0.3h0.5l0.5 1.5l2.5 0.5l1-1l0.5 0.1l0.5 1l1.5-0.3l0.5-1.7l0.5-0.1l0.5 0.1l0.5 1.6l3 0.3l0.5-0.3l0.5-1.3l0.5-0.2l1 1.6h1l1.5-0.8l0.5 0.7l1 0.3l1-0.3l0.5-1.7l0.5-0.2h0.5l0.5 1.8l1-1l0.5 0.2l1 1.4l2-0.6l1-1l1 1.1l2.5 0.3l0.5-2l0.5-0.3l0.5 0.1l0.5 1.9l0.5 0.1l2-0.2l0.5-1.8h0.5l0.5 0.2l0.5 1.8l0.5-0.4l0.5-1.1h0.5l1 1.3l1.5 0.2l0.5-0.2l0.5-1.6l0.5-0.2l0.5 0.4l0.5 1.7h3.5l0.5-0.3l0.5-0.9l0.5-0.2l1 1l1 0.2l1-1.5h0.5l1 1.6l1 0.1l1-0.8l1.5 1l0.5-0.3l0.5-2.1l0.5-0.5l0.5 0.2l0.5 2.2l2-0.1l0.5-1.2h0.5l1 1.4l10 0.4l1-0.4l3.5 0.2l0.5-0.3l0.5-0.9l0.5-0.1l1 1.2l5-0.3l3 0.6l1.5-0.7l1.5 0.6l2.5-0.6l1.5 0.5h4l3.5-0.9l1 0.8l1.5 0.2l1.5-0.5l4.5 0.4l1.5-0.4l5 0.3l1-0.3l1.5 0.6l2.5-1l1.5 0.6l3-0.2l2.5 0.5l2-1.3l1.5 1.2l2-0.6l1.5 0.6l2-0.5l1.5 0.5l2-0.6l4.5 0.4l2.5-0.2l1-0.6l2 0.9l1.5-0.6l2.5 0.3l1-0.4l1 0.8l1-0.1l0.5-0.6l2 0.5l1-1.8h0.5l0.5 1.1l0.5 0.3l1-0.4l1.5 1l3-0.9l1 0.8l2-0.1l1-1.4l0.5-0.2l0.5 1l0.5 0.3l2 0.5l2-0.9l1.5 0.7l2.5-0.4l1 0.5l1-1.2l2 0.2l1.5 0.9l1.5-0.3l1 0.4l1-0.7l0.5-0.8l1 0.2l0.5 1l2-0.4l0.5 0.5l0.5-0.9l1 0.3l0.5 0.9l3-0.7l1 0.5l2-0.8l1 0.6l2 0.1l0.5-1.2l0.5-0.1l0.5 0.1l0.5 1.3l1-0.4l1.5 0.5l2.5-1.3h0.5l0.5 0.9l1.5-0.4l1 0.7l1.5-1l1 0.8l0.5-1.2l1-0.2l0.5 1.2l2.5-0.4l1.5 0.8l1.5-0.2l0.5-0.5l1-0.3l0.5 0.6l2.5 0.4l1-0.2l0.5-1.4l1 0.3l0.5 1.2l1.5 0.1l1.5-1.1l1.5 0.9l0.5-1.5l1-0.2l1 0.2l0.5 1.4l1-1.9h0.5l1 0.3l0.5 1.7l0.5 0.1l0.5-1.6l2-0.1l0.5 1.4l0.5-0.1l0.5-1.4l0.5 0.1l1.5 0.8l0.5 0.9l0.5-0.2l0.5-1.5l1-0.2l0.5 0.1l0.5 1.3l0.5 0.5l1-1.7h1l0.5 0.4l0.5 1.4l0.5-0.4l0.5-1.6l1.5 0.2l0.5 1.2l0.5 0.5l1-1.6l1.5-0.1l0.5 1.4l1-0.2l0.5-1.6l1.5 0.2l0.5 1.2l1 0.4l0.5-1.7l1.5 0.3l1 1.8l1-1.7l1.5-0.3l0.5 1.7h0.5l0.5-1.4l1.5 0.1l1 1.2l0.5-0.1l0.5-1.3l1.5 0.3l0.5 1l0.5 0.3l0.5-1.3l1 0.2l1-0.4l0.5 1.3l0.5 0.1l0.5-1.6h1.5l1 1.4l0.5-1.2l2-0.4l0.5 1.8h0.5l0.5-1.7l1-0.1l1 0.2l0.5 1.7l0.5-0.1l0.5-1.9l1.5 0.1l0.5 0.5l0.5 1.4l0.5-0.5l0.5-1.2l0.5-0.2l1 0.1l0.5 1.5l0.5-0.2l0.5-1l0.5-0.1l1.5 0.1l0.5 1.3h0.5l0.5-1.5l1.5 0.2l1 1.5l1-1.5l1.5-0.4l0.5 1.8l1-0.1l0.5-1.6l0.5-0.1h1l0.5 1.4l1 0.3l0.5-1.5l1.5 0.5l1 1.1l1-1.5l1.5 0.1l0.5 1.3l0.5-0.1l0.5-0.4l0.5-1.2l1.5 0.4l0.5 1.3l0.5 0.3l0.5-1.7l1.5-0.4l1 1.7l0.5-1.5h0.5l1.5 0.7l0.5 1.4l1-1.9l1-0.3h0.5l0.5 1.8h0.5l0.5-1.6h0.5l1 0.2l1 1.7l1-1.9l1-0.3l0.5 0.3l0.5 1.5l0.5 0.2l0.5-1.6l0.5-0.3l1.5 0.5l0.5 1.5l0.5-0.4l0.5-1.3l1-0.1l0.5 0.1l0.5 1.6l0.5-0.1l0.5-1.7l0.5-0.1l1 0.1l1 1.7l0.5-0.5l0.5-1.2l1-0.4h0.5l0.5 1.9h0.5l0.5-1.6l0.5-0.1l1 0.3l1 1.7l0.5 0.1l0.5-1.5l1.5-0.4l1 1.9l0.5-0.5l0.5-1.3l0.5-0.1l1 0.1l0.5 1.6l0.5-0.1l0.5-1.5l2 0.3l0.5 1.1l0.5-0.1l0.5-1.2h1.5l0.5 0.5l0.5 1.2l0.5-1.3l0.5-0.6l1.5 0.2l0.5 1.7h0.5l0.5-1.4l1.5-0.3l0.5 1.2l0.5 0.4l0.5-1.2l1.5-0.4l1 1.6l0.5-0.1l0.5-1.8l2 0.7l0.5 1.2l0.5-0.2l0.5-1.7l2 0.3l0.5 1.5l0.5 0.2l0.5-1.8l1.5 0.3l1 1.6l0.5-0.3l0.5-1.9l1.5 0.5l1 1.4l0.5 0.2l0.5-1.8l1.5 0.1l1 1.6l0.5 0.1l0.5-1.6l1.5-0.1l1 1.3l0.5-0.1l0.5-1.1h1.5l0.5 1.5l0.5 0.1l0.5-1.5l0.5-0.4l1.5 0.2l0.5 1.5h0.5l0.5-1.6l1.5 0.1l0.5 1.1l1 0.5l0.5-1.3l1.5-0.3l1 1.7l0.5-0.4l0.5-1.3l1.5 0.1l0.5 1.5l0.5-0.6l0.5-1.7h0.5l0.5 0.1l1.5 2.2l0.5-1.4l2-0.6l0.5 1.7l0.5-0.1l0.5-1.5l1 0.5h1l0.5 1.4h0.5l0.5-1.6l1.5-0.2l0.5 0.3l0.5 1.4h0.5l0.5-1.8l1.5-0.3l1 1.9l0.5 0.3l0.5-1.5l1.5-0.4l1 1.7l1-1.7l1.5 0.2l0.5 1.5h0.5l0.5-1.6l2 0.2l0.5 1.2l0.5-1.3h2l0.5 1.8l0.5-0.1l0.5-1.9l2 0.5l0.5 1.1l1-1.5l0.5-0.1l1 0.1l0.5 2l1-0.7l0.5-1.3l1.5-0.2l0.5 1.8l0.5 0.1l0.5-1.4l1.5-0.2l1 1.5l0.5-1.6l1-0.1h1l0.5 1.6h0.5l0.5-1.1h2l0.5 1.5l0.5-0.7l0.5-1.2l1-0.3l0.5 0.1l0.5 1.8l0.5 0.3l0.5-1.4l1.5-0.6l0.5 0.2l0.5 1.2l0.5-0.3l0.5-1.8l1 0.1l0.5 0.8l0.5 0.3l0.5 1.6l0.5 0.1l0.5-1.5l1.5-0.4l1 1.6l0.5-0.3l0.5-1.6l1.5-0.3l1 0.1l0.5 1.8l0.5-1.2l1.5-0.3l1 1.6l0.5 0.1l0.5-1.6l1.5-0.1l1 1.5l1-1.4l1.5-0.3l0.5 1.7l0.5 0.1l0.5-1.6h1l1 0.1l0.5 1.6l0.5 0.1l0.5-1.6l1.5-0.1l1.5 1.7l0.5-1.5l1-0.2l1 0.3l0.5 1.3l0.5-0.1l0.5-1.5l1.5-0.5l0.5 0.1l0.5 1.6l0.5 0.7l0.5-1.8h1l0.5 0.1l0.5 1.1l0.5 0.5l0.5-1.5l1-0.3l1-0.1l0.5 1.6l1.5-2.5l1 0.2l0.5 1.8l0.5 0.5l0.5-1.5l0.5-0.1l1.5 0.4l0.5 1.4h0.5l0.5-1.8l1.5-0.3l0.5 0.4l0.5-0.8l1 0.3l0.5 0.7l1-0.1l0.5 1.5l0.5 0.2l0.5-2l1.5 0.1l0.5 0.5l0.5 1.2l1-1.3l1.5 0.2l0.5 1.2h0.5l0.5-2l2 0.5v14.6l-2 0.2l-0.5-6.8h-0.5l-0.5 6.1l-1.5 0.1l-0.5-4.1l-0.5-2.3l-0.5 5l-0.5 2l-1.5-0.1l-0.5-6.9l-0.5-0.2l-0.5 6.1l-1 0.1l-0.5 3.2l-1-0.3l-0.5-3.7l-0.5 1.6l-1.5 0.2l-0.5-6.8h-0.5l-0.5 5.8l-1.5 0.1l-0.5-0.7l-0.5-5.2l-0.5 1.9l-0.5 7.1l-1-0.1l-1-6.8l-0.5-2.3l-0.5 6.4l-0.5 0.1l-1.5-0.3l-0.5-6l-0.5 1.8l-0.5 4.2l-1.5-0.1l-0.5-6l-0.5 1.9l-0.5 7.2l-0.5 0.2h-0.5l-0.5-2.7l-0.5-0.8l-0.5-6.1l-0.5 0.2l-0.5 5.7l-2 0.5l-0.5-6.4l-0.5-0.1l-0.5 4.6l-0.5 2l-0.5 0.1l-1-0.2l-0.5-6.3h-0.5l-0.5 6.4l-1.5 0.6l-0.5-0.5l-0.5-6.5h-0.5l-0.5 6.6l-1.5 0.3l-0.5-4.7l-0.5-2l-0.5 2.4l-0.5 3.9l-1 0.1l-0.5-0.2l-0.5-6.4h-0.5l-0.5 4.4l-0.5 2.5l-1.5-0.1l-0.5-4.5l-0.5 7.2l-1-0.2l-0.5-2.2h-1l-0.5-6.6l-0.5-0.5l-1 6.1l-1.5 0.2l-0.5-6.1l-0.5-0.1l-0.5 6.1l-0.5 0.1l-0.5 3l-1 0.1l-0.5-7.1l-0.5-2.3l-0.5 5.7l-0.5 0.8l-1.5-0.2l-0.5-6.1l-0.5 0.2l-0.5 6.3l-1.5-0.1l-0.5-3.9l-0.5-2.6l-0.5 6.1l-1.5-0.1l-0.5-1.3l-0.5-4.5l-0.5 0.1l-0.5 6h-2l-0.5-6.4l-0.5 3.5l-0.5 2.6l-1.5 0.1l-0.5-6.2l-0.5 0.4l-0.5 6.5l-1.5-0.1l-0.5-4.4l-0.5-2.1h-0.5l-0.5 6.8l-1.5-0.1l-0.5-3.7l-0.5-2.9l-0.5 4.9l-0.5 1.8l-1.5-0.2l-0.5-6.9l-0.5 0.1l-0.5 6.4l-0.5 0.1l-1-0.2l-0.5-1.1l-0.5-5.2l-0.5 5.7l-0.5 0.6l-1.5-0.3l-0.5-5.8h-0.5l-0.5 6.8l-1.5-0.1l-0.5-2.9l-0.5-3.8l-0.5 2.8l-0.5 3.5l-1.5 0.3l-0.5-6.7l-0.5 0.2l-0.5 2.4l-0.5 4.2l-1.5-0.2l-0.5-7l-0.5-0.1l-0.5 5.7l-0.5 0.7l-1.5 0.3l-0.5-6.3l-0.5 0.1l-0.5 5.6l-2 0.4l-0.5-6.1l-0.5 0.1l-0.5 6.7l-1.5-0.4l-0.5-1.9l-0.5-4.7l-0.5 3.7l-1 5.9l-1-0.4l-0.5-7.1l-0.5-1.3l-0.5 6.2l-1.5-0.2l-0.5-5.2l-0.5-1.5l-1 6h-1.5l-0.5-5.8l-0.5-0.1l-0.5 1.6l-0.5 4.8l-1.5 0.5l-0.5-6.1l-0.5-0.6l-0.5 5.9l-2-0.8l-0.5-5.5l-0.5 0.8l-0.5 5.7l-1.5-0.1l-0.5-5.2l-0.5-1.3l-0.5 2.4l-0.5 3.9l-1.5 0.6l-0.5-6.3l-0.5-0.3l-0.5 3.5l-0.5 2.3l-1.5 0.4l-0.5-6.2l-0.5-0.2l-0.5 3.6l-0.5 3l-1.5 0.1l-0.5-6.6l-0.5 0.1l-1 6.4l-1.5 0.1l-0.5-6.9l-0.5-0.1l-0.5 6.5l-1 0.6h-1l-0.5-6.9l-0.5 0.2l-0.5 4.3l-0.5 1.8l-1-0.1l-0.5-0.2l-0.5-6l-0.5-0.2l-0.5 4.2l-0.5 1.8l-1.5 0.3l-0.5-5.8l-0.5 1.9l-0.5 4.2h-1.5l-0.5-6l-0.5-0.3l-0.5 6.9l-1.5-0.2l-0.5-2.3l-0.5-4.5l-0.5 4.3l-0.5 1.6l-1.5 0.3l-0.5-6l-0.5-0.1l-0.5 5.3l-0.5 1.4l-1.5-0.1l-0.5-6.3l-0.5-0.1l-0.5 5.9l-1.5-0.1l-0.5-4.2l-0.5-2l-1 6.4l-1.5 0.1l-0.5-6.3h-0.5l-0.5 4.1l-0.5 2.5l-1.5-0.2l-0.5-6.6l-0.5 0.1l-0.5 7l-1 0.2l-0.5-0.1l-0.5-4.5l-0.5-2.4l-0.5 3.9l-0.5 2.8l-0.5 0.1l-1-0.3l-0.5-6.6l-0.5 0.2l-0.5 5.7l-1.5 0.1l-0.5-3.8l-0.5-2.2l-0.5 6.3l-1.5 0.4l-0.5-1l-0.5-5.5l-0.5 0.1l-0.5 6.3l-1.5-0.5l-0.5-3.9l-0.5-2.1l-0.5 4.4l-0.5 2.6l-1.5-0.3l-0.5-6.9l-0.5 0.1l-0.5 6.3l-1 0.1l-0.5-0.1l-0.5-1.9l-0.5-4.4l-0.5 5.2l-1 1l-1-0.4l-0.5-6l-1 7l-1.5-0.2l-0.5-6.6l-0.5 0.9l-0.5 5.1l-1.5-0.2l-0.5-4.3l-0.5-1.5l-0.5-0.1l-0.5 5.8l-1.5 0.4l-1-6.2l-0.5 2.6l-0.5 3.6h-1.5l-0.5-6.4l-0.5 0.1l-0.5 1.3l-0.5 5.9l-1.5-0.3l-0.5-5.5l-0.5-1.3l-0.5 0.1l-0.5 6.2l-1.5-0.1l-0.5-3.3l-0.5-2.6l-1 5.7l-1.5 0.3l-0.5-6.2l-0.5-0.2l-0.5 6l-1.5 0.3l-0.5-1.8l-0.5-4.4l-0.5 0.3l-0.5 6.3l-1.5-0.3l-0.5-4l-0.5-2.4l-0.5 5.5l-0.5 1.6l-1.5 0.3l-0.5-7h-0.5l-0.5 6.5l-2-0.6l-0.5-6.1l-0.5 0.1l-0.5 6.3h-1.5l-0.5-0.9l-0.5-5.3l-0.5 4.6l-0.5 2.2l-1.5-0.2l-0.5-6.6h-0.5l-0.5 5.9l-2-0.1l-0.5-6.1l-0.5 2.2l-0.5 4l-1.5-0.3l-0.5-6l-0.5-0.1l-0.5 2.5l-0.5 3.6l-1 0.3h-0.5l-0.5-6l-0.5 0.1l-0.5 6.7l-1.5-0.3l-0.5-3.9l-0.5-2.7l-1 7.1l-1.5-0.4l-0.5-7l-0.5-0.2l-0.5 1.8l-0.5 4.9l-0.5 0.3l-1-0.1l-0.5-6.3l-0.5-0.4l-0.5 0.5l-0.5 5.9l-1.5 0.5l-0.5-5l-0.5-1.6l-0.5 1.1l-0.5 5.1l-1.5 0.2l-0.5-5.5l-0.5-1l-0.5 6.1h-1.5l-0.5-1.9l-0.5-4.2l-0.5 1.3l-0.5 5.1l-1.5 0.1l-0.5-5.7l-0.5-0.7l-0.5 4.1l-0.5 2l-1.5-0.2l-0.5-6.1l-0.5 0.2l-0.5 4.9l-0.5 1.1l-1-0.3l-0.5 0.2l-0.5-6.1h-0.5l-0.5 6.1l-1.5 0.4l-0.5-3.5l-0.5-2.8l-0.5 6.6h-0.5l-1.5-0.6l-0.5-6.3l-0.5-0.2l-0.5 2.4l-0.5 0.4l-0.5-1l-0.5-1.6l-2 0.2l-0.5 5.9l-0.5 0.7l-0.5-0.7l-0.5-5.7l-1-0.2l-0.5 1.3l-0.5 0.2l-1-1.4l-0.5 0.2l-0.5 2.8l-0.5 0.1l-0.5-0.2l-0.5-1.7l-1-1.3l-1-0.1l-1 2.3l-0.5-0.1l-0.5-2.1l-1.5 0.1l-0.5 4.7l-0.5 0.4l-0.5-0.6l-0.5-4l-0.5 1.3h-0.5l-0.5-1.6l-1-0.4l-1 2.1l-0.5 0.2l-0.5-1.6l-0.5-0.3l-0.5 3.3l-0.5 0.3l-0.5-0.5l-0.5-1.8l-0.5 0.1l-0.5-1.3l-1-0.8l-0.5 0.1l-0.5 1.2l-0.5 0.2l-0.5-0.6l-0.5 5l-0.5 0.4l-0.5-0.6l-0.5-5.7l-2 0.6l-0.5 2.3l-0.5-0.2l-1-2.4l-1.5 0.1l-0.5 1.3h-0.5l-1-1.2l-1.5-0.4l-0.5 3.6l-0.5 0.3l-0.5-0.2l-0.5-3.3l-0.5 1.9l-0.5-0.1l-1-2h-0.5l-0.5 3.7l-0.5 0.3l-0.5-0.4l-0.5-2.5l-0.5-0.2l-0.5-1l-3.5 0.1l-0.5 1.8l-0.5 0.5l-0.5-0.6l-0.5 1.6l-0.5 0.5l-0.5-0.2l-0.5-3.2l-0.5 2.2l-0.5-0.1l-1-2.7l-2 0.1l-0.5 1.4h-0.5l-1-1.3l-3-0.1l-0.5 1.8l-0.5 3.4l-0.5 0.1l-0.5-2.3l-0.5-3l-2-0.1l-0.5 1.5l-0.5 0.3l-0.5-0.3l-0.5-1.3l-2.5-0.3l-1 1.4l-0.5-0.1l-0.5-1.4l-0.5 2.2l-0.5 4.2l-0.5 0.1l-0.5-2.8l-0.5-3.4l-0.5-0.1l-1 2.8l-0.5 0.1l-0.5-2.3l-0.5-0.3l-0.5-0.1l-1 1.3l-0.5-0.2l-0.5-1.1l-1.5-0.4l-1 1.6l-0.5-0.4l-0.5-1.1l-1 0.1l-1 3.7h-0.5l-0.5-2.6l-0.5-1.3l-2-0.1l-3.5 0.6l-5-0.6l-5.5 0.6l-0.5 0.6l-0.5 1.6l-1-0.1l-0.5-1.8l-0.5-0.8l-0.5-0.2l-1.5 0.6l-1.5-0.5l-3 0.2l-1 2.1h-0.5l-0.5-0.1l-0.5-1.3l-0.5-0.5l-1.5-0.3h-15l-1 0.6l-0.5 1.4l-1 0.1l-0.5-1.5l-1-0.7l-4 0.4l-8-0.5l-1.5 0.5l-1.5-0.7l-5 0.7l-0.5 2.6l-0.5 0.5l-0.5-0.7l-0.5-2.7l-5 0.3l-2-0.6l-1.5 0.7l-6.5-0.7l-0.5 2.5l-0.5 3.7l-0.5 0.1l-0.5-4.7l-0.5-1.3h-1l-0.5 0.2l-0.5 7.6l-0.5 0.6l-0.5-0.7l-0.5-7.5l-1 0.3l-0.5 1.9l-0.5-0.2l-1-2.5l-1 0.6l-0.5 1.5l-0.5 4.4l-0.5-0.1l-0.5-3.4l-0.5-2.7l-1-0.3l-1 4.3l-0.5 0.1l-0.5-3.6l-0.5-0.4h-3.5l-0.5 6.6l-0.5 0.6l-0.5-0.7l-0.5-6.6l-1-0.3l-1 0.3l-1 6.2l-0.5-0.2l-0.5-4.6l-0.5-1.6l-0.5 7.5l-0.5 0.7l-0.5-0.8l-0.5-7.4l-2.5 0.3l-0.5 7.7l-0.5 0.7l-0.5-0.9l-0.5-7.7l-2.5-0.2l-0.5 3.1l-0.5 1.4l-0.5-0.4l-0.5-3.7l-2-0.1l-1 5.2l-0.5 0.1l-0.5-3.8l-0.5-1.4l-0.5 6.7l-0.5 0.3l-0.5-0.5l-0.5-6.7h-2l-0.5 2.2l-0.5 0.3l-0.5-0.7l-0.5-2l-1-0.1l-0.5 3.9l-0.5 2.3l-0.5-0.2l-0.5-5.2l-0.5-0.7l-3 0.3l-0.5 7l-0.5 0.8l-0.5-0.9l-0.5-7.1l-1.5 0.2l-0.5 4.5l-0.5 0.7l-0.5-1.7l-0.5-3.8l-2.5 0.4l-0.5 6.5l-0.5 0.6l-0.5-0.6l-0.5-6.7h-4l-0.5 1.4l-0.5 0.7l-0.5-0.4l-0.5-1.7l-1 0.3l-0.5 2.2l-0.5 3.7l-0.5-0.1l-0.5-4.1l-0.5-1.9l-1.5 0.2l-0.5 2.3l-0.5-0.1l-1-2.8h-0.5l-0.5 7.6l-0.5 0.7l-0.5-0.6l-0.5-7.6l-2.5 0.4l-0.5 3.8l-0.5 0.3l-0.5-1.4l-0.5-2.8l-0.5-0.2l-0.5 3.2l-0.5 1.6l-0.5-0.3l-0.5-4.3l-2.5-0.1l-0.5 2.1l-0.5 0.3l-0.5-0.8l-0.5-1.7l-0.5-0.1l-1 2.2h-0.5l-0.5-1.6l-1-0.5l-0.5 7.5l-0.5 0.6l-0.5-0.8l-0.5-7.6l-1.5 0.3l-1.5-0.5l-0.5 1l-0.5 1.9l-0.5 0.1l-0.5-1.6l-0.5-0.8l-2 0.2l-0.5 7.2l-0.5 0.5l-0.5-0.8l-0.5-7.3l-0.5-0.1l-1 0.1l-0.5 3.5l-0.5 0.9l-0.5-1.1l-0.5-3.2l-3-0.3l-1.5 0.5l-1.5-0.5l-1.5 0.3l-3-0.3l-1 0.4l-3.5-0.6l-1.5 0.6l-1.5-0.3l-1.5 0.4l-3-0.7l-4 0.5l-1-0.5l-1.5 0.5l-11-0.5l-4 0.5l-4-0.5l-12.5 0.4l-1.5-0.4l-2.5 0.7l-4-0.8l-1.5 0.3l-2-0.3l-2 0.7l-1.5-0.7l-1 0.4l-1.5-0.5l-1.5 0.7l-3-0.5l-9 0.3l-1.5-0.4l-2.5 0.5l-0.5 1l-1-0.5l-0.5-1.2l-2.5 0.6l-3-0.3l-0.5 0.2l-0.5 1.1l-0.5 0.4l-0.5-0.4l-0.5-1.1l-1.5-0.3h-0.5l-0.5 1.2l-0.5 0.4l-0.5-0.4l-0.5-1.2l-2 0.1l-0.5 1.4l-0.5 0.1l-0.5-0.1l-0.5-1.3l-1-0.2l-2 0.2l-0.5 1.4l-0.5 0.2l-0.5-0.4l-0.5-1.6l-2.5 0.3l-0.5 1.4l-0.5 0.1h-0.5l-0.5-1.2l-3-0.6l-0.5 1.2l-0.5 0.5l-0.5-0.3l-0.5-1.3l-0.5-0.1l-5 0.5l-5-0.5l-4.5 0.4l-9.5-0.3l-3 0.4l-9-0.7l-1.5 0.6l-1.5-0.6l-3 0.6l-2-0.5l-6 0.5l-3.5-0.7l-2 0.5l-1-0.4l-3 0.4l-2-0.6l-1.5 0.4l-1.5-0.3l-2 0.7l-4-0.7l-16 0.4l-3.5-0.5l-3 0.4l-8.5-0.2l-4 0.4l-3-0.7l-3 0.5l-7-0.4l-13.5 0.6l-3.5-0.6l-1.5 0.5l-1.5-0.6l-1.5 0.6l-10.5-0.5l-2.5 0.5l-7-0.6l-4.5 0.5l-14-0.6l-3 0.6l-4 0.1l-2-0.5l-7-0.1l-1.5 0.6l-1-0.5l-1.5 0.2l-1.5-0.3l-1.5 0.5l-3.5-0.5l-13 0.4l-1.5-0.5l-7.5 0.5l-1-0.4l-2 0.1l-3.5 0.5l-2.5-0.7l-2 0.5l-2.5-0.5l-4 0.4l-1.5-0.4l-1.5 0.5l-3-0.6l-2 0.5l-1.5-0.4h-6l-6.5 0.7l-2-0.6l-2.5 0.4l-5.5-0.4l-1.5 0.4l-3-0.6l-6 0.5l-1-0.4l-1.5 0.3l-1.5-0.4l-1.5 0.5l-1.5-0.5l-2.5 0.5l-1-0.5l-2 0.7l-1.5-0.4l-5 0.3l-3-0.5l-6-0.1l-1.5 0.5l-5.5-0.5l-3.5 0.5l-7.5 0.1l-2.5-0.4l-2 0.3l-3.5-0.6l-2.5 0.6l-7-0.6l-3 0.4l-4-2l-2.5-2.2l-0.5 0.1l-7 7.1l-1.5 1l-2 2.4l-1 0.4l-2 2l-2.5 1.6l-2 1.9l-2 1.1l-3.5 3.2l-5.5 2.8l-2.5-0.3l-3 0.7l-1.5-0.6l-5.5 0.5l-3-0.6l-3.5 0.5l-3.5-0.5z" fill="#bf593e" stroke="#bf593e" stroke-width="0.8"/>
<path d="M751.9 961V966.2M757.5 961V971.6M763.2 961V974.8M768.8 961V977.1M774.4 961V977.9M780.1 961V979.5M785.7 961V980.2M791.3 961V973.2M797 961V968.5M802.6 961V964" stroke="#f6a625" stroke-width="2.3"/>
<path d="M751.9 937.2V962M757.5 940.4V962M763.2 941.1V962M768.8 941.1V962M774.4 943.2V962M780.1 943.8V962M785.7 941.9V962M791.3 943.2V962M797 948.2V962M802.6 955.2V962" stroke="#6d5fd5" stroke-width="2.3"/>
<path d="M751.5 959h50l0.5 0.4l3-1.3l0.5-0.6l1.5 0.5l1-0.7l1-0.2l0.5 0.3l1-0.5l1.5 0.9l3-0.7l1.5-0.9l2.5-0.5l1.5 2.8l0.5-1.3l1 0.3l1.5-1.1l3-0.2l1-0.5l0.5 0.4l1 1.9l0.5-1l3.5-0.2l2-1l1.5 0.4l1 2.3l0.5-1.1l3.5-1.1h1l1 1.8l0.5-0.8h1.5l2-1.2l2 0.3l1 1.9l0.5-1.3l1.5 0.3l4-1.6l0.5 0.2l1 2.1l0.5-0.8l1 0.5l2-1.1l1 0.1l1.5-0.6l2.5 0.4l1 2l0.5-0.8l2-0.6h2l2.5-1.2h3l0.5-0.6l0.5 0.4l1 2.3l0.5-0.5l2-0.2l3-1.1l2.5 0.1l3.5-1.3l0.5 0.5l1 2.4l5-1.5l4.5 0.2l1.5-0.9l2.5 0.7l2-1.3l1 0.3l1 2.3l0.5 3.1l1.5 0.1l1.5-0.2l0.5-3.5l1-0.5h3.5l1.5-0.8l1.5 0.8l1-0.8l1.5 0.6l4-1.2l4.5 0.7l2-0.7l1 1.9l0.5 3.4h3l0.5-3.5l0.5-0.7l1-0.3l4-0.1l1.5 0.4l6-0.7l2.5 0.5l1.5-0.4l8 0.5l3.5-0.7l4.5 1l0.5 4.2l0.5 0.1l2-0.3l0.5-4.7h0.5l6.5 0.1l2.5-0.5l3 0.5l3-0.4l6.5 0.4l4-0.6l1.5 0.4l3.5-0.4l2.5 0.4l2-0.5l1.5 0.4l1.5-0.5l1.5 0.7l2.5-0.7l4.5 0.4l1.5-0.5l3.5 0.4l3-0.5l1.5 1.2l0.5 4.5l0.5 0.2l2-0.1l0.5-5.1l1.5-0.6l2.5 0.6l7-0.8l2 0.7l1.5-0.5l5.5 0.4l1.5-0.3l1.5 0.5l4-0.6l5 0.7l1.5-0.6l4.5-0.2l2 0.5l4.5-0.4l5 0.4l1.5-0.4l1.5 0.4l2-0.6l6.5 0.5l6.5-0.4l4 0.7l1.5-0.4l1.5 0.4l2.5-0.6l2.5 0.6l3.5-0.2l0.5 0.2l0.5 4.8l2 0.4h0.5l0.5-5.4l1.5-0.2l3.5 0.3l1.5-0.5l5 0.3l4.5-0.3l1.5 0.3l3-0.5l5 0.7l1.5-0.5l4 0.4l2.5-0.4l4.5 0.5l10-0.5l2.5 0.4l2-0.5l5.5 0.3l1.5-0.4l3.5 0.5l13.5-0.2l3.5 0.4l1-0.5l6.5 0.4l1.5-0.6l2.5 0.7h3l6-0.7l3.5 0.8l1.5-0.7l2 0.5l6.5-0.5l2 0.6l3-0.6l3 0.5l10.5-0.2l2 0.7l0.5 4.6l1.5 0.1l1-0.1l0.5-5.3l1.5 0.5l0.5-0.8l2 0.4l8.5-0.3l1 0.4l3-0.5l7 0.2l1-0.3l3 0.4l3-0.4l6 0.9l1-0.6l4 0.3l3.5-0.5l1.5 0.8l1.5-0.8h2l1.5 0.4l1.5-0.3l3.5 0.5l2-0.5l1.5 0.4l1.5-0.3l1 0.6l1.5-0.8l2 0.5l1.5-0.4l1.5 0.5l6-0.8l1.5 0.4l1.5-0.3l1 0.5l1-0.6l3 0.8l1.5-0.5l2 0.7l2.5-1l3 0.3l1 0.5l1.5-0.5h3l1.5 0.7l1.5-1l3.5 0.2l2 0.7l2.5-0.4l1.5 0.7l2-0.9l2.5 0.5l1.5-0.6l1.5 0.7l2.5-0.9l2 0.8l3.5-0.6l1.5 0.5l1-0.6h1.5l1 0.6l1.5-0.4l2 0.3l1.5-0.5l1.5 0.6l1.5-0.5l3 0.6l3-0.7l5.5 0.6l2-0.7l4 0.1l2 0.5l2-0.6l8.5 0.6l10.5-0.3l0.5 0.1l0.5 0.8l0.5 4.4l3 0.2l0.5-5.3l2.5-0.3l1 0.4l1.5-0.5l2.5 0.6l6-0.6l2.5 0.4l0.5 0.6l0.5 4.5l2.5 0.5l0.5-5.4l3-0.5l2.5 0.1l0.5 1.1l1.5-0.1l0.5 4.5l1 0.3l1.5-0.4l0.5-5.2l3.5-0.3l1 0.3l4-0.3l2.5 0.3l3-0.4l1 0.5l2-0.6l7 0.7l2-0.3l0.5 0.4l3-0.6l3.5 0.4l2-0.6l2.5 0.8l2-0.7l3 0.6l1.5-0.6l1.5 0.4l3.5-0.3l1.5 0.5l1-0.5l8 0.5l5-0.6l1.5 0.6l4.5-0.5l2.5 0.5l2-0.4l3 0.4l1.5-0.6l1.5 0.7l1.5-0.5l1 0.4l3.5 0.1l3-0.6l2 0.3l2.5-0.5l3.5 0.3l1 0.7l1.5-0.7l2 0.3l2-0.4l1.5 1l1.5-0.9l1.5 0.5l2.5-0.4l1 0.6l1-0.8l1.5 0.6l1.5-0.8l1 0.1l1.5 1.1l2-1l2 0.6l1-0.4l1.5 0.8l0.5-0.7l0.5-0.1h2l0.5 0.5l2.5-0.5l0.5 0.4l2-0.5l1.5 0.9l0.5-0.6l1-0.3l2 0.6l3-0.6l1 0.6l1-0.7l1.5 0.4l2-0.5l1.5 0.4l0.5-0.4h1.5l1.5 0.6l1-0.5l2 0.6l2.5-0.7l1.5 0.7l2-0.7l1 0.7l2-0.5l1.5 0.4l1-0.5l2 0.6l1.5-0.6l1.5 0.5l1-0.7l2.5 0.7l2.5-0.4l1.5 0.4l2.5-0.5l1 0.7l1-0.9l2 1.1l0.5-0.6l1-0.2l2 0.5l1.5-0.7l1 0.9l1.5-0.8l3 0.7l2-0.8l0.5 0.6l1.5-0.6l3 0.7l1.5-0.5l4 0.5l2-0.6l1.5 0.6l2-0.6l1.5 0.6l1-0.9l1.5 1.1l1.5-1l1.5 1.2l0.5-0.7l2-0.4l1.5 1l2-0.9l0.5 0.4l2.5-0.2l1 0.8l1.5-1l1.5 0.5l2.5-0.6l1 0.7l1.5-0.8l2 0.4l0.5 0.5l1.5-0.7l1 0.4l3-0.4l1.5 0.5l1-0.6l1.5 0.5l2.5-0.2l0.5 0.7l2.5-0.9l2.5 0.8l1.5-1l1 0.7l1.5-0.7l1 0.2l0.5 0.7l1.5-0.9h1l1.5 1l1.5-0.8h1l1 0.7l2-0.7l1.5 0.6l1.5-0.7h1.5l1 0.8l1.5-0.8l1 1l1.5-0.9l1.5 1.1l2.5-1.2l1 0.6l1-0.5l2.5 0.5l1.5-0.8l1 0.3l0.5 0.6l1.5-0.5l1.5 0.4l2.5-0.2l1 0.5l1.5-0.9l2 0.2l1 0.5l1.5-0.8l1.5 1l1.5-0.9l2.5 1l0.5-0.7l1-0.3l1 0.6l2.5-0.4l0.5 0.5l1.5-0.6l2 1l0.5-0.6l2.5-0.4l0.5 0.5l1.5-0.7l1 0.6l2-0.5l2 0.5l1.5-0.8l1.5 1.2l2-0.8l1.5 0.6l1.5-0.7l1 0.8l3.5-0.7l1.5 0.7l0.5-0.4l3.5 0.5l0.5-0.8l1-0.1l1.5 0.8l1-0.8l2.5 1l0.5-0.8l1-0.1l1.5 0.6l1-0.6l1.5 0.8l0.5-0.6l1-0.2l3 0.8l0.5-0.6l1-0.4l1.5 0.6l3.5 0.3l2.5-1l1.5 0.9l1.5-0.4l0.5 0.4l1.5-0.7l2.5 1l1-0.3l0.5-0.6l1.5 0.5l1.5-0.7l1.5 1.1l1-0.9l1 0.9l1.5-0.3l1-0.7l3 0.6l0.5-0.6l2 0.7l1-0.7l2-0.1v11.4l-1 0.5l-2-0.6l-2 0.6l-1.5-0.5l-5.5 0.4l-4-0.5l-4 0.5l-8.5-0.5l-2 0.5l-5.5 0.1l-1.5-0.5l-11 0.5l-2-0.5l-3.5 0.5l-1.5-0.6l-1.5 0.5l-1.5-0.5l-9 0.1l-3 0.6l-3-0.6l-8.5 0.2l-1.5-0.4l-4.5 0.6l-4.5-0.1l-1-0.4l-1 0.4l-7.5-0.5l-2.5 0.5l-4.5-0.3l-1.5 0.4l-8-0.4l-1.5 0.5l-1.5-0.7l-3 0.6l-8.5-0.5l-1.5 0.5l-3.5-0.4l-6 0.4l-1.5-0.5l-1.5 0.4l-4.5-0.5l-4 0.5l-2-0.4l-2 0.5l-4-0.4l-3 0.3l-1.5-0.5l-7 0.7l-1.5-0.8l-4 0.7l-2.5-0.5h-3l-2 0.6l-2-0.6l-4.5 0.1l-2.5 0.6l-3-0.7l-5.5 0.4l-4-0.5l-2.5 0.6l-12-0.5l-2.5 0.5l-6-0.7l-1.5 0.6l-4-0.3l-3.5 0.4l-3.5-0.5l-1 0.5l-1.5-0.5l-2 0.4l-1.5-0.3l-3.5 0.4l-2.5-0.6l-4 0.8l-2.5-0.6l-4.5 0.3l-3.5-0.4l-9 0.6l-2-0.7l-4 0.8l-6.5-0.6l-1.5 0.4l-3.5-0.6l-5 0.5l-1.5-0.3l-2.5 0.5l-1.5-0.7l-1.5 0.6l-3.5-0.4l-8 0.4l-2-0.5l-1.5 0.5h-4l-5-0.7l-5 0.6l-3.5-0.5l-2 0.7l-6.5-0.7l-3.5 0.7l-2-0.5l-1 0.4l-1.5-0.6l-4 0.6l-2-0.5l-2.5 0.5l-3-0.5l-1.5 0.6l-2-0.5l-5 0.3l-3.5-0.5l-3.5 0.5l-3.5-0.5l-4.5 0.5l-1-0.5l-1.5 0.6l-3-0.6l-3 0.1l-0.5-2l-2.5-0.1l-0.5 2.4l-2.5 0.1l-2.5-0.5h-2.5l-0.5-2l-2.5 0.2l-0.5 2.2l-9.5-0.2l-1.5 0.5l-5.5-0.4l-0.5-2.2l-1.5 0.2l-1-0.4l-0.5 0.2l-0.5 2.2l-0.5 0.2l-1.5-0.6l-9 0.7l-5-0.5l-2.5 0.5l-5-0.4l-1.5 0.5l-3-0.7l-8.5 0.5l-3.5-0.6l-1.5 0.5l-7 0.2l-3-0.5l-8 0.4l-2.5-0.5l-1.5 0.6l-3.5 0.1l-8.5-0.7l-3.5 0.6l-1.5-0.6l-7 0.5l-5.5-0.1l-1-0.4l-2.5 0.5l-2.5-0.5l-9.5 0.5l-1.5-0.6l-3 0.3l-4-0.3l-3 0.5l-1-0.4l-5 0.5l-1.5-0.4l-1.5 0.5l-7.5-0.7l-2 0.5l-2.5-0.4l-3.5 0.4l-1.5-0.4l-2.5 0.6l-2.5-0.5l-0.5 1.3l-1 0.3l-2.5-0.5l-1 0.5l-1.5-0.7l-0.5 0.5l-2 0.3l-4.5-0.7l-1 0.6l-1.5-1.1l-1.5 0.7l-1-0.4l-1.5 0.6l-1-0.6l-1 0.7l-1.5 0.2l-2-0.7l-1.5 0.1l-0.5-2.2h-1.5l-0.5-1l-2.5-0.1l-0.5 1.1l-2-0.1l-1.5 0.9l-4-0.9l-2.5 1.1l-1.5-0.9l-1 0.5l-1.5-0.7l-0.5 0.4l-2-0.4l-1.5 0.6l-1-0.3l-1.5 0.8l-1.5-0.7l-1.5 0.5l-0.5-0.5l-2-0.2l-1 0.7l-1.5-0.8h-2l-1.5 0.6l-2-0.6l-1 0.8l-1-0.5l-4-0.3l-1.5 0.6l-0.5-0.6l-2 0.2l-1.5 0.8l-1.5-1l-0.5 0.3l-1.5-0.3l-1 0.8l-8-0.5l-3 0.5l-1 1l-1-1.2l-1 0.4l-1.5-0.9l-1.5 0.8l-2-0.3l-0.5 1.5l-0.5 0.3l-0.5-0.3l-0.5-1.7l-2 0.8l-0.5 1.2l-1-0.4l-0.5-1.2l-1 0.4l-1-0.3l-0.5 1.2l-1 0.2l-0.5-1.4l-2 0.6l-1-0.2l-0.5 1l-0.5 0.2l-0.5-0.4l-0.5-1.4l-2.5 0.6l-0.5 1.2l-0.5 0.1h-0.5l-0.5-1.2l-2-0.1l-2 1.4l-3-2l-3.5 1.1l-4-0.7l-1.5 0.8l-2-0.5l-3 0.9h-3l-0.5 0.4l-1.5-1.2l-2 0.9l-1-0.9l-1 0.7l-3 0.4l-2.5-0.6l-6 0.5l-1.5-0.7l-2.5 0.8l-0.5-0.2l-0.5-3.3l-2.5 0.2l-0.5 0.6l-3-0.1l-2 0.4l-6.5-0.5l-1.5 0.6l-2.5-0.4l-4 0.3l-1.5-0.5l-2 0.5l-2.5-0.5l-2.5 0.5l-4-0.5l-5 0.6l-5-0.3l-3.5 0.6l-1.5-0.4l-0.5 0.4l-1-0.2l-1 0.4l-3-0.9l-1.5 1.1l-3-0.5l-1.5 0.6l-0.5-0.3l-3 0.4l-1 0.6l-3-0.7l-3.5 1l-1-0.8l-1.5 0.8l-1.5-0.4l-1.5 0.8l-1.5-0.4l-1.5 0.3l-1.5-0.6l-2.5 0.8l-1.5-0.2l-0.5-2.9l-1-0.4l-1.5 0.3l-0.5 0.8l-3-0.6l-5.5 0.7l-5-0.4l-4 0.3l-1-0.5l-2 0.6l-3-0.5l-2.5 0.8l-1.5-0.9l-1 0.3l-0.5-0.3l-3 1.2l-1-0.4h-3.5l-1.5 0.5l-0.5-0.3l-1 0.3l-1-0.2l-2 0.9l-4.5-0.9l-5 1.6l-4.5-0.4l-0.5-2.9l-0.5-0.1l-2 0.3l-0.5 0.4l-3-0.1l-1.5 0.5l-1.5-0.4l-5 0.4l-1.5-0.5l-3.5 0.4l-0.5 0.4l-1-0.4l-1.5 0.8l-1-0.4l-3.5 0.2l-2.5 0.8l-2-0.5l-2 1.1l-1.5-0.5l-1.5 0.5l-0.5-2.9l-1 0.4l-1-0.5l-1 0.1l-0.5 0.9l-2-0.1l-1.5 1l-2-0.6l-3 0.2l-1.5 1l-1 0.1l-1.5-1.1l-1 0.6l-2 0.2l-1-0.3l-2.5 0.7l-1.5-0.3l-1 0.4l-0.5-2.7l-2 0.3l-1-0.3l-1.5 1.2l-7 0.5l-0.5 0.5l-1.5-0.1l-1 0.5l-3-0.1l-1 0.8l-2-0.2l-0.5-2.6l-2 0.3l-2.5 1.2h-4l-1.5 1.3l-1.5-0.6l-1 0.4l-0.5-2.5l-3 0.7l-1 0.8l-1.5-0.8l-0.5 0.5l-3.5 0.8l-0.5 0.7l-1.5-0.5l-0.5-2.1l-1.5 0.7h-2.5l-1.5 0.7l-1-0.1l-2.5 1.1l-0.5-2.7l-0.5 0.1l-1 1.2l-1.5 0.2l-1 0.9l-1.5-0.7l-1 0.9h-0.5l-0.5-2.4l-0.5-0.2l-1.5 1.6l-1 0.4l-3.5 0.1l-0.5-1.6h-0.5l-1.5 1.3h-1l-1.5 1l-0.5-0.3l-0.5 0.2l-0.5-2.6l-1 0.1l-3 1.6l-2.5-0.1l-1 0.8h-0.5l-0.5-2h-0.5l-1 1.1l-0.5 0.2l-1.5-0.7l-0.5 0.6l-0.5-0.4l-3.5 0.9l-0.5-2l-1.5 0.2l-1.5 1l-2-0.2l-3 1.4l-1.5-0.7l-0.5-1.6l-1-0.6l-1.5 0.4l-1-0.9l-1 0.5l-4-1.8l-0.5 0.6h-50z" fill="#6d5fd5" stroke="#6d5fd5" stroke-width="0.8"/>
</g>
<rect x="977.5" y="871.5" width="8" height="8" fill="#ff0000" stroke="#111" stroke-width="1"/>
<rect x="1031.5" y="871.5" width="8" height="8" fill="#0000ff" stroke="#111" stroke-width="1"/>
<rect x="1085.5" y="871.5" width="8" height="8" fill="#f6a625" stroke="#111" stroke-width="1"/>
<rect x="1175.9" y="871.5" width="8" height="8" fill="#6d5fd5" stroke="#111" stroke-width="1"/>
<rect x="1260.1" y="871.5" width="8" height="8" fill="#bf593e" stroke="#111" stroke-width="1"/>
<rect x="1344.5" y="871.5" width="8" height="8" fill="#209fdf" stroke="#111" stroke-width="1"/>
<rect x="1429.5" y="871.5" width="8" height="8" fill="#99ca53" stroke="#111" stroke-width="1"/>
<rect x="1515" y="871.5" width="8" height="8" fill="#f6a625" stroke="#111" stroke-width="1"/>
<rect x="1575.3" y="871.5" width="8" height="8" fill="#6d5fd5" stroke="#111" stroke-width="1"/></svg>
<div class="t" id="t61" style="left:990.7px;top:867.64px;font-size:12px;color:#464646;letter-spacing:-0.363px;">Vd (V)</div>
<div class="t" id="t62" style="left:1044.8px;top:867.64px;font-size:12px;color:#464646;letter-spacing:-0.363px;">Vq (V)</div>
<div class="t" id="t63" style="left:1098.3px;top:867.64px;font-size:12px;color:#464646;letter-spacing:-0.45px;transform:scaleX(0.994);">Vq_BEMF (V)</div>
<div class="t" id="t64" style="left:1189.2px;top:867.64px;font-size:12px;color:#464646;letter-spacing:-0.165px;">Vq_LdId (V)</div>
<div class="t" id="t65" style="left:1273.5px;top:867.64px;font-size:12px;color:#464646;letter-spacing:-0.165px;">Vd_LqIq (V)</div>
<div class="t" id="t66" style="left:1357.6px;top:867.64px;font-size:12px;color:#464646;letter-spacing:-0.233px;">Vq_RqIq (V)</div>
<div class="t" id="t67" style="left:1442.7px;top:867.64px;font-size:12px;color:#464646;letter-spacing:-0.233px;">Vd_RdIq (V)</div>
<div class="t" id="t68" style="left:1528.3px;top:867.64px;font-size:12px;color:#464646;letter-spacing:-0.315px;">VLd (V)</div>
<div class="t" id="t69" style="left:1588.6px;top:867.64px;font-size:12px;color:#464646;letter-spacing:-0.331px;">VLq (V)</div>
<div class="t" id="t70" style="left:716.26px;top:897.64px;font-size:12px;color:#464646;letter-spacing:0.002px;">505.4</div>
<div class="t" id="t71" style="left:716.26px;top:928.39px;font-size:12px;color:#464646;letter-spacing:0.002px;">228.8</div>
<div class="t" id="t72" style="left:719.22px;top:959.14px;font-size:12px;color:#464646;letter-spacing:-0.07px;">-47.8</div>
<div class="t" id="t73" style="left:712.36px;top:989.89px;font-size:12px;color:#464646;letter-spacing:-0.018px;">-324.4</div>
<div class="t" id="t74" style="left:712.36px;top:1020.64px;font-size:12px;color:#464646;letter-spacing:-0.018px;">-601.0</div>
<div class="t" id="t75" style="left:740.21px;top:1034.44px;font-size:12px;color:#464646;letter-spacing:-0.06px;">0.00</div>
<div class="t" id="t76" style="left:1021.93px;top:1034.44px;font-size:12px;color:#464646;letter-spacing:-0.06px;">0.50</div>
<div class="t" id="t77" style="left:1303.66px;top:1034.44px;font-size:12px;color:#464646;letter-spacing:-0.06px;">1.00</div>
<div class="t" id="t78" style="left:1585.39px;top:1034.44px;font-size:12px;color:#464646;letter-spacing:-0.06px;">1.50</div>
<div class="t" id="t79" style="left:1867.11px;top:1034.44px;font-size:12px;color:#464646;letter-spacing:-0.06px;">2.00</div>
<div class="grp" style="left:41px;top:418px;width:170px;height:510px;"></div>
<div class="grp" style="left:241px;top:418px;width:200px;height:640px;"></div>
<div class="grp" style="left:461px;top:418px;width:170px;height:410px;"></div>
<div class="t" id="t80" style="left:40px;top:398.5px;letter-spacing:-0.261px;">Vehicle Parameters</div>
<div class="t" id="t81" style="left:240.3px;top:398.5px;letter-spacing:-0.086px;">OpenInverter Parameters</div>
<div class="t" id="t82" style="left:460px;top:398.5px;letter-spacing:-0.234px;">Run Controls</div>
<div class="t" id="t83" style="left:40px;top:421.6px;letter-spacing:-0.215px;">Vehicle Weight (kg)</div>
<div class="in" style="left:168px;top:417px;width:43px;height:25px;"></div>
<div class="t" id="t84" style="left:170.8px;top:421.6px;letter-spacing:-0.45px;transform:scaleX(0.9838);">100</div>
<div class="t" id="t85" style="left:40px;top:452.6px;letter-spacing:-0.349px;">Wheel Radius (m)</div>
<div class="in" style="left:168px;top:448px;width:43px;height:25px;"></div>
<div class="t" id="t86" style="left:170.8px;top:452.6px;letter-spacing:-0.45px;transform:scaleX(0.9781);">0.3</div>
<div class="t" id="t87" style="left:40px;top:483.6px;letter-spacing:-0.353px;">Gear Ratio</div>
<div class="in" style="left:168px;top:479px;width:43px;height:25px;"></div>
<div class="t" id="t88" style="left:170.8px;top:483.6px;">6</div>
<div class="t" id="t89" style="left:40px;top:514.6px;letter-spacing:-0.45px;transform:scaleX(0.9462);">Vdc (V)</div>
<div class="in" style="left:168px;top:510px;width:43px;height:25px;"></div>
<div class="t" id="t90" style="left:170.8px;top:514.6px;letter-spacing:-0.45px;transform:scaleX(0.9838);">350</div>
<div class="t" id="t91" style="left:40px;top:545.6px;letter-spacing:-0.376px;">Lq (mH)</div>
<div class="in" style="left:168px;top:541px;width:43px;height:25px;"></div>
<div class="t" id="t92" style="left:170.8px;top:545.6px;">5</div>
<div class="t" id="t93" style="left:40px;top:576.6px;letter-spacing:-0.376px;">Ld (mH)</div>
<div class="in" style="left:168px;top:572px;width:43px;height:25px;"></div>
<div class="t" id="t94" style="left:170.8px;top:576.6px;">3</div>
<div class="t" id="t95" style="left:40px;top:607.6px;letter-spacing:-0.45px;transform:scaleX(0.9849);">Rs (Ohm)</div>
<div class="in" style="left:168px;top:603px;width:43px;height:25px;"></div>
<div class="t" id="t96" style="left:170.8px;top:607.6px;letter-spacing:-0.45px;transform:scaleX(0.9931);">0.075</div>
<div class="t" id="t97" style="left:40px;top:638.6px;letter-spacing:-0.207px;">λ ( mWeber)</div>
<div class="in" style="left:168px;top:634px;width:43px;height:25px;"></div>
<div class="t" id="t98" style="left:170.8px;top:638.6px;letter-spacing:-0.45px;transform:scaleX(0.9838);">225</div>
<div class="t" id="t99" style="left:40px;top:669.6px;letter-spacing:-0.45px;">SyncDel (us)</div>
<div class="in" style="left:168px;top:665px;width:43px;height:25px;"></div>
<div class="t" id="t100" style="left:170.8px;top:669.6px;letter-spacing:-0.45px;transform:scaleX(0.9698);">16</div>
<div class="t" id="t101" style="left:40px;top:700.6px;letter-spacing:-0.45px;transform:scaleX(0.9903);">Drag (%)</div>
<div class="in" style="left:168px;top:696px;width:43px;height:25px;"></div>
<div class="t" id="t102" style="left:170.8px;top:700.6px;letter-spacing:-0.45px;transform:scaleX(0.9838);">100</div>
<div class="t" id="t103" style="left:40px;top:731.6px;letter-spacing:-0.368px;">Loop Frequency (Hz)</div>
<div class="in" style="left:168px;top:727px;width:43px;height:25px;"></div>
<div class="t" id="t104" style="left:170.8px;top:731.6px;letter-spacing:-0.45px;transform:scaleX(0.9913);">8800</div>
<div class="t" id="t105" style="left:40px;top:762.6px;letter-spacing:-0.287px;">Sampling Point (%)</div>
<div class="in" style="left:168px;top:758px;width:43px;height:25px;"></div>
<div class="t" id="t106" style="left:170.8px;top:762.6px;letter-spacing:-0.45px;transform:scaleX(0.9698);">50</div>
<div class="t" id="t107" style="left:47.4px;top:792.7px;letter-spacing:-0.45px;">Extra Cycle Delay</div>
<div class="in" style="left:148px;top:793px;width:14px;height:14px;border-radius:2px;border-color:#b5b5b5;"></div>
<svg width="1918" height="1079" viewBox="0 0 1918 1079"><path d="M151 799.5 l2.8 4 l4.6 -7.8" stroke="#1a1a1a" stroke-width="1.7" fill="none"/></svg>
<div class="t" id="t108" style="left:46.7px;top:821.7px;letter-spacing:-0.315px;">Add Noise (Ap-p)</div>
<div class="in" style="left:146px;top:822px;width:14px;height:14px;border-radius:2px;border-color:#b5b5b5;"></div>
<div class="in" style="left:168px;top:818px;width:43px;height:25px;"></div>
<div class="t" id="t109" style="left:170.8px;top:822.6px;letter-spacing:-0.45px;transform:scaleX(0.9698);">10</div>
<div class="t" id="t110" style="left:240.3px;top:421.6px;letter-spacing:-0.308px;">Torque Demand (%)</div>
<div class="in" style="left:382px;top:417px;width:59px;height:25px;"></div>
<div class="t" id="t111" style="left:384.8px;top:421.6px;letter-spacing:-0.45px;transform:scaleX(0.9838);">100</div>
<div class="t" id="t112" style="left:240.3px;top:452.6px;letter-spacing:-0.169px;">Throttle Current (A/%)</div>
<div class="in" style="left:382px;top:448px;width:59px;height:25px;"></div>
<div class="t" id="t113" style="left:384.8px;top:452.6px;">2</div>
<div class="t" id="t114" style="left:240.3px;top:483.6px;letter-spacing:-0.358px;">Mode (1=Run,2=Man)</div>
<div class="in" style="left:382px;top:479px;width:59px;height:25px;"></div>
<div class="t" id="t115" style="left:384.8px;top:483.6px;">1</div>
<div class="t" id="t116" style="left:240.3px;top:514.6px;letter-spacing:-0.422px;">Direction (-1=R,0=N,1=F)</div>
<div class="in" style="left:382px;top:510px;width:59px;height:25px;"></div>
<div class="t" id="t117" style="left:384.8px;top:514.6px;">1</div>
<div class="t" id="t118" style="left:240.3px;top:545.6px;letter-spacing:-0.024px;">Iq Manual</div>
<div class="in" style="left:382px;top:541px;width:59px;height:25px;"></div>
<div class="t" id="t119" style="left:384.8px;top:545.6px;letter-spacing:-0.45px;transform:scaleX(0.9781);">0.0</div>
<div class="t" id="t120" style="left:240.3px;top:576.6px;letter-spacing:-0.024px;">Id Manual</div>
<div class="in" style="left:382px;top:572px;width:59px;height:25px;"></div>
<div class="t" id="t121" style="left:384.8px;top:576.6px;letter-spacing:-0.45px;transform:scaleX(0.9781);">0.0</div>
<div class="t" id="t122" style="left:240.3px;top:623.6px;letter-spacing:-0.118px;">Motor Poles</div>
<div class="in" style="left:382px;top:619px;width:59px;height:25px;"></div>
<div class="t" id="t123" style="left:384.8px;top:623.6px;">4</div>
<div class="t" id="t124" style="left:240.3px;top:654.6px;letter-spacing:-0.186px;">Current Kp</div>
<div class="in" style="left:382px;top:650px;width:59px;height:25px;"></div>
<div class="t" id="t125" style="left:384.8px;top:654.6px;letter-spacing:-0.45px;transform:scaleX(0.9913);">2000</div>
<div class="t" id="t126" style="left:240.3px;top:685.6px;letter-spacing:-0.226px;">Current Ki</div>
<div class="in" style="left:382px;top:681px;width:59px;height:25px;"></div>
<div class="t" id="t127" style="left:384.8px;top:685.6px;letter-spacing:-0.45px;transform:scaleX(0.9913);">2000</div>
<div class="t" id="t128" style="left:240.3px;top:716.6px;letter-spacing:-0.45px;transform:scaleX(0.9398);">FW Kp</div>
<div class="in" style="left:382px;top:712px;width:59px;height:25px;"></div>
<div class="t" id="t129" style="left:384.8px;top:716.6px;">0</div>
<div class="t" id="t130" style="left:240.3px;top:747.6px;letter-spacing:-0.45px;transform:scaleX(0.9179);">FW Ki</div>
<div class="in" style="left:382px;top:743px;width:59px;height:25px;"></div>
<div class="t" id="t131" style="left:384.8px;top:747.6px;">0</div>
<div class="t" id="t132" style="left:240.3px;top:778.6px;letter-spacing:-0.45px;transform:scaleX(0.9882);">VLim Kp</div>
<div class="in" style="left:382px;top:774px;width:59px;height:25px;"></div>
<div class="t" id="t133" style="left:384.8px;top:778.6px;">0</div>
<div class="t" id="t134" style="left:240.3px;top:809.6px;letter-spacing:-0.45px;transform:scaleX(0.9855);">VLim Ki</div>
<div class="in" style="left:382px;top:805px;width:59px;height:25px;"></div>
<div class="t" id="t135" style="left:384.8px;top:809.6px;letter-spacing:-0.45px;transform:scaleX(0.9913);">6000</div>
<div class="t" id="t136" style="left:240.3px;top:840.6px;letter-spacing:-0.434px;">CurKiFrqGain</div>
<div class="in" style="left:382px;top:836px;width:59px;height:25px;"></div>
<div class="t" id="t137" style="left:384.8px;top:840.6px;letter-spacing:-0.45px;transform:scaleX(0.9838);">100</div>
<div class="t" id="t138" style="left:240.3px;top:871.6px;letter-spacing:-0.293px;">FWmargin</div>
<div class="in" style="left:382px;top:867px;width:59px;height:25px;"></div>
<div class="t" id="t139" style="left:384.8px;top:871.6px;letter-spacing:-0.45px;transform:scaleX(0.9913);">2500</div>
<div class="t" id="t140" style="left:240.3px;top:902.6px;letter-spacing:-0.434px;">Lq - Ld (mH)</div>
<div class="in" style="left:382px;top:898px;width:59px;height:25px;"></div>
<div class="t" id="t141" style="left:384.8px;top:902.6px;letter-spacing:-0.45px;transform:scaleX(0.9781);">2.0</div>
<div class="t" id="t142" style="left:240.3px;top:933.6px;letter-spacing:-0.401px;">SyncAdv (dig/Hz)</div>
<div class="in" style="left:382px;top:929px;width:59px;height:25px;"></div>
<div class="t" id="t143" style="left:384.8px;top:933.6px;">5</div>
<div class="t" id="t144" style="left:240.3px;top:964.6px;letter-spacing:-0.45px;transform:scaleX(0.9732);">SyncOfs</div>
<div class="in" style="left:382px;top:960px;width:59px;height:25px;"></div>
<div class="t" id="t145" style="left:384.8px;top:964.6px;">0</div>
<div class="t" id="t146" style="left:240.3px;top:995.6px;letter-spacing:-0.45px;transform:scaleX(0.979);">FW Start (Hz)</div>
<div class="in" style="left:382px;top:991px;width:59px;height:25px;"></div>
<div class="t" id="t147" style="left:384.8px;top:995.6px;letter-spacing:-0.45px;transform:scaleX(0.9931);">200.0</div>
<div class="t" id="t148" style="left:240.3px;top:1026.6px;letter-spacing:-0.45px;transform:scaleX(0.9703);">FMax (Hz)</div>
<div class="in" style="left:382px;top:1022px;width:59px;height:25px;"></div>
<div class="t" id="t149" style="left:384.8px;top:1026.6px;letter-spacing:-0.45px;transform:scaleX(0.9931);">800.0</div>
<div class="btn" style="left:460px;top:417px;width:80px;height:25px;"></div>
<div class="t" id="t150" style="left:470.1px;top:421.6px;letter-spacing:-0.45px;transform:scaleX(0.9895);">Run For (s)</div>
<div class="btn" style="left:460px;top:448px;width:80px;height:25px;"></div>
<div class="t" id="t151" style="left:474.1px;top:452.6px;letter-spacing:-0.45px;transform:scaleX(0.9833);">Run (10s)</div>
<div class="btn" style="left:460px;top:479px;width:80px;height:25px;"></div>
<div class="t" id="t152" style="left:477.7px;top:483.6px;letter-spacing:-0.45px;transform:scaleX(0.9715);">Run (1s)</div>
<div class="btn" style="left:460px;top:510px;width:80px;height:25px;"></div>
<div class="t" id="t153" style="left:465.15px;top:514.6px;letter-spacing:-0.45px;">Run (100ms)</div>
<div class="btn" style="left:460px;top:541px;width:80px;height:25px;"></div>
<div class="t" id="t154" style="left:468.6px;top:545.6px;letter-spacing:-0.45px;transform:scaleX(0.9957);">Run (10ms)</div>
<div class="btn" style="left:460px;top:572px;width:80px;height:25px;"></div>
<div class="t" id="t155" style="left:487.8px;top:576.6px;letter-spacing:-0.45px;transform:scaleX(0.9919);">Step</div>
<div class="btn" style="left:460px;top:603px;width:80px;height:25px;"></div>
<div class="t" id="t156" style="left:474.1px;top:607.6px;letter-spacing:-0.14px;">Transient</div>
<div class="btn" style="left:460px;top:634px;width:80px;height:25px;"></div>
<div class="t" id="t157" style="left:467.7px;top:638.6px;letter-spacing:-0.398px;">Accel/Coast</div>
<div class="btn" style="left:460px;top:711px;width:80px;height:25px;"></div>
<div class="t" id="t158" style="left:480.3px;top:715.6px;letter-spacing:-0.284px;">Restart</div>
<div class="in" style="left:546px;top:417px;width:85px;height:25px;"></div>
<div class="t" id="t159" style="left:549px;top:421.6px;">5</div>
</body></html>
